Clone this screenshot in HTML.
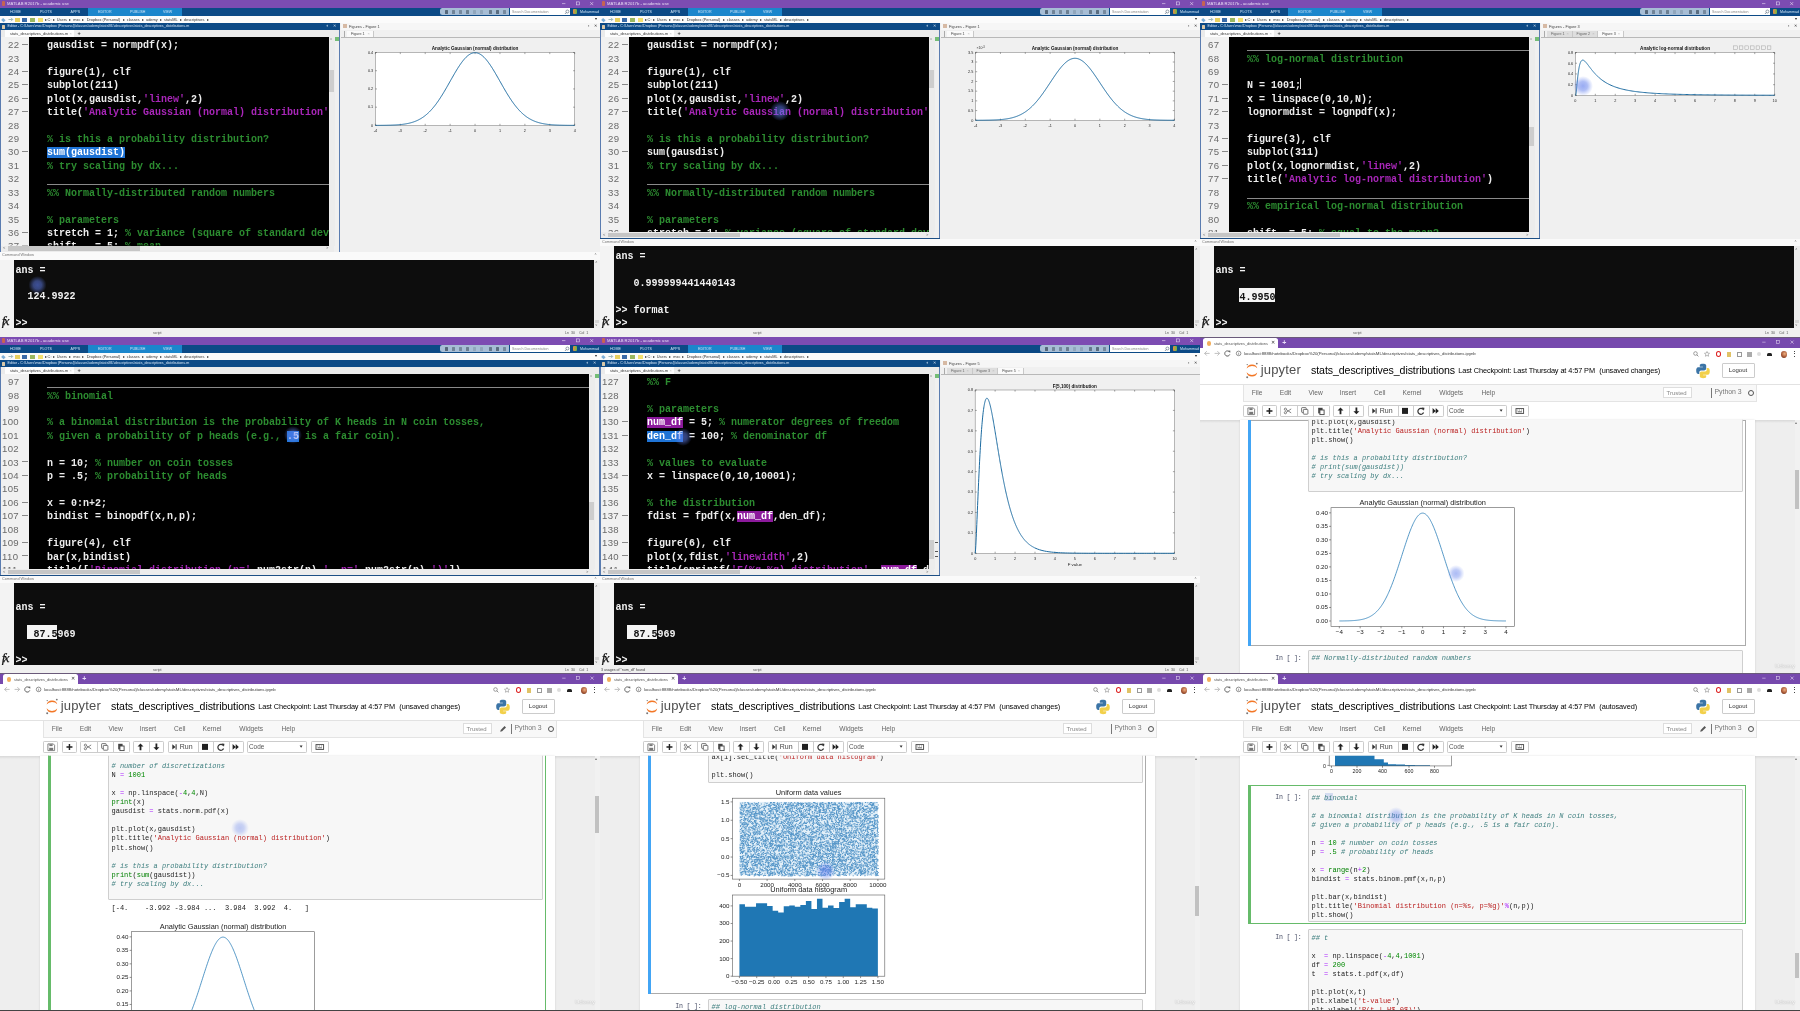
<!DOCTYPE html><html><head><meta charset="utf-8"><style>
*{margin:0;padding:0;box-sizing:border-box}
html,body{width:1800px;height:1011px;overflow:hidden;background:#fff}
.w{color:#ececec}.g{color:#2c8c30}.m{color:#a826b8}
.hl{background:#1f74d6;color:#fff}.pl{background:#8c1a9c;color:#fff}.jv{color:#222}.jc{color:#408080;font-style:italic}.jo{color:#a2f}.jn{color:#080}.js{color:#ba2121}.jb{color:#008000}
</style></head><body><div style="position:absolute;left:0px;top:0px;width:600px;height:337px;overflow:hidden;background:#f0f0f0;will-change:transform"><div style="position:absolute;left:0px;top:0px;width:600px;height:7.6px;background:#7c4cb2"></div><div style="position:absolute;left:1.5px;top:1.3px;width:3.5px;height:5px;background:#d86a3a;border-radius:1px;opacity:.8"></div><div style="position:absolute;left:7px;top:1.6px;font-family:'Liberation Sans',sans-serif;font-size:4.2px;line-height:4.2px;color:#e8dcf4;white-space:pre;">MATLAB R2017b - academic use</div><svg style="position:absolute;left:555px;top:0" width="45" height="8" viewBox="0 0 45 8"><path d="M7 3.6h3.4" stroke="#e8dcf4" stroke-width="0.6"/><rect x="21.3" y="1.9" width="3" height="3" fill="none" stroke="#e8dcf4" stroke-width="0.55"/><path d="M35.2 2.1l3 3M38.2 2.1l-3 3" stroke="#e8dcf4" stroke-width="0.6"/></svg><div style="position:absolute;left:0px;top:7.6px;width:600px;height:8.2px;background:#0c4a86"></div><div style="position:absolute;left:88px;top:7.6px;width:94px;height:8.2px;background:#1b86cc"></div><div style="position:absolute;left:10px;top:11.2px;font-family:'Liberation Sans',sans-serif;font-size:3.6px;line-height:3.6px;color:#cfe3f5;white-space:pre;">HOME</div><div style="position:absolute;left:40px;top:11.2px;font-family:'Liberation Sans',sans-serif;font-size:3.6px;line-height:3.6px;color:#cfe3f5;white-space:pre;">PLOTS</div><div style="position:absolute;left:70.5px;top:11.2px;font-family:'Liberation Sans',sans-serif;font-size:3.6px;line-height:3.6px;color:#cfe3f5;white-space:pre;">APPS</div><div style="position:absolute;left:98px;top:11.2px;font-family:'Liberation Sans',sans-serif;font-size:3.6px;line-height:3.6px;color:#cfe3f5;white-space:pre;">EDITOR</div><div style="position:absolute;left:130px;top:11.2px;font-family:'Liberation Sans',sans-serif;font-size:3.6px;line-height:3.6px;color:#cfe3f5;white-space:pre;">PUBLISH</div><div style="position:absolute;left:163px;top:11.2px;font-family:'Liberation Sans',sans-serif;font-size:3.6px;line-height:3.6px;color:#cfe3f5;white-space:pre;">VIEW</div><div style="position:absolute;left:440px;top:8.4px;width:69px;height:6.8px;background:#a6bdd5;border-radius:2.5px 0 0 2.5px"></div><div style="position:absolute;left:445px;top:10px;width:3.4px;height:3.6px;background:#3a4a5a;opacity:0.75;border-radius:.5px"></div><div style="position:absolute;left:452px;top:10px;width:3.4px;height:3.6px;background:#3a4a5a;opacity:0.5;border-radius:.5px"></div><div style="position:absolute;left:459px;top:10px;width:3.4px;height:3.6px;background:#3a4a5a;opacity:0.45;border-radius:.5px"></div><div style="position:absolute;left:466px;top:10px;width:3.4px;height:3.6px;background:#3a4a5a;opacity:0.55;border-radius:.5px"></div><div style="position:absolute;left:473px;top:10px;width:3.4px;height:3.6px;background:#3a4a5a;opacity:0.2;border-radius:.5px"></div><div style="position:absolute;left:480px;top:10px;width:3.4px;height:3.6px;background:#3a4a5a;opacity:0.2;border-radius:.5px"></div><div style="position:absolute;left:489px;top:10px;width:3.4px;height:3.6px;background:#3a4a5a;opacity:0.6;border-radius:.5px"></div><div style="position:absolute;left:496px;top:10px;width:3.4px;height:3.6px;background:#3a4a5a;opacity:0.7;border-radius:.5px"></div><div style="position:absolute;left:503px;top:10px;width:3.4px;height:3.6px;background:#3a4a5a;opacity:0.45;border-radius:.5px"></div><div style="position:absolute;left:510px;top:8.2px;width:59.5px;height:7px;background:#fff"></div><div style="position:absolute;left:512px;top:10.8px;font-family:'Liberation Sans',sans-serif;font-size:3.6px;line-height:3.6px;color:#8a8a8a;white-space:pre;">Search Documentation</div><svg style="position:absolute;left:564px;top:9px" width="6" height="6" viewBox="0 0 6 6"><circle cx="3.4" cy="2.5" r="1.5" fill="none" stroke="#567" stroke-width="0.6"/><path d="M2.4 3.5L1 4.9" stroke="#567" stroke-width="0.7"/></svg><div style="position:absolute;left:572.5px;top:9.2px;width:4px;height:5px;background:linear-gradient(90deg,#e84 ,#6b4);border-radius:1px"></div><div style="position:absolute;left:580px;top:10.6px;font-family:'Liberation Sans',sans-serif;font-size:3.6px;line-height:3.6px;color:#cfe3f5;white-space:pre;">Mohammad &#9662;</div><div style="position:absolute;left:0px;top:15.8px;width:600px;height:7.5px;background:#fbfbfb"></div><div style="position:absolute;left:1px;top:17.5px;width:4.5px;height:4px;background:#7fb0d8;transform:rotate(45deg) scale(.7)"></div><svg style="position:absolute;left:7.5px;top:17px" width="6" height="5" viewBox="0 0 6 5"><path d="M0.5 2.5h4M3 0.8l1.7 1.7L3 4.2" fill="none" stroke="#8aa" stroke-width="0.8"/></svg><div style="position:absolute;left:15px;top:17.5px;width:5px;height:4px;background:#e8d060"></div><div style="position:absolute;left:22px;top:17.5px;width:5px;height:4.5px;background:#3a6aa8"></div><div style="position:absolute;left:29.5px;top:17.5px;width:5px;height:4px;background:#9ab860"></div><div style="position:absolute;left:37.5px;top:17.5px;width:5px;height:4.2px;background:#f4e070"></div><div style="position:absolute;left:44.5px;top:17.6px;font-family:'Liberation Sans',sans-serif;font-size:3.9px;line-height:3.9px;color:#333;white-space:pre;">&#9656; C: &#9656;  Users  &#9656;  mxc  &#9656;  Dropbox (Personal)  &#9656;  classes  &#9656;  udemy  &#9656;  statsML  &#9656;  descriptives  &#9656;</div><div style="position:absolute;left:595px;top:17.2px;font-family:'Liberation Sans',sans-serif;font-size:4px;line-height:4px;color:#222;white-space:pre;">&#9662;</div><div style="position:absolute;left:0px;top:23.3px;width:340px;height:228.6px;background:#f0f0f0"></div><div style="position:absolute;left:0px;top:23.3px;width:1.0px;height:228.6px;background:#5a7cb0"></div><div style="position:absolute;left:339.0px;top:23.3px;width:1.0px;height:228.6px;background:#5a7cb0"></div><div style="position:absolute;left:0px;top:23.3px;width:340px;height:6.6px;background:#0c4a86"></div><div style="position:absolute;left:1.5px;top:24.5px;width:3.8px;height:4px;background:#d9c8a8;border-radius:.5px"></div><div style="position:absolute;left:7.5px;top:24.7px;font-family:'Liberation Sans',sans-serif;font-size:3.65px;line-height:3.65px;color:#d6e6f6;white-space:pre;">Editor - C:\Users\mxc\Dropbox (Personal)\classes\udemy\statsML\descriptives\stats_descriptives_distributions.m</div><div style="position:absolute;left:326.5px;top:24.2px;font-family:'Liberation Sans',sans-serif;font-size:4.5px;line-height:4.5px;color:#cde;white-space:pre;">&#9680;</div><div style="position:absolute;left:333px;top:24.3px;font-family:'Liberation Sans',sans-serif;font-size:4.2px;line-height:4.2px;color:#cde;white-space:pre;">&#10005;</div><div style="position:absolute;left:1.3px;top:29.9px;width:337.4px;height:7.1px;background:#ebebeb"></div><div style="position:absolute;left:5px;top:30.2px;width:69px;height:6.8px;background:#fdfdfd"></div><div style="position:absolute;left:10px;top:31.6px;font-family:'Liberation Sans',sans-serif;font-size:3.9px;line-height:3.9px;color:#333;white-space:pre;">stats_descriptives_distributions.m</div><div style="position:absolute;left:69.5px;top:31.5px;font-family:'Liberation Sans',sans-serif;font-size:4px;line-height:4px;color:#bbb;white-space:pre;">&#215;</div><div style="position:absolute;left:77.5px;top:30.6px;font-family:'Liberation Sans',sans-serif;font-size:5.5px;line-height:5.5px;color:#333;white-space:pre;font-weight:bold">+</div><div style="position:absolute;left:1.3px;top:37px;width:27.3px;height:208.5px;background:#f1f1f1"></div><div style="position:absolute;left:28.6px;top:37px;width:300.09999999999997px;height:208.5px;background:#000"></div><div style="position:absolute;left:328.7px;top:37px;width:6px;height:208.5px;background:#ececec"></div><div style="position:absolute;left:329.2px;top:70px;width:5px;height:22px;background:#cdcdcd"></div><div style="position:absolute;left:329.9px;top:38px;font-family:'Liberation Sans',sans-serif;font-size:3.5px;line-height:3.5px;color:#777;white-space:pre;">&#708;</div><div style="position:absolute;left:334.7px;top:37px;width:4.2px;height:4.4px;background:#74bd76"></div><div style="position:absolute;left:1.3px;top:245.5px;width:332.4px;height:6px;background:#ececec"></div><div style="position:absolute;left:8px;top:246.1px;width:132px;height:4.6px;background:#c6c6c6"></div><div style="position:absolute;left:3px;top:246.4px;font-family:'Liberation Sans',sans-serif;font-size:4px;line-height:4px;color:#666;white-space:pre;">&#706;</div><div style="position:absolute;left:326px;top:246.4px;font-family:'Liberation Sans',sans-serif;font-size:4px;line-height:4px;color:#666;white-space:pre;">&#707;</div><div style="position:absolute;left:0px;top:251.5px;width:340px;height:0.8px;background:#1d4f85"></div><div style="position:absolute;left:0;top:0;width:600px;height:245.5px;overflow:hidden;clip-path:inset(37px 0 0 0)"><div style="position:absolute;left:8px;top:40.1px;font-family:'Liberation Sans',sans-serif;font-size:9.6px;line-height:9.6px;color:#6a6a6a;white-space:pre;letter-spacing:0.35px">22</div><div style="position:absolute;left:21.5px;top:43.9px;width:6px;height:0.9px;background:#888"></div><div style="position:absolute;left:8px;top:53.52px;font-family:'Liberation Sans',sans-serif;font-size:9.6px;line-height:9.6px;color:#6a6a6a;white-space:pre;letter-spacing:0.35px">23</div><div style="position:absolute;left:8px;top:66.94px;font-family:'Liberation Sans',sans-serif;font-size:9.6px;line-height:9.6px;color:#6a6a6a;white-space:pre;letter-spacing:0.35px">24</div><div style="position:absolute;left:21.5px;top:70.74px;width:6px;height:0.9px;background:#888"></div><div style="position:absolute;left:8px;top:80.36px;font-family:'Liberation Sans',sans-serif;font-size:9.6px;line-height:9.6px;color:#6a6a6a;white-space:pre;letter-spacing:0.35px">25</div><div style="position:absolute;left:21.5px;top:84.16px;width:6px;height:0.9px;background:#888"></div><div style="position:absolute;left:8px;top:93.78px;font-family:'Liberation Sans',sans-serif;font-size:9.6px;line-height:9.6px;color:#6a6a6a;white-space:pre;letter-spacing:0.35px">26</div><div style="position:absolute;left:21.5px;top:97.58px;width:6px;height:0.9px;background:#888"></div><div style="position:absolute;left:8px;top:107.19999999999999px;font-family:'Liberation Sans',sans-serif;font-size:9.6px;line-height:9.6px;color:#6a6a6a;white-space:pre;letter-spacing:0.35px">27</div><div style="position:absolute;left:21.5px;top:110.99999999999999px;width:6px;height:0.9px;background:#888"></div><div style="position:absolute;left:8px;top:120.62px;font-family:'Liberation Sans',sans-serif;font-size:9.6px;line-height:9.6px;color:#6a6a6a;white-space:pre;letter-spacing:0.35px">28</div><div style="position:absolute;left:8px;top:134.04px;font-family:'Liberation Sans',sans-serif;font-size:9.6px;line-height:9.6px;color:#6a6a6a;white-space:pre;letter-spacing:0.35px">29</div><div style="position:absolute;left:8px;top:147.46px;font-family:'Liberation Sans',sans-serif;font-size:9.6px;line-height:9.6px;color:#6a6a6a;white-space:pre;letter-spacing:0.35px">30</div><div style="position:absolute;left:21.5px;top:151.26000000000002px;width:6px;height:0.9px;background:#888"></div><div style="position:absolute;left:8px;top:160.88px;font-family:'Liberation Sans',sans-serif;font-size:9.6px;line-height:9.6px;color:#6a6a6a;white-space:pre;letter-spacing:0.35px">31</div><div style="position:absolute;left:8px;top:174.29999999999998px;font-family:'Liberation Sans',sans-serif;font-size:9.6px;line-height:9.6px;color:#6a6a6a;white-space:pre;letter-spacing:0.35px">32</div><div style="position:absolute;left:8px;top:187.72px;font-family:'Liberation Sans',sans-serif;font-size:9.6px;line-height:9.6px;color:#6a6a6a;white-space:pre;letter-spacing:0.35px">33</div><div style="position:absolute;left:8px;top:201.14px;font-family:'Liberation Sans',sans-serif;font-size:9.6px;line-height:9.6px;color:#6a6a6a;white-space:pre;letter-spacing:0.35px">34</div><div style="position:absolute;left:8px;top:214.56px;font-family:'Liberation Sans',sans-serif;font-size:9.6px;line-height:9.6px;color:#6a6a6a;white-space:pre;letter-spacing:0.35px">35</div><div style="position:absolute;left:8px;top:227.98px;font-family:'Liberation Sans',sans-serif;font-size:9.6px;line-height:9.6px;color:#6a6a6a;white-space:pre;letter-spacing:0.35px">36</div><div style="position:absolute;left:21.5px;top:231.78px;width:6px;height:0.9px;background:#888"></div><div style="position:absolute;left:8px;top:241.4px;font-family:'Liberation Sans',sans-serif;font-size:9.6px;line-height:9.6px;color:#6a6a6a;white-space:pre;letter-spacing:0.35px">37</div><div style="position:absolute;left:21.5px;top:245.20000000000002px;width:6px;height:0.9px;background:#888"></div><div style="position:absolute;left:28.6px;top:37px;width:300.09999999999997px;height:208.5px;overflow:hidden"><div style="position:absolute;left:-28.6px;top:-37px;font-family:'Liberation Mono',monospace;font-size:10px;line-height:13.42px;font-weight:bold;color:#fff"><div style="position:absolute;left:47px;top:39.1px;height:13.42px;white-space:pre"><span class="w">gausdist = normpdf(x);</span></div><div style="position:absolute;left:47px;top:52.52px;height:13.42px;white-space:pre"></div><div style="position:absolute;left:47px;top:65.94px;height:13.42px;white-space:pre"><span class="w">figure(1), clf</span></div><div style="position:absolute;left:47px;top:79.36px;height:13.42px;white-space:pre"><span class="w">subplot(211)</span></div><div style="position:absolute;left:47px;top:92.78px;height:13.42px;white-space:pre"><span class="w">plot(x,gausdist,</span><span class="m">&#x27;linew&#x27;</span><span class="w">,2)</span></div><div style="position:absolute;left:47px;top:106.19999999999999px;height:13.42px;white-space:pre"><span class="w">title(</span><span class="m">&#x27;Analytic Gaussian (normal) distribution&#x27;</span><span class="w">)</span></div><div style="position:absolute;left:47px;top:119.62px;height:13.42px;white-space:pre"></div><div style="position:absolute;left:47px;top:133.04px;height:13.42px;white-space:pre"><span class="g">% is this a probability distribution?</span></div><div style="position:absolute;left:47px;top:146.46px;height:13.42px;white-space:pre"><span class="hl">sum(gausdist)</span></div><div style="position:absolute;left:47px;top:159.88px;height:13.42px;white-space:pre"><span class="g">% try scaling by dx...</span></div><div style="position:absolute;left:47px;top:173.29999999999998px;height:13.42px;white-space:pre"></div><div style="position:absolute;left:47px;top:186.72px;height:13.42px;white-space:pre"><span class="g">%% Normally-distributed random numbers</span></div><div style="position:absolute;left:47px;top:200.14px;height:13.42px;white-space:pre"></div><div style="position:absolute;left:47px;top:213.56px;height:13.42px;white-space:pre"><span class="g">% parameters</span></div><div style="position:absolute;left:47px;top:226.98px;height:13.42px;white-space:pre"><span class="w">stretch = 1; </span><span class="g">% variance (square of standard deviation)</span></div><div style="position:absolute;left:47px;top:240.4px;height:13.42px;white-space:pre"><span class="w">shift   = 5; </span><span class="g">% mean</span></div></div></div></div><div style="position:absolute;left:47px;top:184.3px;width:282px;height:0.9px;background:#8a8a8a"></div><div style="position:absolute;left:0px;top:252.0px;width:600px;height:7.5px;background:#fafafa"></div><div style="position:absolute;left:2px;top:253.9px;font-family:'Liberation Sans',sans-serif;font-size:3.8px;line-height:3.8px;color:#777;white-space:pre;">Command Window</div><div style="position:absolute;left:594.5px;top:252.7px;font-family:'Liberation Sans',sans-serif;font-size:3.5px;line-height:3.5px;color:#777;white-space:pre;">&#708;</div><div style="position:absolute;left:0px;top:259.5px;width:14.2px;height:68.5px;background:#f3f3f3"></div><div style="position:absolute;left:14.2px;top:259.5px;width:580px;height:68.5px;background:#0d0d0d"></div><div style="position:absolute;left:594.2px;top:259.5px;width:5.8px;height:68.5px;background:#ececec"></div><div style="position:absolute;left:594.8px;top:320px;width:4.5px;height:3.2px;background:#d4d4d4"></div><div style="position:absolute;left:595.3px;top:260.7px;font-family:'Liberation Sans',sans-serif;font-size:3.6px;line-height:3.6px;color:#666;white-space:pre;">&#708;</div><div style="position:absolute;left:595.3px;top:324.4px;font-family:'Liberation Sans',sans-serif;font-size:3.6px;line-height:3.6px;color:#666;white-space:pre;">&#709;</div><div style="position:absolute;left:1.8px;top:314.2px;font-family:'Liberation Sans',sans-serif;font-size:13.5px;line-height:13.5px;color:#111;white-space:pre;font-family:'Liberation Serif',serif;letter-spacing:-2.0px;-webkit-text-stroke:0.25px #111"><i>f</i><i>x</i></div><div style="position:absolute;left:0px;top:328px;width:600px;height:8px;background:#f0f0f0"></div><div style="position:absolute;left:0;top:0;width:594px;height:328px;overflow:hidden;clip-path:inset(259.5px 0 0 14px);font-family:'Liberation Mono',monospace;font-size:10px;line-height:13.42px;font-weight:bold;color:#f2f2f2"><div style="position:absolute;left:15.5px;top:263.5px;height:13.42px;white-space:pre">ans =</div><div style="position:absolute;left:15.5px;top:276.92px;height:13.42px;white-space:pre"></div><div style="position:absolute;left:15.5px;top:290.34px;height:13.42px;white-space:pre">  124.9922</div><div style="position:absolute;left:15.5px;top:303.76px;height:13.42px;white-space:pre"></div><div style="position:absolute;left:15.5px;top:317.18px;height:13.42px;white-space:pre">&gt;&gt;</div></div><div style="position:absolute;left:153px;top:332.2px;font-family:'Liberation Sans',sans-serif;font-size:3.6px;line-height:3.6px;color:#555;white-space:pre;">script</div><div style="position:absolute;left:565px;top:332.2px;font-family:'Liberation Sans',sans-serif;font-size:3.6px;line-height:3.6px;color:#555;white-space:pre;">Ln  30    Col  1</div><div style="position:absolute;left:340.5px;top:23.3px;width:259.5px;height:228.0px;background:#f0f0f0"></div><div style="position:absolute;left:340.5px;top:23.3px;width:259.5px;height:6.6px;background:#f6f6f6"></div><div style="position:absolute;left:343.0px;top:24.3px;width:3.5px;height:4.2px;background:#c9a080;opacity:.7"></div><div style="position:absolute;left:349.0px;top:24.8px;font-family:'Liberation Sans',sans-serif;font-size:3.9px;line-height:3.9px;color:#444;white-space:pre;">Figures - Figure 1</div><div style="position:absolute;left:588.0px;top:24.3px;font-family:'Liberation Sans',sans-serif;font-size:4.2px;line-height:4.2px;color:#777;white-space:pre;">&#9680;</div><div style="position:absolute;left:594.0px;top:24.4px;font-family:'Liberation Sans',sans-serif;font-size:4px;line-height:4px;color:#333;white-space:pre;">&#10005;</div><div style="position:absolute;left:340.5px;top:36.8px;width:259.5px;height:0.7px;background:#b8b8b8"></div><div style="position:absolute;left:344.0px;top:31.4px;width:0.6px;height:5.2px;background:#aaa"></div><div style="position:absolute;left:347.0px;top:30.6px;width:26.5px;height:6.4px;background:#fafafa;border-right:0.6px solid #c8c8c8"></div><div style="position:absolute;left:351.0px;top:32.6px;font-family:'Liberation Sans',sans-serif;font-size:3.7px;line-height:3.7px;color:#444;white-space:pre;">Figure 1</div><div style="position:absolute;left:367.5px;top:32.4px;font-family:'Liberation Sans',sans-serif;font-size:4px;line-height:4px;color:#bbb;white-space:pre;">&#215;</div><svg style="position:absolute;left:0;top:0" width="600" height="251.3" viewBox="0 0 600 251.3"><rect x="375.4" y="52.5" width="199.3" height="72.9" fill="#fff" stroke="#8a8a8a" stroke-width="0.6"/><line x1="375.40" y1="125.4" x2="375.40" y2="123.80000000000001" stroke="#333" stroke-width="0.45"/><line x1="375.40" y1="52.5" x2="375.40" y2="54.1" stroke="#333" stroke-width="0.45"/><text x="375.40" y="131.70000000000002" font-size="3.8" font-family="Liberation Sans" fill="#222" text-anchor="middle">-4</text><line x1="400.31" y1="125.4" x2="400.31" y2="123.80000000000001" stroke="#333" stroke-width="0.45"/><line x1="400.31" y1="52.5" x2="400.31" y2="54.1" stroke="#333" stroke-width="0.45"/><text x="400.31" y="131.70000000000002" font-size="3.8" font-family="Liberation Sans" fill="#222" text-anchor="middle">-3</text><line x1="425.22" y1="125.4" x2="425.22" y2="123.80000000000001" stroke="#333" stroke-width="0.45"/><line x1="425.22" y1="52.5" x2="425.22" y2="54.1" stroke="#333" stroke-width="0.45"/><text x="425.22" y="131.70000000000002" font-size="3.8" font-family="Liberation Sans" fill="#222" text-anchor="middle">-2</text><line x1="450.14" y1="125.4" x2="450.14" y2="123.80000000000001" stroke="#333" stroke-width="0.45"/><line x1="450.14" y1="52.5" x2="450.14" y2="54.1" stroke="#333" stroke-width="0.45"/><text x="450.14" y="131.70000000000002" font-size="3.8" font-family="Liberation Sans" fill="#222" text-anchor="middle">-1</text><line x1="475.05" y1="125.4" x2="475.05" y2="123.80000000000001" stroke="#333" stroke-width="0.45"/><line x1="475.05" y1="52.5" x2="475.05" y2="54.1" stroke="#333" stroke-width="0.45"/><text x="475.05" y="131.70000000000002" font-size="3.8" font-family="Liberation Sans" fill="#222" text-anchor="middle">0</text><line x1="499.96" y1="125.4" x2="499.96" y2="123.80000000000001" stroke="#333" stroke-width="0.45"/><line x1="499.96" y1="52.5" x2="499.96" y2="54.1" stroke="#333" stroke-width="0.45"/><text x="499.96" y="131.70000000000002" font-size="3.8" font-family="Liberation Sans" fill="#222" text-anchor="middle">1</text><line x1="524.88" y1="125.4" x2="524.88" y2="123.80000000000001" stroke="#333" stroke-width="0.45"/><line x1="524.88" y1="52.5" x2="524.88" y2="54.1" stroke="#333" stroke-width="0.45"/><text x="524.88" y="131.70000000000002" font-size="3.8" font-family="Liberation Sans" fill="#222" text-anchor="middle">2</text><line x1="549.79" y1="125.4" x2="549.79" y2="123.80000000000001" stroke="#333" stroke-width="0.45"/><line x1="549.79" y1="52.5" x2="549.79" y2="54.1" stroke="#333" stroke-width="0.45"/><text x="549.79" y="131.70000000000002" font-size="3.8" font-family="Liberation Sans" fill="#222" text-anchor="middle">3</text><line x1="574.70" y1="125.4" x2="574.70" y2="123.80000000000001" stroke="#333" stroke-width="0.45"/><line x1="574.70" y1="52.5" x2="574.70" y2="54.1" stroke="#333" stroke-width="0.45"/><text x="574.70" y="131.70000000000002" font-size="3.8" font-family="Liberation Sans" fill="#222" text-anchor="middle">4</text><line x1="375.4" y1="125.40" x2="377.0" y2="125.40" stroke="#333" stroke-width="0.45"/><line x1="574.7" y1="125.40" x2="573.1" y2="125.40" stroke="#333" stroke-width="0.45"/><text x="373.2" y="126.70" font-size="3.8" font-family="Liberation Sans" fill="#222" text-anchor="end">0</text><line x1="375.4" y1="107.18" x2="377.0" y2="107.18" stroke="#333" stroke-width="0.45"/><line x1="574.7" y1="107.18" x2="573.1" y2="107.18" stroke="#333" stroke-width="0.45"/><text x="373.2" y="108.48" font-size="3.8" font-family="Liberation Sans" fill="#222" text-anchor="end">0.1</text><line x1="375.4" y1="88.95" x2="377.0" y2="88.95" stroke="#333" stroke-width="0.45"/><line x1="574.7" y1="88.95" x2="573.1" y2="88.95" stroke="#333" stroke-width="0.45"/><text x="373.2" y="90.25" font-size="3.8" font-family="Liberation Sans" fill="#222" text-anchor="end">0.2</text><line x1="375.4" y1="70.73" x2="377.0" y2="70.73" stroke="#333" stroke-width="0.45"/><line x1="574.7" y1="70.73" x2="573.1" y2="70.73" stroke="#333" stroke-width="0.45"/><text x="373.2" y="72.03" font-size="3.8" font-family="Liberation Sans" fill="#222" text-anchor="end">0.3</text><line x1="375.4" y1="52.50" x2="377.0" y2="52.50" stroke="#333" stroke-width="0.45"/><line x1="574.7" y1="52.50" x2="573.1" y2="52.50" stroke="#333" stroke-width="0.45"/><text x="373.2" y="53.80" font-size="3.8" font-family="Liberation Sans" fill="#222" text-anchor="end">0.4</text><text x="475.04999999999995" y="50.2" font-size="4.65" font-weight="bold" font-family="Liberation Sans" fill="#111" text-anchor="middle">Analytic Gaussian (normal) distribution</text><path d="M375.40,125.38 L375.90,125.37 L376.40,125.37 L376.89,125.37 L377.39,125.37 L377.89,125.36 L378.39,125.36 L378.89,125.36 L379.39,125.35 L379.88,125.35 L380.38,125.35 L380.88,125.34 L381.38,125.34 L381.88,125.33 L382.38,125.33 L382.87,125.32 L383.37,125.32 L383.87,125.31 L384.37,125.30 L384.87,125.30 L385.36,125.29 L385.86,125.28 L386.36,125.27 L386.86,125.26 L387.36,125.25 L387.86,125.24 L388.35,125.23 L388.85,125.22 L389.35,125.20 L389.85,125.19 L390.35,125.18 L390.85,125.16 L391.34,125.14 L391.84,125.13 L392.34,125.11 L392.84,125.09 L393.34,125.06 L393.84,125.04 L394.33,125.02 L394.83,124.99 L395.33,124.97 L395.83,124.94 L396.33,124.91 L396.82,124.87 L397.32,124.84 L397.82,124.80 L398.32,124.77 L398.82,124.73 L399.32,124.68 L399.81,124.64 L400.31,124.59 L400.81,124.54 L401.31,124.49 L401.81,124.43 L402.31,124.38 L402.80,124.32 L403.30,124.25 L403.80,124.18 L404.30,124.11 L404.80,124.04 L405.29,123.96 L405.79,123.87 L406.29,123.79 L406.79,123.70 L407.29,123.60 L407.79,123.50 L408.28,123.40 L408.78,123.29 L409.28,123.17 L409.78,123.05 L410.28,122.92 L410.78,122.79 L411.27,122.66 L411.77,122.51 L412.27,122.36 L412.77,122.21 L413.27,122.04 L413.77,121.87 L414.26,121.70 L414.76,121.51 L415.26,121.32 L415.76,121.12 L416.26,120.91 L416.75,120.69 L417.25,120.47 L417.75,120.24 L418.25,120.00 L418.75,119.74 L419.25,119.48 L419.74,119.21 L420.24,118.93 L420.74,118.65 L421.24,118.35 L421.74,118.04 L422.24,117.72 L422.73,117.38 L423.23,117.04 L423.73,116.69 L424.23,116.32 L424.73,115.95 L425.22,115.56 L425.72,115.16 L426.22,114.75 L426.72,114.33 L427.22,113.89 L427.72,113.44 L428.21,112.98 L428.71,112.51 L429.21,112.02 L429.71,111.52 L430.21,111.01 L430.71,110.49 L431.20,109.95 L431.70,109.40 L432.20,108.84 L432.70,108.26 L433.20,107.67 L433.70,107.07 L434.19,106.45 L434.69,105.83 L435.19,105.18 L435.69,104.53 L436.19,103.87 L436.68,103.19 L437.18,102.50 L437.68,101.80 L438.18,101.08 L438.68,100.36 L439.18,99.62 L439.67,98.87 L440.17,98.11 L440.67,97.34 L441.17,96.56 L441.67,95.77 L442.17,94.98 L442.66,94.17 L443.16,93.35 L443.66,92.53 L444.16,91.70 L444.66,90.86 L445.15,90.01 L445.65,89.16 L446.15,88.30 L446.65,87.44 L447.15,86.57 L447.65,85.70 L448.14,84.82 L448.64,83.94 L449.14,83.06 L449.64,82.18 L450.14,81.30 L450.64,80.42 L451.13,79.54 L451.63,78.66 L452.13,77.78 L452.63,76.91 L453.13,76.04 L453.63,75.17 L454.12,74.31 L454.62,73.45 L455.12,72.60 L455.62,71.76 L456.12,70.93 L456.61,70.11 L457.11,69.29 L457.61,68.49 L458.11,67.70 L458.61,66.92 L459.11,66.16 L459.60,65.41 L460.10,64.67 L460.60,63.95 L461.10,63.24 L461.60,62.56 L462.10,61.89 L462.59,61.24 L463.09,60.60 L463.59,59.99 L464.09,59.40 L464.59,58.83 L465.08,58.28 L465.58,57.76 L466.08,57.25 L466.58,56.78 L467.08,56.32 L467.58,55.89 L468.07,55.49 L468.57,55.11 L469.07,54.76 L469.57,54.43 L470.07,54.13 L470.57,53.86 L471.06,53.62 L471.56,53.40 L472.06,53.21 L472.56,53.06 L473.06,52.93 L473.56,52.82 L474.05,52.75 L474.55,52.71 L475.05,52.69 L475.55,52.71 L476.05,52.75 L476.54,52.82 L477.04,52.93 L477.54,53.06 L478.04,53.21 L478.54,53.40 L479.04,53.62 L479.53,53.86 L480.03,54.13 L480.53,54.43 L481.03,54.76 L481.53,55.11 L482.03,55.49 L482.52,55.89 L483.02,56.32 L483.52,56.78 L484.02,57.25 L484.52,57.76 L485.01,58.28 L485.51,58.83 L486.01,59.40 L486.51,59.99 L487.01,60.60 L487.51,61.24 L488.00,61.89 L488.50,62.56 L489.00,63.24 L489.50,63.95 L490.00,64.67 L490.50,65.41 L490.99,66.16 L491.49,66.92 L491.99,67.70 L492.49,68.49 L492.99,69.29 L493.49,70.11 L493.98,70.93 L494.48,71.76 L494.98,72.60 L495.48,73.45 L495.98,74.31 L496.47,75.17 L496.97,76.04 L497.47,76.91 L497.97,77.78 L498.47,78.66 L498.97,79.54 L499.46,80.42 L499.96,81.30 L500.46,82.18 L500.96,83.06 L501.46,83.94 L501.96,84.82 L502.45,85.70 L502.95,86.57 L503.45,87.44 L503.95,88.30 L504.45,89.16 L504.94,90.01 L505.44,90.86 L505.94,91.70 L506.44,92.53 L506.94,93.35 L507.44,94.17 L507.93,94.98 L508.43,95.77 L508.93,96.56 L509.43,97.34 L509.93,98.11 L510.43,98.87 L510.92,99.62 L511.42,100.36 L511.92,101.08 L512.42,101.80 L512.92,102.50 L513.42,103.19 L513.91,103.87 L514.41,104.53 L514.91,105.18 L515.41,105.83 L515.91,106.45 L516.40,107.07 L516.90,107.67 L517.40,108.26 L517.90,108.84 L518.40,109.40 L518.90,109.95 L519.39,110.49 L519.89,111.01 L520.39,111.52 L520.89,112.02 L521.39,112.51 L521.89,112.98 L522.38,113.44 L522.88,113.89 L523.38,114.33 L523.88,114.75 L524.38,115.16 L524.88,115.56 L525.37,115.95 L525.87,116.32 L526.37,116.69 L526.87,117.04 L527.37,117.38 L527.86,117.72 L528.36,118.04 L528.86,118.35 L529.36,118.65 L529.86,118.93 L530.36,119.21 L530.85,119.48 L531.35,119.74 L531.85,120.00 L532.35,120.24 L532.85,120.47 L533.35,120.69 L533.84,120.91 L534.34,121.12 L534.84,121.32 L535.34,121.51 L535.84,121.70 L536.33,121.87 L536.83,122.04 L537.33,122.21 L537.83,122.36 L538.33,122.51 L538.83,122.66 L539.32,122.79 L539.82,122.92 L540.32,123.05 L540.82,123.17 L541.32,123.29 L541.82,123.40 L542.31,123.50 L542.81,123.60 L543.31,123.70 L543.81,123.79 L544.31,123.87 L544.80,123.96 L545.30,124.04 L545.80,124.11 L546.30,124.18 L546.80,124.25 L547.30,124.32 L547.79,124.38 L548.29,124.43 L548.79,124.49 L549.29,124.54 L549.79,124.59 L550.29,124.64 L550.78,124.68 L551.28,124.73 L551.78,124.77 L552.28,124.80 L552.78,124.84 L553.28,124.87 L553.77,124.91 L554.27,124.94 L554.77,124.97 L555.27,124.99 L555.77,125.02 L556.26,125.04 L556.76,125.06 L557.26,125.09 L557.76,125.11 L558.26,125.13 L558.76,125.14 L559.25,125.16 L559.75,125.18 L560.25,125.19 L560.75,125.20 L561.25,125.22 L561.75,125.23 L562.24,125.24 L562.74,125.25 L563.24,125.26 L563.74,125.27 L564.24,125.28 L564.74,125.29 L565.23,125.30 L565.73,125.30 L566.23,125.31 L566.73,125.32 L567.23,125.32 L567.72,125.33 L568.22,125.33 L568.72,125.34 L569.22,125.34 L569.72,125.35 L570.22,125.35 L570.71,125.35 L571.21,125.36 L571.71,125.36 L572.21,125.36 L572.71,125.37 L573.21,125.37 L573.70,125.37 L574.20,125.37 L574.70,125.38" fill="none" stroke="#1c6aa0" stroke-width="1.0" stroke-linejoin="round"/></svg><div style="position:absolute;left:28.4px;top:275.9px;width:18.2px;height:18.2px;border-radius:50%;background:radial-gradient(circle closest-side,rgba(90,120,235,0.62) 0%,rgba(95,125,235,0.50) 45%,rgba(100,130,240,0.22) 75%,rgba(100,130,240,0) 100%)"></div></div><div style="position:absolute;left:600px;top:0px;width:600px;height:337px;overflow:hidden;background:#f0f0f0;will-change:transform"><div style="position:absolute;left:0px;top:0px;width:600px;height:7.6px;background:#7c4cb2"></div><div style="position:absolute;left:1.5px;top:1.3px;width:3.5px;height:5px;background:#d86a3a;border-radius:1px;opacity:.8"></div><div style="position:absolute;left:7px;top:1.6px;font-family:'Liberation Sans',sans-serif;font-size:4.2px;line-height:4.2px;color:#e8dcf4;white-space:pre;">MATLAB R2017b - academic use</div><svg style="position:absolute;left:555px;top:0" width="45" height="8" viewBox="0 0 45 8"><path d="M7 3.6h3.4" stroke="#e8dcf4" stroke-width="0.6"/><rect x="21.3" y="1.9" width="3" height="3" fill="none" stroke="#e8dcf4" stroke-width="0.55"/><path d="M35.2 2.1l3 3M38.2 2.1l-3 3" stroke="#e8dcf4" stroke-width="0.6"/></svg><div style="position:absolute;left:0px;top:7.6px;width:600px;height:8.2px;background:#0c4a86"></div><div style="position:absolute;left:88px;top:7.6px;width:94px;height:8.2px;background:#1b86cc"></div><div style="position:absolute;left:10px;top:11.2px;font-family:'Liberation Sans',sans-serif;font-size:3.6px;line-height:3.6px;color:#cfe3f5;white-space:pre;">HOME</div><div style="position:absolute;left:40px;top:11.2px;font-family:'Liberation Sans',sans-serif;font-size:3.6px;line-height:3.6px;color:#cfe3f5;white-space:pre;">PLOTS</div><div style="position:absolute;left:70.5px;top:11.2px;font-family:'Liberation Sans',sans-serif;font-size:3.6px;line-height:3.6px;color:#cfe3f5;white-space:pre;">APPS</div><div style="position:absolute;left:98px;top:11.2px;font-family:'Liberation Sans',sans-serif;font-size:3.6px;line-height:3.6px;color:#cfe3f5;white-space:pre;">EDITOR</div><div style="position:absolute;left:130px;top:11.2px;font-family:'Liberation Sans',sans-serif;font-size:3.6px;line-height:3.6px;color:#cfe3f5;white-space:pre;">PUBLISH</div><div style="position:absolute;left:163px;top:11.2px;font-family:'Liberation Sans',sans-serif;font-size:3.6px;line-height:3.6px;color:#cfe3f5;white-space:pre;">VIEW</div><div style="position:absolute;left:440px;top:8.4px;width:69px;height:6.8px;background:#a6bdd5;border-radius:2.5px 0 0 2.5px"></div><div style="position:absolute;left:445px;top:10px;width:3.4px;height:3.6px;background:#3a4a5a;opacity:0.75;border-radius:.5px"></div><div style="position:absolute;left:452px;top:10px;width:3.4px;height:3.6px;background:#3a4a5a;opacity:0.5;border-radius:.5px"></div><div style="position:absolute;left:459px;top:10px;width:3.4px;height:3.6px;background:#3a4a5a;opacity:0.45;border-radius:.5px"></div><div style="position:absolute;left:466px;top:10px;width:3.4px;height:3.6px;background:#3a4a5a;opacity:0.55;border-radius:.5px"></div><div style="position:absolute;left:473px;top:10px;width:3.4px;height:3.6px;background:#3a4a5a;opacity:0.2;border-radius:.5px"></div><div style="position:absolute;left:480px;top:10px;width:3.4px;height:3.6px;background:#3a4a5a;opacity:0.2;border-radius:.5px"></div><div style="position:absolute;left:489px;top:10px;width:3.4px;height:3.6px;background:#3a4a5a;opacity:0.6;border-radius:.5px"></div><div style="position:absolute;left:496px;top:10px;width:3.4px;height:3.6px;background:#3a4a5a;opacity:0.7;border-radius:.5px"></div><div style="position:absolute;left:503px;top:10px;width:3.4px;height:3.6px;background:#3a4a5a;opacity:0.45;border-radius:.5px"></div><div style="position:absolute;left:510px;top:8.2px;width:59.5px;height:7px;background:#fff"></div><div style="position:absolute;left:512px;top:10.8px;font-family:'Liberation Sans',sans-serif;font-size:3.6px;line-height:3.6px;color:#8a8a8a;white-space:pre;">Search Documentation</div><svg style="position:absolute;left:564px;top:9px" width="6" height="6" viewBox="0 0 6 6"><circle cx="3.4" cy="2.5" r="1.5" fill="none" stroke="#567" stroke-width="0.6"/><path d="M2.4 3.5L1 4.9" stroke="#567" stroke-width="0.7"/></svg><div style="position:absolute;left:572.5px;top:9.2px;width:4px;height:5px;background:linear-gradient(90deg,#e84 ,#6b4);border-radius:1px"></div><div style="position:absolute;left:580px;top:10.6px;font-family:'Liberation Sans',sans-serif;font-size:3.6px;line-height:3.6px;color:#cfe3f5;white-space:pre;">Mohammad &#9662;</div><div style="position:absolute;left:0px;top:15.8px;width:600px;height:7.5px;background:#fbfbfb"></div><div style="position:absolute;left:1px;top:17.5px;width:4.5px;height:4px;background:#7fb0d8;transform:rotate(45deg) scale(.7)"></div><svg style="position:absolute;left:7.5px;top:17px" width="6" height="5" viewBox="0 0 6 5"><path d="M0.5 2.5h4M3 0.8l1.7 1.7L3 4.2" fill="none" stroke="#8aa" stroke-width="0.8"/></svg><div style="position:absolute;left:15px;top:17.5px;width:5px;height:4px;background:#e8d060"></div><div style="position:absolute;left:22px;top:17.5px;width:5px;height:4.5px;background:#3a6aa8"></div><div style="position:absolute;left:29.5px;top:17.5px;width:5px;height:4px;background:#9ab860"></div><div style="position:absolute;left:37.5px;top:17.5px;width:5px;height:4.2px;background:#f4e070"></div><div style="position:absolute;left:44.5px;top:17.6px;font-family:'Liberation Sans',sans-serif;font-size:3.9px;line-height:3.9px;color:#333;white-space:pre;">&#9656; C: &#9656;  Users  &#9656;  mxc  &#9656;  Dropbox (Personal)  &#9656;  classes  &#9656;  udemy  &#9656;  statsML  &#9656;  descriptives  &#9656;</div><div style="position:absolute;left:595px;top:17.2px;font-family:'Liberation Sans',sans-serif;font-size:4px;line-height:4px;color:#222;white-space:pre;">&#9662;</div><div style="position:absolute;left:0px;top:23.3px;width:340px;height:215.2px;background:#f0f0f0"></div><div style="position:absolute;left:0px;top:23.3px;width:1.0px;height:215.2px;background:#5a7cb0"></div><div style="position:absolute;left:339.0px;top:23.3px;width:1.0px;height:215.2px;background:#5a7cb0"></div><div style="position:absolute;left:0px;top:23.3px;width:340px;height:6.6px;background:#0c4a86"></div><div style="position:absolute;left:1.5px;top:24.5px;width:3.8px;height:4px;background:#d9c8a8;border-radius:.5px"></div><div style="position:absolute;left:7.5px;top:24.7px;font-family:'Liberation Sans',sans-serif;font-size:3.65px;line-height:3.65px;color:#d6e6f6;white-space:pre;">Editor - C:\Users\mxc\Dropbox (Personal)\classes\udemy\statsML\descriptives\stats_descriptives_distributions.m</div><div style="position:absolute;left:326.5px;top:24.2px;font-family:'Liberation Sans',sans-serif;font-size:4.5px;line-height:4.5px;color:#cde;white-space:pre;">&#9680;</div><div style="position:absolute;left:333px;top:24.3px;font-family:'Liberation Sans',sans-serif;font-size:4.2px;line-height:4.2px;color:#cde;white-space:pre;">&#10005;</div><div style="position:absolute;left:1.3px;top:29.9px;width:337.4px;height:7.1px;background:#ebebeb"></div><div style="position:absolute;left:5px;top:30.2px;width:69px;height:6.8px;background:#fdfdfd"></div><div style="position:absolute;left:10px;top:31.6px;font-family:'Liberation Sans',sans-serif;font-size:3.9px;line-height:3.9px;color:#333;white-space:pre;">stats_descriptives_distributions.m</div><div style="position:absolute;left:69.5px;top:31.5px;font-family:'Liberation Sans',sans-serif;font-size:4px;line-height:4px;color:#bbb;white-space:pre;">&#215;</div><div style="position:absolute;left:77.5px;top:30.6px;font-family:'Liberation Sans',sans-serif;font-size:5.5px;line-height:5.5px;color:#333;white-space:pre;font-weight:bold">+</div><div style="position:absolute;left:1.3px;top:37px;width:27.3px;height:195.1px;background:#f1f1f1"></div><div style="position:absolute;left:28.6px;top:37px;width:300.09999999999997px;height:195.1px;background:#000"></div><div style="position:absolute;left:328.7px;top:37px;width:6px;height:195.1px;background:#ececec"></div><div style="position:absolute;left:329.2px;top:70px;width:5px;height:18px;background:#cdcdcd"></div><div style="position:absolute;left:329.9px;top:38px;font-family:'Liberation Sans',sans-serif;font-size:3.5px;line-height:3.5px;color:#777;white-space:pre;">&#708;</div><div style="position:absolute;left:334.7px;top:37px;width:4.2px;height:4.4px;background:#74bd76"></div><div style="position:absolute;left:1.3px;top:232.1px;width:332.4px;height:6px;background:#ececec"></div><div style="position:absolute;left:8px;top:232.7px;width:132px;height:4.6px;background:#c6c6c6"></div><div style="position:absolute;left:3px;top:233.0px;font-family:'Liberation Sans',sans-serif;font-size:4px;line-height:4px;color:#666;white-space:pre;">&#706;</div><div style="position:absolute;left:326px;top:233.0px;font-family:'Liberation Sans',sans-serif;font-size:4px;line-height:4px;color:#666;white-space:pre;">&#707;</div><div style="position:absolute;left:0px;top:238.1px;width:340px;height:0.8px;background:#1d4f85"></div><div style="position:absolute;left:0;top:0;width:600px;height:232.1px;overflow:hidden;clip-path:inset(37px 0 0 0)"><div style="position:absolute;left:8px;top:40.1px;font-family:'Liberation Sans',sans-serif;font-size:9.6px;line-height:9.6px;color:#6a6a6a;white-space:pre;letter-spacing:0.35px">22</div><div style="position:absolute;left:21.5px;top:43.9px;width:6px;height:0.9px;background:#888"></div><div style="position:absolute;left:8px;top:53.52px;font-family:'Liberation Sans',sans-serif;font-size:9.6px;line-height:9.6px;color:#6a6a6a;white-space:pre;letter-spacing:0.35px">23</div><div style="position:absolute;left:8px;top:66.94px;font-family:'Liberation Sans',sans-serif;font-size:9.6px;line-height:9.6px;color:#6a6a6a;white-space:pre;letter-spacing:0.35px">24</div><div style="position:absolute;left:21.5px;top:70.74px;width:6px;height:0.9px;background:#888"></div><div style="position:absolute;left:8px;top:80.36px;font-family:'Liberation Sans',sans-serif;font-size:9.6px;line-height:9.6px;color:#6a6a6a;white-space:pre;letter-spacing:0.35px">25</div><div style="position:absolute;left:21.5px;top:84.16px;width:6px;height:0.9px;background:#888"></div><div style="position:absolute;left:8px;top:93.78px;font-family:'Liberation Sans',sans-serif;font-size:9.6px;line-height:9.6px;color:#6a6a6a;white-space:pre;letter-spacing:0.35px">26</div><div style="position:absolute;left:21.5px;top:97.58px;width:6px;height:0.9px;background:#888"></div><div style="position:absolute;left:8px;top:107.19999999999999px;font-family:'Liberation Sans',sans-serif;font-size:9.6px;line-height:9.6px;color:#6a6a6a;white-space:pre;letter-spacing:0.35px">27</div><div style="position:absolute;left:21.5px;top:110.99999999999999px;width:6px;height:0.9px;background:#888"></div><div style="position:absolute;left:8px;top:120.62px;font-family:'Liberation Sans',sans-serif;font-size:9.6px;line-height:9.6px;color:#6a6a6a;white-space:pre;letter-spacing:0.35px">28</div><div style="position:absolute;left:8px;top:134.04px;font-family:'Liberation Sans',sans-serif;font-size:9.6px;line-height:9.6px;color:#6a6a6a;white-space:pre;letter-spacing:0.35px">29</div><div style="position:absolute;left:8px;top:147.46px;font-family:'Liberation Sans',sans-serif;font-size:9.6px;line-height:9.6px;color:#6a6a6a;white-space:pre;letter-spacing:0.35px">30</div><div style="position:absolute;left:21.5px;top:151.26000000000002px;width:6px;height:0.9px;background:#888"></div><div style="position:absolute;left:8px;top:160.88px;font-family:'Liberation Sans',sans-serif;font-size:9.6px;line-height:9.6px;color:#6a6a6a;white-space:pre;letter-spacing:0.35px">31</div><div style="position:absolute;left:8px;top:174.29999999999998px;font-family:'Liberation Sans',sans-serif;font-size:9.6px;line-height:9.6px;color:#6a6a6a;white-space:pre;letter-spacing:0.35px">32</div><div style="position:absolute;left:8px;top:187.72px;font-family:'Liberation Sans',sans-serif;font-size:9.6px;line-height:9.6px;color:#6a6a6a;white-space:pre;letter-spacing:0.35px">33</div><div style="position:absolute;left:8px;top:201.14px;font-family:'Liberation Sans',sans-serif;font-size:9.6px;line-height:9.6px;color:#6a6a6a;white-space:pre;letter-spacing:0.35px">34</div><div style="position:absolute;left:8px;top:214.56px;font-family:'Liberation Sans',sans-serif;font-size:9.6px;line-height:9.6px;color:#6a6a6a;white-space:pre;letter-spacing:0.35px">35</div><div style="position:absolute;left:8px;top:227.98px;font-family:'Liberation Sans',sans-serif;font-size:9.6px;line-height:9.6px;color:#6a6a6a;white-space:pre;letter-spacing:0.35px">36</div><div style="position:absolute;left:21.5px;top:231.78px;width:6px;height:0.9px;background:#888"></div><div style="position:absolute;left:28.6px;top:37px;width:300.09999999999997px;height:195.1px;overflow:hidden"><div style="position:absolute;left:-28.6px;top:-37px;font-family:'Liberation Mono',monospace;font-size:10px;line-height:13.42px;font-weight:bold;color:#fff"><div style="position:absolute;left:47px;top:39.1px;height:13.42px;white-space:pre"><span class="w">gausdist = normpdf(x);</span></div><div style="position:absolute;left:47px;top:52.52px;height:13.42px;white-space:pre"></div><div style="position:absolute;left:47px;top:65.94px;height:13.42px;white-space:pre"><span class="w">figure(1), clf</span></div><div style="position:absolute;left:47px;top:79.36px;height:13.42px;white-space:pre"><span class="w">subplot(211)</span></div><div style="position:absolute;left:47px;top:92.78px;height:13.42px;white-space:pre"><span class="w">plot(x,gausdist,</span><span class="m">&#x27;linew&#x27;</span><span class="w">,2)</span></div><div style="position:absolute;left:47px;top:106.19999999999999px;height:13.42px;white-space:pre"><span class="w">title(</span><span class="m">&#x27;Analytic Gaussian (normal) distribution&#x27;</span><span class="w">)</span></div><div style="position:absolute;left:47px;top:119.62px;height:13.42px;white-space:pre"></div><div style="position:absolute;left:47px;top:133.04px;height:13.42px;white-space:pre"><span class="g">% is this a probability distribution?</span></div><div style="position:absolute;left:47px;top:146.46px;height:13.42px;white-space:pre"><span class="w">sum(gausdist)</span></div><div style="position:absolute;left:47px;top:159.88px;height:13.42px;white-space:pre"><span class="g">% try scaling by dx...</span></div><div style="position:absolute;left:47px;top:173.29999999999998px;height:13.42px;white-space:pre"></div><div style="position:absolute;left:47px;top:186.72px;height:13.42px;white-space:pre"><span class="g">%% Normally-distributed random numbers</span></div><div style="position:absolute;left:47px;top:200.14px;height:13.42px;white-space:pre"></div><div style="position:absolute;left:47px;top:213.56px;height:13.42px;white-space:pre"><span class="g">% parameters</span></div><div style="position:absolute;left:47px;top:226.98px;height:13.42px;white-space:pre"><span class="w">stretch = 1; </span><span class="g">% variance (square of standard deviation)</span></div></div></div></div><div style="position:absolute;left:47px;top:184.3px;width:282px;height:0.9px;background:#8a8a8a"></div><div style="position:absolute;left:340.5px;top:23.3px;width:259.5px;height:215.29999999999998px;background:#f0f0f0"></div><div style="position:absolute;left:340.5px;top:23.3px;width:259.5px;height:6.6px;background:#f6f6f6"></div><div style="position:absolute;left:343.0px;top:24.3px;width:3.5px;height:4.2px;background:#c9a080;opacity:.7"></div><div style="position:absolute;left:349.0px;top:24.8px;font-family:'Liberation Sans',sans-serif;font-size:3.9px;line-height:3.9px;color:#444;white-space:pre;">Figures - Figure 1</div><div style="position:absolute;left:588.0px;top:24.3px;font-family:'Liberation Sans',sans-serif;font-size:4.2px;line-height:4.2px;color:#777;white-space:pre;">&#9680;</div><div style="position:absolute;left:594.0px;top:24.4px;font-family:'Liberation Sans',sans-serif;font-size:4px;line-height:4px;color:#333;white-space:pre;">&#10005;</div><div style="position:absolute;left:340.5px;top:36.8px;width:259.5px;height:0.7px;background:#b8b8b8"></div><div style="position:absolute;left:344.0px;top:31.4px;width:0.6px;height:5.2px;background:#aaa"></div><div style="position:absolute;left:347.0px;top:30.6px;width:26.5px;height:6.4px;background:#fafafa;border-right:0.6px solid #c8c8c8"></div><div style="position:absolute;left:351.0px;top:32.6px;font-family:'Liberation Sans',sans-serif;font-size:3.7px;line-height:3.7px;color:#444;white-space:pre;">Figure 1</div><div style="position:absolute;left:367.5px;top:32.4px;font-family:'Liberation Sans',sans-serif;font-size:4px;line-height:4px;color:#bbb;white-space:pre;">&#215;</div><svg style="position:absolute;left:0;top:0" width="600" height="238.6" viewBox="0 0 600 238.6"><rect x="375.6" y="52.3" width="198.8" height="68.0" fill="#fff" stroke="#8a8a8a" stroke-width="0.6"/><line x1="375.60" y1="120.3" x2="375.60" y2="118.7" stroke="#333" stroke-width="0.45"/><line x1="375.60" y1="52.3" x2="375.60" y2="53.9" stroke="#333" stroke-width="0.45"/><text x="375.60" y="126.6" font-size="3.8" font-family="Liberation Sans" fill="#222" text-anchor="middle">-4</text><line x1="400.45" y1="120.3" x2="400.45" y2="118.7" stroke="#333" stroke-width="0.45"/><line x1="400.45" y1="52.3" x2="400.45" y2="53.9" stroke="#333" stroke-width="0.45"/><text x="400.45" y="126.6" font-size="3.8" font-family="Liberation Sans" fill="#222" text-anchor="middle">-3</text><line x1="425.30" y1="120.3" x2="425.30" y2="118.7" stroke="#333" stroke-width="0.45"/><line x1="425.30" y1="52.3" x2="425.30" y2="53.9" stroke="#333" stroke-width="0.45"/><text x="425.30" y="126.6" font-size="3.8" font-family="Liberation Sans" fill="#222" text-anchor="middle">-2</text><line x1="450.15" y1="120.3" x2="450.15" y2="118.7" stroke="#333" stroke-width="0.45"/><line x1="450.15" y1="52.3" x2="450.15" y2="53.9" stroke="#333" stroke-width="0.45"/><text x="450.15" y="126.6" font-size="3.8" font-family="Liberation Sans" fill="#222" text-anchor="middle">-1</text><line x1="475.00" y1="120.3" x2="475.00" y2="118.7" stroke="#333" stroke-width="0.45"/><line x1="475.00" y1="52.3" x2="475.00" y2="53.9" stroke="#333" stroke-width="0.45"/><text x="475.00" y="126.6" font-size="3.8" font-family="Liberation Sans" fill="#222" text-anchor="middle">0</text><line x1="499.85" y1="120.3" x2="499.85" y2="118.7" stroke="#333" stroke-width="0.45"/><line x1="499.85" y1="52.3" x2="499.85" y2="53.9" stroke="#333" stroke-width="0.45"/><text x="499.85" y="126.6" font-size="3.8" font-family="Liberation Sans" fill="#222" text-anchor="middle">1</text><line x1="524.70" y1="120.3" x2="524.70" y2="118.7" stroke="#333" stroke-width="0.45"/><line x1="524.70" y1="52.3" x2="524.70" y2="53.9" stroke="#333" stroke-width="0.45"/><text x="524.70" y="126.6" font-size="3.8" font-family="Liberation Sans" fill="#222" text-anchor="middle">2</text><line x1="549.55" y1="120.3" x2="549.55" y2="118.7" stroke="#333" stroke-width="0.45"/><line x1="549.55" y1="52.3" x2="549.55" y2="53.9" stroke="#333" stroke-width="0.45"/><text x="549.55" y="126.6" font-size="3.8" font-family="Liberation Sans" fill="#222" text-anchor="middle">3</text><line x1="574.40" y1="120.3" x2="574.40" y2="118.7" stroke="#333" stroke-width="0.45"/><line x1="574.40" y1="52.3" x2="574.40" y2="53.9" stroke="#333" stroke-width="0.45"/><text x="574.40" y="126.6" font-size="3.8" font-family="Liberation Sans" fill="#222" text-anchor="middle">4</text><line x1="375.6" y1="120.30" x2="377.20000000000005" y2="120.30" stroke="#333" stroke-width="0.45"/><line x1="574.4000000000001" y1="120.30" x2="572.8000000000001" y2="120.30" stroke="#333" stroke-width="0.45"/><text x="373.40000000000003" y="121.60" font-size="3.8" font-family="Liberation Sans" fill="#222" text-anchor="end">0</text><line x1="375.6" y1="110.59" x2="377.20000000000005" y2="110.59" stroke="#333" stroke-width="0.45"/><line x1="574.4000000000001" y1="110.59" x2="572.8000000000001" y2="110.59" stroke="#333" stroke-width="0.45"/><text x="373.40000000000003" y="111.89" font-size="3.8" font-family="Liberation Sans" fill="#222" text-anchor="end">0.5</text><line x1="375.6" y1="100.87" x2="377.20000000000005" y2="100.87" stroke="#333" stroke-width="0.45"/><line x1="574.4000000000001" y1="100.87" x2="572.8000000000001" y2="100.87" stroke="#333" stroke-width="0.45"/><text x="373.40000000000003" y="102.17" font-size="3.8" font-family="Liberation Sans" fill="#222" text-anchor="end">1</text><line x1="375.6" y1="91.16" x2="377.20000000000005" y2="91.16" stroke="#333" stroke-width="0.45"/><line x1="574.4000000000001" y1="91.16" x2="572.8000000000001" y2="91.16" stroke="#333" stroke-width="0.45"/><text x="373.40000000000003" y="92.46" font-size="3.8" font-family="Liberation Sans" fill="#222" text-anchor="end">1.5</text><line x1="375.6" y1="81.44" x2="377.20000000000005" y2="81.44" stroke="#333" stroke-width="0.45"/><line x1="574.4000000000001" y1="81.44" x2="572.8000000000001" y2="81.44" stroke="#333" stroke-width="0.45"/><text x="373.40000000000003" y="82.74" font-size="3.8" font-family="Liberation Sans" fill="#222" text-anchor="end">2</text><line x1="375.6" y1="71.73" x2="377.20000000000005" y2="71.73" stroke="#333" stroke-width="0.45"/><line x1="574.4000000000001" y1="71.73" x2="572.8000000000001" y2="71.73" stroke="#333" stroke-width="0.45"/><text x="373.40000000000003" y="73.03" font-size="3.8" font-family="Liberation Sans" fill="#222" text-anchor="end">2.5</text><line x1="375.6" y1="62.01" x2="377.20000000000005" y2="62.01" stroke="#333" stroke-width="0.45"/><line x1="574.4000000000001" y1="62.01" x2="572.8000000000001" y2="62.01" stroke="#333" stroke-width="0.45"/><text x="373.40000000000003" y="63.31" font-size="3.8" font-family="Liberation Sans" fill="#222" text-anchor="end">3</text><line x1="375.6" y1="52.30" x2="377.20000000000005" y2="52.30" stroke="#333" stroke-width="0.45"/><line x1="574.4000000000001" y1="52.30" x2="572.8000000000001" y2="52.30" stroke="#333" stroke-width="0.45"/><text x="373.40000000000003" y="53.60" font-size="3.8" font-family="Liberation Sans" fill="#222" text-anchor="end">3.5</text><text x="475.0" y="50.0" font-size="4.65" font-weight="bold" font-family="Liberation Sans" fill="#111" text-anchor="middle">Analytic Gaussian (normal) distribution</text><text x="376.6" y="49.099999999999994" font-size="3.5" font-family="Liberation Sans" fill="#333">&#215;10<tspan font-size='2.6' dy='-1.5'>-3</tspan></text><path d="M375.60,120.28 L376.10,120.28 L376.59,120.28 L377.09,120.27 L377.59,120.27 L378.09,120.27 L378.58,120.27 L379.08,120.26 L379.58,120.26 L380.07,120.26 L380.57,120.25 L381.07,120.25 L381.56,120.25 L382.06,120.24 L382.56,120.24 L383.06,120.23 L383.55,120.23 L384.05,120.22 L384.55,120.22 L385.04,120.21 L385.54,120.20 L386.04,120.20 L386.53,120.19 L387.03,120.18 L387.53,120.17 L388.03,120.16 L388.52,120.15 L389.02,120.14 L389.52,120.13 L390.01,120.12 L390.51,120.11 L391.01,120.10 L391.50,120.08 L392.00,120.07 L392.50,120.05 L393.00,120.03 L393.49,120.01 L393.99,119.99 L394.49,119.97 L394.98,119.95 L395.48,119.93 L395.98,119.91 L396.47,119.88 L396.97,119.85 L397.47,119.82 L397.97,119.79 L398.46,119.76 L398.96,119.73 L399.46,119.69 L399.95,119.65 L400.45,119.61 L400.95,119.57 L401.44,119.52 L401.94,119.48 L402.44,119.43 L402.94,119.37 L403.43,119.32 L403.93,119.26 L404.43,119.20 L404.92,119.14 L405.42,119.07 L405.92,119.00 L406.41,118.93 L406.91,118.85 L407.41,118.77 L407.91,118.68 L408.40,118.59 L408.90,118.50 L409.40,118.40 L409.89,118.30 L410.39,118.19 L410.89,118.08 L411.38,117.96 L411.88,117.84 L412.38,117.71 L412.88,117.58 L413.37,117.44 L413.87,117.29 L414.37,117.14 L414.86,116.98 L415.36,116.82 L415.86,116.65 L416.35,116.47 L416.85,116.29 L417.35,116.10 L417.85,115.90 L418.34,115.69 L418.84,115.48 L419.34,115.25 L419.83,115.02 L420.33,114.79 L420.83,114.54 L421.32,114.28 L421.82,114.02 L422.32,113.75 L422.82,113.46 L423.31,113.17 L423.81,112.87 L424.31,112.56 L424.80,112.24 L425.30,111.91 L425.80,111.57 L426.29,111.22 L426.79,110.86 L427.29,110.48 L427.79,110.10 L428.28,109.71 L428.78,109.30 L429.28,108.89 L429.77,108.47 L430.27,108.03 L430.77,107.58 L431.26,107.12 L431.76,106.65 L432.26,106.17 L432.75,105.68 L433.25,105.18 L433.75,104.67 L434.25,104.14 L434.74,103.61 L435.24,103.06 L435.74,102.50 L436.23,101.93 L436.73,101.36 L437.23,100.77 L437.73,100.17 L438.22,99.56 L438.72,98.94 L439.22,98.31 L439.71,97.68 L440.21,97.03 L440.71,96.37 L441.20,95.71 L441.70,95.03 L442.20,94.35 L442.70,93.66 L443.19,92.97 L443.69,92.27 L444.19,91.56 L444.68,90.84 L445.18,90.12 L445.68,89.39 L446.17,88.66 L446.67,87.92 L447.17,87.18 L447.67,86.44 L448.16,85.69 L448.66,84.94 L449.16,84.19 L449.65,83.44 L450.15,82.69 L450.65,81.94 L451.14,81.19 L451.64,80.44 L452.14,79.69 L452.64,78.94 L453.13,78.20 L453.63,77.46 L454.13,76.73 L454.62,76.00 L455.12,75.27 L455.62,74.56 L456.11,73.85 L456.61,73.14 L457.11,72.45 L457.61,71.77 L458.10,71.09 L458.60,70.43 L459.10,69.78 L459.59,69.14 L460.09,68.51 L460.59,67.89 L461.08,67.29 L461.58,66.71 L462.08,66.13 L462.58,65.58 L463.07,65.04 L463.57,64.52 L464.07,64.01 L464.56,63.53 L465.06,63.06 L465.56,62.61 L466.05,62.18 L466.55,61.78 L467.05,61.39 L467.55,61.02 L468.04,60.68 L468.54,60.35 L469.04,60.05 L469.53,59.78 L470.03,59.52 L470.53,59.29 L471.02,59.08 L471.52,58.90 L472.02,58.74 L472.52,58.60 L473.01,58.49 L473.51,58.40 L474.01,58.34 L474.50,58.31 L475.00,58.29 L475.50,58.31 L475.99,58.34 L476.49,58.40 L476.99,58.49 L477.49,58.60 L477.98,58.74 L478.48,58.90 L478.98,59.08 L479.47,59.29 L479.97,59.52 L480.47,59.78 L480.96,60.05 L481.46,60.35 L481.96,60.68 L482.46,61.02 L482.95,61.39 L483.45,61.78 L483.95,62.18 L484.44,62.61 L484.94,63.06 L485.44,63.53 L485.93,64.01 L486.43,64.52 L486.93,65.04 L487.43,65.58 L487.92,66.13 L488.42,66.71 L488.92,67.29 L489.41,67.89 L489.91,68.51 L490.41,69.14 L490.90,69.78 L491.40,70.43 L491.90,71.09 L492.40,71.77 L492.89,72.45 L493.39,73.14 L493.89,73.85 L494.38,74.56 L494.88,75.27 L495.38,76.00 L495.87,76.73 L496.37,77.46 L496.87,78.20 L497.37,78.94 L497.86,79.69 L498.36,80.44 L498.86,81.19 L499.35,81.94 L499.85,82.69 L500.35,83.44 L500.84,84.19 L501.34,84.94 L501.84,85.69 L502.34,86.44 L502.83,87.18 L503.33,87.92 L503.83,88.66 L504.32,89.39 L504.82,90.12 L505.32,90.84 L505.81,91.56 L506.31,92.27 L506.81,92.97 L507.31,93.66 L507.80,94.35 L508.30,95.03 L508.80,95.71 L509.29,96.37 L509.79,97.03 L510.29,97.68 L510.78,98.31 L511.28,98.94 L511.78,99.56 L512.28,100.17 L512.77,100.77 L513.27,101.36 L513.77,101.93 L514.26,102.50 L514.76,103.06 L515.26,103.61 L515.75,104.14 L516.25,104.67 L516.75,105.18 L517.25,105.68 L517.74,106.17 L518.24,106.65 L518.74,107.12 L519.23,107.58 L519.73,108.03 L520.23,108.47 L520.72,108.89 L521.22,109.30 L521.72,109.71 L522.22,110.10 L522.71,110.48 L523.21,110.86 L523.71,111.22 L524.20,111.57 L524.70,111.91 L525.20,112.24 L525.69,112.56 L526.19,112.87 L526.69,113.17 L527.19,113.46 L527.68,113.75 L528.18,114.02 L528.68,114.28 L529.17,114.54 L529.67,114.79 L530.17,115.02 L530.66,115.25 L531.16,115.48 L531.66,115.69 L532.15,115.90 L532.65,116.10 L533.15,116.29 L533.65,116.47 L534.14,116.65 L534.64,116.82 L535.14,116.98 L535.63,117.14 L536.13,117.29 L536.63,117.44 L537.12,117.58 L537.62,117.71 L538.12,117.84 L538.62,117.96 L539.11,118.08 L539.61,118.19 L540.11,118.30 L540.60,118.40 L541.10,118.50 L541.60,118.59 L542.10,118.68 L542.59,118.77 L543.09,118.85 L543.59,118.93 L544.08,119.00 L544.58,119.07 L545.08,119.14 L545.57,119.20 L546.07,119.26 L546.57,119.32 L547.07,119.37 L547.56,119.43 L548.06,119.48 L548.56,119.52 L549.05,119.57 L549.55,119.61 L550.05,119.65 L550.54,119.69 L551.04,119.73 L551.54,119.76 L552.04,119.79 L552.53,119.82 L553.03,119.85 L553.53,119.88 L554.02,119.91 L554.52,119.93 L555.02,119.95 L555.51,119.97 L556.01,119.99 L556.51,120.01 L557.00,120.03 L557.50,120.05 L558.00,120.07 L558.50,120.08 L558.99,120.10 L559.49,120.11 L559.99,120.12 L560.48,120.13 L560.98,120.14 L561.48,120.15 L561.98,120.16 L562.47,120.17 L562.97,120.18 L563.47,120.19 L563.96,120.20 L564.46,120.20 L564.96,120.21 L565.45,120.22 L565.95,120.22 L566.45,120.23 L566.95,120.23 L567.44,120.24 L567.94,120.24 L568.44,120.25 L568.93,120.25 L569.43,120.25 L569.93,120.26 L570.42,120.26 L570.92,120.26 L571.42,120.27 L571.92,120.27 L572.41,120.27 L572.91,120.27 L573.41,120.28 L573.90,120.28 L574.40,120.28" fill="none" stroke="#1c6aa0" stroke-width="1.0" stroke-linejoin="round"/></svg><div style="position:absolute;left:0px;top:238.8px;width:600px;height:7.5px;background:#fafafa"></div><div style="position:absolute;left:2px;top:240.70000000000002px;font-family:'Liberation Sans',sans-serif;font-size:3.8px;line-height:3.8px;color:#777;white-space:pre;">Command Window</div><div style="position:absolute;left:594.5px;top:239.5px;font-family:'Liberation Sans',sans-serif;font-size:3.5px;line-height:3.5px;color:#777;white-space:pre;">&#708;</div><div style="position:absolute;left:0px;top:246.3px;width:14.2px;height:81.69999999999999px;background:#f3f3f3"></div><div style="position:absolute;left:14.2px;top:246.3px;width:580px;height:81.69999999999999px;background:#0d0d0d"></div><div style="position:absolute;left:594.2px;top:246.3px;width:5.8px;height:81.69999999999999px;background:#ececec"></div><div style="position:absolute;left:594.8px;top:320px;width:4.5px;height:3.2px;background:#d4d4d4"></div><div style="position:absolute;left:595.3px;top:247.5px;font-family:'Liberation Sans',sans-serif;font-size:3.6px;line-height:3.6px;color:#666;white-space:pre;">&#708;</div><div style="position:absolute;left:595.3px;top:324.4px;font-family:'Liberation Sans',sans-serif;font-size:3.6px;line-height:3.6px;color:#666;white-space:pre;">&#709;</div><div style="position:absolute;left:1.8px;top:314.2px;font-family:'Liberation Sans',sans-serif;font-size:13.5px;line-height:13.5px;color:#111;white-space:pre;font-family:'Liberation Serif',serif;letter-spacing:-2.0px;-webkit-text-stroke:0.25px #111"><i>f</i><i>x</i></div><div style="position:absolute;left:0px;top:328px;width:600px;height:8px;background:#f0f0f0"></div><div style="position:absolute;left:0;top:0;width:594px;height:328px;overflow:hidden;clip-path:inset(246.3px 0 0 14px);font-family:'Liberation Mono',monospace;font-size:10px;line-height:13.42px;font-weight:bold;color:#f2f2f2"><div style="position:absolute;left:15.5px;top:250.3px;height:13.42px;white-space:pre">ans =</div><div style="position:absolute;left:15.5px;top:263.72px;height:13.42px;white-space:pre"></div><div style="position:absolute;left:15.5px;top:277.14px;height:13.42px;white-space:pre">   0.999999441440143</div><div style="position:absolute;left:15.5px;top:290.56px;height:13.42px;white-space:pre"></div><div style="position:absolute;left:15.5px;top:303.98px;height:13.42px;white-space:pre">&gt;&gt; format</div><div style="position:absolute;left:15.5px;top:317.4px;height:13.42px;white-space:pre">&gt;&gt;</div></div><div style="position:absolute;left:153px;top:332.2px;font-family:'Liberation Sans',sans-serif;font-size:3.6px;line-height:3.6px;color:#555;white-space:pre;">script</div><div style="position:absolute;left:565px;top:332.2px;font-family:'Liberation Sans',sans-serif;font-size:3.6px;line-height:3.6px;color:#555;white-space:pre;">Ln  30    Col  1</div><div style="position:absolute;left:169.6px;top:100.6px;width:20.8px;height:20.8px;border-radius:50%;background:radial-gradient(circle closest-side,rgba(90,120,235,0.62) 0%,rgba(95,125,235,0.50) 45%,rgba(100,130,240,0.22) 75%,rgba(100,130,240,0) 100%)"></div></div><div style="position:absolute;left:1200px;top:0px;width:600px;height:337px;overflow:hidden;background:#f0f0f0;will-change:transform"><div style="position:absolute;left:0px;top:0px;width:600px;height:7.6px;background:#7c4cb2"></div><div style="position:absolute;left:1.5px;top:1.3px;width:3.5px;height:5px;background:#d86a3a;border-radius:1px;opacity:.8"></div><div style="position:absolute;left:7px;top:1.6px;font-family:'Liberation Sans',sans-serif;font-size:4.2px;line-height:4.2px;color:#e8dcf4;white-space:pre;">MATLAB R2017b - academic use</div><svg style="position:absolute;left:555px;top:0" width="45" height="8" viewBox="0 0 45 8"><path d="M7 3.6h3.4" stroke="#e8dcf4" stroke-width="0.6"/><rect x="21.3" y="1.9" width="3" height="3" fill="none" stroke="#e8dcf4" stroke-width="0.55"/><path d="M35.2 2.1l3 3M38.2 2.1l-3 3" stroke="#e8dcf4" stroke-width="0.6"/></svg><div style="position:absolute;left:0px;top:7.6px;width:600px;height:8.2px;background:#0c4a86"></div><div style="position:absolute;left:88px;top:7.6px;width:94px;height:8.2px;background:#1b86cc"></div><div style="position:absolute;left:10px;top:11.2px;font-family:'Liberation Sans',sans-serif;font-size:3.6px;line-height:3.6px;color:#cfe3f5;white-space:pre;">HOME</div><div style="position:absolute;left:40px;top:11.2px;font-family:'Liberation Sans',sans-serif;font-size:3.6px;line-height:3.6px;color:#cfe3f5;white-space:pre;">PLOTS</div><div style="position:absolute;left:70.5px;top:11.2px;font-family:'Liberation Sans',sans-serif;font-size:3.6px;line-height:3.6px;color:#cfe3f5;white-space:pre;">APPS</div><div style="position:absolute;left:98px;top:11.2px;font-family:'Liberation Sans',sans-serif;font-size:3.6px;line-height:3.6px;color:#cfe3f5;white-space:pre;">EDITOR</div><div style="position:absolute;left:130px;top:11.2px;font-family:'Liberation Sans',sans-serif;font-size:3.6px;line-height:3.6px;color:#cfe3f5;white-space:pre;">PUBLISH</div><div style="position:absolute;left:163px;top:11.2px;font-family:'Liberation Sans',sans-serif;font-size:3.6px;line-height:3.6px;color:#cfe3f5;white-space:pre;">VIEW</div><div style="position:absolute;left:440px;top:8.4px;width:69px;height:6.8px;background:#a6bdd5;border-radius:2.5px 0 0 2.5px"></div><div style="position:absolute;left:445px;top:10px;width:3.4px;height:3.6px;background:#3a4a5a;opacity:0.75;border-radius:.5px"></div><div style="position:absolute;left:452px;top:10px;width:3.4px;height:3.6px;background:#3a4a5a;opacity:0.5;border-radius:.5px"></div><div style="position:absolute;left:459px;top:10px;width:3.4px;height:3.6px;background:#3a4a5a;opacity:0.45;border-radius:.5px"></div><div style="position:absolute;left:466px;top:10px;width:3.4px;height:3.6px;background:#3a4a5a;opacity:0.55;border-radius:.5px"></div><div style="position:absolute;left:473px;top:10px;width:3.4px;height:3.6px;background:#3a4a5a;opacity:0.2;border-radius:.5px"></div><div style="position:absolute;left:480px;top:10px;width:3.4px;height:3.6px;background:#3a4a5a;opacity:0.2;border-radius:.5px"></div><div style="position:absolute;left:489px;top:10px;width:3.4px;height:3.6px;background:#3a4a5a;opacity:0.6;border-radius:.5px"></div><div style="position:absolute;left:496px;top:10px;width:3.4px;height:3.6px;background:#3a4a5a;opacity:0.7;border-radius:.5px"></div><div style="position:absolute;left:503px;top:10px;width:3.4px;height:3.6px;background:#3a4a5a;opacity:0.45;border-radius:.5px"></div><div style="position:absolute;left:510px;top:8.2px;width:59.5px;height:7px;background:#fff"></div><div style="position:absolute;left:512px;top:10.8px;font-family:'Liberation Sans',sans-serif;font-size:3.6px;line-height:3.6px;color:#8a8a8a;white-space:pre;">Search Documentation</div><svg style="position:absolute;left:564px;top:9px" width="6" height="6" viewBox="0 0 6 6"><circle cx="3.4" cy="2.5" r="1.5" fill="none" stroke="#567" stroke-width="0.6"/><path d="M2.4 3.5L1 4.9" stroke="#567" stroke-width="0.7"/></svg><div style="position:absolute;left:572.5px;top:9.2px;width:4px;height:5px;background:linear-gradient(90deg,#e84 ,#6b4);border-radius:1px"></div><div style="position:absolute;left:580px;top:10.6px;font-family:'Liberation Sans',sans-serif;font-size:3.6px;line-height:3.6px;color:#cfe3f5;white-space:pre;">Mohammad &#9662;</div><div style="position:absolute;left:0px;top:15.8px;width:600px;height:7.5px;background:#fbfbfb"></div><div style="position:absolute;left:1px;top:17.5px;width:4.5px;height:4px;background:#7fb0d8;transform:rotate(45deg) scale(.7)"></div><svg style="position:absolute;left:7.5px;top:17px" width="6" height="5" viewBox="0 0 6 5"><path d="M0.5 2.5h4M3 0.8l1.7 1.7L3 4.2" fill="none" stroke="#8aa" stroke-width="0.8"/></svg><div style="position:absolute;left:15px;top:17.5px;width:5px;height:4px;background:#e8d060"></div><div style="position:absolute;left:22px;top:17.5px;width:5px;height:4.5px;background:#3a6aa8"></div><div style="position:absolute;left:29.5px;top:17.5px;width:5px;height:4px;background:#9ab860"></div><div style="position:absolute;left:37.5px;top:17.5px;width:5px;height:4.2px;background:#f4e070"></div><div style="position:absolute;left:44.5px;top:17.6px;font-family:'Liberation Sans',sans-serif;font-size:3.9px;line-height:3.9px;color:#333;white-space:pre;">&#9656; C: &#9656;  Users  &#9656;  mxc  &#9656;  Dropbox (Personal)  &#9656;  classes  &#9656;  udemy  &#9656;  statsML  &#9656;  descriptives  &#9656;</div><div style="position:absolute;left:595px;top:17.2px;font-family:'Liberation Sans',sans-serif;font-size:4px;line-height:4px;color:#222;white-space:pre;">&#9662;</div><div style="position:absolute;left:0px;top:23.3px;width:340px;height:215.2px;background:#f0f0f0"></div><div style="position:absolute;left:0px;top:23.3px;width:1.0px;height:215.2px;background:#5a7cb0"></div><div style="position:absolute;left:339.0px;top:23.3px;width:1.0px;height:215.2px;background:#5a7cb0"></div><div style="position:absolute;left:0px;top:23.3px;width:340px;height:6.6px;background:#0c4a86"></div><div style="position:absolute;left:1.5px;top:24.5px;width:3.8px;height:4px;background:#d9c8a8;border-radius:.5px"></div><div style="position:absolute;left:7.5px;top:24.7px;font-family:'Liberation Sans',sans-serif;font-size:3.65px;line-height:3.65px;color:#d6e6f6;white-space:pre;">Editor - C:\Users\mxc\Dropbox (Personal)\classes\udemy\statsML\descriptives\stats_descriptives_distributions.m</div><div style="position:absolute;left:326.5px;top:24.2px;font-family:'Liberation Sans',sans-serif;font-size:4.5px;line-height:4.5px;color:#cde;white-space:pre;">&#9680;</div><div style="position:absolute;left:333px;top:24.3px;font-family:'Liberation Sans',sans-serif;font-size:4.2px;line-height:4.2px;color:#cde;white-space:pre;">&#10005;</div><div style="position:absolute;left:1.3px;top:29.9px;width:337.4px;height:7.1px;background:#ebebeb"></div><div style="position:absolute;left:5px;top:30.2px;width:69px;height:6.8px;background:#fdfdfd"></div><div style="position:absolute;left:10px;top:31.6px;font-family:'Liberation Sans',sans-serif;font-size:3.9px;line-height:3.9px;color:#333;white-space:pre;">stats_descriptives_distributions.m</div><div style="position:absolute;left:69.5px;top:31.5px;font-family:'Liberation Sans',sans-serif;font-size:4px;line-height:4px;color:#bbb;white-space:pre;">&#215;</div><div style="position:absolute;left:77.5px;top:30.6px;font-family:'Liberation Sans',sans-serif;font-size:5.5px;line-height:5.5px;color:#333;white-space:pre;font-weight:bold">+</div><div style="position:absolute;left:1.3px;top:37px;width:27.3px;height:195.1px;background:#f1f1f1"></div><div style="position:absolute;left:28.6px;top:37px;width:300.09999999999997px;height:195.1px;background:#000"></div><div style="position:absolute;left:328.7px;top:37px;width:6px;height:195.1px;background:#ececec"></div><div style="position:absolute;left:329.2px;top:127px;width:5px;height:19px;background:#cdcdcd"></div><div style="position:absolute;left:329.9px;top:38px;font-family:'Liberation Sans',sans-serif;font-size:3.5px;line-height:3.5px;color:#777;white-space:pre;">&#708;</div><div style="position:absolute;left:334.7px;top:37px;width:4.2px;height:4.4px;background:#74bd76"></div><div style="position:absolute;left:1.3px;top:232.1px;width:332.4px;height:6px;background:#ececec"></div><div style="position:absolute;left:8px;top:232.7px;width:132px;height:4.6px;background:#c6c6c6"></div><div style="position:absolute;left:3px;top:233.0px;font-family:'Liberation Sans',sans-serif;font-size:4px;line-height:4px;color:#666;white-space:pre;">&#706;</div><div style="position:absolute;left:326px;top:233.0px;font-family:'Liberation Sans',sans-serif;font-size:4px;line-height:4px;color:#666;white-space:pre;">&#707;</div><div style="position:absolute;left:0px;top:238.1px;width:340px;height:0.8px;background:#1d4f85"></div><div style="position:absolute;left:0;top:0;width:600px;height:232.1px;overflow:hidden;clip-path:inset(37px 0 0 0)"><div style="position:absolute;left:8px;top:40.1px;font-family:'Liberation Sans',sans-serif;font-size:9.6px;line-height:9.6px;color:#6a6a6a;white-space:pre;letter-spacing:0.35px">67</div><div style="position:absolute;left:8px;top:53.52px;font-family:'Liberation Sans',sans-serif;font-size:9.6px;line-height:9.6px;color:#6a6a6a;white-space:pre;letter-spacing:0.35px">68</div><div style="position:absolute;left:8px;top:66.94px;font-family:'Liberation Sans',sans-serif;font-size:9.6px;line-height:9.6px;color:#6a6a6a;white-space:pre;letter-spacing:0.35px">69</div><div style="position:absolute;left:8px;top:80.36px;font-family:'Liberation Sans',sans-serif;font-size:9.6px;line-height:9.6px;color:#6a6a6a;white-space:pre;letter-spacing:0.35px">70</div><div style="position:absolute;left:21.5px;top:84.16px;width:6px;height:0.9px;background:#888"></div><div style="position:absolute;left:8px;top:93.78px;font-family:'Liberation Sans',sans-serif;font-size:9.6px;line-height:9.6px;color:#6a6a6a;white-space:pre;letter-spacing:0.35px">71</div><div style="position:absolute;left:21.5px;top:97.58px;width:6px;height:0.9px;background:#888"></div><div style="position:absolute;left:8px;top:107.19999999999999px;font-family:'Liberation Sans',sans-serif;font-size:9.6px;line-height:9.6px;color:#6a6a6a;white-space:pre;letter-spacing:0.35px">72</div><div style="position:absolute;left:21.5px;top:110.99999999999999px;width:6px;height:0.9px;background:#888"></div><div style="position:absolute;left:8px;top:120.62px;font-family:'Liberation Sans',sans-serif;font-size:9.6px;line-height:9.6px;color:#6a6a6a;white-space:pre;letter-spacing:0.35px">73</div><div style="position:absolute;left:8px;top:134.04px;font-family:'Liberation Sans',sans-serif;font-size:9.6px;line-height:9.6px;color:#6a6a6a;white-space:pre;letter-spacing:0.35px">74</div><div style="position:absolute;left:21.5px;top:137.84px;width:6px;height:0.9px;background:#888"></div><div style="position:absolute;left:8px;top:147.46px;font-family:'Liberation Sans',sans-serif;font-size:9.6px;line-height:9.6px;color:#6a6a6a;white-space:pre;letter-spacing:0.35px">75</div><div style="position:absolute;left:21.5px;top:151.26000000000002px;width:6px;height:0.9px;background:#888"></div><div style="position:absolute;left:8px;top:160.88px;font-family:'Liberation Sans',sans-serif;font-size:9.6px;line-height:9.6px;color:#6a6a6a;white-space:pre;letter-spacing:0.35px">76</div><div style="position:absolute;left:21.5px;top:164.68px;width:6px;height:0.9px;background:#888"></div><div style="position:absolute;left:8px;top:174.29999999999998px;font-family:'Liberation Sans',sans-serif;font-size:9.6px;line-height:9.6px;color:#6a6a6a;white-space:pre;letter-spacing:0.35px">77</div><div style="position:absolute;left:21.5px;top:178.1px;width:6px;height:0.9px;background:#888"></div><div style="position:absolute;left:8px;top:187.72px;font-family:'Liberation Sans',sans-serif;font-size:9.6px;line-height:9.6px;color:#6a6a6a;white-space:pre;letter-spacing:0.35px">78</div><div style="position:absolute;left:8px;top:201.14px;font-family:'Liberation Sans',sans-serif;font-size:9.6px;line-height:9.6px;color:#6a6a6a;white-space:pre;letter-spacing:0.35px">79</div><div style="position:absolute;left:8px;top:214.56px;font-family:'Liberation Sans',sans-serif;font-size:9.6px;line-height:9.6px;color:#6a6a6a;white-space:pre;letter-spacing:0.35px">80</div><div style="position:absolute;left:8px;top:227.98px;font-family:'Liberation Sans',sans-serif;font-size:9.6px;line-height:9.6px;color:#6a6a6a;white-space:pre;letter-spacing:0.35px">81</div><div style="position:absolute;left:21.5px;top:231.78px;width:6px;height:0.9px;background:#888"></div><div style="position:absolute;left:28.6px;top:37px;width:300.09999999999997px;height:195.1px;overflow:hidden"><div style="position:absolute;left:-28.6px;top:-37px;font-family:'Liberation Mono',monospace;font-size:10px;line-height:13.42px;font-weight:bold;color:#fff"><div style="position:absolute;left:47px;top:39.1px;height:13.42px;white-space:pre"></div><div style="position:absolute;left:47px;top:52.52px;height:13.42px;white-space:pre"><span class="g">%% log-normal distribution</span></div><div style="position:absolute;left:47px;top:65.94px;height:13.42px;white-space:pre"></div><div style="position:absolute;left:47px;top:79.36px;height:13.42px;white-space:pre"><span class="w">N = 1001;</span></div><div style="position:absolute;left:47px;top:92.78px;height:13.42px;white-space:pre"><span class="w">x = linspace(0,10,N);</span></div><div style="position:absolute;left:47px;top:106.19999999999999px;height:13.42px;white-space:pre"><span class="w">lognormdist = lognpdf(x);</span></div><div style="position:absolute;left:47px;top:119.62px;height:13.42px;white-space:pre"></div><div style="position:absolute;left:47px;top:133.04px;height:13.42px;white-space:pre"><span class="w">figure(3), clf</span></div><div style="position:absolute;left:47px;top:146.46px;height:13.42px;white-space:pre"><span class="w">subplot(311)</span></div><div style="position:absolute;left:47px;top:159.88px;height:13.42px;white-space:pre"><span class="w">plot(x,lognormdist,</span><span class="m">&#x27;linew&#x27;</span><span class="w">,2)</span></div><div style="position:absolute;left:47px;top:173.29999999999998px;height:13.42px;white-space:pre"><span class="w">title(</span><span class="m">&#x27;Analytic log-normal distribution&#x27;</span><span class="w">)</span></div><div style="position:absolute;left:47px;top:186.72px;height:13.42px;white-space:pre"></div><div style="position:absolute;left:47px;top:200.14px;height:13.42px;white-space:pre"><span class="g">%% empirical log-normal distribution</span></div><div style="position:absolute;left:47px;top:213.56px;height:13.42px;white-space:pre"></div><div style="position:absolute;left:47px;top:226.98px;height:13.42px;white-space:pre"><span class="w">shift  = 5; </span><span class="g">% equal to the mean?</span></div></div></div></div><div style="position:absolute;left:47px;top:50.3px;width:282px;height:0.9px;background:#8a8a8a"></div><div style="position:absolute;left:47px;top:197.9px;width:282px;height:0.9px;background:#8a8a8a"></div><div style="position:absolute;left:99.5px;top:78px;width:0.7px;height:11px;background:#ddd"></div><div style="position:absolute;left:340.5px;top:23.3px;width:259.5px;height:215.29999999999998px;background:#f0f0f0"></div><div style="position:absolute;left:340.5px;top:23.3px;width:259.5px;height:6.6px;background:#f6f6f6"></div><div style="position:absolute;left:343.0px;top:24.3px;width:3.5px;height:4.2px;background:#c9a080;opacity:.7"></div><div style="position:absolute;left:349.0px;top:24.8px;font-family:'Liberation Sans',sans-serif;font-size:3.9px;line-height:3.9px;color:#444;white-space:pre;">Figures - Figure 3</div><div style="position:absolute;left:588.0px;top:24.3px;font-family:'Liberation Sans',sans-serif;font-size:4.2px;line-height:4.2px;color:#777;white-space:pre;">&#9680;</div><div style="position:absolute;left:594.0px;top:24.4px;font-family:'Liberation Sans',sans-serif;font-size:4px;line-height:4px;color:#333;white-space:pre;">&#10005;</div><div style="position:absolute;left:340.5px;top:36.8px;width:259.5px;height:0.7px;background:#b8b8b8"></div><div style="position:absolute;left:344.0px;top:31.4px;width:0.6px;height:5.2px;background:#aaa"></div><div style="position:absolute;left:347.0px;top:30.6px;width:25.6px;height:6.4px;background:#dedede;border-right:0.6px solid #c8c8c8"></div><div style="position:absolute;left:351.0px;top:32.6px;font-family:'Liberation Sans',sans-serif;font-size:3.7px;line-height:3.7px;color:#666;white-space:pre;">Figure 1</div><div style="position:absolute;left:366.6px;top:32.4px;font-family:'Liberation Sans',sans-serif;font-size:4px;line-height:4px;color:#bbb;white-space:pre;">&#215;</div><div style="position:absolute;left:372.6px;top:30.6px;width:25.6px;height:6.4px;background:#dedede;border-right:0.6px solid #c8c8c8"></div><div style="position:absolute;left:376.6px;top:32.6px;font-family:'Liberation Sans',sans-serif;font-size:3.7px;line-height:3.7px;color:#666;white-space:pre;">Figure 2</div><div style="position:absolute;left:392.20000000000005px;top:32.4px;font-family:'Liberation Sans',sans-serif;font-size:4px;line-height:4px;color:#bbb;white-space:pre;">&#215;</div><div style="position:absolute;left:398.20000000000005px;top:30.6px;width:25.6px;height:6.4px;background:#fafafa;border-right:0.6px solid #c8c8c8"></div><div style="position:absolute;left:402.20000000000005px;top:32.6px;font-family:'Liberation Sans',sans-serif;font-size:3.7px;line-height:3.7px;color:#444;white-space:pre;">Figure 3</div><div style="position:absolute;left:417.80000000000007px;top:32.4px;font-family:'Liberation Sans',sans-serif;font-size:4px;line-height:4px;color:#bbb;white-space:pre;">&#215;</div><svg style="position:absolute;left:0;top:0" width="600" height="238.6" viewBox="0 0 600 238.6"><rect x="375.4" y="52.5" width="199.3" height="42.9" fill="#fff" stroke="#8a8a8a" stroke-width="0.6"/><line x1="375.40" y1="95.4" x2="375.40" y2="93.80000000000001" stroke="#333" stroke-width="0.45"/><line x1="375.40" y1="52.5" x2="375.40" y2="54.1" stroke="#333" stroke-width="0.45"/><text x="375.40" y="101.7" font-size="3.8" font-family="Liberation Sans" fill="#222" text-anchor="middle">0</text><line x1="395.33" y1="95.4" x2="395.33" y2="93.80000000000001" stroke="#333" stroke-width="0.45"/><line x1="395.33" y1="52.5" x2="395.33" y2="54.1" stroke="#333" stroke-width="0.45"/><text x="395.33" y="101.7" font-size="3.8" font-family="Liberation Sans" fill="#222" text-anchor="middle">1</text><line x1="415.26" y1="95.4" x2="415.26" y2="93.80000000000001" stroke="#333" stroke-width="0.45"/><line x1="415.26" y1="52.5" x2="415.26" y2="54.1" stroke="#333" stroke-width="0.45"/><text x="415.26" y="101.7" font-size="3.8" font-family="Liberation Sans" fill="#222" text-anchor="middle">2</text><line x1="435.19" y1="95.4" x2="435.19" y2="93.80000000000001" stroke="#333" stroke-width="0.45"/><line x1="435.19" y1="52.5" x2="435.19" y2="54.1" stroke="#333" stroke-width="0.45"/><text x="435.19" y="101.7" font-size="3.8" font-family="Liberation Sans" fill="#222" text-anchor="middle">3</text><line x1="455.12" y1="95.4" x2="455.12" y2="93.80000000000001" stroke="#333" stroke-width="0.45"/><line x1="455.12" y1="52.5" x2="455.12" y2="54.1" stroke="#333" stroke-width="0.45"/><text x="455.12" y="101.7" font-size="3.8" font-family="Liberation Sans" fill="#222" text-anchor="middle">4</text><line x1="475.05" y1="95.4" x2="475.05" y2="93.80000000000001" stroke="#333" stroke-width="0.45"/><line x1="475.05" y1="52.5" x2="475.05" y2="54.1" stroke="#333" stroke-width="0.45"/><text x="475.05" y="101.7" font-size="3.8" font-family="Liberation Sans" fill="#222" text-anchor="middle">5</text><line x1="494.98" y1="95.4" x2="494.98" y2="93.80000000000001" stroke="#333" stroke-width="0.45"/><line x1="494.98" y1="52.5" x2="494.98" y2="54.1" stroke="#333" stroke-width="0.45"/><text x="494.98" y="101.7" font-size="3.8" font-family="Liberation Sans" fill="#222" text-anchor="middle">6</text><line x1="514.91" y1="95.4" x2="514.91" y2="93.80000000000001" stroke="#333" stroke-width="0.45"/><line x1="514.91" y1="52.5" x2="514.91" y2="54.1" stroke="#333" stroke-width="0.45"/><text x="514.91" y="101.7" font-size="3.8" font-family="Liberation Sans" fill="#222" text-anchor="middle">7</text><line x1="534.84" y1="95.4" x2="534.84" y2="93.80000000000001" stroke="#333" stroke-width="0.45"/><line x1="534.84" y1="52.5" x2="534.84" y2="54.1" stroke="#333" stroke-width="0.45"/><text x="534.84" y="101.7" font-size="3.8" font-family="Liberation Sans" fill="#222" text-anchor="middle">8</text><line x1="554.77" y1="95.4" x2="554.77" y2="93.80000000000001" stroke="#333" stroke-width="0.45"/><line x1="554.77" y1="52.5" x2="554.77" y2="54.1" stroke="#333" stroke-width="0.45"/><text x="554.77" y="101.7" font-size="3.8" font-family="Liberation Sans" fill="#222" text-anchor="middle">9</text><line x1="574.70" y1="95.4" x2="574.70" y2="93.80000000000001" stroke="#333" stroke-width="0.45"/><line x1="574.70" y1="52.5" x2="574.70" y2="54.1" stroke="#333" stroke-width="0.45"/><text x="574.70" y="101.7" font-size="3.8" font-family="Liberation Sans" fill="#222" text-anchor="middle">10</text><line x1="375.4" y1="95.40" x2="377.0" y2="95.40" stroke="#333" stroke-width="0.45"/><line x1="574.7" y1="95.40" x2="573.1" y2="95.40" stroke="#333" stroke-width="0.45"/><text x="373.2" y="96.70" font-size="3.8" font-family="Liberation Sans" fill="#222" text-anchor="end">0</text><line x1="375.4" y1="84.68" x2="377.0" y2="84.68" stroke="#333" stroke-width="0.45"/><line x1="574.7" y1="84.68" x2="573.1" y2="84.68" stroke="#333" stroke-width="0.45"/><text x="373.2" y="85.98" font-size="3.8" font-family="Liberation Sans" fill="#222" text-anchor="end">0.2</text><line x1="375.4" y1="73.95" x2="377.0" y2="73.95" stroke="#333" stroke-width="0.45"/><line x1="574.7" y1="73.95" x2="573.1" y2="73.95" stroke="#333" stroke-width="0.45"/><text x="373.2" y="75.25" font-size="3.8" font-family="Liberation Sans" fill="#222" text-anchor="end">0.4</text><line x1="375.4" y1="63.23" x2="377.0" y2="63.23" stroke="#333" stroke-width="0.45"/><line x1="574.7" y1="63.23" x2="573.1" y2="63.23" stroke="#333" stroke-width="0.45"/><text x="373.2" y="64.53" font-size="3.8" font-family="Liberation Sans" fill="#222" text-anchor="end">0.6</text><line x1="375.4" y1="52.50" x2="377.0" y2="52.50" stroke="#333" stroke-width="0.45"/><line x1="574.7" y1="52.50" x2="573.1" y2="52.50" stroke="#333" stroke-width="0.45"/><text x="373.2" y="53.80" font-size="3.8" font-family="Liberation Sans" fill="#222" text-anchor="end">0.8</text><text x="475.04999999999995" y="50.2" font-size="4.65" font-weight="bold" font-family="Liberation Sans" fill="#111" text-anchor="middle">Analytic log-normal distribution</text><rect x="533.7" y="45.9" width="3.6" height="3.6" fill="none" stroke="#999" stroke-width="0.45"/><rect x="539.3000000000001" y="45.9" width="3.6" height="3.6" fill="none" stroke="#999" stroke-width="0.45"/><rect x="544.9000000000001" y="45.9" width="3.6" height="3.6" fill="none" stroke="#999" stroke-width="0.45"/><rect x="550.5" y="45.9" width="3.6" height="3.6" fill="none" stroke="#999" stroke-width="0.45"/><rect x="556.1" y="45.9" width="3.6" height="3.6" fill="none" stroke="#999" stroke-width="0.45"/><rect x="561.7" y="45.9" width="3.6" height="3.6" fill="none" stroke="#999" stroke-width="0.45"/><rect x="567.3000000000001" y="45.9" width="3.6" height="3.6" fill="none" stroke="#999" stroke-width="0.45"/><path d="M375.48,95.40 L375.56,95.38 L375.64,95.30 L375.72,95.14 L375.80,94.89 L375.88,94.55 L375.96,94.12 L376.04,93.61 L376.12,93.03 L376.20,92.39 L376.28,91.70 L376.36,90.97 L376.44,90.20 L376.52,89.40 L376.60,88.59 L376.68,87.76 L376.76,86.92 L376.83,86.07 L376.91,85.23 L376.99,84.39 L377.07,83.55 L377.15,82.72 L377.23,81.90 L377.31,81.09 L377.39,80.30 L377.47,79.52 L377.55,78.76 L377.63,78.01 L377.71,77.28 L377.79,76.57 L377.87,75.87 L377.95,75.20 L378.03,74.54 L378.11,73.90 L378.19,73.28 L378.27,72.68 L378.35,72.10 L378.43,71.53 L378.51,70.99 L378.59,70.46 L378.67,69.95 L378.75,69.46 L378.83,68.98 L378.91,68.52 L378.99,68.08 L379.07,67.65 L379.15,67.24 L379.23,66.85 L379.31,66.47 L379.39,66.11 L379.47,65.76 L379.55,65.42 L379.63,65.10 L379.70,64.79 L379.78,64.50 L379.86,64.21 L379.94,63.94 L380.02,63.68 L380.10,63.44 L380.18,63.20 L380.26,62.98 L380.34,62.77 L380.42,62.56 L380.50,62.37 L380.58,62.19 L380.66,62.02 L380.74,61.85 L380.82,61.70 L380.90,61.56 L380.98,61.42 L381.06,61.29 L381.14,61.17 L381.22,61.06 L381.30,60.95 L381.38,60.85 L381.46,60.76 L381.54,60.68 L381.62,60.60 L381.70,60.53 L381.78,60.47 L381.86,60.41 L381.94,60.36 L382.02,60.31 L382.10,60.27 L382.18,60.24 L382.26,60.21 L382.34,60.18 L382.42,60.16 L382.50,60.15 L382.57,60.14 L382.65,60.13 L382.73,60.13 L382.81,60.13 L382.89,60.14 L382.97,60.15 L383.05,60.16 L383.13,60.18 L383.21,60.20 L383.29,60.22 L383.37,60.25 L383.45,60.28 L383.53,60.32 L383.61,60.35 L383.69,60.39 L383.77,60.44 L383.85,60.48 L383.93,60.53 L384.01,60.58 L384.09,60.63 L384.17,60.69 L384.25,60.75 L384.33,60.81 L384.41,60.87 L384.49,60.93 L384.57,61.00 L384.65,61.07 L384.73,61.14 L384.81,61.21 L384.89,61.28 L384.97,61.35 L385.05,61.43 L385.13,61.51 L385.21,61.59 L385.29,61.67 L385.36,61.75 L385.44,61.83 L385.52,61.92 L385.60,62.00 L385.68,62.09 L385.76,62.18 L385.84,62.27 L385.92,62.36 L386.00,62.45 L386.08,62.54 L386.16,62.63 L386.24,62.73 L386.32,62.82 L386.40,62.92 L386.48,63.01 L386.56,63.11 L386.64,63.21 L386.72,63.30 L386.80,63.40 L386.88,63.50 L386.96,63.60 L387.04,63.70 L387.12,63.80 L387.20,63.90 L387.28,64.00 L387.36,64.11 L387.44,64.21 L387.52,64.31 L387.60,64.41 L387.68,64.52 L387.76,64.62 L387.84,64.72 L387.92,64.83 L388.00,64.93 L388.08,65.04 L388.16,65.14 L388.23,65.25 L388.31,65.35 L388.39,65.46 L388.47,65.56 L388.55,65.67 L388.63,65.77 L388.71,65.88 L388.79,65.98 L388.87,66.09 L388.95,66.19 L389.03,66.30 L389.11,66.41 L389.19,66.51 L389.27,66.62 L389.35,66.72 L389.43,66.83 L389.51,66.93 L389.59,67.04 L389.67,67.14 L389.75,67.25 L389.83,67.35 L389.91,67.46 L389.99,67.56 L390.07,67.67 L390.15,67.77 L390.23,67.88 L390.31,67.98 L390.39,68.08 L390.47,68.19 L390.55,68.29 L390.63,68.39 L390.71,68.50 L390.79,68.60 L390.87,68.70 L390.95,68.81 L391.03,68.91 L391.10,69.01 L391.18,69.11 L391.26,69.21 L391.34,69.32 L391.42,69.42 L391.50,69.52 L391.58,69.62 L391.66,69.72 L391.74,69.82 L391.82,69.92 L391.90,70.02 L391.98,70.12 L392.06,70.22 L392.14,70.32 L392.22,70.41 L392.30,70.51 L392.38,70.61 L392.46,70.71 L392.54,70.81 L392.62,70.90 L392.70,71.00 L392.78,71.10 L392.86,71.19 L392.94,71.29 L393.02,71.38 L393.10,71.48 L393.18,71.57 L393.26,71.67 L393.34,71.76 L393.42,71.86 L393.50,71.95 L393.58,72.04 L393.66,72.13 L393.74,72.23 L393.82,72.32 L393.90,72.41 L393.97,72.50 L394.05,72.59 L394.13,72.68 L394.21,72.78 L394.29,72.87 L394.37,72.96 L394.45,73.04 L394.53,73.13 L394.61,73.22 L394.69,73.31 L394.77,73.40 L394.85,73.49 L394.93,73.57 L395.01,73.66 L395.09,73.75 L395.17,73.83 L395.25,73.92 L395.33,74.01 L395.41,74.09 L395.49,74.18 L395.57,74.26 L395.65,74.35 L395.73,74.43 L395.81,74.51 L395.89,74.60 L395.97,74.68 L396.05,74.76 L396.13,74.85 L396.21,74.93 L396.29,75.01 L396.37,75.09 L396.45,75.17 L396.53,75.25 L396.61,75.33 L396.69,75.41 L396.76,75.49 L396.84,75.57 L396.92,75.65 L397.00,75.73 L397.08,75.81 L397.16,75.88 L397.24,75.96 L397.32,76.04 L397.40,76.12 L397.48,76.19 L397.56,76.27 L397.64,76.35 L397.72,76.42 L397.80,76.50 L397.88,76.57 L397.96,76.65 L398.04,76.72 L398.12,76.79 L398.20,76.87 L398.28,76.94 L398.36,77.01 L398.44,77.09 L398.52,77.16 L398.60,77.23 L398.68,77.30 L398.76,77.37 L398.84,77.45 L398.92,77.52 L399.00,77.59 L399.08,77.66 L399.16,77.73 L399.24,77.80 L399.32,77.87 L399.32,77.87 L400.49,78.85 L401.65,79.77 L402.82,80.62 L403.99,81.43 L405.16,82.18 L406.33,82.88 L407.50,83.54 L408.67,84.16 L409.84,84.74 L411.01,85.28 L412.18,85.79 L413.35,86.27 L414.52,86.72 L415.69,87.14 L416.85,87.53 L418.02,87.91 L419.19,88.26 L420.36,88.59 L421.53,88.90 L422.70,89.20 L423.87,89.47 L425.04,89.74 L426.21,89.98 L427.38,90.22 L428.55,90.44 L429.72,90.65 L430.89,90.85 L432.05,91.04 L433.22,91.22 L434.39,91.39 L435.56,91.55 L436.73,91.70 L437.90,91.85 L439.07,91.99 L440.24,92.12 L441.41,92.25 L442.58,92.37 L443.75,92.48 L444.92,92.59 L446.09,92.69 L447.25,92.79 L448.42,92.89 L449.59,92.98 L450.76,93.06 L451.93,93.15 L453.10,93.23 L454.27,93.30 L455.44,93.37 L456.61,93.44 L457.78,93.51 L458.95,93.57 L460.12,93.63 L461.29,93.69 L462.45,93.75 L463.62,93.80 L464.79,93.85 L465.96,93.90 L467.13,93.95 L468.30,94.00 L469.47,94.04 L470.64,94.08 L471.81,94.12 L472.98,94.16 L474.15,94.20 L475.32,94.24 L476.48,94.27 L477.65,94.30 L478.82,94.34 L479.99,94.37 L481.16,94.40 L482.33,94.43 L483.50,94.46 L484.67,94.48 L485.84,94.51 L487.01,94.53 L488.18,94.56 L489.35,94.58 L490.52,94.60 L491.68,94.63 L492.85,94.65 L494.02,94.67 L495.19,94.69 L496.36,94.71 L497.53,94.72 L498.70,94.74 L499.87,94.76 L501.04,94.78 L502.21,94.79 L503.38,94.81 L504.55,94.82 L505.72,94.84 L506.88,94.85 L508.05,94.87 L509.22,94.88 L510.39,94.89 L511.56,94.91 L512.73,94.92 L513.90,94.93 L515.07,94.94 L516.24,94.95 L517.41,94.96 L518.58,94.97 L519.75,94.98 L520.92,94.99 L522.08,95.00 L523.25,95.01 L524.42,95.02 L525.59,95.03 L526.76,95.04 L527.93,95.05 L529.10,95.06 L530.27,95.06 L531.44,95.07 L532.61,95.08 L533.78,95.09 L534.95,95.09 L536.12,95.10 L537.28,95.11 L538.45,95.11 L539.62,95.12 L540.79,95.13 L541.96,95.13 L543.13,95.14 L544.30,95.14 L545.47,95.15 L546.64,95.15 L547.81,95.16 L548.98,95.16 L550.15,95.17 L551.32,95.17 L552.48,95.18 L553.65,95.18 L554.82,95.19 L555.99,95.19 L557.16,95.20 L558.33,95.20 L559.50,95.20 L560.67,95.21 L561.84,95.21 L563.01,95.22 L564.18,95.22 L565.35,95.22 L566.52,95.23 L567.68,95.23 L568.85,95.23 L570.02,95.24 L571.19,95.24 L572.36,95.24 L573.53,95.25 L574.70,95.25" fill="none" stroke="#1c6aa0" stroke-width="1.0" stroke-linejoin="round"/></svg><div style="position:absolute;left:0px;top:238.8px;width:600px;height:7.5px;background:#fafafa"></div><div style="position:absolute;left:2px;top:240.70000000000002px;font-family:'Liberation Sans',sans-serif;font-size:3.8px;line-height:3.8px;color:#777;white-space:pre;">Command Window</div><div style="position:absolute;left:594.5px;top:239.5px;font-family:'Liberation Sans',sans-serif;font-size:3.5px;line-height:3.5px;color:#777;white-space:pre;">&#708;</div><div style="position:absolute;left:0px;top:246.3px;width:14.2px;height:81.69999999999999px;background:#f3f3f3"></div><div style="position:absolute;left:14.2px;top:246.3px;width:580px;height:81.69999999999999px;background:#0d0d0d"></div><div style="position:absolute;left:594.2px;top:246.3px;width:5.8px;height:81.69999999999999px;background:#ececec"></div><div style="position:absolute;left:594.8px;top:320px;width:4.5px;height:3.2px;background:#d4d4d4"></div><div style="position:absolute;left:595.3px;top:247.5px;font-family:'Liberation Sans',sans-serif;font-size:3.6px;line-height:3.6px;color:#666;white-space:pre;">&#708;</div><div style="position:absolute;left:595.3px;top:324.4px;font-family:'Liberation Sans',sans-serif;font-size:3.6px;line-height:3.6px;color:#666;white-space:pre;">&#709;</div><div style="position:absolute;left:1.8px;top:314.2px;font-family:'Liberation Sans',sans-serif;font-size:13.5px;line-height:13.5px;color:#111;white-space:pre;font-family:'Liberation Serif',serif;letter-spacing:-2.0px;-webkit-text-stroke:0.25px #111"><i>f</i><i>x</i></div><div style="position:absolute;left:0px;top:328px;width:600px;height:8px;background:#f0f0f0"></div><div style="position:absolute;left:0;top:0;width:594px;height:328px;overflow:hidden;clip-path:inset(246.3px 0 0 14px);font-family:'Liberation Mono',monospace;font-size:10px;line-height:13.42px;font-weight:bold;color:#f2f2f2"><div style="position:absolute;left:38.9px;top:288.2px;width:36.4px;height:13.8px;background:#f4f4f4"></div><div style="position:absolute;left:15.5px;top:250.3px;height:13.42px;white-space:pre"></div><div style="position:absolute;left:15.5px;top:263.72px;height:13.42px;white-space:pre">ans =</div><div style="position:absolute;left:15.5px;top:277.14px;height:13.42px;white-space:pre"></div><div style="position:absolute;left:15.5px;top:290.56px;height:13.42px;white-space:pre">    <span style="color:#111">4.9950</span></div><div style="position:absolute;left:15.5px;top:303.98px;height:13.42px;white-space:pre"></div><div style="position:absolute;left:15.5px;top:317.4px;height:13.42px;white-space:pre">&gt;&gt;</div></div><div style="position:absolute;left:153px;top:332.2px;font-family:'Liberation Sans',sans-serif;font-size:3.6px;line-height:3.6px;color:#555;white-space:pre;">script</div><div style="position:absolute;left:565px;top:332.2px;font-family:'Liberation Sans',sans-serif;font-size:3.6px;line-height:3.6px;color:#555;white-space:pre;">Ln  30    Col  1</div><div style="position:absolute;left:372.6px;top:75.6px;width:20.8px;height:20.8px;border-radius:50%;background:radial-gradient(circle closest-side,rgba(90,120,235,0.62) 0%,rgba(95,125,235,0.50) 45%,rgba(100,130,240,0.22) 75%,rgba(100,130,240,0) 100%)"></div></div><div style="position:absolute;left:0px;top:336.6px;width:600px;height:337px;overflow:hidden;background:#f0f0f0;will-change:transform"><div style="position:absolute;left:0px;top:0px;width:600px;height:7.6px;background:#7c4cb2"></div><div style="position:absolute;left:1.5px;top:1.3px;width:3.5px;height:5px;background:#d86a3a;border-radius:1px;opacity:.8"></div><div style="position:absolute;left:7px;top:1.6px;font-family:'Liberation Sans',sans-serif;font-size:4.2px;line-height:4.2px;color:#e8dcf4;white-space:pre;">MATLAB R2017b - academic use</div><svg style="position:absolute;left:555px;top:0" width="45" height="8" viewBox="0 0 45 8"><path d="M7 3.6h3.4" stroke="#e8dcf4" stroke-width="0.6"/><rect x="21.3" y="1.9" width="3" height="3" fill="none" stroke="#e8dcf4" stroke-width="0.55"/><path d="M35.2 2.1l3 3M38.2 2.1l-3 3" stroke="#e8dcf4" stroke-width="0.6"/></svg><div style="position:absolute;left:0px;top:7.6px;width:600px;height:8.2px;background:#0c4a86"></div><div style="position:absolute;left:88px;top:7.6px;width:94px;height:8.2px;background:#1b86cc"></div><div style="position:absolute;left:10px;top:11.2px;font-family:'Liberation Sans',sans-serif;font-size:3.6px;line-height:3.6px;color:#cfe3f5;white-space:pre;">HOME</div><div style="position:absolute;left:40px;top:11.2px;font-family:'Liberation Sans',sans-serif;font-size:3.6px;line-height:3.6px;color:#cfe3f5;white-space:pre;">PLOTS</div><div style="position:absolute;left:70.5px;top:11.2px;font-family:'Liberation Sans',sans-serif;font-size:3.6px;line-height:3.6px;color:#cfe3f5;white-space:pre;">APPS</div><div style="position:absolute;left:98px;top:11.2px;font-family:'Liberation Sans',sans-serif;font-size:3.6px;line-height:3.6px;color:#cfe3f5;white-space:pre;">EDITOR</div><div style="position:absolute;left:130px;top:11.2px;font-family:'Liberation Sans',sans-serif;font-size:3.6px;line-height:3.6px;color:#cfe3f5;white-space:pre;">PUBLISH</div><div style="position:absolute;left:163px;top:11.2px;font-family:'Liberation Sans',sans-serif;font-size:3.6px;line-height:3.6px;color:#cfe3f5;white-space:pre;">VIEW</div><div style="position:absolute;left:440px;top:8.4px;width:69px;height:6.8px;background:#a6bdd5;border-radius:2.5px 0 0 2.5px"></div><div style="position:absolute;left:445px;top:10px;width:3.4px;height:3.6px;background:#3a4a5a;opacity:0.75;border-radius:.5px"></div><div style="position:absolute;left:452px;top:10px;width:3.4px;height:3.6px;background:#3a4a5a;opacity:0.5;border-radius:.5px"></div><div style="position:absolute;left:459px;top:10px;width:3.4px;height:3.6px;background:#3a4a5a;opacity:0.45;border-radius:.5px"></div><div style="position:absolute;left:466px;top:10px;width:3.4px;height:3.6px;background:#3a4a5a;opacity:0.55;border-radius:.5px"></div><div style="position:absolute;left:473px;top:10px;width:3.4px;height:3.6px;background:#3a4a5a;opacity:0.2;border-radius:.5px"></div><div style="position:absolute;left:480px;top:10px;width:3.4px;height:3.6px;background:#3a4a5a;opacity:0.2;border-radius:.5px"></div><div style="position:absolute;left:489px;top:10px;width:3.4px;height:3.6px;background:#3a4a5a;opacity:0.6;border-radius:.5px"></div><div style="position:absolute;left:496px;top:10px;width:3.4px;height:3.6px;background:#3a4a5a;opacity:0.7;border-radius:.5px"></div><div style="position:absolute;left:503px;top:10px;width:3.4px;height:3.6px;background:#3a4a5a;opacity:0.45;border-radius:.5px"></div><div style="position:absolute;left:510px;top:8.2px;width:59.5px;height:7px;background:#fff"></div><div style="position:absolute;left:512px;top:10.8px;font-family:'Liberation Sans',sans-serif;font-size:3.6px;line-height:3.6px;color:#8a8a8a;white-space:pre;">Search Documentation</div><svg style="position:absolute;left:564px;top:9px" width="6" height="6" viewBox="0 0 6 6"><circle cx="3.4" cy="2.5" r="1.5" fill="none" stroke="#567" stroke-width="0.6"/><path d="M2.4 3.5L1 4.9" stroke="#567" stroke-width="0.7"/></svg><div style="position:absolute;left:572.5px;top:9.2px;width:4px;height:5px;background:linear-gradient(90deg,#e84 ,#6b4);border-radius:1px"></div><div style="position:absolute;left:580px;top:10.6px;font-family:'Liberation Sans',sans-serif;font-size:3.6px;line-height:3.6px;color:#cfe3f5;white-space:pre;">Mohammad &#9662;</div><div style="position:absolute;left:0px;top:15.8px;width:600px;height:7.5px;background:#fbfbfb"></div><div style="position:absolute;left:1px;top:17.5px;width:4.5px;height:4px;background:#7fb0d8;transform:rotate(45deg) scale(.7)"></div><svg style="position:absolute;left:7.5px;top:17px" width="6" height="5" viewBox="0 0 6 5"><path d="M0.5 2.5h4M3 0.8l1.7 1.7L3 4.2" fill="none" stroke="#8aa" stroke-width="0.8"/></svg><div style="position:absolute;left:15px;top:17.5px;width:5px;height:4px;background:#e8d060"></div><div style="position:absolute;left:22px;top:17.5px;width:5px;height:4.5px;background:#3a6aa8"></div><div style="position:absolute;left:29.5px;top:17.5px;width:5px;height:4px;background:#9ab860"></div><div style="position:absolute;left:37.5px;top:17.5px;width:5px;height:4.2px;background:#f4e070"></div><div style="position:absolute;left:44.5px;top:17.6px;font-family:'Liberation Sans',sans-serif;font-size:3.9px;line-height:3.9px;color:#333;white-space:pre;">&#9656; C: &#9656;  Users  &#9656;  mxc  &#9656;  Dropbox (Personal)  &#9656;  classes  &#9656;  udemy  &#9656;  statsML  &#9656;  descriptives  &#9656;</div><div style="position:absolute;left:595px;top:17.2px;font-family:'Liberation Sans',sans-serif;font-size:4px;line-height:4px;color:#222;white-space:pre;">&#9662;</div><div style="position:absolute;left:0px;top:23.3px;width:600px;height:215.2px;background:#f0f0f0"></div><div style="position:absolute;left:0px;top:23.3px;width:1.0px;height:215.2px;background:#5a7cb0"></div><div style="position:absolute;left:599.0px;top:23.3px;width:1.0px;height:215.2px;background:#5a7cb0"></div><div style="position:absolute;left:0px;top:23.3px;width:600px;height:6.6px;background:#0c4a86"></div><div style="position:absolute;left:1.5px;top:24.5px;width:3.8px;height:4px;background:#d9c8a8;border-radius:.5px"></div><div style="position:absolute;left:7.5px;top:24.7px;font-family:'Liberation Sans',sans-serif;font-size:3.65px;line-height:3.65px;color:#d6e6f6;white-space:pre;">Editor - C:\Users\mxc\Dropbox (Personal)\classes\udemy\statsML\descriptives\stats_descriptives_distributions.m</div><div style="position:absolute;left:586.5px;top:24.2px;font-family:'Liberation Sans',sans-serif;font-size:4.5px;line-height:4.5px;color:#cde;white-space:pre;">&#9680;</div><div style="position:absolute;left:593px;top:24.3px;font-family:'Liberation Sans',sans-serif;font-size:4.2px;line-height:4.2px;color:#cde;white-space:pre;">&#10005;</div><div style="position:absolute;left:1.3px;top:29.9px;width:597.4px;height:7.1px;background:#ebebeb"></div><div style="position:absolute;left:5px;top:30.2px;width:69px;height:6.8px;background:#fdfdfd"></div><div style="position:absolute;left:10px;top:31.6px;font-family:'Liberation Sans',sans-serif;font-size:3.9px;line-height:3.9px;color:#333;white-space:pre;">stats_descriptives_distributions.m</div><div style="position:absolute;left:69.5px;top:31.5px;font-family:'Liberation Sans',sans-serif;font-size:4px;line-height:4px;color:#bbb;white-space:pre;">&#215;</div><div style="position:absolute;left:77.5px;top:30.6px;font-family:'Liberation Sans',sans-serif;font-size:5.5px;line-height:5.5px;color:#333;white-space:pre;font-weight:bold">+</div><div style="position:absolute;left:1.3px;top:37px;width:27.3px;height:195.1px;background:#f1f1f1"></div><div style="position:absolute;left:28.6px;top:37px;width:560.1px;height:195.1px;background:#000"></div><div style="position:absolute;left:588.7px;top:37px;width:6px;height:195.1px;background:#ececec"></div><div style="position:absolute;left:589.2px;top:165px;width:5px;height:18px;background:#cdcdcd"></div><div style="position:absolute;left:589.9000000000001px;top:38px;font-family:'Liberation Sans',sans-serif;font-size:3.5px;line-height:3.5px;color:#777;white-space:pre;">&#708;</div><div style="position:absolute;left:594.7px;top:37px;width:4.2px;height:4.4px;background:#74bd76"></div><div style="position:absolute;left:1.3px;top:232.1px;width:592.4px;height:6px;background:#ececec"></div><div style="position:absolute;left:8px;top:232.7px;width:132px;height:4.6px;background:#c6c6c6"></div><div style="position:absolute;left:3px;top:233.0px;font-family:'Liberation Sans',sans-serif;font-size:4px;line-height:4px;color:#666;white-space:pre;">&#706;</div><div style="position:absolute;left:586px;top:233.0px;font-family:'Liberation Sans',sans-serif;font-size:4px;line-height:4px;color:#666;white-space:pre;">&#707;</div><div style="position:absolute;left:0px;top:238.1px;width:600px;height:0.8px;background:#1d4f85"></div><div style="position:absolute;left:0;top:0;width:600px;height:232.1px;overflow:hidden;clip-path:inset(37px 0 0 0)"><div style="position:absolute;left:8px;top:40.1px;font-family:'Liberation Sans',sans-serif;font-size:9.6px;line-height:9.6px;color:#6a6a6a;white-space:pre;letter-spacing:0.35px">97</div><div style="position:absolute;left:8px;top:53.52px;font-family:'Liberation Sans',sans-serif;font-size:9.6px;line-height:9.6px;color:#6a6a6a;white-space:pre;letter-spacing:0.35px">98</div><div style="position:absolute;left:8px;top:66.94px;font-family:'Liberation Sans',sans-serif;font-size:9.6px;line-height:9.6px;color:#6a6a6a;white-space:pre;letter-spacing:0.35px">99</div><div style="position:absolute;left:2px;top:80.36px;font-family:'Liberation Sans',sans-serif;font-size:9.6px;line-height:9.6px;color:#6a6a6a;white-space:pre;letter-spacing:0.35px">100</div><div style="position:absolute;left:2px;top:93.78px;font-family:'Liberation Sans',sans-serif;font-size:9.6px;line-height:9.6px;color:#6a6a6a;white-space:pre;letter-spacing:0.35px">101</div><div style="position:absolute;left:2px;top:107.19999999999999px;font-family:'Liberation Sans',sans-serif;font-size:9.6px;line-height:9.6px;color:#6a6a6a;white-space:pre;letter-spacing:0.35px">102</div><div style="position:absolute;left:2px;top:120.62px;font-family:'Liberation Sans',sans-serif;font-size:9.6px;line-height:9.6px;color:#6a6a6a;white-space:pre;letter-spacing:0.35px">103</div><div style="position:absolute;left:21.5px;top:124.42px;width:6px;height:0.9px;background:#888"></div><div style="position:absolute;left:2px;top:134.04px;font-family:'Liberation Sans',sans-serif;font-size:9.6px;line-height:9.6px;color:#6a6a6a;white-space:pre;letter-spacing:0.35px">104</div><div style="position:absolute;left:21.5px;top:137.84px;width:6px;height:0.9px;background:#888"></div><div style="position:absolute;left:2px;top:147.46px;font-family:'Liberation Sans',sans-serif;font-size:9.6px;line-height:9.6px;color:#6a6a6a;white-space:pre;letter-spacing:0.35px">105</div><div style="position:absolute;left:2px;top:160.88px;font-family:'Liberation Sans',sans-serif;font-size:9.6px;line-height:9.6px;color:#6a6a6a;white-space:pre;letter-spacing:0.35px">106</div><div style="position:absolute;left:21.5px;top:164.68px;width:6px;height:0.9px;background:#888"></div><div style="position:absolute;left:2px;top:174.29999999999998px;font-family:'Liberation Sans',sans-serif;font-size:9.6px;line-height:9.6px;color:#6a6a6a;white-space:pre;letter-spacing:0.35px">107</div><div style="position:absolute;left:21.5px;top:178.1px;width:6px;height:0.9px;background:#888"></div><div style="position:absolute;left:2px;top:187.72px;font-family:'Liberation Sans',sans-serif;font-size:9.6px;line-height:9.6px;color:#6a6a6a;white-space:pre;letter-spacing:0.35px">108</div><div style="position:absolute;left:2px;top:201.14px;font-family:'Liberation Sans',sans-serif;font-size:9.6px;line-height:9.6px;color:#6a6a6a;white-space:pre;letter-spacing:0.35px">109</div><div style="position:absolute;left:21.5px;top:204.94px;width:6px;height:0.9px;background:#888"></div><div style="position:absolute;left:2px;top:214.56px;font-family:'Liberation Sans',sans-serif;font-size:9.6px;line-height:9.6px;color:#6a6a6a;white-space:pre;letter-spacing:0.35px">110</div><div style="position:absolute;left:21.5px;top:218.36px;width:6px;height:0.9px;background:#888"></div><div style="position:absolute;left:2px;top:227.98px;font-family:'Liberation Sans',sans-serif;font-size:9.6px;line-height:9.6px;color:#6a6a6a;white-space:pre;letter-spacing:0.35px">111</div><div style="position:absolute;left:21.5px;top:231.78px;width:6px;height:0.9px;background:#888"></div><div style="position:absolute;left:28.6px;top:37px;width:560.1px;height:195.1px;overflow:hidden"><div style="position:absolute;left:-28.6px;top:-37px;font-family:'Liberation Mono',monospace;font-size:10px;line-height:13.42px;font-weight:bold;color:#fff"><div style="position:absolute;left:47px;top:39.1px;height:13.42px;white-space:pre"></div><div style="position:absolute;left:47px;top:52.52px;height:13.42px;white-space:pre"><span class="g">%% binomial</span></div><div style="position:absolute;left:47px;top:65.94px;height:13.42px;white-space:pre"></div><div style="position:absolute;left:47px;top:79.36px;height:13.42px;white-space:pre"><span class="g">% a binomial distribution is the probability of K heads in N coin tosses,</span></div><div style="position:absolute;left:47px;top:92.78px;height:13.42px;white-space:pre"><span class="g">% given a probability of p heads (e.g., </span><span class="hl">.5</span><span class="g"> is a fair coin).</span></div><div style="position:absolute;left:47px;top:106.19999999999999px;height:13.42px;white-space:pre"></div><div style="position:absolute;left:47px;top:119.62px;height:13.42px;white-space:pre"><span class="w">n = 10; </span><span class="g">% number on coin tosses</span></div><div style="position:absolute;left:47px;top:133.04px;height:13.42px;white-space:pre"><span class="w">p = .5; </span><span class="g">% probability of heads</span></div><div style="position:absolute;left:47px;top:146.46px;height:13.42px;white-space:pre"></div><div style="position:absolute;left:47px;top:159.88px;height:13.42px;white-space:pre"><span class="w">x = 0:n+2;</span></div><div style="position:absolute;left:47px;top:173.29999999999998px;height:13.42px;white-space:pre"><span class="w">bindist = binopdf(x,n,p);</span></div><div style="position:absolute;left:47px;top:186.72px;height:13.42px;white-space:pre"></div><div style="position:absolute;left:47px;top:200.14px;height:13.42px;white-space:pre"><span class="w">figure(4), clf</span></div><div style="position:absolute;left:47px;top:213.56px;height:13.42px;white-space:pre"><span class="w">bar(x,bindist)</span></div><div style="position:absolute;left:47px;top:226.98px;height:13.42px;white-space:pre"><span class="w">title([</span><span class="m">&#x27;Binomial distribution (n=&#x27;</span><span class="w"> num2str(n) </span><span class="m">&#x27;, p=&#x27;</span><span class="w"> num2str(p) </span><span class="m">&#x27;)&#x27;</span><span class="w">])</span></div></div></div></div><div style="position:absolute;left:47px;top:50.3px;width:542px;height:0.9px;background:#8a8a8a"></div><div style="position:absolute;left:0px;top:238.8px;width:600px;height:7.5px;background:#fafafa"></div><div style="position:absolute;left:2px;top:240.70000000000002px;font-family:'Liberation Sans',sans-serif;font-size:3.8px;line-height:3.8px;color:#777;white-space:pre;">Command Window</div><div style="position:absolute;left:594.5px;top:239.5px;font-family:'Liberation Sans',sans-serif;font-size:3.5px;line-height:3.5px;color:#777;white-space:pre;">&#708;</div><div style="position:absolute;left:0px;top:246.3px;width:14.2px;height:81.69999999999999px;background:#f3f3f3"></div><div style="position:absolute;left:14.2px;top:246.3px;width:580px;height:81.69999999999999px;background:#0d0d0d"></div><div style="position:absolute;left:594.2px;top:246.3px;width:5.8px;height:81.69999999999999px;background:#ececec"></div><div style="position:absolute;left:594.8px;top:320px;width:4.5px;height:3.2px;background:#d4d4d4"></div><div style="position:absolute;left:595.3px;top:247.5px;font-family:'Liberation Sans',sans-serif;font-size:3.6px;line-height:3.6px;color:#666;white-space:pre;">&#708;</div><div style="position:absolute;left:595.3px;top:324.4px;font-family:'Liberation Sans',sans-serif;font-size:3.6px;line-height:3.6px;color:#666;white-space:pre;">&#709;</div><div style="position:absolute;left:1.8px;top:314.2px;font-family:'Liberation Sans',sans-serif;font-size:13.5px;line-height:13.5px;color:#111;white-space:pre;font-family:'Liberation Serif',serif;letter-spacing:-2.0px;-webkit-text-stroke:0.25px #111"><i>f</i><i>x</i></div><div style="position:absolute;left:0px;top:328px;width:600px;height:8px;background:#f0f0f0"></div><div style="position:absolute;left:0;top:0;width:594px;height:328px;overflow:hidden;clip-path:inset(246.3px 0 0 14px);font-family:'Liberation Mono',monospace;font-size:10px;line-height:13.42px;font-weight:bold;color:#f2f2f2"><div style="position:absolute;left:27.3px;top:288.4px;width:30px;height:13.6px;background:#f4f4f4"></div><div style="position:absolute;left:15.5px;top:250.3px;height:13.42px;white-space:pre"></div><div style="position:absolute;left:15.5px;top:263.72px;height:13.42px;white-space:pre">ans =</div><div style="position:absolute;left:15.5px;top:277.14px;height:13.42px;white-space:pre"></div><div style="position:absolute;left:15.5px;top:290.56px;height:13.42px;white-space:pre">  <span style="color:#111"> 87.5</span>969</div><div style="position:absolute;left:15.5px;top:303.98px;height:13.42px;white-space:pre"></div><div style="position:absolute;left:15.5px;top:317.4px;height:13.42px;white-space:pre">&gt;&gt;</div></div><div style="position:absolute;left:153px;top:332.2px;font-family:'Liberation Sans',sans-serif;font-size:3.6px;line-height:3.6px;color:#555;white-space:pre;">script</div><div style="position:absolute;left:565px;top:332.2px;font-family:'Liberation Sans',sans-serif;font-size:3.6px;line-height:3.6px;color:#555;white-space:pre;">Ln  30    Col  1</div><div style="position:absolute;left:283.9px;top:88.9px;width:18.2px;height:18.2px;border-radius:50%;background:radial-gradient(circle closest-side,rgba(90,120,235,0.62) 0%,rgba(95,125,235,0.50) 45%,rgba(100,130,240,0.22) 75%,rgba(100,130,240,0) 100%)"></div></div><div style="position:absolute;left:600px;top:336.6px;width:600px;height:337px;overflow:hidden;background:#f0f0f0;will-change:transform"><div style="position:absolute;left:0px;top:0px;width:600px;height:7.6px;background:#7c4cb2"></div><div style="position:absolute;left:1.5px;top:1.3px;width:3.5px;height:5px;background:#d86a3a;border-radius:1px;opacity:.8"></div><div style="position:absolute;left:7px;top:1.6px;font-family:'Liberation Sans',sans-serif;font-size:4.2px;line-height:4.2px;color:#e8dcf4;white-space:pre;">MATLAB R2017b - academic use</div><svg style="position:absolute;left:555px;top:0" width="45" height="8" viewBox="0 0 45 8"><path d="M7 3.6h3.4" stroke="#e8dcf4" stroke-width="0.6"/><rect x="21.3" y="1.9" width="3" height="3" fill="none" stroke="#e8dcf4" stroke-width="0.55"/><path d="M35.2 2.1l3 3M38.2 2.1l-3 3" stroke="#e8dcf4" stroke-width="0.6"/></svg><div style="position:absolute;left:0px;top:7.6px;width:600px;height:8.2px;background:#0c4a86"></div><div style="position:absolute;left:88px;top:7.6px;width:94px;height:8.2px;background:#1b86cc"></div><div style="position:absolute;left:10px;top:11.2px;font-family:'Liberation Sans',sans-serif;font-size:3.6px;line-height:3.6px;color:#cfe3f5;white-space:pre;">HOME</div><div style="position:absolute;left:40px;top:11.2px;font-family:'Liberation Sans',sans-serif;font-size:3.6px;line-height:3.6px;color:#cfe3f5;white-space:pre;">PLOTS</div><div style="position:absolute;left:70.5px;top:11.2px;font-family:'Liberation Sans',sans-serif;font-size:3.6px;line-height:3.6px;color:#cfe3f5;white-space:pre;">APPS</div><div style="position:absolute;left:98px;top:11.2px;font-family:'Liberation Sans',sans-serif;font-size:3.6px;line-height:3.6px;color:#cfe3f5;white-space:pre;">EDITOR</div><div style="position:absolute;left:130px;top:11.2px;font-family:'Liberation Sans',sans-serif;font-size:3.6px;line-height:3.6px;color:#cfe3f5;white-space:pre;">PUBLISH</div><div style="position:absolute;left:163px;top:11.2px;font-family:'Liberation Sans',sans-serif;font-size:3.6px;line-height:3.6px;color:#cfe3f5;white-space:pre;">VIEW</div><div style="position:absolute;left:440px;top:8.4px;width:69px;height:6.8px;background:#a6bdd5;border-radius:2.5px 0 0 2.5px"></div><div style="position:absolute;left:445px;top:10px;width:3.4px;height:3.6px;background:#3a4a5a;opacity:0.75;border-radius:.5px"></div><div style="position:absolute;left:452px;top:10px;width:3.4px;height:3.6px;background:#3a4a5a;opacity:0.5;border-radius:.5px"></div><div style="position:absolute;left:459px;top:10px;width:3.4px;height:3.6px;background:#3a4a5a;opacity:0.45;border-radius:.5px"></div><div style="position:absolute;left:466px;top:10px;width:3.4px;height:3.6px;background:#3a4a5a;opacity:0.55;border-radius:.5px"></div><div style="position:absolute;left:473px;top:10px;width:3.4px;height:3.6px;background:#3a4a5a;opacity:0.2;border-radius:.5px"></div><div style="position:absolute;left:480px;top:10px;width:3.4px;height:3.6px;background:#3a4a5a;opacity:0.2;border-radius:.5px"></div><div style="position:absolute;left:489px;top:10px;width:3.4px;height:3.6px;background:#3a4a5a;opacity:0.6;border-radius:.5px"></div><div style="position:absolute;left:496px;top:10px;width:3.4px;height:3.6px;background:#3a4a5a;opacity:0.7;border-radius:.5px"></div><div style="position:absolute;left:503px;top:10px;width:3.4px;height:3.6px;background:#3a4a5a;opacity:0.45;border-radius:.5px"></div><div style="position:absolute;left:510px;top:8.2px;width:59.5px;height:7px;background:#fff"></div><div style="position:absolute;left:512px;top:10.8px;font-family:'Liberation Sans',sans-serif;font-size:3.6px;line-height:3.6px;color:#8a8a8a;white-space:pre;">Search Documentation</div><svg style="position:absolute;left:564px;top:9px" width="6" height="6" viewBox="0 0 6 6"><circle cx="3.4" cy="2.5" r="1.5" fill="none" stroke="#567" stroke-width="0.6"/><path d="M2.4 3.5L1 4.9" stroke="#567" stroke-width="0.7"/></svg><div style="position:absolute;left:572.5px;top:9.2px;width:4px;height:5px;background:linear-gradient(90deg,#e84 ,#6b4);border-radius:1px"></div><div style="position:absolute;left:580px;top:10.6px;font-family:'Liberation Sans',sans-serif;font-size:3.6px;line-height:3.6px;color:#cfe3f5;white-space:pre;">Mohammad &#9662;</div><div style="position:absolute;left:0px;top:15.8px;width:600px;height:7.5px;background:#fbfbfb"></div><div style="position:absolute;left:1px;top:17.5px;width:4.5px;height:4px;background:#7fb0d8;transform:rotate(45deg) scale(.7)"></div><svg style="position:absolute;left:7.5px;top:17px" width="6" height="5" viewBox="0 0 6 5"><path d="M0.5 2.5h4M3 0.8l1.7 1.7L3 4.2" fill="none" stroke="#8aa" stroke-width="0.8"/></svg><div style="position:absolute;left:15px;top:17.5px;width:5px;height:4px;background:#e8d060"></div><div style="position:absolute;left:22px;top:17.5px;width:5px;height:4.5px;background:#3a6aa8"></div><div style="position:absolute;left:29.5px;top:17.5px;width:5px;height:4px;background:#9ab860"></div><div style="position:absolute;left:37.5px;top:17.5px;width:5px;height:4.2px;background:#f4e070"></div><div style="position:absolute;left:44.5px;top:17.6px;font-family:'Liberation Sans',sans-serif;font-size:3.9px;line-height:3.9px;color:#333;white-space:pre;">&#9656; C: &#9656;  Users  &#9656;  mxc  &#9656;  Dropbox (Personal)  &#9656;  classes  &#9656;  udemy  &#9656;  statsML  &#9656;  descriptives  &#9656;</div><div style="position:absolute;left:595px;top:17.2px;font-family:'Liberation Sans',sans-serif;font-size:4px;line-height:4px;color:#222;white-space:pre;">&#9662;</div><div style="position:absolute;left:0px;top:23.3px;width:340px;height:215.2px;background:#f0f0f0"></div><div style="position:absolute;left:0px;top:23.3px;width:1.0px;height:215.2px;background:#5a7cb0"></div><div style="position:absolute;left:339.0px;top:23.3px;width:1.0px;height:215.2px;background:#5a7cb0"></div><div style="position:absolute;left:0px;top:23.3px;width:340px;height:6.6px;background:#0c4a86"></div><div style="position:absolute;left:1.5px;top:24.5px;width:3.8px;height:4px;background:#d9c8a8;border-radius:.5px"></div><div style="position:absolute;left:7.5px;top:24.7px;font-family:'Liberation Sans',sans-serif;font-size:3.65px;line-height:3.65px;color:#d6e6f6;white-space:pre;">Editor - C:\Users\mxc\Dropbox (Personal)\classes\udemy\statsML\descriptives\stats_descriptives_distributions.m</div><div style="position:absolute;left:326.5px;top:24.2px;font-family:'Liberation Sans',sans-serif;font-size:4.5px;line-height:4.5px;color:#cde;white-space:pre;">&#9680;</div><div style="position:absolute;left:333px;top:24.3px;font-family:'Liberation Sans',sans-serif;font-size:4.2px;line-height:4.2px;color:#cde;white-space:pre;">&#10005;</div><div style="position:absolute;left:1.3px;top:29.9px;width:337.4px;height:7.1px;background:#ebebeb"></div><div style="position:absolute;left:5px;top:30.2px;width:69px;height:6.8px;background:#fdfdfd"></div><div style="position:absolute;left:10px;top:31.6px;font-family:'Liberation Sans',sans-serif;font-size:3.9px;line-height:3.9px;color:#333;white-space:pre;">stats_descriptives_distributions.m</div><div style="position:absolute;left:69.5px;top:31.5px;font-family:'Liberation Sans',sans-serif;font-size:4px;line-height:4px;color:#bbb;white-space:pre;">&#215;</div><div style="position:absolute;left:77.5px;top:30.6px;font-family:'Liberation Sans',sans-serif;font-size:5.5px;line-height:5.5px;color:#333;white-space:pre;font-weight:bold">+</div><div style="position:absolute;left:1.3px;top:37px;width:27.3px;height:195.1px;background:#f1f1f1"></div><div style="position:absolute;left:28.6px;top:37px;width:300.09999999999997px;height:195.1px;background:#000"></div><div style="position:absolute;left:328.7px;top:37px;width:6px;height:195.1px;background:#ececec"></div><div style="position:absolute;left:329.2px;top:203px;width:5px;height:19px;background:#cdcdcd"></div><div style="position:absolute;left:329.9px;top:38px;font-family:'Liberation Sans',sans-serif;font-size:3.5px;line-height:3.5px;color:#777;white-space:pre;">&#708;</div><div style="position:absolute;left:334.7px;top:37px;width:4.2px;height:4.4px;background:#74bd76"></div><div style="position:absolute;left:1.3px;top:232.1px;width:332.4px;height:6px;background:#ececec"></div><div style="position:absolute;left:8px;top:232.7px;width:132px;height:4.6px;background:#c6c6c6"></div><div style="position:absolute;left:3px;top:233.0px;font-family:'Liberation Sans',sans-serif;font-size:4px;line-height:4px;color:#666;white-space:pre;">&#706;</div><div style="position:absolute;left:326px;top:233.0px;font-family:'Liberation Sans',sans-serif;font-size:4px;line-height:4px;color:#666;white-space:pre;">&#707;</div><div style="position:absolute;left:0px;top:238.1px;width:340px;height:0.8px;background:#1d4f85"></div><div style="position:absolute;left:0;top:0;width:600px;height:232.1px;overflow:hidden;clip-path:inset(37px 0 0 0)"><div style="position:absolute;left:2px;top:40.1px;font-family:'Liberation Sans',sans-serif;font-size:9.6px;line-height:9.6px;color:#6a6a6a;white-space:pre;letter-spacing:0.35px">127</div><div style="position:absolute;left:2px;top:53.52px;font-family:'Liberation Sans',sans-serif;font-size:9.6px;line-height:9.6px;color:#6a6a6a;white-space:pre;letter-spacing:0.35px">128</div><div style="position:absolute;left:2px;top:66.94px;font-family:'Liberation Sans',sans-serif;font-size:9.6px;line-height:9.6px;color:#6a6a6a;white-space:pre;letter-spacing:0.35px">129</div><div style="position:absolute;left:2px;top:80.36px;font-family:'Liberation Sans',sans-serif;font-size:9.6px;line-height:9.6px;color:#6a6a6a;white-space:pre;letter-spacing:0.35px">130</div><div style="position:absolute;left:21.5px;top:84.16px;width:6px;height:0.9px;background:#888"></div><div style="position:absolute;left:2px;top:93.78px;font-family:'Liberation Sans',sans-serif;font-size:9.6px;line-height:9.6px;color:#6a6a6a;white-space:pre;letter-spacing:0.35px">131</div><div style="position:absolute;left:21.5px;top:97.58px;width:6px;height:0.9px;background:#888"></div><div style="position:absolute;left:2px;top:107.19999999999999px;font-family:'Liberation Sans',sans-serif;font-size:9.6px;line-height:9.6px;color:#6a6a6a;white-space:pre;letter-spacing:0.35px">132</div><div style="position:absolute;left:2px;top:120.62px;font-family:'Liberation Sans',sans-serif;font-size:9.6px;line-height:9.6px;color:#6a6a6a;white-space:pre;letter-spacing:0.35px">133</div><div style="position:absolute;left:2px;top:134.04px;font-family:'Liberation Sans',sans-serif;font-size:9.6px;line-height:9.6px;color:#6a6a6a;white-space:pre;letter-spacing:0.35px">134</div><div style="position:absolute;left:21.5px;top:137.84px;width:6px;height:0.9px;background:#888"></div><div style="position:absolute;left:2px;top:147.46px;font-family:'Liberation Sans',sans-serif;font-size:9.6px;line-height:9.6px;color:#6a6a6a;white-space:pre;letter-spacing:0.35px">135</div><div style="position:absolute;left:2px;top:160.88px;font-family:'Liberation Sans',sans-serif;font-size:9.6px;line-height:9.6px;color:#6a6a6a;white-space:pre;letter-spacing:0.35px">136</div><div style="position:absolute;left:2px;top:174.29999999999998px;font-family:'Liberation Sans',sans-serif;font-size:9.6px;line-height:9.6px;color:#6a6a6a;white-space:pre;letter-spacing:0.35px">137</div><div style="position:absolute;left:21.5px;top:178.1px;width:6px;height:0.9px;background:#888"></div><div style="position:absolute;left:2px;top:187.72px;font-family:'Liberation Sans',sans-serif;font-size:9.6px;line-height:9.6px;color:#6a6a6a;white-space:pre;letter-spacing:0.35px">138</div><div style="position:absolute;left:2px;top:201.14px;font-family:'Liberation Sans',sans-serif;font-size:9.6px;line-height:9.6px;color:#6a6a6a;white-space:pre;letter-spacing:0.35px">139</div><div style="position:absolute;left:21.5px;top:204.94px;width:6px;height:0.9px;background:#888"></div><div style="position:absolute;left:2px;top:214.56px;font-family:'Liberation Sans',sans-serif;font-size:9.6px;line-height:9.6px;color:#6a6a6a;white-space:pre;letter-spacing:0.35px">140</div><div style="position:absolute;left:21.5px;top:218.36px;width:6px;height:0.9px;background:#888"></div><div style="position:absolute;left:2px;top:227.98px;font-family:'Liberation Sans',sans-serif;font-size:9.6px;line-height:9.6px;color:#6a6a6a;white-space:pre;letter-spacing:0.35px">141</div><div style="position:absolute;left:21.5px;top:231.78px;width:6px;height:0.9px;background:#888"></div><div style="position:absolute;left:28.6px;top:37px;width:300.09999999999997px;height:195.1px;overflow:hidden"><div style="position:absolute;left:-28.6px;top:-37px;font-family:'Liberation Mono',monospace;font-size:10px;line-height:13.42px;font-weight:bold;color:#fff"><div style="position:absolute;left:47px;top:39.1px;height:13.42px;white-space:pre"><span class="g">%% F</span></div><div style="position:absolute;left:47px;top:52.52px;height:13.42px;white-space:pre"></div><div style="position:absolute;left:47px;top:65.94px;height:13.42px;white-space:pre"><span class="g">% parameters</span></div><div style="position:absolute;left:47px;top:79.36px;height:13.42px;white-space:pre"><span class="pl">num_df</span><span class="w"> = 5; </span><span class="g">% numerator degrees of freedom</span></div><div style="position:absolute;left:47px;top:92.78px;height:13.42px;white-space:pre"><span class="hl">den_df</span><span class="w"> = 100; </span><span class="g">% denominator df</span></div><div style="position:absolute;left:47px;top:106.19999999999999px;height:13.42px;white-space:pre"></div><div style="position:absolute;left:47px;top:119.62px;height:13.42px;white-space:pre"><span class="g">% values to evaluate</span></div><div style="position:absolute;left:47px;top:133.04px;height:13.42px;white-space:pre"><span class="w">x = linspace(0,10,10001);</span></div><div style="position:absolute;left:47px;top:146.46px;height:13.42px;white-space:pre"></div><div style="position:absolute;left:47px;top:159.88px;height:13.42px;white-space:pre"><span class="g">% the distribution</span></div><div style="position:absolute;left:47px;top:173.29999999999998px;height:13.42px;white-space:pre"><span class="w">fdist = fpdf(x,</span><span class="pl">num_df</span><span class="w">,den_df);</span></div><div style="position:absolute;left:47px;top:186.72px;height:13.42px;white-space:pre"></div><div style="position:absolute;left:47px;top:200.14px;height:13.42px;white-space:pre"><span class="w">figure(6), clf</span></div><div style="position:absolute;left:47px;top:213.56px;height:13.42px;white-space:pre"><span class="w">plot(x,fdist,</span><span class="m">&#x27;linewidth&#x27;</span><span class="w">,2)</span></div><div style="position:absolute;left:47px;top:226.98px;height:13.42px;white-space:pre"><span class="w">title(sprintf(</span><span class="m">&#x27;F(%g,%g) distribution&#x27;</span><span class="w">, </span><span class="pl">num_df</span><span class="w">,den_df))</span></div></div></div></div><div style="position:absolute;left:334.8px;top:204.9px;width:3.6px;height:0.7px;background:#555"></div><div style="position:absolute;left:334.8px;top:213.8px;width:3.6px;height:0.7px;background:#555"></div><div style="position:absolute;left:334.8px;top:218.8px;width:3.6px;height:0.7px;background:#555"></div><div style="position:absolute;left:340.5px;top:23.3px;width:259.5px;height:215.29999999999998px;background:#f0f0f0"></div><div style="position:absolute;left:340.5px;top:23.3px;width:259.5px;height:6.6px;background:#f6f6f6"></div><div style="position:absolute;left:343.0px;top:24.3px;width:3.5px;height:4.2px;background:#c9a080;opacity:.7"></div><div style="position:absolute;left:349.0px;top:24.8px;font-family:'Liberation Sans',sans-serif;font-size:3.9px;line-height:3.9px;color:#444;white-space:pre;">Figures - Figure 5</div><div style="position:absolute;left:588.0px;top:24.3px;font-family:'Liberation Sans',sans-serif;font-size:4.2px;line-height:4.2px;color:#777;white-space:pre;">&#9680;</div><div style="position:absolute;left:594.0px;top:24.4px;font-family:'Liberation Sans',sans-serif;font-size:4px;line-height:4px;color:#333;white-space:pre;">&#10005;</div><div style="position:absolute;left:340.5px;top:36.8px;width:259.5px;height:0.7px;background:#b8b8b8"></div><div style="position:absolute;left:344.0px;top:31.4px;width:0.6px;height:5.2px;background:#aaa"></div><div style="position:absolute;left:347.0px;top:30.6px;width:25.6px;height:6.4px;background:#dedede;border-right:0.6px solid #c8c8c8"></div><div style="position:absolute;left:351.0px;top:32.6px;font-family:'Liberation Sans',sans-serif;font-size:3.7px;line-height:3.7px;color:#666;white-space:pre;">Figure 1</div><div style="position:absolute;left:366.6px;top:32.4px;font-family:'Liberation Sans',sans-serif;font-size:4px;line-height:4px;color:#bbb;white-space:pre;">&#215;</div><div style="position:absolute;left:372.6px;top:30.6px;width:25.6px;height:6.4px;background:#dedede;border-right:0.6px solid #c8c8c8"></div><div style="position:absolute;left:376.6px;top:32.6px;font-family:'Liberation Sans',sans-serif;font-size:3.7px;line-height:3.7px;color:#666;white-space:pre;">Figure 3</div><div style="position:absolute;left:392.20000000000005px;top:32.4px;font-family:'Liberation Sans',sans-serif;font-size:4px;line-height:4px;color:#bbb;white-space:pre;">&#215;</div><div style="position:absolute;left:398.20000000000005px;top:30.6px;width:25.6px;height:6.4px;background:#fafafa;border-right:0.6px solid #c8c8c8"></div><div style="position:absolute;left:402.20000000000005px;top:32.6px;font-family:'Liberation Sans',sans-serif;font-size:3.7px;line-height:3.7px;color:#444;white-space:pre;">Figure 5</div><div style="position:absolute;left:417.80000000000007px;top:32.4px;font-family:'Liberation Sans',sans-serif;font-size:4px;line-height:4px;color:#bbb;white-space:pre;">&#215;</div><svg style="position:absolute;left:0;top:0" width="600" height="238.6" viewBox="0 0 600 238.6"><rect x="375.2" y="53.0" width="199.3" height="163.3" fill="#fff" stroke="#8a8a8a" stroke-width="0.6"/><line x1="375.20" y1="216.3" x2="375.20" y2="214.70000000000002" stroke="#333" stroke-width="0.45"/><line x1="375.20" y1="53.0" x2="375.20" y2="54.6" stroke="#333" stroke-width="0.45"/><text x="375.20" y="222.60000000000002" font-size="3.8" font-family="Liberation Sans" fill="#222" text-anchor="middle">0</text><line x1="395.13" y1="216.3" x2="395.13" y2="214.70000000000002" stroke="#333" stroke-width="0.45"/><line x1="395.13" y1="53.0" x2="395.13" y2="54.6" stroke="#333" stroke-width="0.45"/><text x="395.13" y="222.60000000000002" font-size="3.8" font-family="Liberation Sans" fill="#222" text-anchor="middle">1</text><line x1="415.06" y1="216.3" x2="415.06" y2="214.70000000000002" stroke="#333" stroke-width="0.45"/><line x1="415.06" y1="53.0" x2="415.06" y2="54.6" stroke="#333" stroke-width="0.45"/><text x="415.06" y="222.60000000000002" font-size="3.8" font-family="Liberation Sans" fill="#222" text-anchor="middle">2</text><line x1="434.99" y1="216.3" x2="434.99" y2="214.70000000000002" stroke="#333" stroke-width="0.45"/><line x1="434.99" y1="53.0" x2="434.99" y2="54.6" stroke="#333" stroke-width="0.45"/><text x="434.99" y="222.60000000000002" font-size="3.8" font-family="Liberation Sans" fill="#222" text-anchor="middle">3</text><line x1="454.92" y1="216.3" x2="454.92" y2="214.70000000000002" stroke="#333" stroke-width="0.45"/><line x1="454.92" y1="53.0" x2="454.92" y2="54.6" stroke="#333" stroke-width="0.45"/><text x="454.92" y="222.60000000000002" font-size="3.8" font-family="Liberation Sans" fill="#222" text-anchor="middle">4</text><line x1="474.85" y1="216.3" x2="474.85" y2="214.70000000000002" stroke="#333" stroke-width="0.45"/><line x1="474.85" y1="53.0" x2="474.85" y2="54.6" stroke="#333" stroke-width="0.45"/><text x="474.85" y="222.60000000000002" font-size="3.8" font-family="Liberation Sans" fill="#222" text-anchor="middle">5</text><line x1="494.78" y1="216.3" x2="494.78" y2="214.70000000000002" stroke="#333" stroke-width="0.45"/><line x1="494.78" y1="53.0" x2="494.78" y2="54.6" stroke="#333" stroke-width="0.45"/><text x="494.78" y="222.60000000000002" font-size="3.8" font-family="Liberation Sans" fill="#222" text-anchor="middle">6</text><line x1="514.71" y1="216.3" x2="514.71" y2="214.70000000000002" stroke="#333" stroke-width="0.45"/><line x1="514.71" y1="53.0" x2="514.71" y2="54.6" stroke="#333" stroke-width="0.45"/><text x="514.71" y="222.60000000000002" font-size="3.8" font-family="Liberation Sans" fill="#222" text-anchor="middle">7</text><line x1="534.64" y1="216.3" x2="534.64" y2="214.70000000000002" stroke="#333" stroke-width="0.45"/><line x1="534.64" y1="53.0" x2="534.64" y2="54.6" stroke="#333" stroke-width="0.45"/><text x="534.64" y="222.60000000000002" font-size="3.8" font-family="Liberation Sans" fill="#222" text-anchor="middle">8</text><line x1="554.57" y1="216.3" x2="554.57" y2="214.70000000000002" stroke="#333" stroke-width="0.45"/><line x1="554.57" y1="53.0" x2="554.57" y2="54.6" stroke="#333" stroke-width="0.45"/><text x="554.57" y="222.60000000000002" font-size="3.8" font-family="Liberation Sans" fill="#222" text-anchor="middle">9</text><line x1="574.50" y1="216.3" x2="574.50" y2="214.70000000000002" stroke="#333" stroke-width="0.45"/><line x1="574.50" y1="53.0" x2="574.50" y2="54.6" stroke="#333" stroke-width="0.45"/><text x="574.50" y="222.60000000000002" font-size="3.8" font-family="Liberation Sans" fill="#222" text-anchor="middle">10</text><line x1="375.2" y1="216.30" x2="376.8" y2="216.30" stroke="#333" stroke-width="0.45"/><line x1="574.5" y1="216.30" x2="572.9" y2="216.30" stroke="#333" stroke-width="0.45"/><text x="373.0" y="217.60" font-size="3.8" font-family="Liberation Sans" fill="#222" text-anchor="end">0</text><line x1="375.2" y1="195.89" x2="376.8" y2="195.89" stroke="#333" stroke-width="0.45"/><line x1="574.5" y1="195.89" x2="572.9" y2="195.89" stroke="#333" stroke-width="0.45"/><text x="373.0" y="197.19" font-size="3.8" font-family="Liberation Sans" fill="#222" text-anchor="end">0.1</text><line x1="375.2" y1="175.48" x2="376.8" y2="175.48" stroke="#333" stroke-width="0.45"/><line x1="574.5" y1="175.48" x2="572.9" y2="175.48" stroke="#333" stroke-width="0.45"/><text x="373.0" y="176.78" font-size="3.8" font-family="Liberation Sans" fill="#222" text-anchor="end">0.2</text><line x1="375.2" y1="155.06" x2="376.8" y2="155.06" stroke="#333" stroke-width="0.45"/><line x1="574.5" y1="155.06" x2="572.9" y2="155.06" stroke="#333" stroke-width="0.45"/><text x="373.0" y="156.36" font-size="3.8" font-family="Liberation Sans" fill="#222" text-anchor="end">0.3</text><line x1="375.2" y1="134.65" x2="376.8" y2="134.65" stroke="#333" stroke-width="0.45"/><line x1="574.5" y1="134.65" x2="572.9" y2="134.65" stroke="#333" stroke-width="0.45"/><text x="373.0" y="135.95" font-size="3.8" font-family="Liberation Sans" fill="#222" text-anchor="end">0.4</text><line x1="375.2" y1="114.24" x2="376.8" y2="114.24" stroke="#333" stroke-width="0.45"/><line x1="574.5" y1="114.24" x2="572.9" y2="114.24" stroke="#333" stroke-width="0.45"/><text x="373.0" y="115.54" font-size="3.8" font-family="Liberation Sans" fill="#222" text-anchor="end">0.5</text><line x1="375.2" y1="93.83" x2="376.8" y2="93.83" stroke="#333" stroke-width="0.45"/><line x1="574.5" y1="93.83" x2="572.9" y2="93.83" stroke="#333" stroke-width="0.45"/><text x="373.0" y="95.13" font-size="3.8" font-family="Liberation Sans" fill="#222" text-anchor="end">0.6</text><line x1="375.2" y1="73.41" x2="376.8" y2="73.41" stroke="#333" stroke-width="0.45"/><line x1="574.5" y1="73.41" x2="572.9" y2="73.41" stroke="#333" stroke-width="0.45"/><text x="373.0" y="74.71" font-size="3.8" font-family="Liberation Sans" fill="#222" text-anchor="end">0.7</text><line x1="375.2" y1="53.00" x2="376.8" y2="53.00" stroke="#333" stroke-width="0.45"/><line x1="574.5" y1="53.00" x2="572.9" y2="53.00" stroke="#333" stroke-width="0.45"/><text x="373.0" y="54.30" font-size="3.8" font-family="Liberation Sans" fill="#222" text-anchor="end">0.8</text><text x="474.85" y="50.7" font-size="4.65" font-weight="bold" font-family="Liberation Sans" fill="#111" text-anchor="middle">F(5,100) distribution</text><text x="474.85" y="228.8" font-size="4.4" font-family="Liberation Sans" fill="#222" text-anchor="middle">F value</text><path d="M375.20,216.30 L375.40,214.77 L375.60,212.07 L375.80,208.74 L376.00,204.96 L376.20,200.86 L376.40,196.53 L376.60,192.02 L376.79,187.41 L376.99,182.71 L377.19,177.98 L377.39,173.23 L377.59,168.49 L377.79,163.77 L377.99,159.11 L378.19,154.50 L378.39,149.97 L378.59,145.53 L378.79,141.17 L378.99,136.92 L379.19,132.77 L379.39,128.73 L379.58,124.81 L379.78,121.01 L379.98,117.33 L380.18,113.77 L380.38,110.34 L380.58,107.03 L380.78,103.86 L380.98,100.81 L381.18,97.89 L381.38,95.09 L381.58,92.42 L381.78,89.88 L381.98,87.46 L382.18,85.16 L382.37,82.99 L382.57,80.93 L382.77,78.99 L382.97,77.16 L383.17,75.45 L383.37,73.85 L383.57,72.35 L383.77,70.96 L383.97,69.68 L384.17,68.50 L384.37,67.42 L384.57,66.43 L384.77,65.54 L384.97,64.73 L385.16,64.02 L385.36,63.40 L385.56,62.86 L385.76,62.40 L385.96,62.01 L386.16,61.71 L386.36,61.48 L386.56,61.32 L386.76,61.23 L386.96,61.21 L387.16,61.26 L387.36,61.36 L387.56,61.53 L387.76,61.75 L387.96,62.03 L388.15,62.37 L388.35,62.76 L388.55,63.19 L388.75,63.68 L388.95,64.21 L389.15,64.78 L389.35,65.40 L389.55,66.06 L389.75,66.75 L389.95,67.49 L390.15,68.25 L390.35,69.05 L390.55,69.89 L390.75,70.75 L390.94,71.64 L391.14,72.56 L391.34,73.51 L391.54,74.48 L391.74,75.47 L391.94,76.49 L392.14,77.52 L392.34,78.58 L392.54,79.65 L392.74,80.74 L392.94,81.85 L393.14,82.97 L393.34,84.10 L393.54,85.25 L393.73,86.40 L393.93,87.57 L394.13,88.75 L394.33,89.94 L394.53,91.13 L394.73,92.33 L394.93,93.54 L395.13,94.75 L395.33,95.97 L395.53,97.19 L395.73,98.42 L395.93,99.64 L396.13,100.87 L396.33,102.10 L396.53,103.33 L396.72,104.57 L396.92,105.80 L397.12,107.03 L397.32,108.25 L397.52,109.48 L397.72,110.70 L397.92,111.92 L398.12,113.14 L398.32,114.35 L398.52,115.56 L398.72,116.77 L398.92,117.97 L399.12,119.16 L399.32,120.35 L399.51,121.53 L399.71,122.71 L399.91,123.88 L400.11,125.04 L400.31,126.20 L400.51,127.35 L400.71,128.49 L400.91,129.62 L401.11,130.75 L401.31,131.86 L401.51,132.97 L401.71,134.07 L401.91,135.17 L402.11,136.25 L402.30,137.32 L402.50,138.39 L402.70,139.45 L402.90,140.49 L403.10,141.53 L403.30,142.56 L403.50,143.58 L403.70,144.59 L403.90,145.59 L404.10,146.58 L404.30,147.56 L404.50,148.53 L404.70,149.49 L404.90,150.44 L405.09,151.38 L405.29,152.31 L405.49,153.23 L405.69,154.14 L405.89,155.05 L406.09,155.94 L406.29,156.82 L406.49,157.69 L406.69,158.55 L406.89,159.40 L407.09,160.24 L407.29,161.08 L407.49,161.90 L407.69,162.71 L407.89,163.51 L408.08,164.31 L408.28,165.09 L408.48,165.86 L408.68,166.63 L408.88,167.38 L409.08,168.13 L409.28,168.86 L409.48,169.59 L409.68,170.31 L409.88,171.01 L410.08,171.71 L410.28,172.40 L410.48,173.08 L410.68,173.75 L410.87,174.42 L411.07,175.07 L411.27,175.72 L411.47,176.35 L411.67,176.98 L411.87,177.60 L412.07,178.21 L412.27,178.81 L412.47,179.41 L412.67,179.99 L412.87,180.57 L413.07,181.14 L413.27,181.70 L413.47,182.25 L413.66,182.80 L413.86,183.34 L414.06,183.87 L414.26,184.39 L414.46,184.90 L414.66,185.41 L414.86,185.91 L415.06,186.40 L415.26,186.89 L415.46,187.37 L415.66,187.84 L415.86,188.30 L416.06,188.76 L416.26,189.21 L416.46,189.66 L416.65,190.09 L416.85,190.52 L417.05,190.95 L417.25,191.37 L417.45,191.78 L417.65,192.18 L417.85,192.58 L418.05,192.98 L418.25,193.36 L418.45,193.74 L418.65,194.12 L418.85,194.49 L419.05,194.85 L419.25,195.21 L419.44,195.56 L419.64,195.91 L419.84,196.25 L420.04,196.59 L420.24,196.92 L420.44,197.25 L420.64,197.57 L420.84,197.88 L421.04,198.19 L421.24,198.50 L421.44,198.80 L421.64,199.10 L421.84,199.39 L422.04,199.67 L422.23,199.96 L422.43,200.23 L422.63,200.51 L422.83,200.78 L423.03,201.04 L423.23,201.30 L423.43,201.56 L423.63,201.81 L423.83,202.06 L424.03,202.30 L424.23,202.54 L424.43,202.77 L424.63,203.01 L424.83,203.23 L425.02,203.46 L425.22,203.68 L425.42,203.90 L425.62,204.11 L425.82,204.32 L426.02,204.53 L426.22,204.73 L426.42,204.93 L426.62,205.13 L426.82,205.32 L427.02,205.51 L427.22,205.70 L427.42,205.88 L427.62,206.06 L427.82,206.24 L428.01,206.41 L428.21,206.59 L428.41,206.75 L428.61,206.92 L428.81,207.08 L429.01,207.24 L429.21,207.40 L429.41,207.56 L429.61,207.71 L429.81,207.86 L430.01,208.01 L430.21,208.15 L430.41,208.29 L430.61,208.43 L430.80,208.57 L431.00,208.71 L431.20,208.84 L431.40,208.97 L431.60,209.10 L431.80,209.23 L432.00,209.35 L432.20,209.47 L432.40,209.59 L432.60,209.71 L432.80,209.83 L433.00,209.94 L433.20,210.05 L433.40,210.16 L433.59,210.27 L433.79,210.38 L433.99,210.48 L434.19,210.58 L434.39,210.68 L434.59,210.78 L434.79,210.88 L434.99,210.98 L434.99,210.98 L437.32,211.98 L439.64,212.79 L441.97,213.46 L444.29,214.00 L446.62,214.43 L448.94,214.79 L451.27,215.08 L453.59,215.31 L455.92,215.50 L458.24,215.65 L460.57,215.77 L462.89,215.87 L465.22,215.96 L467.54,216.02 L469.87,216.07 L472.19,216.12 L474.52,216.15 L476.84,216.18 L479.17,216.20 L481.49,216.22 L483.82,216.24 L486.14,216.25 L488.47,216.26 L490.79,216.27 L493.12,216.27 L495.44,216.28 L497.77,216.28 L500.09,216.28 L502.42,216.29 L504.75,216.29 L507.07,216.29 L509.40,216.29 L511.72,216.29 L514.05,216.30 L516.37,216.30 L518.70,216.30 L521.02,216.30 L523.35,216.30 L525.67,216.30 L528.00,216.30 L530.32,216.30 L532.65,216.30 L534.97,216.30 L537.30,216.30 L539.62,216.30 L541.95,216.30 L544.27,216.30 L546.60,216.30 L548.92,216.30 L551.25,216.30 L553.57,216.30 L555.90,216.30 L558.22,216.30 L560.55,216.30 L562.87,216.30 L565.20,216.30 L567.52,216.30 L569.85,216.30 L572.17,216.30 L574.50,216.30" fill="none" stroke="#1c6aa0" stroke-width="1.0" stroke-linejoin="round"/></svg><div style="position:absolute;left:0px;top:238.8px;width:600px;height:7.5px;background:#fafafa"></div><div style="position:absolute;left:2px;top:240.70000000000002px;font-family:'Liberation Sans',sans-serif;font-size:3.8px;line-height:3.8px;color:#777;white-space:pre;">Command Window</div><div style="position:absolute;left:594.5px;top:239.5px;font-family:'Liberation Sans',sans-serif;font-size:3.5px;line-height:3.5px;color:#777;white-space:pre;">&#708;</div><div style="position:absolute;left:0px;top:246.3px;width:14.2px;height:81.69999999999999px;background:#f3f3f3"></div><div style="position:absolute;left:14.2px;top:246.3px;width:580px;height:81.69999999999999px;background:#0d0d0d"></div><div style="position:absolute;left:594.2px;top:246.3px;width:5.8px;height:81.69999999999999px;background:#ececec"></div><div style="position:absolute;left:594.8px;top:320px;width:4.5px;height:3.2px;background:#d4d4d4"></div><div style="position:absolute;left:595.3px;top:247.5px;font-family:'Liberation Sans',sans-serif;font-size:3.6px;line-height:3.6px;color:#666;white-space:pre;">&#708;</div><div style="position:absolute;left:595.3px;top:324.4px;font-family:'Liberation Sans',sans-serif;font-size:3.6px;line-height:3.6px;color:#666;white-space:pre;">&#709;</div><div style="position:absolute;left:1.8px;top:314.2px;font-family:'Liberation Sans',sans-serif;font-size:13.5px;line-height:13.5px;color:#111;white-space:pre;font-family:'Liberation Serif',serif;letter-spacing:-2.0px;-webkit-text-stroke:0.25px #111"><i>f</i><i>x</i></div><div style="position:absolute;left:0px;top:328px;width:600px;height:8px;background:#f0f0f0"></div><div style="position:absolute;left:0;top:0;width:594px;height:328px;overflow:hidden;clip-path:inset(246.3px 0 0 14px);font-family:'Liberation Mono',monospace;font-size:10px;line-height:13.42px;font-weight:bold;color:#f2f2f2"><div style="position:absolute;left:27.3px;top:288.4px;width:30px;height:13.6px;background:#f4f4f4"></div><div style="position:absolute;left:15.5px;top:250.3px;height:13.42px;white-space:pre"></div><div style="position:absolute;left:15.5px;top:263.72px;height:13.42px;white-space:pre">ans =</div><div style="position:absolute;left:15.5px;top:277.14px;height:13.42px;white-space:pre"></div><div style="position:absolute;left:15.5px;top:290.56px;height:13.42px;white-space:pre">  <span style="color:#111"> 87.5</span>969</div><div style="position:absolute;left:15.5px;top:303.98px;height:13.42px;white-space:pre"></div><div style="position:absolute;left:15.5px;top:317.4px;height:13.42px;white-space:pre">&gt;&gt;</div></div><div style="position:absolute;left:153px;top:332.2px;font-family:'Liberation Sans',sans-serif;font-size:3.6px;line-height:3.6px;color:#555;white-space:pre;">script</div><div style="position:absolute;left:565px;top:332.2px;font-family:'Liberation Sans',sans-serif;font-size:3.6px;line-height:3.6px;color:#555;white-space:pre;">Ln  30    Col  1</div><div style="position:absolute;left:1px;top:331.5px;font-family:'Liberation Sans',sans-serif;font-size:3.6px;line-height:3.6px;color:#444;white-space:pre;">3 usages of "num_df" found</div><div style="position:absolute;left:73.9px;top:90.9px;width:18.2px;height:18.2px;border-radius:50%;background:radial-gradient(circle closest-side,rgba(90,120,235,0.62) 0%,rgba(95,125,235,0.50) 45%,rgba(100,130,240,0.22) 75%,rgba(100,130,240,0) 100%)"></div></div><div style="position:absolute;left:1200px;top:336.6px;width:600px;height:337px;overflow:hidden;background:#f0f0f0;will-change:transform"><div style="position:absolute;left:0px;top:0px;width:600px;height:11.4px;background:#7649ad"></div><div style="position:absolute;left:0px;top:0px;width:600px;height:0.7px;background:#6a5a7a"></div><div style="position:absolute;left:2.5px;top:1.4px;width:75px;height:10.2px;background:#fff;border-radius:2.5px 2.5px 0 0"></div><div style="position:absolute;left:6.5px;top:4.2px;width:4.5px;height:4.5px;background:#f0a040;border-radius:50%;opacity:.85"></div><div style="position:absolute;left:14px;top:4.6px;font-family:'Liberation Sans',sans-serif;font-size:3.9px;line-height:3.9px;color:#555;white-space:pre;">stats_descriptives_distributions</div><div style="position:absolute;left:70.5px;top:3.6px;font-family:'Liberation Sans',sans-serif;font-size:4.8px;line-height:4.8px;color:#333;white-space:pre;">&#10005;</div><div style="position:absolute;left:82.2px;top:2.4px;font-family:'Liberation Sans',sans-serif;font-size:7px;line-height:7px;color:#e8dcf8;white-space:pre;font-weight:bold">+</div><svg style="position:absolute;left:555px;top:0" width="45" height="11" viewBox="0 0 45 11"><path d="M7.2 5.2h3.4" stroke="#d8c8ec" stroke-width="0.6"/><rect x="21.7" y="3.6" width="3" height="3" fill="none" stroke="#e0d4ee" stroke-width="0.55"/><path d="M35.6 3.6l3 3M38.6 3.6l-3 3" stroke="#e8dcf4" stroke-width="0.6"/></svg><div style="position:absolute;left:0px;top:11.4px;width:600px;height:11.2px;background:#fff"></div><svg style="position:absolute;left:0;top:11.4px" width="44" height="11" viewBox="0 0 44 11"><path d="M9.6 5.4H4.6M6.8 3.2L4.6 5.4 6.8 7.6" fill="none" stroke="#b0b0b0" stroke-width="0.8"/><path d="M14.6 5.4H19.6M17.4 3.2L19.6 5.4 17.4 7.6" fill="none" stroke="#b0b0b0" stroke-width="0.8"/><path d="M29.6 4.2A2.6 2.6 0 1 0 29.8 6.4" fill="none" stroke="#555" stroke-width="0.9"/><path d="M28.4 2.6L30.4 2.8 30.1 4.8z" fill="#555"/><circle cx="38.6" cy="5.4" r="2.3" fill="none" stroke="#666" stroke-width="0.7"/><path d="M38.6 4.6v2.2" stroke="#666" stroke-width="0.6"/></svg><div style="position:absolute;left:44px;top:15.0px;font-family:'Liberation Sans',sans-serif;font-size:4.3px;line-height:4.3px;color:#3a3a3a;white-space:pre;letter-spacing:-0.04px">localhost:8888/notebooks/Dropbox%20(Personal)/classes/udemy/statsML/descriptives/stats_descriptives_distributions.ipynb</div><svg style="position:absolute;left:493px;top:14px" width="6" height="6" viewBox="0 0 6 6"><circle cx="2.5" cy="2.5" r="1.8" fill="none" stroke="#777" stroke-width="0.7"/><path d="M3.8 3.8L5.4 5.4" stroke="#777" stroke-width="0.8"/></svg><svg style="position:absolute;left:503.5px;top:14px" width="6" height="6" viewBox="0 0 6 6"><path d="M3 0.5l0.75 1.6 1.75 0.2-1.3 1.2 0.35 1.75L3 4.4 1.45 5.25 1.8 3.5 0.5 2.3l1.75-0.2z" fill="none" stroke="#777" stroke-width="0.5"/></svg><div style="position:absolute;left:516.3px;top:14.2px;width:5px;height:5.6px;border:1.3px solid #d22;border-radius:50%"></div><div style="position:absolute;left:527px;top:14.5px;width:3.5px;height:5px;background:#c90;opacity:.6"></div><div style="position:absolute;left:536.5px;top:14.6px;width:5px;height:5px;border:0.7px solid #999"></div><div style="position:absolute;left:546.5px;top:14.5px;width:5px;height:5.3px;background:#888;opacity:.7"></div><div style="position:absolute;left:557px;top:15px;width:4px;height:4px;background:#aaa;opacity:.4;border-radius:50%"></div><div style="position:absolute;left:567.3px;top:15.8px;width:4.5px;height:3.5px;background:#222;border-radius:1.5px 1.5px 0 0"></div><div style="position:absolute;left:580.5px;top:14px;width:6.5px;height:6.8px;background:radial-gradient(circle at 60% 40%,#f0b080,#a05030 60%,#402010);border-radius:50%"></div><div style="position:absolute;left:593.6px;top:14.3px;width:1px;height:1px;background:#444"></div><div style="position:absolute;left:593.6px;top:16.4px;width:1px;height:1px;background:#444"></div><div style="position:absolute;left:593.6px;top:18.5px;width:1px;height:1px;background:#444"></div><div style="position:absolute;left:0px;top:22.6px;width:600px;height:60.1px;background:#fff"></div><div style="position:absolute;left:0px;top:47.1px;width:600px;height:0.6px;background:#e2e2e2"></div><svg style="position:absolute;left:44.5px;top:25px" width="14" height="17" viewBox="0 0 14 17"><path d="M1.6 6.6 Q2.2 2.6 7 2.4 Q11.6 2.6 12.2 6.2 Q10.6 4.2 7 4.1 Q3.4 4.2 1.6 6.6Z" fill="#f37726"/><path d="M1.6 10.2 Q2.2 14.4 7 14.6 Q11.6 14.4 12.2 10.6 Q10.6 12.8 7 12.9 Q3.4 12.8 1.6 10.2Z" fill="#f37726"/><circle cx="11.8" cy="1.6" r="0.9" fill="#767677"/><circle cx="2.2" cy="15.3" r="1" fill="#767677"/><circle cx="2.2" cy="2.6" r="0.6" fill="#616262"/></svg><div style="position:absolute;left:60.8px;top:26.0px;font-family:'Liberation Sans',sans-serif;font-size:13.0px;line-height:13.0px;color:#4e4e4e;white-space:pre;letter-spacing:0.15px">jupyter</div><div style="position:absolute;left:111px;top:27.6px;font-family:'Liberation Sans',sans-serif;font-size:10.6px;line-height:10.6px;color:#000;white-space:pre;letter-spacing:-0.08px">stats_descriptives_distributions</div><div style="position:absolute;left:258.3px;top:29.5px;font-family:'Liberation Sans',sans-serif;font-size:7.35px;line-height:7.35px;color:#000;white-space:pre;letter-spacing:-0.1px">Last Checkpoint: Last Thursday at 4:57 PM</div><div style="position:absolute;left:399.3px;top:29.5px;font-family:'Liberation Sans',sans-serif;font-size:7.35px;line-height:7.35px;color:#000;white-space:pre;letter-spacing:-0.1px">(unsaved changes)</div><svg style="position:absolute;left:494.5px;top:25.5px" width="16" height="16" viewBox="0 0 16 16"><path d="M7.8 0.8C4.6 0.8 4.8 2.2 4.8 2.2V3.8H7.9V4.3H3.4C3.4 4.3 1.2 4 1.2 7.6 1.2 11.1 3.1 11 3.1 11H4.3V9.3C4.3 9.3 4.2 7.4 6.2 7.4H9.4C9.4 7.4 11.2 7.4 11.2 5.6V2.7C11.2 2.7 11.5 0.8 7.8 0.8Z" fill="#3b74a6"/><path d="M8.2 15.2C11.4 15.2 11.2 13.8 11.2 13.8V12.2H8.1V11.7H12.6C12.6 11.7 14.8 12 14.8 8.4 14.8 4.9 12.9 5 12.9 5H11.7V6.7C11.7 6.7 11.8 8.6 9.8 8.6H6.6C6.6 8.6 4.8 8.6 4.8 10.4V13.3C4.8 13.3 4.5 15.2 8.2 15.2Z" fill="#f2d04a"/></svg><div style="position:absolute;left:522.2px;top:25.8px;width:32.5px;height:15.6px;border:0.7px solid #ccc;border-radius:1px;background:#fff"></div><div style="position:absolute;left:528.8px;top:30.4px;font-family:'Liberation Sans',sans-serif;font-size:6px;line-height:6px;color:#333;white-space:pre;">Logout</div><div style="position:absolute;left:43.2px;top:47.7px;width:514px;height:17px;background:#f8f8f8;border:0.6px solid #e4e4e4;border-top:none"></div><div style="position:absolute;left:51.8px;top:52.6px;font-family:'Liberation Sans',sans-serif;font-size:6.6px;line-height:6.6px;color:#666;white-space:pre;">File</div><div style="position:absolute;left:79.8px;top:52.6px;font-family:'Liberation Sans',sans-serif;font-size:6.6px;line-height:6.6px;color:#666;white-space:pre;">Edit</div><div style="position:absolute;left:108.5px;top:52.6px;font-family:'Liberation Sans',sans-serif;font-size:6.6px;line-height:6.6px;color:#666;white-space:pre;">View</div><div style="position:absolute;left:139.6px;top:52.6px;font-family:'Liberation Sans',sans-serif;font-size:6.6px;line-height:6.6px;color:#666;white-space:pre;">Insert</div><div style="position:absolute;left:174px;top:52.6px;font-family:'Liberation Sans',sans-serif;font-size:6.6px;line-height:6.6px;color:#666;white-space:pre;">Cell</div><div style="position:absolute;left:202.5px;top:52.6px;font-family:'Liberation Sans',sans-serif;font-size:6.6px;line-height:6.6px;color:#666;white-space:pre;">Kernel</div><div style="position:absolute;left:239.2px;top:52.6px;font-family:'Liberation Sans',sans-serif;font-size:6.6px;line-height:6.6px;color:#666;white-space:pre;">Widgets</div><div style="position:absolute;left:281.5px;top:52.6px;font-family:'Liberation Sans',sans-serif;font-size:6.6px;line-height:6.6px;color:#666;white-space:pre;">Help</div><div style="position:absolute;left:463.3px;top:50.2px;width:28.4px;height:11.2px;border:0.6px solid #ddd;background:#fff"></div><div style="position:absolute;left:466.5px;top:52.9px;font-family:'Liberation Sans',sans-serif;font-size:6px;line-height:6px;color:#888;white-space:pre;">Trusted</div><div style="position:absolute;left:511.3px;top:51.4px;width:0.9px;height:9.3px;background:#777"></div><div style="position:absolute;left:514.5px;top:52.4px;font-family:'Liberation Sans',sans-serif;font-size:6.9px;line-height:6.9px;color:#777;white-space:pre;">Python 3</div><div style="position:absolute;left:547.8px;top:52.8px;width:6.1px;height:6.1px;border:0.9px solid #555;border-radius:50%"></div><div style="position:absolute;left:0px;top:64.7px;width:600px;height:18px;background:#fff"></div><div style="position:absolute;left:43.3px;top:67.6px;width:15.0px;height:12.6px;border:0.6px solid #ccc;border-radius:1.2px;background:#fff"></div><div style="position:absolute;left:62.2px;top:67.6px;width:14.5px;height:12.6px;border:0.6px solid #ccc;border-radius:1.2px;background:#fff"></div><div style="position:absolute;left:80px;top:67.6px;width:49.5px;height:12.6px;border:0.6px solid #ccc;border-radius:1.2px;background:#fff"></div><div style="position:absolute;left:96.7px;top:67.6px;width:0.6px;height:12.6px;background:#ccc"></div><div style="position:absolute;left:112.5px;top:67.6px;width:0.6px;height:12.6px;background:#ccc"></div><div style="position:absolute;left:132.5px;top:67.6px;width:31.80000000000001px;height:12.6px;border:0.6px solid #ccc;border-radius:1.2px;background:#fff"></div><div style="position:absolute;left:148.5px;top:67.6px;width:0.6px;height:12.6px;background:#ccc"></div><div style="position:absolute;left:167.5px;top:67.6px;width:76.5px;height:12.6px;border:0.6px solid #ccc;border-radius:1.2px;background:#fff"></div><div style="position:absolute;left:197.5px;top:67.6px;width:0.6px;height:12.6px;background:#ccc"></div><div style="position:absolute;left:212.7px;top:67.6px;width:0.6px;height:12.6px;background:#ccc"></div><div style="position:absolute;left:228.5px;top:67.6px;width:0.6px;height:12.6px;background:#ccc"></div><div style="position:absolute;left:246.5px;top:67.6px;width:60.0px;height:12.6px;border:0.6px solid #ccc;border-radius:1.2px;background:#fff"></div><div style="position:absolute;left:311px;top:67.6px;width:17.5px;height:12.6px;border:0.6px solid #ccc;border-radius:1.2px;background:#fff"></div><svg style="position:absolute;left:0;top:0" width="600" height="90" viewBox="0 0 600 90"><path d="M47.9 70.9h5.4l1.3 1.3v5.4h-6.7z" fill="none" stroke="#777" stroke-width="0.9"/><rect x="49.4" y="71.2" width="3.2" height="1.9" fill="#777"/><rect x="49.2" y="74.8" width="4" height="2.4" fill="#777"/><path d="M69.45 70.9v6M66.45 73.9h6" stroke="#222" stroke-width="1.45"/><g stroke="#666" stroke-width="0.8" fill="none"><circle cx="85.4" cy="72.2" r="1.1"/><circle cx="85.4" cy="75.7" r="1.1"/><path d="M86.4 72.7L91.2 75.9M86.4 75.2L91.2 71.9"/></g><g stroke="#555" stroke-width="0.8" fill="#fff"><rect x="101.6" y="70.6" width="4.6" height="4.8" rx=".6"/><rect x="103.3" y="72.4" width="4.6" height="4.8" rx=".6"/></g><rect x="118.2" y="70.8" width="4.4" height="5.6" fill="#444"/><rect x="119.9" y="73" width="4.2" height="4.6" fill="#fff" stroke="#444" stroke-width="0.9"/><path d="M140.5 70.6l-3 3h2.1v3.6h1.8v-3.6h2.1z" fill="#222"/><path d="M156.4 77.2l-3-3h2.1v-3.6h1.8v3.6h2.1z" fill="#222"/><path d="M172.3 71.2v5.4l3.2-2.7z" fill="#333"/><rect x="175.6" y="71.2" width="1" height="5.4" fill="#333"/><rect x="202" y="70.9" width="6" height="6" fill="#222"/><path d="M223.2 72.4A3 3 0 1 0 223.6 75.6" fill="none" stroke="#333" stroke-width="1.2"/><path d="M221.6 70.6l2.8 0.2-0.4 2.9z" fill="#333"/><path d="M232.6 71.1v5.6l3.1-2.8zM235.7 71.1v5.6l3.1-2.8z" fill="#222"/><path d="M299.6 72.6h3l-1.5 2.2z" fill="#333"/><rect x="316" y="71.6" width="7.6" height="4.8" fill="none" stroke="#444" stroke-width="0.9"/><path d="M317.6 74.8h4.4" stroke="#444" stroke-width="0.8"/><path d="M317.4 73h.8M319.2 73h.8M321 73h.8" stroke="#444" stroke-width="0.7"/></svg><div style="position:absolute;left:179.8px;top:70.3px;font-family:'Liberation Sans',sans-serif;font-size:7px;line-height:7px;color:#444;white-space:pre;">Run</div><div style="position:absolute;left:249px;top:70.9px;font-family:'Liberation Sans',sans-serif;font-size:6.4px;line-height:6.4px;color:#555;white-space:pre;">Code</div><div style="position:absolute;left:0px;top:82.7px;width:600px;height:262px;background:#eeeeee"></div><div style="position:absolute;left:0px;top:82.7px;width:600px;height:3px;background:linear-gradient(#d8d8d8,#eeeeee)"></div><div style="position:absolute;left:40px;top:82.7px;width:514.5px;height:262px;background:#fff;box-shadow:0 0 2px rgba(0,0,0,.12)"></div><div style="position:absolute;left:0;top:0;width:600px;height:337px;clip-path:inset(82.7px 0 0 0)"><div style="position:absolute;left:47.8px;top:82.7px;width:498px;height:226.0px;border:0.6px solid #ababab"></div><div style="position:absolute;left:48px;top:82.7px;width:3.2px;height:226.0px;background:#42a5f5"></div><div style="position:absolute;left:108.4px;top:60px;width:434.4px;height:95.4px;background:#f7f7f7;border:0.6px solid #cfcfcf;border-radius:1px"></div><div style="position:absolute;left:111.5px;top:80.7px;font-family:'Liberation Mono',monospace;font-size:7px;line-height:9.07px;color:#222;white-space:pre"><div><span class="jv">plt.plot(x,gausdist)</span></div><div><span class="jv">plt.title(</span><span class="js">&#x27;Analytic Gaussian (normal) distribution&#x27;</span><span class="jv">)</span></div><div><span class="jv">plt.show()</span></div><div>&#8203;</div><div><span class="jc"># is this a probability distribution?</span></div><div><span class="jc"># print(sum(gausdist))</span></div><div><span class="jc"># try scaling by dx...</span></div></div><svg style="position:absolute;left:0;top:0" width="600" height="337" viewBox="0 0 600 337"><rect x="131" y="170.7" width="183.3" height="118.7" fill="#fff"/><line x1="139.33" y1="289.4" x2="139.33" y2="291.29999999999995" stroke="#333" stroke-width="0.55"/><text x="139.33" y="297.0" font-size="6.2" font-family="Liberation Sans" fill="#222" text-anchor="middle">&#8722;4</text><line x1="160.16" y1="289.4" x2="160.16" y2="291.29999999999995" stroke="#333" stroke-width="0.55"/><text x="160.16" y="297.0" font-size="6.2" font-family="Liberation Sans" fill="#222" text-anchor="middle">&#8722;3</text><line x1="180.99" y1="289.4" x2="180.99" y2="291.29999999999995" stroke="#333" stroke-width="0.55"/><text x="180.99" y="297.0" font-size="6.2" font-family="Liberation Sans" fill="#222" text-anchor="middle">&#8722;2</text><line x1="201.82" y1="289.4" x2="201.82" y2="291.29999999999995" stroke="#333" stroke-width="0.55"/><text x="201.82" y="297.0" font-size="6.2" font-family="Liberation Sans" fill="#222" text-anchor="middle">&#8722;1</text><line x1="222.65" y1="289.4" x2="222.65" y2="291.29999999999995" stroke="#333" stroke-width="0.55"/><text x="222.65" y="297.0" font-size="6.2" font-family="Liberation Sans" fill="#222" text-anchor="middle">0</text><line x1="243.48" y1="289.4" x2="243.48" y2="291.29999999999995" stroke="#333" stroke-width="0.55"/><text x="243.48" y="297.0" font-size="6.2" font-family="Liberation Sans" fill="#222" text-anchor="middle">1</text><line x1="264.31" y1="289.4" x2="264.31" y2="291.29999999999995" stroke="#333" stroke-width="0.55"/><text x="264.31" y="297.0" font-size="6.2" font-family="Liberation Sans" fill="#222" text-anchor="middle">2</text><line x1="285.14" y1="289.4" x2="285.14" y2="291.29999999999995" stroke="#333" stroke-width="0.55"/><text x="285.14" y="297.0" font-size="6.2" font-family="Liberation Sans" fill="#222" text-anchor="middle">3</text><line x1="305.97" y1="289.4" x2="305.97" y2="291.29999999999995" stroke="#333" stroke-width="0.55"/><text x="305.97" y="297.0" font-size="6.2" font-family="Liberation Sans" fill="#222" text-anchor="middle">4</text><line x1="131" y1="284.00" x2="129.1" y2="284.00" stroke="#333" stroke-width="0.55"/><text x="128" y="285.90" font-size="6.2" font-family="Liberation Sans" fill="#222" text-anchor="end">0.00</text><line x1="131" y1="270.48" x2="129.1" y2="270.48" stroke="#333" stroke-width="0.55"/><text x="128" y="272.38" font-size="6.2" font-family="Liberation Sans" fill="#222" text-anchor="end">0.05</text><line x1="131" y1="256.96" x2="129.1" y2="256.96" stroke="#333" stroke-width="0.55"/><text x="128" y="258.86" font-size="6.2" font-family="Liberation Sans" fill="#222" text-anchor="end">0.10</text><line x1="131" y1="243.44" x2="129.1" y2="243.44" stroke="#333" stroke-width="0.55"/><text x="128" y="245.34" font-size="6.2" font-family="Liberation Sans" fill="#222" text-anchor="end">0.15</text><line x1="131" y1="229.91" x2="129.1" y2="229.91" stroke="#333" stroke-width="0.55"/><text x="128" y="231.81" font-size="6.2" font-family="Liberation Sans" fill="#222" text-anchor="end">0.20</text><line x1="131" y1="216.39" x2="129.1" y2="216.39" stroke="#333" stroke-width="0.55"/><text x="128" y="218.29" font-size="6.2" font-family="Liberation Sans" fill="#222" text-anchor="end">0.25</text><line x1="131" y1="202.87" x2="129.1" y2="202.87" stroke="#333" stroke-width="0.55"/><text x="128" y="204.77" font-size="6.2" font-family="Liberation Sans" fill="#222" text-anchor="end">0.30</text><line x1="131" y1="189.35" x2="129.1" y2="189.35" stroke="#333" stroke-width="0.55"/><text x="128" y="191.25" font-size="6.2" font-family="Liberation Sans" fill="#222" text-anchor="end">0.35</text><line x1="131" y1="175.83" x2="129.1" y2="175.83" stroke="#333" stroke-width="0.55"/><text x="128" y="177.73" font-size="6.2" font-family="Liberation Sans" fill="#222" text-anchor="end">0.40</text><text x="222.65" y="167.50" font-size="7.4" font-family="Liberation Sans" fill="#222" text-anchor="middle">Analytic Gaussian (normal) distribution</text><path d="M139.33,283.97 L139.89,283.96 L140.44,283.96 L141.00,283.95 L141.55,283.95 L142.11,283.94 L142.66,283.94 L143.22,283.93 L143.78,283.92 L144.33,283.91 L144.89,283.90 L145.44,283.89 L146.00,283.88 L146.55,283.87 L147.11,283.85 L147.66,283.84 L148.22,283.82 L148.77,283.80 L149.33,283.78 L149.89,283.76 L150.44,283.74 L151.00,283.71 L151.55,283.69 L152.11,283.66 L152.66,283.62 L153.22,283.59 L153.77,283.55 L154.33,283.51 L154.88,283.46 L155.44,283.41 L156.00,283.36 L156.55,283.30 L157.11,283.24 L157.66,283.17 L158.22,283.10 L158.77,283.03 L159.33,282.94 L159.88,282.85 L160.44,282.76 L160.99,282.65 L161.55,282.54 L162.11,282.43 L162.66,282.30 L163.22,282.16 L163.77,282.02 L164.33,281.86 L164.88,281.70 L165.44,281.52 L165.99,281.33 L166.55,281.14 L167.10,280.92 L167.66,280.70 L168.22,280.46 L168.77,280.20 L169.33,279.93 L169.88,279.65 L170.44,279.34 L170.99,279.02 L171.55,278.68 L172.10,278.33 L172.66,277.95 L173.21,277.55 L173.77,277.13 L174.33,276.69 L174.88,276.23 L175.44,275.74 L175.99,275.23 L176.55,274.69 L177.10,274.13 L177.66,273.54 L178.21,272.92 L178.77,272.27 L179.32,271.60 L179.88,270.90 L180.44,270.17 L180.99,269.40 L181.55,268.61 L182.10,267.78 L182.66,266.92 L183.21,266.03 L183.77,265.11 L184.32,264.15 L184.88,263.16 L185.43,262.14 L185.99,261.08 L186.55,259.98 L187.10,258.86 L187.66,257.69 L188.21,256.50 L188.77,255.27 L189.32,254.01 L189.88,252.71 L190.43,251.38 L190.99,250.02 L191.54,248.63 L192.10,247.20 L192.66,245.75 L193.21,244.26 L193.77,242.75 L194.32,241.21 L194.88,239.65 L195.43,238.06 L195.99,236.45 L196.54,234.81 L197.10,233.16 L197.65,231.49 L198.21,229.80 L198.77,228.10 L199.32,226.38 L199.88,224.65 L200.43,222.92 L200.99,221.18 L201.54,219.44 L202.10,217.69 L202.65,215.95 L203.21,214.21 L203.76,212.47 L204.32,210.75 L204.88,209.04 L205.43,207.34 L205.99,205.66 L206.54,204.00 L207.10,202.36 L207.65,200.75 L208.21,199.16 L208.76,197.61 L209.32,196.09 L209.87,194.61 L210.43,193.17 L210.99,191.77 L211.54,190.41 L212.10,189.11 L212.65,187.85 L213.21,186.65 L213.76,185.50 L214.32,184.41 L214.87,183.37 L215.43,182.40 L215.98,181.50 L216.54,180.65 L217.10,179.88 L217.65,179.17 L218.21,178.54 L218.76,177.97 L219.32,177.48 L219.87,177.07 L220.43,176.72 L220.98,176.46 L221.54,176.26 L222.09,176.15 L222.65,176.11 L223.21,176.15 L223.76,176.26 L224.32,176.46 L224.87,176.72 L225.43,177.07 L225.98,177.48 L226.54,177.97 L227.09,178.54 L227.65,179.17 L228.20,179.88 L228.76,180.65 L229.32,181.50 L229.87,182.40 L230.43,183.37 L230.98,184.41 L231.54,185.50 L232.09,186.65 L232.65,187.85 L233.20,189.11 L233.76,190.41 L234.31,191.77 L234.87,193.17 L235.43,194.61 L235.98,196.09 L236.54,197.61 L237.09,199.16 L237.65,200.75 L238.20,202.36 L238.76,204.00 L239.31,205.66 L239.87,207.34 L240.42,209.04 L240.98,210.75 L241.54,212.47 L242.09,214.21 L242.65,215.95 L243.20,217.69 L243.76,219.44 L244.31,221.18 L244.87,222.92 L245.42,224.65 L245.98,226.38 L246.53,228.10 L247.09,229.80 L247.65,231.49 L248.20,233.16 L248.76,234.81 L249.31,236.45 L249.87,238.06 L250.42,239.65 L250.98,241.21 L251.53,242.75 L252.09,244.26 L252.64,245.75 L253.20,247.20 L253.76,248.63 L254.31,250.02 L254.87,251.38 L255.42,252.71 L255.98,254.01 L256.53,255.27 L257.09,256.50 L257.64,257.69 L258.20,258.86 L258.75,259.98 L259.31,261.08 L259.87,262.14 L260.42,263.16 L260.98,264.15 L261.53,265.11 L262.09,266.03 L262.64,266.92 L263.20,267.78 L263.75,268.61 L264.31,269.40 L264.86,270.17 L265.42,270.90 L265.98,271.60 L266.53,272.27 L267.09,272.92 L267.64,273.54 L268.20,274.13 L268.75,274.69 L269.31,275.23 L269.86,275.74 L270.42,276.23 L270.97,276.69 L271.53,277.13 L272.09,277.55 L272.64,277.95 L273.20,278.33 L273.75,278.68 L274.31,279.02 L274.86,279.34 L275.42,279.65 L275.97,279.93 L276.53,280.20 L277.08,280.46 L277.64,280.70 L278.20,280.92 L278.75,281.14 L279.31,281.33 L279.86,281.52 L280.42,281.70 L280.97,281.86 L281.53,282.02 L282.08,282.16 L282.64,282.30 L283.19,282.43 L283.75,282.54 L284.31,282.65 L284.86,282.76 L285.42,282.85 L285.97,282.94 L286.53,283.03 L287.08,283.10 L287.64,283.17 L288.19,283.24 L288.75,283.30 L289.30,283.36 L289.86,283.41 L290.42,283.46 L290.97,283.51 L291.53,283.55 L292.08,283.59 L292.64,283.62 L293.19,283.66 L293.75,283.69 L294.30,283.71 L294.86,283.74 L295.41,283.76 L295.97,283.78 L296.53,283.80 L297.08,283.82 L297.64,283.84 L298.19,283.85 L298.75,283.87 L299.30,283.88 L299.86,283.89 L300.41,283.90 L300.97,283.91 L301.52,283.92 L302.08,283.93 L302.64,283.94 L303.19,283.94 L303.75,283.95 L304.30,283.95 L304.86,283.96 L305.41,283.96 L305.97,283.97" fill="none" stroke="#1f77b4" stroke-width="0.75"/><rect x="131" y="170.7" width="183.3" height="118.7" fill="none" stroke="#5a5a5a" stroke-width="0.6"/></svg><div style="position:absolute;left:108.4px;top:312.7px;width:434.4px;height:32.30000000000001px;background:#f7f7f7;border:0.6px solid #cfcfcf;border-radius:1px"></div><div style="position:absolute;left:75.3px;top:318.9px;font-family:'Liberation Sans',sans-serif;font-size:6.6px;line-height:6.6px;color:#4a5068;white-space:pre;font-family:'Liberation Mono',monospace;letter-spacing:-0.2px">In [ ]:</div><div style="position:absolute;left:111.5px;top:317.3px;font-family:'Liberation Mono',monospace;font-size:7px;line-height:9.07px;color:#222;white-space:pre"><div><span class="jc">## Normally-distributed random numbers</span></div></div></div><div style="position:absolute;left:594.5px;top:82.7px;width:5.5px;height:262px;background:#f1f1f1"></div><div style="position:absolute;left:595.2px;top:133.4px;width:4.2px;height:38.599999999999994px;background:#c1c1c1"></div><div style="position:absolute;left:595.2px;top:83.5px;font-family:'Liberation Sans',sans-serif;font-size:4px;line-height:4px;color:#777;white-space:pre;">&#9652;</div><div style="position:absolute;left:247.16px;top:227.56px;width:17.68px;height:17.68px;border-radius:50%;background:radial-gradient(circle closest-side,rgba(90,120,235,0.50) 0%,rgba(95,125,235,0.40) 45%,rgba(100,130,240,0.18) 75%,rgba(100,130,240,0) 100%)"></div><div style="position:absolute;left:575px;top:326px;font-family:'Liberation Sans',sans-serif;font-size:6px;line-height:6px;color:rgba(255,255,255,.85);white-space:pre;font-weight:bold;text-shadow:0 0 1px rgba(0,0,0,.35)">Udemy</div></div><div style="position:absolute;left:0px;top:673.3px;width:600px;height:338px;overflow:hidden;background:#f0f0f0;will-change:transform"><div style="position:absolute;left:0px;top:0px;width:600px;height:11.4px;background:#7649ad"></div><div style="position:absolute;left:0px;top:0px;width:600px;height:0.7px;background:#6a5a7a"></div><div style="position:absolute;left:2.5px;top:1.4px;width:75px;height:10.2px;background:#fff;border-radius:2.5px 2.5px 0 0"></div><div style="position:absolute;left:6.5px;top:4.2px;width:4.5px;height:4.5px;background:#f0a040;border-radius:50%;opacity:.85"></div><div style="position:absolute;left:14px;top:4.6px;font-family:'Liberation Sans',sans-serif;font-size:3.9px;line-height:3.9px;color:#555;white-space:pre;">stats_descriptives_distributions</div><div style="position:absolute;left:70.5px;top:3.6px;font-family:'Liberation Sans',sans-serif;font-size:4.8px;line-height:4.8px;color:#333;white-space:pre;">&#10005;</div><div style="position:absolute;left:82.2px;top:2.4px;font-family:'Liberation Sans',sans-serif;font-size:7px;line-height:7px;color:#e8dcf8;white-space:pre;font-weight:bold">+</div><svg style="position:absolute;left:555px;top:0" width="45" height="11" viewBox="0 0 45 11"><path d="M7.2 5.2h3.4" stroke="#d8c8ec" stroke-width="0.6"/><rect x="21.7" y="3.6" width="3" height="3" fill="none" stroke="#e0d4ee" stroke-width="0.55"/><path d="M35.6 3.6l3 3M38.6 3.6l-3 3" stroke="#e8dcf4" stroke-width="0.6"/></svg><div style="position:absolute;left:0px;top:11.4px;width:600px;height:11.2px;background:#fff"></div><svg style="position:absolute;left:0;top:11.4px" width="44" height="11" viewBox="0 0 44 11"><path d="M9.6 5.4H4.6M6.8 3.2L4.6 5.4 6.8 7.6" fill="none" stroke="#b0b0b0" stroke-width="0.8"/><path d="M14.6 5.4H19.6M17.4 3.2L19.6 5.4 17.4 7.6" fill="none" stroke="#b0b0b0" stroke-width="0.8"/><path d="M29.6 4.2A2.6 2.6 0 1 0 29.8 6.4" fill="none" stroke="#555" stroke-width="0.9"/><path d="M28.4 2.6L30.4 2.8 30.1 4.8z" fill="#555"/><circle cx="38.6" cy="5.4" r="2.3" fill="none" stroke="#666" stroke-width="0.7"/><path d="M38.6 4.6v2.2" stroke="#666" stroke-width="0.6"/></svg><div style="position:absolute;left:44px;top:15.0px;font-family:'Liberation Sans',sans-serif;font-size:4.3px;line-height:4.3px;color:#3a3a3a;white-space:pre;letter-spacing:-0.04px">localhost:8888/notebooks/Dropbox%20(Personal)/classes/udemy/statsML/descriptives/stats_descriptives_distributions.ipynb</div><svg style="position:absolute;left:493px;top:14px" width="6" height="6" viewBox="0 0 6 6"><circle cx="2.5" cy="2.5" r="1.8" fill="none" stroke="#777" stroke-width="0.7"/><path d="M3.8 3.8L5.4 5.4" stroke="#777" stroke-width="0.8"/></svg><svg style="position:absolute;left:503.5px;top:14px" width="6" height="6" viewBox="0 0 6 6"><path d="M3 0.5l0.75 1.6 1.75 0.2-1.3 1.2 0.35 1.75L3 4.4 1.45 5.25 1.8 3.5 0.5 2.3l1.75-0.2z" fill="none" stroke="#777" stroke-width="0.5"/></svg><div style="position:absolute;left:516.3px;top:14.2px;width:5px;height:5.6px;border:1.3px solid #d22;border-radius:50%"></div><div style="position:absolute;left:527px;top:14.5px;width:3.5px;height:5px;background:#c90;opacity:.6"></div><div style="position:absolute;left:536.5px;top:14.6px;width:5px;height:5px;border:0.7px solid #999"></div><div style="position:absolute;left:546.5px;top:14.5px;width:5px;height:5.3px;background:#888;opacity:.7"></div><div style="position:absolute;left:557px;top:15px;width:4px;height:4px;background:#aaa;opacity:.4;border-radius:50%"></div><div style="position:absolute;left:567.3px;top:15.8px;width:4.5px;height:3.5px;background:#222;border-radius:1.5px 1.5px 0 0"></div><div style="position:absolute;left:580.5px;top:14px;width:6.5px;height:6.8px;background:radial-gradient(circle at 60% 40%,#f0b080,#a05030 60%,#402010);border-radius:50%"></div><div style="position:absolute;left:593.6px;top:14.3px;width:1px;height:1px;background:#444"></div><div style="position:absolute;left:593.6px;top:16.4px;width:1px;height:1px;background:#444"></div><div style="position:absolute;left:593.6px;top:18.5px;width:1px;height:1px;background:#444"></div><div style="position:absolute;left:0px;top:22.6px;width:600px;height:60.1px;background:#fff"></div><div style="position:absolute;left:0px;top:47.1px;width:600px;height:0.6px;background:#e2e2e2"></div><svg style="position:absolute;left:44.5px;top:25px" width="14" height="17" viewBox="0 0 14 17"><path d="M1.6 6.6 Q2.2 2.6 7 2.4 Q11.6 2.6 12.2 6.2 Q10.6 4.2 7 4.1 Q3.4 4.2 1.6 6.6Z" fill="#f37726"/><path d="M1.6 10.2 Q2.2 14.4 7 14.6 Q11.6 14.4 12.2 10.6 Q10.6 12.8 7 12.9 Q3.4 12.8 1.6 10.2Z" fill="#f37726"/><circle cx="11.8" cy="1.6" r="0.9" fill="#767677"/><circle cx="2.2" cy="15.3" r="1" fill="#767677"/><circle cx="2.2" cy="2.6" r="0.6" fill="#616262"/></svg><div style="position:absolute;left:60.8px;top:26.0px;font-family:'Liberation Sans',sans-serif;font-size:13.0px;line-height:13.0px;color:#4e4e4e;white-space:pre;letter-spacing:0.15px">jupyter</div><div style="position:absolute;left:111px;top:27.6px;font-family:'Liberation Sans',sans-serif;font-size:10.6px;line-height:10.6px;color:#000;white-space:pre;letter-spacing:-0.08px">stats_descriptives_distributions</div><div style="position:absolute;left:258.3px;top:29.5px;font-family:'Liberation Sans',sans-serif;font-size:7.35px;line-height:7.35px;color:#000;white-space:pre;letter-spacing:-0.1px">Last Checkpoint: Last Thursday at 4:57 PM</div><div style="position:absolute;left:399.3px;top:29.5px;font-family:'Liberation Sans',sans-serif;font-size:7.35px;line-height:7.35px;color:#000;white-space:pre;letter-spacing:-0.1px">(unsaved changes)</div><svg style="position:absolute;left:494.5px;top:25.5px" width="16" height="16" viewBox="0 0 16 16"><path d="M7.8 0.8C4.6 0.8 4.8 2.2 4.8 2.2V3.8H7.9V4.3H3.4C3.4 4.3 1.2 4 1.2 7.6 1.2 11.1 3.1 11 3.1 11H4.3V9.3C4.3 9.3 4.2 7.4 6.2 7.4H9.4C9.4 7.4 11.2 7.4 11.2 5.6V2.7C11.2 2.7 11.5 0.8 7.8 0.8Z" fill="#3b74a6"/><path d="M8.2 15.2C11.4 15.2 11.2 13.8 11.2 13.8V12.2H8.1V11.7H12.6C12.6 11.7 14.8 12 14.8 8.4 14.8 4.9 12.9 5 12.9 5H11.7V6.7C11.7 6.7 11.8 8.6 9.8 8.6H6.6C6.6 8.6 4.8 8.6 4.8 10.4V13.3C4.8 13.3 4.5 15.2 8.2 15.2Z" fill="#f2d04a"/></svg><div style="position:absolute;left:522.2px;top:25.8px;width:32.5px;height:15.6px;border:0.7px solid #ccc;border-radius:1px;background:#fff"></div><div style="position:absolute;left:528.8px;top:30.4px;font-family:'Liberation Sans',sans-serif;font-size:6px;line-height:6px;color:#333;white-space:pre;">Logout</div><div style="position:absolute;left:43.2px;top:47.7px;width:514px;height:17px;background:#f8f8f8;border:0.6px solid #e4e4e4;border-top:none"></div><div style="position:absolute;left:51.8px;top:52.6px;font-family:'Liberation Sans',sans-serif;font-size:6.6px;line-height:6.6px;color:#666;white-space:pre;">File</div><div style="position:absolute;left:79.8px;top:52.6px;font-family:'Liberation Sans',sans-serif;font-size:6.6px;line-height:6.6px;color:#666;white-space:pre;">Edit</div><div style="position:absolute;left:108.5px;top:52.6px;font-family:'Liberation Sans',sans-serif;font-size:6.6px;line-height:6.6px;color:#666;white-space:pre;">View</div><div style="position:absolute;left:139.6px;top:52.6px;font-family:'Liberation Sans',sans-serif;font-size:6.6px;line-height:6.6px;color:#666;white-space:pre;">Insert</div><div style="position:absolute;left:174px;top:52.6px;font-family:'Liberation Sans',sans-serif;font-size:6.6px;line-height:6.6px;color:#666;white-space:pre;">Cell</div><div style="position:absolute;left:202.5px;top:52.6px;font-family:'Liberation Sans',sans-serif;font-size:6.6px;line-height:6.6px;color:#666;white-space:pre;">Kernel</div><div style="position:absolute;left:239.2px;top:52.6px;font-family:'Liberation Sans',sans-serif;font-size:6.6px;line-height:6.6px;color:#666;white-space:pre;">Widgets</div><div style="position:absolute;left:281.5px;top:52.6px;font-family:'Liberation Sans',sans-serif;font-size:6.6px;line-height:6.6px;color:#666;white-space:pre;">Help</div><div style="position:absolute;left:463.3px;top:50.2px;width:28.4px;height:11.2px;border:0.6px solid #ddd;background:#fff"></div><div style="position:absolute;left:466.5px;top:52.9px;font-family:'Liberation Sans',sans-serif;font-size:6px;line-height:6px;color:#888;white-space:pre;">Trusted</div><svg style="position:absolute;left:498.5px;top:52px" width="8" height="8" viewBox="0 0 8 8"><path d="M1.2 6.8l0.5-1.9 3.9-3.9 1.4 1.4-3.9 3.9z" fill="#555"/></svg><div style="position:absolute;left:511.3px;top:51.4px;width:0.9px;height:9.3px;background:#777"></div><div style="position:absolute;left:514.5px;top:52.4px;font-family:'Liberation Sans',sans-serif;font-size:6.9px;line-height:6.9px;color:#777;white-space:pre;">Python 3</div><div style="position:absolute;left:547.8px;top:52.8px;width:6.1px;height:6.1px;border:0.9px solid #555;border-radius:50%"></div><div style="position:absolute;left:0px;top:64.7px;width:600px;height:18px;background:#fff"></div><div style="position:absolute;left:43.3px;top:67.6px;width:15.0px;height:12.6px;border:0.6px solid #ccc;border-radius:1.2px;background:#fff"></div><div style="position:absolute;left:62.2px;top:67.6px;width:14.5px;height:12.6px;border:0.6px solid #ccc;border-radius:1.2px;background:#fff"></div><div style="position:absolute;left:80px;top:67.6px;width:49.5px;height:12.6px;border:0.6px solid #ccc;border-radius:1.2px;background:#fff"></div><div style="position:absolute;left:96.7px;top:67.6px;width:0.6px;height:12.6px;background:#ccc"></div><div style="position:absolute;left:112.5px;top:67.6px;width:0.6px;height:12.6px;background:#ccc"></div><div style="position:absolute;left:132.5px;top:67.6px;width:31.80000000000001px;height:12.6px;border:0.6px solid #ccc;border-radius:1.2px;background:#fff"></div><div style="position:absolute;left:148.5px;top:67.6px;width:0.6px;height:12.6px;background:#ccc"></div><div style="position:absolute;left:167.5px;top:67.6px;width:76.5px;height:12.6px;border:0.6px solid #ccc;border-radius:1.2px;background:#fff"></div><div style="position:absolute;left:197.5px;top:67.6px;width:0.6px;height:12.6px;background:#ccc"></div><div style="position:absolute;left:212.7px;top:67.6px;width:0.6px;height:12.6px;background:#ccc"></div><div style="position:absolute;left:228.5px;top:67.6px;width:0.6px;height:12.6px;background:#ccc"></div><div style="position:absolute;left:246.5px;top:67.6px;width:60.0px;height:12.6px;border:0.6px solid #ccc;border-radius:1.2px;background:#fff"></div><div style="position:absolute;left:311px;top:67.6px;width:17.5px;height:12.6px;border:0.6px solid #ccc;border-radius:1.2px;background:#fff"></div><svg style="position:absolute;left:0;top:0" width="600" height="90" viewBox="0 0 600 90"><path d="M47.9 70.9h5.4l1.3 1.3v5.4h-6.7z" fill="none" stroke="#777" stroke-width="0.9"/><rect x="49.4" y="71.2" width="3.2" height="1.9" fill="#777"/><rect x="49.2" y="74.8" width="4" height="2.4" fill="#777"/><path d="M69.45 70.9v6M66.45 73.9h6" stroke="#222" stroke-width="1.45"/><g stroke="#666" stroke-width="0.8" fill="none"><circle cx="85.4" cy="72.2" r="1.1"/><circle cx="85.4" cy="75.7" r="1.1"/><path d="M86.4 72.7L91.2 75.9M86.4 75.2L91.2 71.9"/></g><g stroke="#555" stroke-width="0.8" fill="#fff"><rect x="101.6" y="70.6" width="4.6" height="4.8" rx=".6"/><rect x="103.3" y="72.4" width="4.6" height="4.8" rx=".6"/></g><rect x="118.2" y="70.8" width="4.4" height="5.6" fill="#444"/><rect x="119.9" y="73" width="4.2" height="4.6" fill="#fff" stroke="#444" stroke-width="0.9"/><path d="M140.5 70.6l-3 3h2.1v3.6h1.8v-3.6h2.1z" fill="#222"/><path d="M156.4 77.2l-3-3h2.1v-3.6h1.8v3.6h2.1z" fill="#222"/><path d="M172.3 71.2v5.4l3.2-2.7z" fill="#333"/><rect x="175.6" y="71.2" width="1" height="5.4" fill="#333"/><rect x="202" y="70.9" width="6" height="6" fill="#222"/><path d="M223.2 72.4A3 3 0 1 0 223.6 75.6" fill="none" stroke="#333" stroke-width="1.2"/><path d="M221.6 70.6l2.8 0.2-0.4 2.9z" fill="#333"/><path d="M232.6 71.1v5.6l3.1-2.8zM235.7 71.1v5.6l3.1-2.8z" fill="#222"/><path d="M299.6 72.6h3l-1.5 2.2z" fill="#333"/><rect x="316" y="71.6" width="7.6" height="4.8" fill="none" stroke="#444" stroke-width="0.9"/><path d="M317.6 74.8h4.4" stroke="#444" stroke-width="0.8"/><path d="M317.4 73h.8M319.2 73h.8M321 73h.8" stroke="#444" stroke-width="0.7"/></svg><div style="position:absolute;left:179.8px;top:70.3px;font-family:'Liberation Sans',sans-serif;font-size:7px;line-height:7px;color:#444;white-space:pre;">Run</div><div style="position:absolute;left:249px;top:70.9px;font-family:'Liberation Sans',sans-serif;font-size:6.4px;line-height:6.4px;color:#555;white-space:pre;">Code</div><div style="position:absolute;left:0px;top:82.7px;width:600px;height:262px;background:#eeeeee"></div><div style="position:absolute;left:0px;top:82.7px;width:600px;height:3px;background:linear-gradient(#d8d8d8,#eeeeee)"></div><div style="position:absolute;left:40px;top:82.7px;width:514.5px;height:262px;background:#fff;box-shadow:0 0 2px rgba(0,0,0,.12)"></div><div style="position:absolute;left:0;top:0;width:600px;height:337px;clip-path:inset(82.7px 0 0 0)"><div style="position:absolute;left:47.8px;top:60px;width:498px;height:285px;border:0.6px solid #66bb6a"></div><div style="position:absolute;left:48px;top:60px;width:3.2px;height:285px;background:#66bb6a"></div><div style="position:absolute;left:108.4px;top:40px;width:434.4px;height:187.1px;background:#f7f7f7;border:0.6px solid #cfcfcf;border-radius:1px"></div><div style="position:absolute;left:111.5px;top:88.8px;font-family:'Liberation Mono',monospace;font-size:7px;line-height:9.08px;color:#222;white-space:pre"><div><span class="jc"># number of discretizations</span></div><div><span class="jv">N </span><span class="jo">=</span><span class="jv"> </span><span class="jn">1001</span></div><div>&#8203;</div><div><span class="jv">x </span><span class="jo">=</span><span class="jv"> np.linspace(</span><span class="jo">-</span><span class="jn">4</span><span class="jv">,</span><span class="jn">4</span><span class="jv">,N)</span></div><div><span class="jb">print</span><span class="jv">(x)</span></div><div><span class="jv">gausdist </span><span class="jo">=</span><span class="jv"> stats.norm.pdf(x)</span></div><div>&#8203;</div><div><span class="jv">plt.plot(x,gausdist)</span></div><div><span class="jv">plt.title(</span><span class="js">&#x27;Analytic Gaussian (normal) distribution&#x27;</span><span class="jv">)</span></div><div><span class="jv">plt.show()</span></div><div>&#8203;</div><div><span class="jc"># is this a probability distribution?</span></div><div><span class="jb">print</span><span class="jv">(</span><span class="jb">sum</span><span class="jv">(gausdist))</span></div><div><span class="jc"># try scaling by dx...</span></div></div><div style="position:absolute;left:111.5px;top:231.4px;font-family:'Liberation Mono',monospace;font-size:7px;line-height:9.08px;color:#222;white-space:pre"><div><span class="jv">[-4.    -3.992 -3.984 ...  3.984  3.992  4.   ]</span></div></div><svg style="position:absolute;left:0;top:0" width="600" height="340" viewBox="0 0 600 340"><rect x="131.5" y="258.7" width="183" height="118.7" fill="#fff"/><line x1="139.82" y1="377.4" x2="139.82" y2="379.29999999999995" stroke="#333" stroke-width="0.55"/><text x="139.82" y="385.0" font-size="6.2" font-family="Liberation Sans" fill="#222" text-anchor="middle">&#8722;4</text><line x1="160.61" y1="377.4" x2="160.61" y2="379.29999999999995" stroke="#333" stroke-width="0.55"/><text x="160.61" y="385.0" font-size="6.2" font-family="Liberation Sans" fill="#222" text-anchor="middle">&#8722;3</text><line x1="181.41" y1="377.4" x2="181.41" y2="379.29999999999995" stroke="#333" stroke-width="0.55"/><text x="181.41" y="385.0" font-size="6.2" font-family="Liberation Sans" fill="#222" text-anchor="middle">&#8722;2</text><line x1="202.20" y1="377.4" x2="202.20" y2="379.29999999999995" stroke="#333" stroke-width="0.55"/><text x="202.20" y="385.0" font-size="6.2" font-family="Liberation Sans" fill="#222" text-anchor="middle">&#8722;1</text><line x1="223.00" y1="377.4" x2="223.00" y2="379.29999999999995" stroke="#333" stroke-width="0.55"/><text x="223.00" y="385.0" font-size="6.2" font-family="Liberation Sans" fill="#222" text-anchor="middle">0</text><line x1="243.80" y1="377.4" x2="243.80" y2="379.29999999999995" stroke="#333" stroke-width="0.55"/><text x="243.80" y="385.0" font-size="6.2" font-family="Liberation Sans" fill="#222" text-anchor="middle">1</text><line x1="264.59" y1="377.4" x2="264.59" y2="379.29999999999995" stroke="#333" stroke-width="0.55"/><text x="264.59" y="385.0" font-size="6.2" font-family="Liberation Sans" fill="#222" text-anchor="middle">2</text><line x1="285.39" y1="377.4" x2="285.39" y2="379.29999999999995" stroke="#333" stroke-width="0.55"/><text x="285.39" y="385.0" font-size="6.2" font-family="Liberation Sans" fill="#222" text-anchor="middle">3</text><line x1="306.18" y1="377.4" x2="306.18" y2="379.29999999999995" stroke="#333" stroke-width="0.55"/><text x="306.18" y="385.0" font-size="6.2" font-family="Liberation Sans" fill="#222" text-anchor="middle">4</text><line x1="131.5" y1="372.00" x2="129.6" y2="372.00" stroke="#333" stroke-width="0.55"/><text x="128.5" y="373.90" font-size="6.2" font-family="Liberation Sans" fill="#222" text-anchor="end">0.00</text><line x1="131.5" y1="358.48" x2="129.6" y2="358.48" stroke="#333" stroke-width="0.55"/><text x="128.5" y="360.38" font-size="6.2" font-family="Liberation Sans" fill="#222" text-anchor="end">0.05</text><line x1="131.5" y1="344.96" x2="129.6" y2="344.96" stroke="#333" stroke-width="0.55"/><text x="128.5" y="346.86" font-size="6.2" font-family="Liberation Sans" fill="#222" text-anchor="end">0.10</text><line x1="131.5" y1="331.44" x2="129.6" y2="331.44" stroke="#333" stroke-width="0.55"/><text x="128.5" y="333.34" font-size="6.2" font-family="Liberation Sans" fill="#222" text-anchor="end">0.15</text><line x1="131.5" y1="317.91" x2="129.6" y2="317.91" stroke="#333" stroke-width="0.55"/><text x="128.5" y="319.81" font-size="6.2" font-family="Liberation Sans" fill="#222" text-anchor="end">0.20</text><line x1="131.5" y1="304.39" x2="129.6" y2="304.39" stroke="#333" stroke-width="0.55"/><text x="128.5" y="306.29" font-size="6.2" font-family="Liberation Sans" fill="#222" text-anchor="end">0.25</text><line x1="131.5" y1="290.87" x2="129.6" y2="290.87" stroke="#333" stroke-width="0.55"/><text x="128.5" y="292.77" font-size="6.2" font-family="Liberation Sans" fill="#222" text-anchor="end">0.30</text><line x1="131.5" y1="277.35" x2="129.6" y2="277.35" stroke="#333" stroke-width="0.55"/><text x="128.5" y="279.25" font-size="6.2" font-family="Liberation Sans" fill="#222" text-anchor="end">0.35</text><line x1="131.5" y1="263.83" x2="129.6" y2="263.83" stroke="#333" stroke-width="0.55"/><text x="128.5" y="265.73" font-size="6.2" font-family="Liberation Sans" fill="#222" text-anchor="end">0.40</text><text x="223.00" y="255.50" font-size="7.4" font-family="Liberation Sans" fill="#222" text-anchor="middle">Analytic Gaussian (normal) distribution</text><path d="M139.82,371.97 L140.37,371.96 L140.93,371.96 L141.48,371.95 L142.04,371.95 L142.59,371.94 L143.15,371.94 L143.70,371.93 L144.25,371.92 L144.81,371.91 L145.36,371.90 L145.92,371.89 L146.47,371.88 L147.03,371.87 L147.58,371.85 L148.14,371.84 L148.69,371.82 L149.25,371.80 L149.80,371.78 L150.35,371.76 L150.91,371.74 L151.46,371.71 L152.02,371.69 L152.57,371.66 L153.13,371.62 L153.68,371.59 L154.24,371.55 L154.79,371.51 L155.35,371.46 L155.90,371.41 L156.45,371.36 L157.01,371.30 L157.56,371.24 L158.12,371.17 L158.67,371.10 L159.23,371.03 L159.78,370.94 L160.34,370.85 L160.89,370.76 L161.45,370.65 L162.00,370.54 L162.55,370.43 L163.11,370.30 L163.66,370.16 L164.22,370.02 L164.77,369.86 L165.33,369.70 L165.88,369.52 L166.44,369.33 L166.99,369.14 L167.55,368.92 L168.10,368.70 L168.65,368.46 L169.21,368.20 L169.76,367.93 L170.32,367.65 L170.87,367.34 L171.43,367.02 L171.98,366.68 L172.54,366.33 L173.09,365.95 L173.65,365.55 L174.20,365.13 L174.75,364.69 L175.31,364.23 L175.86,363.74 L176.42,363.23 L176.97,362.69 L177.53,362.13 L178.08,361.54 L178.64,360.92 L179.19,360.27 L179.75,359.60 L180.30,358.90 L180.85,358.17 L181.41,357.40 L181.96,356.61 L182.52,355.78 L183.07,354.92 L183.63,354.03 L184.18,353.11 L184.74,352.15 L185.29,351.16 L185.85,350.14 L186.40,349.08 L186.95,347.98 L187.51,346.86 L188.06,345.69 L188.62,344.50 L189.17,343.27 L189.73,342.01 L190.28,340.71 L190.84,339.38 L191.39,338.02 L191.95,336.63 L192.50,335.20 L193.05,333.75 L193.61,332.26 L194.16,330.75 L194.72,329.21 L195.27,327.65 L195.83,326.06 L196.38,324.45 L196.94,322.81 L197.49,321.16 L198.05,319.49 L198.60,317.80 L199.15,316.10 L199.71,314.38 L200.26,312.65 L200.82,310.92 L201.37,309.18 L201.93,307.44 L202.48,305.69 L203.04,303.95 L203.59,302.21 L204.15,300.47 L204.70,298.75 L205.25,297.04 L205.81,295.34 L206.36,293.66 L206.92,292.00 L207.47,290.36 L208.03,288.75 L208.58,287.16 L209.14,285.61 L209.69,284.09 L210.25,282.61 L210.80,281.17 L211.35,279.77 L211.91,278.41 L212.46,277.11 L213.02,275.85 L213.57,274.65 L214.13,273.50 L214.68,272.41 L215.24,271.37 L215.79,270.40 L216.35,269.50 L216.90,268.65 L217.45,267.88 L218.01,267.17 L218.56,266.54 L219.12,265.97 L219.67,265.48 L220.23,265.07 L220.78,264.72 L221.34,264.46 L221.89,264.26 L222.45,264.15 L223.00,264.11 L223.55,264.15 L224.11,264.26 L224.66,264.46 L225.22,264.72 L225.77,265.07 L226.33,265.48 L226.88,265.97 L227.44,266.54 L227.99,267.17 L228.55,267.88 L229.10,268.65 L229.65,269.50 L230.21,270.40 L230.76,271.37 L231.32,272.41 L231.87,273.50 L232.43,274.65 L232.98,275.85 L233.54,277.11 L234.09,278.41 L234.65,279.77 L235.20,281.17 L235.75,282.61 L236.31,284.09 L236.86,285.61 L237.42,287.16 L237.97,288.75 L238.53,290.36 L239.08,292.00 L239.64,293.66 L240.19,295.34 L240.75,297.04 L241.30,298.75 L241.85,300.47 L242.41,302.21 L242.96,303.95 L243.52,305.69 L244.07,307.44 L244.63,309.18 L245.18,310.92 L245.74,312.65 L246.29,314.38 L246.85,316.10 L247.40,317.80 L247.95,319.49 L248.51,321.16 L249.06,322.81 L249.62,324.45 L250.17,326.06 L250.73,327.65 L251.28,329.21 L251.84,330.75 L252.39,332.26 L252.95,333.75 L253.50,335.20 L254.05,336.63 L254.61,338.02 L255.16,339.38 L255.72,340.71 L256.27,342.01 L256.83,343.27 L257.38,344.50 L257.94,345.69 L258.49,346.86 L259.05,347.98 L259.60,349.08 L260.15,350.14 L260.71,351.16 L261.26,352.15 L261.82,353.11 L262.37,354.03 L262.93,354.92 L263.48,355.78 L264.04,356.61 L264.59,357.40 L265.15,358.17 L265.70,358.90 L266.25,359.60 L266.81,360.27 L267.36,360.92 L267.92,361.54 L268.47,362.13 L269.03,362.69 L269.58,363.23 L270.14,363.74 L270.69,364.23 L271.25,364.69 L271.80,365.13 L272.35,365.55 L272.91,365.95 L273.46,366.33 L274.02,366.68 L274.57,367.02 L275.13,367.34 L275.68,367.65 L276.24,367.93 L276.79,368.20 L277.35,368.46 L277.90,368.70 L278.45,368.92 L279.01,369.14 L279.56,369.33 L280.12,369.52 L280.67,369.70 L281.23,369.86 L281.78,370.02 L282.34,370.16 L282.89,370.30 L283.45,370.43 L284.00,370.54 L284.55,370.65 L285.11,370.76 L285.66,370.85 L286.22,370.94 L286.77,371.03 L287.33,371.10 L287.88,371.17 L288.44,371.24 L288.99,371.30 L289.55,371.36 L290.10,371.41 L290.65,371.46 L291.21,371.51 L291.76,371.55 L292.32,371.59 L292.87,371.62 L293.43,371.66 L293.98,371.69 L294.54,371.71 L295.09,371.74 L295.65,371.76 L296.20,371.78 L296.75,371.80 L297.31,371.82 L297.86,371.84 L298.42,371.85 L298.97,371.87 L299.53,371.88 L300.08,371.89 L300.64,371.90 L301.19,371.91 L301.75,371.92 L302.30,371.93 L302.85,371.94 L303.41,371.94 L303.96,371.95 L304.52,371.95 L305.07,371.96 L305.63,371.96 L306.18,371.97" fill="none" stroke="#1f77b4" stroke-width="0.75"/><rect x="131.5" y="258.7" width="183" height="118.7" fill="none" stroke="#5a5a5a" stroke-width="0.6"/></svg></div><div style="position:absolute;left:594.5px;top:82.7px;width:5.5px;height:262px;background:#f1f1f1"></div><div style="position:absolute;left:595.2px;top:123.3px;width:4.2px;height:37.2px;background:#c1c1c1"></div><div style="position:absolute;left:595.2px;top:83.5px;font-family:'Liberation Sans',sans-serif;font-size:4px;line-height:4px;color:#777;white-space:pre;">&#9652;</div><div style="position:absolute;left:231.16px;top:146.36000000000004px;width:17.68px;height:17.68px;border-radius:50%;background:radial-gradient(circle closest-side,rgba(90,120,235,0.37) 0%,rgba(95,125,235,0.30) 45%,rgba(100,130,240,0.13) 75%,rgba(100,130,240,0) 100%)"></div><div style="position:absolute;left:0px;top:336.7px;width:600px;height:1.3px;background:#444"></div><div style="position:absolute;left:575px;top:326px;font-family:'Liberation Sans',sans-serif;font-size:6px;line-height:6px;color:rgba(255,255,255,.85);white-space:pre;font-weight:bold;text-shadow:0 0 1px rgba(0,0,0,.35)">Udemy</div></div><div style="position:absolute;left:600px;top:673.3px;width:600px;height:338px;overflow:hidden;background:#f0f0f0;will-change:transform"><div style="position:absolute;left:0px;top:0px;width:600px;height:11.4px;background:#7649ad"></div><div style="position:absolute;left:0px;top:0px;width:600px;height:0.7px;background:#6a5a7a"></div><div style="position:absolute;left:2.5px;top:1.4px;width:75px;height:10.2px;background:#fff;border-radius:2.5px 2.5px 0 0"></div><div style="position:absolute;left:6.5px;top:4.2px;width:4.5px;height:4.5px;background:#f0a040;border-radius:50%;opacity:.85"></div><div style="position:absolute;left:14px;top:4.6px;font-family:'Liberation Sans',sans-serif;font-size:3.9px;line-height:3.9px;color:#555;white-space:pre;">stats_descriptives_distributions</div><div style="position:absolute;left:70.5px;top:3.6px;font-family:'Liberation Sans',sans-serif;font-size:4.8px;line-height:4.8px;color:#333;white-space:pre;">&#10005;</div><div style="position:absolute;left:82.2px;top:2.4px;font-family:'Liberation Sans',sans-serif;font-size:7px;line-height:7px;color:#e8dcf8;white-space:pre;font-weight:bold">+</div><svg style="position:absolute;left:555px;top:0" width="45" height="11" viewBox="0 0 45 11"><path d="M7.2 5.2h3.4" stroke="#d8c8ec" stroke-width="0.6"/><rect x="21.7" y="3.6" width="3" height="3" fill="none" stroke="#e0d4ee" stroke-width="0.55"/><path d="M35.6 3.6l3 3M38.6 3.6l-3 3" stroke="#e8dcf4" stroke-width="0.6"/></svg><div style="position:absolute;left:0px;top:11.4px;width:600px;height:11.2px;background:#fff"></div><svg style="position:absolute;left:0;top:11.4px" width="44" height="11" viewBox="0 0 44 11"><path d="M9.6 5.4H4.6M6.8 3.2L4.6 5.4 6.8 7.6" fill="none" stroke="#b0b0b0" stroke-width="0.8"/><path d="M14.6 5.4H19.6M17.4 3.2L19.6 5.4 17.4 7.6" fill="none" stroke="#b0b0b0" stroke-width="0.8"/><path d="M29.6 4.2A2.6 2.6 0 1 0 29.8 6.4" fill="none" stroke="#555" stroke-width="0.9"/><path d="M28.4 2.6L30.4 2.8 30.1 4.8z" fill="#555"/><circle cx="38.6" cy="5.4" r="2.3" fill="none" stroke="#666" stroke-width="0.7"/><path d="M38.6 4.6v2.2" stroke="#666" stroke-width="0.6"/></svg><div style="position:absolute;left:44px;top:15.0px;font-family:'Liberation Sans',sans-serif;font-size:4.3px;line-height:4.3px;color:#3a3a3a;white-space:pre;letter-spacing:-0.04px">localhost:8888/notebooks/Dropbox%20(Personal)/classes/udemy/statsML/descriptives/stats_descriptives_distributions.ipynb</div><svg style="position:absolute;left:493px;top:14px" width="6" height="6" viewBox="0 0 6 6"><circle cx="2.5" cy="2.5" r="1.8" fill="none" stroke="#777" stroke-width="0.7"/><path d="M3.8 3.8L5.4 5.4" stroke="#777" stroke-width="0.8"/></svg><svg style="position:absolute;left:503.5px;top:14px" width="6" height="6" viewBox="0 0 6 6"><path d="M3 0.5l0.75 1.6 1.75 0.2-1.3 1.2 0.35 1.75L3 4.4 1.45 5.25 1.8 3.5 0.5 2.3l1.75-0.2z" fill="none" stroke="#777" stroke-width="0.5"/></svg><div style="position:absolute;left:516.3px;top:14.2px;width:5px;height:5.6px;border:1.3px solid #d22;border-radius:50%"></div><div style="position:absolute;left:527px;top:14.5px;width:3.5px;height:5px;background:#c90;opacity:.6"></div><div style="position:absolute;left:536.5px;top:14.6px;width:5px;height:5px;border:0.7px solid #999"></div><div style="position:absolute;left:546.5px;top:14.5px;width:5px;height:5.3px;background:#888;opacity:.7"></div><div style="position:absolute;left:557px;top:15px;width:4px;height:4px;background:#aaa;opacity:.4;border-radius:50%"></div><div style="position:absolute;left:567.3px;top:15.8px;width:4.5px;height:3.5px;background:#222;border-radius:1.5px 1.5px 0 0"></div><div style="position:absolute;left:580.5px;top:14px;width:6.5px;height:6.8px;background:radial-gradient(circle at 60% 40%,#f0b080,#a05030 60%,#402010);border-radius:50%"></div><div style="position:absolute;left:593.6px;top:14.3px;width:1px;height:1px;background:#444"></div><div style="position:absolute;left:593.6px;top:16.4px;width:1px;height:1px;background:#444"></div><div style="position:absolute;left:593.6px;top:18.5px;width:1px;height:1px;background:#444"></div><div style="position:absolute;left:0px;top:22.6px;width:600px;height:60.1px;background:#fff"></div><div style="position:absolute;left:0px;top:47.1px;width:600px;height:0.6px;background:#e2e2e2"></div><svg style="position:absolute;left:44.5px;top:25px" width="14" height="17" viewBox="0 0 14 17"><path d="M1.6 6.6 Q2.2 2.6 7 2.4 Q11.6 2.6 12.2 6.2 Q10.6 4.2 7 4.1 Q3.4 4.2 1.6 6.6Z" fill="#f37726"/><path d="M1.6 10.2 Q2.2 14.4 7 14.6 Q11.6 14.4 12.2 10.6 Q10.6 12.8 7 12.9 Q3.4 12.8 1.6 10.2Z" fill="#f37726"/><circle cx="11.8" cy="1.6" r="0.9" fill="#767677"/><circle cx="2.2" cy="15.3" r="1" fill="#767677"/><circle cx="2.2" cy="2.6" r="0.6" fill="#616262"/></svg><div style="position:absolute;left:60.8px;top:26.0px;font-family:'Liberation Sans',sans-serif;font-size:13.0px;line-height:13.0px;color:#4e4e4e;white-space:pre;letter-spacing:0.15px">jupyter</div><div style="position:absolute;left:111px;top:27.6px;font-family:'Liberation Sans',sans-serif;font-size:10.6px;line-height:10.6px;color:#000;white-space:pre;letter-spacing:-0.08px">stats_descriptives_distributions</div><div style="position:absolute;left:258.3px;top:29.5px;font-family:'Liberation Sans',sans-serif;font-size:7.35px;line-height:7.35px;color:#000;white-space:pre;letter-spacing:-0.1px">Last Checkpoint: Last Thursday at 4:57 PM</div><div style="position:absolute;left:399.3px;top:29.5px;font-family:'Liberation Sans',sans-serif;font-size:7.35px;line-height:7.35px;color:#000;white-space:pre;letter-spacing:-0.1px">(unsaved changes)</div><svg style="position:absolute;left:494.5px;top:25.5px" width="16" height="16" viewBox="0 0 16 16"><path d="M7.8 0.8C4.6 0.8 4.8 2.2 4.8 2.2V3.8H7.9V4.3H3.4C3.4 4.3 1.2 4 1.2 7.6 1.2 11.1 3.1 11 3.1 11H4.3V9.3C4.3 9.3 4.2 7.4 6.2 7.4H9.4C9.4 7.4 11.2 7.4 11.2 5.6V2.7C11.2 2.7 11.5 0.8 7.8 0.8Z" fill="#3b74a6"/><path d="M8.2 15.2C11.4 15.2 11.2 13.8 11.2 13.8V12.2H8.1V11.7H12.6C12.6 11.7 14.8 12 14.8 8.4 14.8 4.9 12.9 5 12.9 5H11.7V6.7C11.7 6.7 11.8 8.6 9.8 8.6H6.6C6.6 8.6 4.8 8.6 4.8 10.4V13.3C4.8 13.3 4.5 15.2 8.2 15.2Z" fill="#f2d04a"/></svg><div style="position:absolute;left:522.2px;top:25.8px;width:32.5px;height:15.6px;border:0.7px solid #ccc;border-radius:1px;background:#fff"></div><div style="position:absolute;left:528.8px;top:30.4px;font-family:'Liberation Sans',sans-serif;font-size:6px;line-height:6px;color:#333;white-space:pre;">Logout</div><div style="position:absolute;left:43.2px;top:47.7px;width:514px;height:17px;background:#f8f8f8;border:0.6px solid #e4e4e4;border-top:none"></div><div style="position:absolute;left:51.8px;top:52.6px;font-family:'Liberation Sans',sans-serif;font-size:6.6px;line-height:6.6px;color:#666;white-space:pre;">File</div><div style="position:absolute;left:79.8px;top:52.6px;font-family:'Liberation Sans',sans-serif;font-size:6.6px;line-height:6.6px;color:#666;white-space:pre;">Edit</div><div style="position:absolute;left:108.5px;top:52.6px;font-family:'Liberation Sans',sans-serif;font-size:6.6px;line-height:6.6px;color:#666;white-space:pre;">View</div><div style="position:absolute;left:139.6px;top:52.6px;font-family:'Liberation Sans',sans-serif;font-size:6.6px;line-height:6.6px;color:#666;white-space:pre;">Insert</div><div style="position:absolute;left:174px;top:52.6px;font-family:'Liberation Sans',sans-serif;font-size:6.6px;line-height:6.6px;color:#666;white-space:pre;">Cell</div><div style="position:absolute;left:202.5px;top:52.6px;font-family:'Liberation Sans',sans-serif;font-size:6.6px;line-height:6.6px;color:#666;white-space:pre;">Kernel</div><div style="position:absolute;left:239.2px;top:52.6px;font-family:'Liberation Sans',sans-serif;font-size:6.6px;line-height:6.6px;color:#666;white-space:pre;">Widgets</div><div style="position:absolute;left:281.5px;top:52.6px;font-family:'Liberation Sans',sans-serif;font-size:6.6px;line-height:6.6px;color:#666;white-space:pre;">Help</div><div style="position:absolute;left:463.3px;top:50.2px;width:28.4px;height:11.2px;border:0.6px solid #ddd;background:#fff"></div><div style="position:absolute;left:466.5px;top:52.9px;font-family:'Liberation Sans',sans-serif;font-size:6px;line-height:6px;color:#888;white-space:pre;">Trusted</div><div style="position:absolute;left:511.3px;top:51.4px;width:0.9px;height:9.3px;background:#777"></div><div style="position:absolute;left:514.5px;top:52.4px;font-family:'Liberation Sans',sans-serif;font-size:6.9px;line-height:6.9px;color:#777;white-space:pre;">Python 3</div><div style="position:absolute;left:547.8px;top:52.8px;width:6.1px;height:6.1px;border:0.9px solid #555;border-radius:50%"></div><div style="position:absolute;left:0px;top:64.7px;width:600px;height:18px;background:#fff"></div><div style="position:absolute;left:43.3px;top:67.6px;width:15.0px;height:12.6px;border:0.6px solid #ccc;border-radius:1.2px;background:#fff"></div><div style="position:absolute;left:62.2px;top:67.6px;width:14.5px;height:12.6px;border:0.6px solid #ccc;border-radius:1.2px;background:#fff"></div><div style="position:absolute;left:80px;top:67.6px;width:49.5px;height:12.6px;border:0.6px solid #ccc;border-radius:1.2px;background:#fff"></div><div style="position:absolute;left:96.7px;top:67.6px;width:0.6px;height:12.6px;background:#ccc"></div><div style="position:absolute;left:112.5px;top:67.6px;width:0.6px;height:12.6px;background:#ccc"></div><div style="position:absolute;left:132.5px;top:67.6px;width:31.80000000000001px;height:12.6px;border:0.6px solid #ccc;border-radius:1.2px;background:#fff"></div><div style="position:absolute;left:148.5px;top:67.6px;width:0.6px;height:12.6px;background:#ccc"></div><div style="position:absolute;left:167.5px;top:67.6px;width:76.5px;height:12.6px;border:0.6px solid #ccc;border-radius:1.2px;background:#fff"></div><div style="position:absolute;left:197.5px;top:67.6px;width:0.6px;height:12.6px;background:#ccc"></div><div style="position:absolute;left:212.7px;top:67.6px;width:0.6px;height:12.6px;background:#ccc"></div><div style="position:absolute;left:228.5px;top:67.6px;width:0.6px;height:12.6px;background:#ccc"></div><div style="position:absolute;left:246.5px;top:67.6px;width:60.0px;height:12.6px;border:0.6px solid #ccc;border-radius:1.2px;background:#fff"></div><div style="position:absolute;left:311px;top:67.6px;width:17.5px;height:12.6px;border:0.6px solid #ccc;border-radius:1.2px;background:#fff"></div><svg style="position:absolute;left:0;top:0" width="600" height="90" viewBox="0 0 600 90"><path d="M47.9 70.9h5.4l1.3 1.3v5.4h-6.7z" fill="none" stroke="#777" stroke-width="0.9"/><rect x="49.4" y="71.2" width="3.2" height="1.9" fill="#777"/><rect x="49.2" y="74.8" width="4" height="2.4" fill="#777"/><path d="M69.45 70.9v6M66.45 73.9h6" stroke="#222" stroke-width="1.45"/><g stroke="#666" stroke-width="0.8" fill="none"><circle cx="85.4" cy="72.2" r="1.1"/><circle cx="85.4" cy="75.7" r="1.1"/><path d="M86.4 72.7L91.2 75.9M86.4 75.2L91.2 71.9"/></g><g stroke="#555" stroke-width="0.8" fill="#fff"><rect x="101.6" y="70.6" width="4.6" height="4.8" rx=".6"/><rect x="103.3" y="72.4" width="4.6" height="4.8" rx=".6"/></g><rect x="118.2" y="70.8" width="4.4" height="5.6" fill="#444"/><rect x="119.9" y="73" width="4.2" height="4.6" fill="#fff" stroke="#444" stroke-width="0.9"/><path d="M140.5 70.6l-3 3h2.1v3.6h1.8v-3.6h2.1z" fill="#222"/><path d="M156.4 77.2l-3-3h2.1v-3.6h1.8v3.6h2.1z" fill="#222"/><path d="M172.3 71.2v5.4l3.2-2.7z" fill="#333"/><rect x="175.6" y="71.2" width="1" height="5.4" fill="#333"/><rect x="202" y="70.9" width="6" height="6" fill="#222"/><path d="M223.2 72.4A3 3 0 1 0 223.6 75.6" fill="none" stroke="#333" stroke-width="1.2"/><path d="M221.6 70.6l2.8 0.2-0.4 2.9z" fill="#333"/><path d="M232.6 71.1v5.6l3.1-2.8zM235.7 71.1v5.6l3.1-2.8z" fill="#222"/><path d="M299.6 72.6h3l-1.5 2.2z" fill="#333"/><rect x="316" y="71.6" width="7.6" height="4.8" fill="none" stroke="#444" stroke-width="0.9"/><path d="M317.6 74.8h4.4" stroke="#444" stroke-width="0.8"/><path d="M317.4 73h.8M319.2 73h.8M321 73h.8" stroke="#444" stroke-width="0.7"/></svg><div style="position:absolute;left:179.8px;top:70.3px;font-family:'Liberation Sans',sans-serif;font-size:7px;line-height:7px;color:#444;white-space:pre;">Run</div><div style="position:absolute;left:249px;top:70.9px;font-family:'Liberation Sans',sans-serif;font-size:6.4px;line-height:6.4px;color:#555;white-space:pre;">Code</div><div style="position:absolute;left:0px;top:82.7px;width:600px;height:262px;background:#eeeeee"></div><div style="position:absolute;left:0px;top:82.7px;width:600px;height:3px;background:linear-gradient(#d8d8d8,#eeeeee)"></div><div style="position:absolute;left:40px;top:82.7px;width:514.5px;height:262px;background:#fff;box-shadow:0 0 2px rgba(0,0,0,.12)"></div><div style="position:absolute;left:0;top:0;width:600px;height:337px;clip-path:inset(82.7px 0 0 0)"><div style="position:absolute;left:47.8px;top:60px;width:498px;height:261.4px;border:0.6px solid #ababab"></div><div style="position:absolute;left:48px;top:60px;width:3.2px;height:261.4px;background:#42a5f5"></div><div style="position:absolute;left:108.4px;top:40px;width:434.4px;height:70px;background:#f7f7f7;border:0.6px solid #cfcfcf;border-radius:1px"></div><div style="position:absolute;left:111.5px;top:79.9px;font-family:'Liberation Mono',monospace;font-size:7px;line-height:9.07px;color:#222;white-space:pre"><div><span class="jv">ax[1].set_title(</span><span class="js">&#x27;Uniform data histogram&#x27;</span><span class="jv">)</span></div><div>&#8203;</div><div><span class="jv">plt.show()</span></div></div><svg style="position:absolute;left:0;top:0" width="600" height="337" viewBox="0 0 600 337"><rect x="132.5" y="125.2" width="152.3" height="80.9" fill="#fff"/><line x1="139.42" y1="206.10000000000002" x2="139.42" y2="208.00000000000003" stroke="#333" stroke-width="0.55"/><text x="139.42" y="213.70000000000002" font-size="6.2" font-family="Liberation Sans" fill="#222" text-anchor="middle">0</text><line x1="167.11" y1="206.10000000000002" x2="167.11" y2="208.00000000000003" stroke="#333" stroke-width="0.55"/><text x="167.11" y="213.70000000000002" font-size="6.2" font-family="Liberation Sans" fill="#222" text-anchor="middle">2000</text><line x1="194.80" y1="206.10000000000002" x2="194.80" y2="208.00000000000003" stroke="#333" stroke-width="0.55"/><text x="194.80" y="213.70000000000002" font-size="6.2" font-family="Liberation Sans" fill="#222" text-anchor="middle">4000</text><line x1="222.50" y1="206.10000000000002" x2="222.50" y2="208.00000000000003" stroke="#333" stroke-width="0.55"/><text x="222.50" y="213.70000000000002" font-size="6.2" font-family="Liberation Sans" fill="#222" text-anchor="middle">6000</text><line x1="250.19" y1="206.10000000000002" x2="250.19" y2="208.00000000000003" stroke="#333" stroke-width="0.55"/><text x="250.19" y="213.70000000000002" font-size="6.2" font-family="Liberation Sans" fill="#222" text-anchor="middle">8000</text><line x1="277.88" y1="206.10000000000002" x2="277.88" y2="208.00000000000003" stroke="#333" stroke-width="0.55"/><text x="277.88" y="213.70000000000002" font-size="6.2" font-family="Liberation Sans" fill="#222" text-anchor="middle">10000</text><line x1="132.5" y1="202.42" x2="130.6" y2="202.42" stroke="#333" stroke-width="0.55"/><text x="129.5" y="204.32" font-size="6.2" font-family="Liberation Sans" fill="#222" text-anchor="end">&#8722;0.5</text><line x1="132.5" y1="184.04" x2="130.6" y2="184.04" stroke="#333" stroke-width="0.55"/><text x="129.5" y="185.94" font-size="6.2" font-family="Liberation Sans" fill="#222" text-anchor="end">0.0</text><line x1="132.5" y1="165.65" x2="130.6" y2="165.65" stroke="#333" stroke-width="0.55"/><text x="129.5" y="167.55" font-size="6.2" font-family="Liberation Sans" fill="#222" text-anchor="end">0.5</text><line x1="132.5" y1="147.26" x2="130.6" y2="147.26" stroke="#333" stroke-width="0.55"/><text x="129.5" y="149.16" font-size="6.2" font-family="Liberation Sans" fill="#222" text-anchor="end">1.0</text><line x1="132.5" y1="128.88" x2="130.6" y2="128.88" stroke="#333" stroke-width="0.55"/><text x="129.5" y="130.78" font-size="6.2" font-family="Liberation Sans" fill="#222" text-anchor="end">1.5</text><text x="208.65" y="122.00" font-size="7.4" font-family="Liberation Sans" fill="#222" text-anchor="middle">Uniform data values</text><rect x="139.42" y="128.88" width="138.45" height="73.55" fill="#e2eff8"/><path d="M184.3 191.3h1v1h-1zM229.5 197.1h1v1h-1zM213.6 175.5h1v1h-1zM147.5 165.1h1v1h-1zM144.6 170.5h1v1h-1zM149.1 195.8h1v1h-1zM198.2 141.6h1v1h-1zM156.6 186.0h1v1h-1zM226.3 132.7h1v1h-1zM219.3 173.2h1v1h-1zM274.6 199.0h1v1h-1zM258.3 181.1h1v1h-1zM159.4 193.8h1v1h-1zM182.1 142.4h1v1h-1zM164.4 159.6h1v1h-1zM227.9 175.0h1v1h-1zM215.3 197.8h1v1h-1zM147.7 187.3h1v1h-1zM233.6 171.0h1v1h-1zM182.9 159.4h1v1h-1zM202.2 180.4h1v1h-1zM249.4 151.0h1v1h-1zM173.2 160.2h1v1h-1zM212.1 138.1h1v1h-1zM240.4 181.2h1v1h-1zM275.1 193.7h1v1h-1zM197.3 146.7h1v1h-1zM160.5 166.5h1v1h-1zM144.9 153.3h1v1h-1zM245.3 160.3h1v1h-1zM260.6 179.3h1v1h-1zM235.7 158.7h1v1h-1zM219.7 168.9h1v1h-1zM255.7 132.9h1v1h-1zM205.1 153.6h1v1h-1zM147.8 150.8h1v1h-1zM229.0 129.4h1v1h-1zM253.2 181.5h1v1h-1zM192.8 153.2h1v1h-1zM142.5 168.5h1v1h-1zM162.7 193.8h1v1h-1zM147.6 145.9h1v1h-1zM157.3 184.2h1v1h-1zM193.6 138.3h1v1h-1zM150.6 169.4h1v1h-1zM215.5 137.5h1v1h-1zM252.9 138.9h1v1h-1zM178.0 171.9h1v1h-1zM189.1 137.4h1v1h-1zM272.0 191.3h1v1h-1zM163.8 185.4h1v1h-1zM171.7 166.8h1v1h-1zM221.0 183.1h1v1h-1zM140.0 171.6h1v1h-1zM190.5 160.8h1v1h-1zM271.4 151.6h1v1h-1zM210.8 157.0h1v1h-1zM233.0 198.5h1v1h-1zM264.0 145.1h1v1h-1zM260.5 143.7h1v1h-1zM193.7 173.1h1v1h-1zM153.8 155.8h1v1h-1zM148.0 197.5h1v1h-1zM168.3 190.5h1v1h-1zM186.5 198.6h1v1h-1zM139.5 191.3h1v1h-1zM153.5 175.7h1v1h-1zM143.0 138.1h1v1h-1zM224.4 191.5h1v1h-1zM174.3 176.9h1v1h-1zM189.8 193.4h1v1h-1zM257.0 129.4h1v1h-1zM203.9 166.8h1v1h-1zM151.3 194.9h1v1h-1zM186.9 183.0h1v1h-1zM254.2 190.5h1v1h-1zM142.6 132.5h1v1h-1zM212.6 191.6h1v1h-1zM214.6 200.4h1v1h-1zM212.5 130.5h1v1h-1zM259.0 151.2h1v1h-1zM175.6 175.5h1v1h-1zM162.6 145.7h1v1h-1zM213.2 145.1h1v1h-1zM185.1 186.0h1v1h-1zM251.8 130.0h1v1h-1zM257.5 143.1h1v1h-1zM252.7 148.0h1v1h-1zM170.8 164.4h1v1h-1zM188.7 200.3h1v1h-1zM143.3 181.9h1v1h-1zM175.3 151.5h1v1h-1zM271.9 169.5h1v1h-1zM269.2 129.8h1v1h-1zM271.6 175.6h1v1h-1zM169.9 185.7h1v1h-1zM166.7 187.4h1v1h-1zM225.8 136.2h1v1h-1zM255.8 167.2h1v1h-1zM229.8 143.6h1v1h-1zM151.2 153.8h1v1h-1zM265.4 144.9h1v1h-1zM243.3 167.3h1v1h-1zM164.1 144.4h1v1h-1zM185.5 143.5h1v1h-1zM274.0 173.3h1v1h-1zM195.0 132.8h1v1h-1zM239.8 189.9h1v1h-1zM157.0 191.3h1v1h-1zM264.7 143.1h1v1h-1zM159.7 141.6h1v1h-1zM275.2 154.1h1v1h-1zM187.9 162.1h1v1h-1zM157.6 201.4h1v1h-1zM273.8 154.6h1v1h-1zM212.3 133.8h1v1h-1zM199.5 138.3h1v1h-1zM253.8 186.9h1v1h-1zM174.3 180.9h1v1h-1zM172.7 159.3h1v1h-1zM175.3 171.6h1v1h-1zM157.6 135.5h1v1h-1zM188.4 168.7h1v1h-1zM220.2 135.9h1v1h-1zM197.7 134.9h1v1h-1zM208.9 163.3h1v1h-1zM211.9 201.0h1v1h-1zM200.4 189.0h1v1h-1zM140.0 143.6h1v1h-1zM163.3 167.6h1v1h-1zM239.8 161.5h1v1h-1zM184.6 164.3h1v1h-1zM216.3 144.7h1v1h-1zM154.1 161.2h1v1h-1zM173.8 182.1h1v1h-1zM246.3 165.1h1v1h-1zM217.2 146.5h1v1h-1zM265.8 169.8h1v1h-1zM224.2 165.2h1v1h-1zM210.3 151.5h1v1h-1zM202.1 163.2h1v1h-1zM205.6 133.2h1v1h-1zM236.2 138.0h1v1h-1zM269.9 183.3h1v1h-1zM216.9 133.0h1v1h-1zM255.7 192.3h1v1h-1zM156.3 169.9h1v1h-1zM149.5 184.7h1v1h-1zM149.5 153.2h1v1h-1zM248.0 136.5h1v1h-1zM160.8 149.8h1v1h-1zM230.8 191.9h1v1h-1zM261.7 131.3h1v1h-1zM169.8 132.4h1v1h-1zM194.6 166.6h1v1h-1zM276.5 141.2h1v1h-1zM161.8 170.7h1v1h-1zM210.8 177.5h1v1h-1zM166.5 179.0h1v1h-1zM239.4 201.0h1v1h-1zM216.1 170.0h1v1h-1zM141.9 178.0h1v1h-1zM225.8 164.7h1v1h-1zM148.3 130.0h1v1h-1zM248.6 131.0h1v1h-1zM153.9 182.9h1v1h-1zM144.9 145.1h1v1h-1zM176.9 192.9h1v1h-1zM197.9 135.4h1v1h-1zM252.8 183.4h1v1h-1zM160.1 134.8h1v1h-1zM218.4 150.9h1v1h-1zM151.8 198.2h1v1h-1zM234.7 171.1h1v1h-1zM149.4 133.4h1v1h-1zM227.3 143.5h1v1h-1zM151.0 139.5h1v1h-1zM148.6 139.0h1v1h-1zM202.2 177.5h1v1h-1zM216.0 134.3h1v1h-1zM176.5 192.9h1v1h-1zM212.4 184.9h1v1h-1zM154.6 190.5h1v1h-1zM146.4 187.6h1v1h-1zM182.6 180.0h1v1h-1zM244.6 181.1h1v1h-1zM208.7 189.3h1v1h-1zM187.5 201.1h1v1h-1zM174.1 201.3h1v1h-1zM240.9 161.9h1v1h-1zM165.7 167.5h1v1h-1zM268.8 194.6h1v1h-1zM252.8 170.6h1v1h-1zM208.0 141.0h1v1h-1zM193.8 165.2h1v1h-1zM234.6 130.2h1v1h-1zM186.9 141.2h1v1h-1zM237.3 155.6h1v1h-1zM195.5 176.9h1v1h-1zM147.0 192.9h1v1h-1zM149.2 147.9h1v1h-1zM174.8 190.4h1v1h-1zM151.1 140.6h1v1h-1zM260.0 153.1h1v1h-1zM178.5 184.6h1v1h-1zM180.0 168.6h1v1h-1zM161.2 169.6h1v1h-1zM175.9 131.7h1v1h-1zM274.1 162.2h1v1h-1zM173.3 131.4h1v1h-1zM182.3 176.2h1v1h-1zM139.6 174.4h1v1h-1zM205.1 165.4h1v1h-1zM167.2 165.3h1v1h-1zM140.1 183.0h1v1h-1zM151.8 173.0h1v1h-1zM145.2 200.8h1v1h-1zM181.5 185.3h1v1h-1zM220.5 163.5h1v1h-1zM243.3 154.1h1v1h-1zM238.6 137.8h1v1h-1zM193.4 178.4h1v1h-1zM275.8 191.4h1v1h-1zM239.7 155.1h1v1h-1zM145.5 141.0h1v1h-1zM262.9 156.3h1v1h-1zM241.0 142.7h1v1h-1zM158.7 163.9h1v1h-1zM209.3 141.0h1v1h-1zM250.8 141.6h1v1h-1zM220.3 136.8h1v1h-1zM234.0 151.4h1v1h-1zM171.3 200.1h1v1h-1zM157.9 175.9h1v1h-1zM153.9 141.0h1v1h-1zM216.8 156.3h1v1h-1zM226.1 152.4h1v1h-1zM207.2 202.2h1v1h-1zM249.9 147.4h1v1h-1zM209.1 163.1h1v1h-1zM230.7 197.6h1v1h-1zM241.4 183.9h1v1h-1zM149.7 182.9h1v1h-1zM240.4 187.3h1v1h-1zM241.9 130.7h1v1h-1zM207.8 174.3h1v1h-1zM205.7 152.1h1v1h-1zM245.6 157.0h1v1h-1zM228.4 196.7h1v1h-1zM159.8 183.7h1v1h-1zM242.3 180.0h1v1h-1zM218.0 201.5h1v1h-1zM147.8 182.7h1v1h-1zM232.5 151.5h1v1h-1zM233.0 181.0h1v1h-1zM210.9 168.2h1v1h-1zM204.0 193.7h1v1h-1zM263.2 187.8h1v1h-1zM274.8 133.6h1v1h-1zM141.8 168.7h1v1h-1zM252.9 131.2h1v1h-1zM201.7 182.7h1v1h-1zM168.5 132.9h1v1h-1zM168.6 159.7h1v1h-1zM159.0 163.9h1v1h-1zM271.3 192.7h1v1h-1zM253.0 165.0h1v1h-1zM262.2 150.7h1v1h-1zM171.5 136.4h1v1h-1zM206.7 200.6h1v1h-1zM139.9 166.3h1v1h-1zM201.8 180.2h1v1h-1zM158.9 177.1h1v1h-1zM183.2 140.6h1v1h-1zM139.7 147.2h1v1h-1zM255.6 193.6h1v1h-1zM267.7 150.0h1v1h-1zM264.2 181.1h1v1h-1zM191.0 173.5h1v1h-1zM277.7 159.1h1v1h-1zM189.4 170.9h1v1h-1zM177.5 198.9h1v1h-1zM153.5 141.0h1v1h-1zM179.0 133.6h1v1h-1zM173.9 182.9h1v1h-1zM210.2 188.5h1v1h-1zM191.1 132.1h1v1h-1zM261.9 142.7h1v1h-1zM226.8 135.2h1v1h-1zM269.7 162.0h1v1h-1zM239.1 198.8h1v1h-1zM240.8 169.3h1v1h-1zM243.6 155.0h1v1h-1zM179.0 198.8h1v1h-1zM267.7 193.1h1v1h-1zM204.8 177.1h1v1h-1zM180.7 148.1h1v1h-1zM274.6 183.3h1v1h-1zM230.2 180.3h1v1h-1zM216.6 173.4h1v1h-1zM162.6 190.5h1v1h-1zM168.2 135.8h1v1h-1zM208.2 186.2h1v1h-1zM264.9 129.1h1v1h-1zM201.7 192.2h1v1h-1zM166.1 195.8h1v1h-1zM186.8 195.7h1v1h-1zM172.5 183.4h1v1h-1zM218.3 137.2h1v1h-1zM243.2 172.1h1v1h-1zM196.7 163.9h1v1h-1zM191.6 177.5h1v1h-1zM148.0 182.0h1v1h-1zM273.4 193.2h1v1h-1zM209.1 156.1h1v1h-1zM258.9 186.5h1v1h-1zM176.9 184.2h1v1h-1zM194.8 169.6h1v1h-1zM271.5 140.0h1v1h-1zM260.3 200.8h1v1h-1zM143.9 150.2h1v1h-1zM263.4 167.6h1v1h-1zM220.7 202.4h1v1h-1zM193.6 134.3h1v1h-1zM253.7 139.5h1v1h-1zM274.0 184.1h1v1h-1zM154.5 191.1h1v1h-1zM211.7 152.3h1v1h-1zM269.8 149.3h1v1h-1zM229.1 146.2h1v1h-1zM202.7 161.9h1v1h-1zM144.9 144.9h1v1h-1zM171.6 134.8h1v1h-1zM228.8 180.1h1v1h-1zM157.1 183.9h1v1h-1zM227.5 151.0h1v1h-1zM154.9 197.2h1v1h-1zM212.0 159.6h1v1h-1zM193.2 186.0h1v1h-1zM222.6 201.7h1v1h-1zM181.2 168.5h1v1h-1zM272.2 155.0h1v1h-1zM261.8 167.5h1v1h-1zM171.9 184.3h1v1h-1zM272.4 150.6h1v1h-1zM182.0 200.8h1v1h-1zM208.4 152.8h1v1h-1zM197.6 183.5h1v1h-1zM231.8 134.4h1v1h-1zM170.8 199.9h1v1h-1zM186.2 171.5h1v1h-1zM233.9 187.9h1v1h-1zM249.8 148.1h1v1h-1zM209.3 187.3h1v1h-1zM273.7 179.5h1v1h-1zM253.0 185.4h1v1h-1zM170.1 146.5h1v1h-1zM180.3 132.4h1v1h-1zM208.1 188.6h1v1h-1zM170.3 171.8h1v1h-1zM231.5 132.6h1v1h-1zM159.7 173.5h1v1h-1zM168.9 130.8h1v1h-1zM159.1 198.6h1v1h-1zM147.7 173.5h1v1h-1zM263.8 137.4h1v1h-1zM240.9 129.1h1v1h-1zM268.4 178.2h1v1h-1zM165.1 133.6h1v1h-1zM242.8 200.1h1v1h-1zM231.4 174.6h1v1h-1zM191.2 178.0h1v1h-1zM162.9 202.2h1v1h-1zM178.2 176.6h1v1h-1zM271.7 193.3h1v1h-1zM272.9 187.2h1v1h-1zM188.8 142.0h1v1h-1zM253.2 170.6h1v1h-1zM146.2 167.6h1v1h-1zM191.0 134.8h1v1h-1zM166.1 175.6h1v1h-1zM263.6 200.2h1v1h-1zM196.3 142.7h1v1h-1zM245.6 199.4h1v1h-1zM144.2 197.8h1v1h-1zM266.8 183.5h1v1h-1zM242.9 136.3h1v1h-1zM186.4 182.4h1v1h-1zM272.0 157.0h1v1h-1zM175.7 149.7h1v1h-1zM183.2 182.2h1v1h-1zM139.9 146.8h1v1h-1zM266.3 155.8h1v1h-1zM270.0 200.6h1v1h-1zM171.8 167.5h1v1h-1zM271.9 132.3h1v1h-1zM192.9 184.0h1v1h-1zM198.9 166.1h1v1h-1zM267.9 189.0h1v1h-1zM250.5 148.1h1v1h-1zM253.3 145.6h1v1h-1zM223.5 178.3h1v1h-1zM183.7 175.8h1v1h-1zM247.7 196.6h1v1h-1zM166.7 147.1h1v1h-1zM173.7 197.7h1v1h-1zM144.1 161.8h1v1h-1zM184.5 130.3h1v1h-1zM261.7 129.8h1v1h-1zM176.1 196.2h1v1h-1zM152.8 165.8h1v1h-1zM237.7 169.6h1v1h-1zM171.8 171.8h1v1h-1zM225.3 152.8h1v1h-1zM243.0 140.1h1v1h-1zM231.4 193.5h1v1h-1zM255.8 180.8h1v1h-1zM217.9 175.0h1v1h-1zM241.6 187.8h1v1h-1zM173.7 184.4h1v1h-1zM160.7 137.4h1v1h-1zM219.5 178.4h1v1h-1zM194.3 129.4h1v1h-1zM209.7 185.4h1v1h-1zM251.4 154.4h1v1h-1zM276.6 194.9h1v1h-1zM205.2 142.2h1v1h-1zM255.8 135.2h1v1h-1zM145.0 180.8h1v1h-1zM155.9 188.5h1v1h-1zM274.1 159.5h1v1h-1zM268.2 175.0h1v1h-1zM259.3 169.4h1v1h-1zM175.4 145.2h1v1h-1zM270.4 194.6h1v1h-1zM222.0 156.8h1v1h-1zM169.6 175.3h1v1h-1zM159.0 187.4h1v1h-1zM174.7 158.3h1v1h-1zM229.6 187.5h1v1h-1zM141.0 178.4h1v1h-1zM233.3 188.8h1v1h-1zM182.6 187.5h1v1h-1zM249.5 162.1h1v1h-1zM148.2 195.0h1v1h-1zM194.2 162.0h1v1h-1zM227.9 195.7h1v1h-1zM162.1 151.3h1v1h-1zM196.2 181.6h1v1h-1zM182.0 132.3h1v1h-1zM182.7 160.8h1v1h-1zM188.9 171.8h1v1h-1zM259.1 129.1h1v1h-1zM189.8 187.9h1v1h-1zM240.2 187.4h1v1h-1zM140.2 136.1h1v1h-1zM198.1 142.1h1v1h-1zM195.7 137.5h1v1h-1zM203.2 190.5h1v1h-1zM141.5 161.9h1v1h-1zM228.1 135.5h1v1h-1zM151.7 156.7h1v1h-1zM190.8 165.3h1v1h-1zM159.6 181.6h1v1h-1zM211.6 134.4h1v1h-1zM154.5 166.3h1v1h-1zM250.9 131.3h1v1h-1zM166.7 193.1h1v1h-1zM270.0 130.7h1v1h-1zM206.3 198.5h1v1h-1zM267.7 173.9h1v1h-1zM264.6 156.8h1v1h-1zM253.6 190.6h1v1h-1zM248.2 186.1h1v1h-1zM195.4 140.2h1v1h-1zM254.2 189.0h1v1h-1zM169.6 173.0h1v1h-1zM211.1 174.2h1v1h-1zM156.5 184.3h1v1h-1zM239.8 136.4h1v1h-1zM145.1 161.1h1v1h-1zM244.3 199.6h1v1h-1zM255.5 193.8h1v1h-1zM222.4 162.0h1v1h-1zM226.2 179.9h1v1h-1zM197.6 159.6h1v1h-1zM198.4 154.0h1v1h-1zM201.3 170.2h1v1h-1zM142.7 156.9h1v1h-1zM207.2 185.1h1v1h-1zM245.1 145.1h1v1h-1zM202.9 189.2h1v1h-1zM204.9 194.5h1v1h-1zM157.2 170.8h1v1h-1zM152.1 169.9h1v1h-1zM210.1 199.4h1v1h-1zM227.5 196.4h1v1h-1zM241.0 145.2h1v1h-1zM210.2 198.4h1v1h-1zM209.2 174.6h1v1h-1zM271.1 192.4h1v1h-1zM258.1 129.2h1v1h-1zM240.8 142.5h1v1h-1zM166.2 130.2h1v1h-1zM207.5 132.1h1v1h-1zM266.3 190.3h1v1h-1zM248.6 134.0h1v1h-1zM148.5 176.6h1v1h-1zM244.1 190.7h1v1h-1zM263.6 182.2h1v1h-1zM252.3 191.9h1v1h-1zM209.0 134.8h1v1h-1zM168.3 183.1h1v1h-1zM209.5 179.0h1v1h-1zM144.5 189.0h1v1h-1zM161.7 133.6h1v1h-1zM233.5 136.6h1v1h-1zM162.8 144.7h1v1h-1zM155.4 163.4h1v1h-1zM227.5 176.0h1v1h-1zM260.3 161.6h1v1h-1zM219.7 137.5h1v1h-1zM153.9 129.4h1v1h-1zM226.6 173.4h1v1h-1zM249.9 183.0h1v1h-1zM276.6 160.0h1v1h-1zM189.3 146.2h1v1h-1zM200.7 189.4h1v1h-1zM242.4 198.9h1v1h-1zM252.9 183.8h1v1h-1zM227.9 130.0h1v1h-1zM220.5 153.6h1v1h-1zM182.7 202.3h1v1h-1zM144.1 191.4h1v1h-1zM224.7 170.6h1v1h-1zM210.4 136.6h1v1h-1zM157.7 185.7h1v1h-1zM229.8 200.8h1v1h-1zM139.8 176.3h1v1h-1zM154.1 176.2h1v1h-1zM170.5 159.5h1v1h-1zM221.0 187.4h1v1h-1zM225.8 167.5h1v1h-1zM158.1 133.5h1v1h-1zM173.1 191.4h1v1h-1zM152.7 155.5h1v1h-1zM260.1 144.9h1v1h-1zM195.1 183.0h1v1h-1zM141.0 155.0h1v1h-1zM217.3 176.7h1v1h-1zM228.8 169.8h1v1h-1zM269.2 148.5h1v1h-1zM173.8 136.0h1v1h-1zM145.5 163.3h1v1h-1zM195.6 184.9h1v1h-1zM147.5 145.1h1v1h-1zM141.1 161.9h1v1h-1zM269.7 192.0h1v1h-1zM167.0 157.7h1v1h-1zM209.6 155.2h1v1h-1zM252.0 189.6h1v1h-1zM182.3 180.3h1v1h-1zM146.1 137.0h1v1h-1zM247.8 149.8h1v1h-1zM140.3 140.3h1v1h-1zM242.6 168.2h1v1h-1zM242.1 169.1h1v1h-1zM170.7 194.7h1v1h-1zM171.6 199.6h1v1h-1zM185.9 147.3h1v1h-1zM235.7 140.3h1v1h-1zM238.0 182.9h1v1h-1zM216.1 170.4h1v1h-1zM248.6 163.9h1v1h-1zM176.2 155.2h1v1h-1zM273.1 186.5h1v1h-1zM261.3 201.3h1v1h-1zM175.5 185.1h1v1h-1zM242.4 132.9h1v1h-1zM242.7 178.4h1v1h-1zM261.3 178.3h1v1h-1zM172.5 135.7h1v1h-1zM226.7 151.5h1v1h-1zM231.5 130.4h1v1h-1zM204.4 140.7h1v1h-1zM236.0 139.4h1v1h-1zM200.0 149.1h1v1h-1zM218.4 179.8h1v1h-1zM168.8 156.6h1v1h-1zM150.2 135.4h1v1h-1zM159.4 200.4h1v1h-1zM154.2 134.1h1v1h-1zM187.2 192.0h1v1h-1zM143.4 199.4h1v1h-1zM235.3 155.8h1v1h-1zM235.9 148.2h1v1h-1zM148.5 159.0h1v1h-1zM189.7 142.3h1v1h-1zM252.9 136.9h1v1h-1zM148.6 138.6h1v1h-1zM266.0 133.0h1v1h-1zM154.3 187.3h1v1h-1zM154.9 199.9h1v1h-1zM256.8 142.7h1v1h-1zM227.2 141.7h1v1h-1zM226.9 181.3h1v1h-1zM153.3 195.2h1v1h-1zM244.3 187.3h1v1h-1zM183.6 171.3h1v1h-1zM142.3 183.5h1v1h-1zM178.5 149.8h1v1h-1zM190.4 178.8h1v1h-1zM272.9 165.4h1v1h-1zM257.3 157.0h1v1h-1zM143.7 172.1h1v1h-1zM199.9 145.6h1v1h-1zM187.4 150.6h1v1h-1zM213.9 186.5h1v1h-1zM258.8 195.7h1v1h-1zM252.9 189.9h1v1h-1zM139.6 187.6h1v1h-1zM245.0 130.5h1v1h-1zM140.0 166.3h1v1h-1zM207.5 143.8h1v1h-1zM165.0 166.0h1v1h-1zM187.5 141.2h1v1h-1zM175.5 133.0h1v1h-1zM178.7 186.6h1v1h-1zM236.3 165.8h1v1h-1zM154.6 155.6h1v1h-1zM150.6 144.5h1v1h-1zM235.9 144.5h1v1h-1zM226.4 176.3h1v1h-1zM195.0 173.4h1v1h-1zM262.7 196.1h1v1h-1zM262.4 200.6h1v1h-1zM168.0 183.1h1v1h-1zM264.2 165.6h1v1h-1zM191.9 137.4h1v1h-1zM171.8 168.5h1v1h-1zM213.0 146.9h1v1h-1zM243.7 154.9h1v1h-1zM187.7 178.4h1v1h-1zM160.9 140.4h1v1h-1zM231.1 147.9h1v1h-1zM162.9 170.2h1v1h-1zM246.5 159.8h1v1h-1zM156.9 168.4h1v1h-1zM262.0 184.9h1v1h-1zM165.9 180.2h1v1h-1zM236.8 140.4h1v1h-1zM160.8 191.0h1v1h-1zM173.7 178.4h1v1h-1zM211.7 190.6h1v1h-1zM184.8 188.5h1v1h-1zM274.4 148.8h1v1h-1zM153.5 131.6h1v1h-1zM153.5 174.2h1v1h-1zM275.6 144.0h1v1h-1zM241.0 170.4h1v1h-1zM166.6 155.5h1v1h-1zM154.2 187.2h1v1h-1zM193.2 199.9h1v1h-1zM194.7 144.2h1v1h-1zM235.4 165.6h1v1h-1zM227.0 168.4h1v1h-1zM159.1 158.0h1v1h-1zM195.5 147.9h1v1h-1zM265.1 170.8h1v1h-1zM218.9 147.3h1v1h-1zM197.7 185.6h1v1h-1zM239.4 137.7h1v1h-1zM246.6 150.9h1v1h-1zM257.4 152.4h1v1h-1zM228.2 169.0h1v1h-1zM182.8 156.2h1v1h-1zM153.0 171.6h1v1h-1zM247.7 150.0h1v1h-1zM226.6 184.0h1v1h-1zM198.1 168.9h1v1h-1zM225.5 172.3h1v1h-1zM232.9 134.0h1v1h-1zM164.8 154.3h1v1h-1zM247.2 173.8h1v1h-1zM207.2 130.7h1v1h-1zM144.7 162.5h1v1h-1zM161.7 144.9h1v1h-1zM269.7 164.2h1v1h-1zM153.4 160.2h1v1h-1zM214.3 149.7h1v1h-1zM210.3 155.4h1v1h-1zM254.2 164.1h1v1h-1zM196.2 132.7h1v1h-1zM168.5 152.1h1v1h-1zM193.8 146.3h1v1h-1zM156.4 130.0h1v1h-1zM188.6 198.3h1v1h-1zM177.4 173.0h1v1h-1zM141.3 171.6h1v1h-1zM197.6 151.1h1v1h-1zM188.2 182.9h1v1h-1zM170.5 147.9h1v1h-1zM269.6 163.7h1v1h-1zM169.7 143.5h1v1h-1zM193.7 186.8h1v1h-1zM157.3 145.3h1v1h-1zM251.5 155.8h1v1h-1zM204.4 161.1h1v1h-1zM170.7 131.5h1v1h-1zM188.3 155.4h1v1h-1zM252.8 142.4h1v1h-1zM204.2 180.8h1v1h-1zM215.3 193.2h1v1h-1zM254.9 176.3h1v1h-1zM257.2 182.8h1v1h-1zM191.5 183.8h1v1h-1zM198.4 188.8h1v1h-1zM139.8 149.3h1v1h-1zM178.4 184.4h1v1h-1zM181.2 167.2h1v1h-1zM198.7 155.6h1v1h-1zM230.7 175.8h1v1h-1zM268.0 139.6h1v1h-1zM147.3 141.5h1v1h-1zM264.8 144.8h1v1h-1zM158.9 141.3h1v1h-1zM227.1 201.3h1v1h-1zM141.0 132.4h1v1h-1zM230.2 184.0h1v1h-1zM153.5 191.9h1v1h-1zM171.8 145.3h1v1h-1zM187.4 191.2h1v1h-1zM264.6 144.2h1v1h-1zM162.7 136.9h1v1h-1zM223.7 145.0h1v1h-1zM232.0 136.7h1v1h-1zM248.5 140.7h1v1h-1zM166.7 151.5h1v1h-1zM212.9 147.9h1v1h-1zM200.1 137.5h1v1h-1zM216.3 183.0h1v1h-1zM171.8 192.2h1v1h-1zM207.7 198.1h1v1h-1zM204.1 191.8h1v1h-1zM207.5 165.8h1v1h-1zM214.1 139.0h1v1h-1zM140.3 140.6h1v1h-1zM204.2 161.0h1v1h-1zM231.5 140.6h1v1h-1zM191.3 171.6h1v1h-1zM272.4 196.9h1v1h-1zM227.6 155.6h1v1h-1zM143.4 157.6h1v1h-1zM233.9 133.9h1v1h-1zM185.2 130.2h1v1h-1zM210.1 166.8h1v1h-1zM263.7 199.9h1v1h-1zM238.9 156.4h1v1h-1zM186.3 139.0h1v1h-1zM190.1 167.5h1v1h-1zM212.2 145.8h1v1h-1zM168.6 170.4h1v1h-1zM197.9 161.7h1v1h-1zM253.9 180.9h1v1h-1zM254.0 172.7h1v1h-1zM209.2 182.4h1v1h-1zM209.5 130.7h1v1h-1zM230.0 144.2h1v1h-1zM185.2 179.1h1v1h-1zM180.9 159.3h1v1h-1zM227.3 144.7h1v1h-1zM145.0 149.3h1v1h-1zM262.0 162.3h1v1h-1zM146.3 180.3h1v1h-1zM140.3 188.5h1v1h-1zM267.0 157.7h1v1h-1zM230.5 144.4h1v1h-1zM265.4 157.4h1v1h-1zM224.8 156.3h1v1h-1zM235.8 158.6h1v1h-1zM233.7 186.8h1v1h-1zM231.8 168.7h1v1h-1zM245.0 195.0h1v1h-1zM164.5 199.7h1v1h-1zM246.7 135.2h1v1h-1zM230.2 175.3h1v1h-1zM253.3 144.6h1v1h-1zM217.2 183.4h1v1h-1zM181.2 171.4h1v1h-1zM183.5 170.7h1v1h-1zM228.3 133.7h1v1h-1zM147.0 160.7h1v1h-1zM144.9 193.7h1v1h-1zM251.6 160.1h1v1h-1zM266.6 169.6h1v1h-1zM141.4 174.0h1v1h-1zM221.4 133.5h1v1h-1zM275.2 167.5h1v1h-1zM196.5 194.9h1v1h-1zM228.7 186.8h1v1h-1zM160.4 201.3h1v1h-1zM140.1 152.1h1v1h-1zM156.3 131.4h1v1h-1zM151.6 138.5h1v1h-1zM157.3 201.1h1v1h-1zM239.0 184.6h1v1h-1zM241.0 188.6h1v1h-1zM146.4 145.5h1v1h-1zM238.2 139.5h1v1h-1zM240.5 196.2h1v1h-1zM226.5 150.3h1v1h-1zM203.2 133.9h1v1h-1zM174.6 131.5h1v1h-1zM238.7 201.6h1v1h-1zM141.5 154.6h1v1h-1zM252.6 196.6h1v1h-1zM182.5 148.8h1v1h-1zM162.4 139.1h1v1h-1zM206.8 198.0h1v1h-1zM190.3 160.1h1v1h-1zM200.2 152.6h1v1h-1zM159.5 143.8h1v1h-1zM189.7 155.0h1v1h-1zM226.6 171.7h1v1h-1zM192.8 144.6h1v1h-1zM270.3 144.7h1v1h-1zM217.9 180.9h1v1h-1zM147.8 130.8h1v1h-1zM236.8 141.6h1v1h-1zM185.4 157.9h1v1h-1zM274.8 141.3h1v1h-1zM222.7 179.7h1v1h-1zM198.8 137.1h1v1h-1zM191.6 152.1h1v1h-1zM222.7 136.5h1v1h-1zM251.2 181.6h1v1h-1zM139.7 183.1h1v1h-1zM197.9 159.3h1v1h-1zM252.4 137.2h1v1h-1zM145.3 141.1h1v1h-1zM251.8 138.6h1v1h-1zM218.6 182.3h1v1h-1zM257.3 143.1h1v1h-1zM234.2 135.2h1v1h-1zM187.4 196.2h1v1h-1zM216.1 143.8h1v1h-1zM167.2 147.3h1v1h-1zM268.4 185.2h1v1h-1zM223.5 152.6h1v1h-1zM203.8 187.2h1v1h-1zM174.7 147.2h1v1h-1zM249.0 168.6h1v1h-1zM151.6 143.1h1v1h-1zM246.3 185.3h1v1h-1zM219.7 136.5h1v1h-1zM262.0 164.0h1v1h-1zM205.4 159.1h1v1h-1zM165.6 188.3h1v1h-1zM164.4 150.9h1v1h-1zM189.7 160.9h1v1h-1zM195.1 164.4h1v1h-1zM160.1 199.1h1v1h-1zM277.5 174.9h1v1h-1zM154.1 155.9h1v1h-1zM248.4 190.9h1v1h-1zM222.1 177.1h1v1h-1zM211.3 200.9h1v1h-1zM144.1 129.6h1v1h-1zM259.3 166.7h1v1h-1zM218.0 183.2h1v1h-1zM247.3 171.1h1v1h-1zM270.5 146.0h1v1h-1zM252.8 131.6h1v1h-1zM174.6 199.6h1v1h-1zM167.3 189.1h1v1h-1zM151.0 198.7h1v1h-1zM216.6 138.4h1v1h-1zM202.9 132.8h1v1h-1zM265.4 197.7h1v1h-1zM222.2 173.2h1v1h-1zM156.0 131.9h1v1h-1zM175.0 160.9h1v1h-1zM228.1 132.1h1v1h-1zM232.1 173.5h1v1h-1zM201.5 190.7h1v1h-1zM273.1 129.5h1v1h-1zM170.1 199.6h1v1h-1zM174.8 176.5h1v1h-1zM264.4 135.9h1v1h-1zM255.3 199.0h1v1h-1zM248.3 150.2h1v1h-1zM229.0 129.9h1v1h-1zM147.1 191.8h1v1h-1zM243.9 133.3h1v1h-1zM233.1 180.4h1v1h-1zM221.3 146.7h1v1h-1zM154.0 178.6h1v1h-1zM175.0 193.3h1v1h-1zM206.1 190.0h1v1h-1zM172.4 191.9h1v1h-1zM233.2 201.5h1v1h-1zM238.7 188.1h1v1h-1zM144.4 134.2h1v1h-1zM170.0 133.7h1v1h-1zM259.4 137.1h1v1h-1zM158.8 169.5h1v1h-1zM152.9 134.1h1v1h-1zM256.0 156.2h1v1h-1zM202.1 177.4h1v1h-1zM253.4 167.3h1v1h-1zM226.4 191.9h1v1h-1zM170.1 198.3h1v1h-1zM238.2 161.7h1v1h-1zM159.5 138.4h1v1h-1zM176.3 172.1h1v1h-1zM161.0 182.5h1v1h-1zM255.7 177.8h1v1h-1zM162.7 166.3h1v1h-1zM183.5 136.0h1v1h-1zM155.2 130.4h1v1h-1zM147.3 136.6h1v1h-1zM231.9 186.9h1v1h-1zM205.5 181.4h1v1h-1zM175.1 187.6h1v1h-1zM189.9 129.5h1v1h-1zM277.6 134.4h1v1h-1zM152.9 181.1h1v1h-1zM263.5 198.2h1v1h-1zM240.0 180.8h1v1h-1zM274.9 201.2h1v1h-1zM251.2 177.4h1v1h-1zM158.8 202.3h1v1h-1zM254.7 163.7h1v1h-1zM165.2 170.4h1v1h-1zM265.7 186.4h1v1h-1zM218.5 192.3h1v1h-1zM164.4 145.8h1v1h-1zM237.9 188.0h1v1h-1zM150.4 196.0h1v1h-1zM223.7 166.0h1v1h-1zM177.3 187.3h1v1h-1zM224.2 150.4h1v1h-1zM251.8 159.6h1v1h-1zM167.4 197.6h1v1h-1zM240.9 172.4h1v1h-1zM239.3 198.4h1v1h-1zM251.7 177.8h1v1h-1zM256.0 138.8h1v1h-1zM207.7 201.3h1v1h-1zM265.4 167.4h1v1h-1zM260.2 182.8h1v1h-1zM165.2 141.3h1v1h-1zM190.2 190.4h1v1h-1zM190.8 158.7h1v1h-1zM140.1 164.2h1v1h-1zM201.1 164.5h1v1h-1zM156.1 149.9h1v1h-1zM252.5 138.8h1v1h-1zM183.9 150.1h1v1h-1zM192.2 147.2h1v1h-1zM147.9 138.2h1v1h-1zM271.5 166.0h1v1h-1zM210.5 163.4h1v1h-1zM213.8 200.9h1v1h-1zM273.4 186.0h1v1h-1zM164.7 194.9h1v1h-1zM174.1 142.3h1v1h-1zM143.6 195.3h1v1h-1zM236.2 188.1h1v1h-1zM141.9 158.3h1v1h-1zM219.2 164.0h1v1h-1zM236.7 194.9h1v1h-1zM259.8 149.7h1v1h-1zM145.7 193.4h1v1h-1zM207.8 165.6h1v1h-1zM178.1 193.4h1v1h-1zM195.6 192.4h1v1h-1zM221.4 139.1h1v1h-1zM159.8 160.3h1v1h-1zM242.8 190.3h1v1h-1zM253.8 133.5h1v1h-1zM193.2 171.5h1v1h-1zM255.7 163.8h1v1h-1zM194.2 133.2h1v1h-1zM247.0 177.5h1v1h-1zM172.7 177.8h1v1h-1zM199.7 130.3h1v1h-1zM250.8 135.3h1v1h-1zM252.3 140.1h1v1h-1zM146.8 164.4h1v1h-1zM272.0 133.7h1v1h-1zM173.9 171.4h1v1h-1zM227.0 175.6h1v1h-1zM212.9 197.3h1v1h-1zM199.4 165.3h1v1h-1zM142.3 192.2h1v1h-1zM273.7 145.3h1v1h-1zM269.1 155.9h1v1h-1zM251.5 137.4h1v1h-1zM261.9 199.9h1v1h-1zM228.3 182.9h1v1h-1zM233.4 182.3h1v1h-1zM214.5 134.4h1v1h-1zM225.4 184.0h1v1h-1zM211.5 170.5h1v1h-1zM271.1 181.3h1v1h-1zM181.7 154.8h1v1h-1zM156.1 158.7h1v1h-1zM271.8 164.6h1v1h-1zM176.6 168.1h1v1h-1zM213.3 191.5h1v1h-1zM156.6 192.8h1v1h-1zM180.1 172.5h1v1h-1zM179.3 184.5h1v1h-1zM151.6 162.2h1v1h-1zM255.7 157.6h1v1h-1zM218.4 154.6h1v1h-1zM167.3 150.2h1v1h-1zM203.2 162.1h1v1h-1zM224.3 167.9h1v1h-1zM182.4 184.6h1v1h-1zM170.1 164.7h1v1h-1zM192.5 159.3h1v1h-1zM141.1 176.5h1v1h-1zM258.8 184.9h1v1h-1zM216.5 166.3h1v1h-1zM178.9 129.8h1v1h-1zM180.3 145.6h1v1h-1zM161.4 197.5h1v1h-1zM260.1 170.1h1v1h-1zM148.0 173.9h1v1h-1zM200.3 148.3h1v1h-1zM154.5 185.9h1v1h-1zM272.2 148.1h1v1h-1zM160.8 177.6h1v1h-1zM188.2 152.8h1v1h-1zM224.8 139.9h1v1h-1zM253.1 164.3h1v1h-1zM241.7 147.8h1v1h-1zM244.6 167.5h1v1h-1zM248.1 150.3h1v1h-1zM266.1 193.1h1v1h-1zM260.0 202.1h1v1h-1zM245.4 159.3h1v1h-1zM208.4 131.6h1v1h-1zM218.6 171.7h1v1h-1zM247.9 138.2h1v1h-1zM223.5 174.5h1v1h-1zM202.0 168.7h1v1h-1zM239.5 180.9h1v1h-1zM193.5 161.6h1v1h-1zM192.7 178.7h1v1h-1zM248.4 139.9h1v1h-1zM208.6 169.8h1v1h-1zM164.9 180.1h1v1h-1zM159.5 160.1h1v1h-1zM219.9 196.0h1v1h-1zM266.8 178.6h1v1h-1zM256.2 140.8h1v1h-1zM272.2 187.4h1v1h-1zM198.5 135.5h1v1h-1zM140.9 198.9h1v1h-1zM217.6 165.8h1v1h-1zM266.8 145.5h1v1h-1zM214.0 129.0h1v1h-1zM211.1 164.4h1v1h-1zM234.3 173.8h1v1h-1zM188.9 158.7h1v1h-1zM188.0 132.7h1v1h-1zM233.1 163.8h1v1h-1zM153.1 174.9h1v1h-1zM194.9 161.1h1v1h-1zM218.9 137.7h1v1h-1zM273.0 166.6h1v1h-1zM200.4 156.5h1v1h-1zM277.3 177.2h1v1h-1zM212.8 142.4h1v1h-1zM163.1 179.0h1v1h-1zM274.9 141.7h1v1h-1zM210.4 194.3h1v1h-1zM263.3 151.7h1v1h-1zM253.0 129.6h1v1h-1zM262.4 171.5h1v1h-1zM161.1 181.1h1v1h-1zM210.3 165.3h1v1h-1zM165.5 189.0h1v1h-1zM226.7 158.1h1v1h-1zM188.3 129.3h1v1h-1zM227.6 199.3h1v1h-1zM196.4 144.5h1v1h-1zM181.9 151.6h1v1h-1zM140.0 180.0h1v1h-1zM256.0 159.3h1v1h-1zM231.9 188.0h1v1h-1zM208.4 161.7h1v1h-1zM176.3 154.9h1v1h-1zM213.0 129.1h1v1h-1zM219.0 172.2h1v1h-1zM156.2 190.9h1v1h-1zM244.6 194.6h1v1h-1zM153.3 189.9h1v1h-1zM211.8 141.9h1v1h-1zM224.3 143.1h1v1h-1zM148.0 201.5h1v1h-1zM246.1 178.7h1v1h-1zM238.5 176.4h1v1h-1zM162.9 182.8h1v1h-1zM153.2 135.9h1v1h-1zM220.0 176.8h1v1h-1zM201.7 174.1h1v1h-1zM147.0 136.9h1v1h-1zM220.1 131.8h1v1h-1zM200.3 156.8h1v1h-1zM173.9 199.2h1v1h-1zM268.3 139.6h1v1h-1zM183.0 136.3h1v1h-1zM252.4 180.1h1v1h-1zM222.8 131.8h1v1h-1zM208.0 132.6h1v1h-1zM173.1 173.8h1v1h-1zM238.9 186.1h1v1h-1zM182.2 138.0h1v1h-1zM206.5 144.1h1v1h-1zM173.1 189.7h1v1h-1zM189.0 188.7h1v1h-1zM273.9 181.0h1v1h-1zM217.2 194.0h1v1h-1zM213.3 174.1h1v1h-1zM195.2 197.6h1v1h-1zM156.5 141.7h1v1h-1zM188.1 184.4h1v1h-1zM165.9 181.6h1v1h-1zM172.3 199.9h1v1h-1zM231.4 177.3h1v1h-1zM161.0 150.5h1v1h-1zM152.2 182.6h1v1h-1zM255.0 193.0h1v1h-1zM200.8 140.9h1v1h-1zM250.9 190.7h1v1h-1zM188.3 149.3h1v1h-1zM191.6 131.9h1v1h-1zM168.2 132.5h1v1h-1zM209.3 185.7h1v1h-1zM202.1 192.8h1v1h-1zM237.2 183.2h1v1h-1zM264.0 159.2h1v1h-1zM190.4 184.3h1v1h-1zM223.6 186.8h1v1h-1zM260.2 193.4h1v1h-1zM210.5 162.5h1v1h-1zM176.9 145.7h1v1h-1zM192.7 154.1h1v1h-1zM218.0 179.6h1v1h-1zM193.4 196.1h1v1h-1zM163.9 139.8h1v1h-1zM183.9 153.7h1v1h-1zM154.5 161.1h1v1h-1zM189.5 165.6h1v1h-1zM180.5 197.6h1v1h-1zM182.5 185.8h1v1h-1zM156.9 149.7h1v1h-1zM178.5 172.8h1v1h-1zM265.3 145.4h1v1h-1zM261.6 139.1h1v1h-1zM157.7 182.1h1v1h-1zM143.5 152.4h1v1h-1zM231.3 176.6h1v1h-1zM196.5 154.0h1v1h-1zM236.2 184.2h1v1h-1zM256.7 176.5h1v1h-1zM226.5 189.1h1v1h-1zM155.4 135.3h1v1h-1zM241.1 150.0h1v1h-1zM145.0 199.5h1v1h-1zM161.9 187.9h1v1h-1zM181.4 174.4h1v1h-1zM144.9 179.6h1v1h-1zM227.8 189.2h1v1h-1zM255.7 160.5h1v1h-1zM238.6 183.7h1v1h-1zM199.6 152.1h1v1h-1zM187.7 202.4h1v1h-1zM254.9 145.3h1v1h-1zM179.1 199.3h1v1h-1zM257.7 157.8h1v1h-1zM146.0 184.4h1v1h-1zM154.8 144.2h1v1h-1zM168.5 135.2h1v1h-1zM243.2 196.1h1v1h-1zM235.6 173.5h1v1h-1zM242.9 141.5h1v1h-1zM178.4 195.8h1v1h-1zM270.5 171.2h1v1h-1zM268.2 151.6h1v1h-1zM241.7 141.4h1v1h-1zM226.4 169.1h1v1h-1zM146.9 151.1h1v1h-1zM198.7 164.8h1v1h-1zM267.9 193.0h1v1h-1zM244.9 199.2h1v1h-1zM236.7 143.2h1v1h-1zM175.6 162.2h1v1h-1zM273.6 155.5h1v1h-1zM214.7 184.1h1v1h-1zM147.6 176.1h1v1h-1zM196.4 187.6h1v1h-1zM182.4 192.4h1v1h-1zM237.3 153.1h1v1h-1zM172.4 184.6h1v1h-1zM210.8 169.7h1v1h-1zM269.0 176.6h1v1h-1zM180.9 137.4h1v1h-1zM159.1 161.0h1v1h-1zM185.6 142.5h1v1h-1zM215.3 146.5h1v1h-1zM162.9 153.4h1v1h-1zM222.3 168.5h1v1h-1zM245.5 141.3h1v1h-1zM155.3 181.1h1v1h-1zM189.3 187.2h1v1h-1zM147.8 181.8h1v1h-1zM166.7 150.8h1v1h-1zM201.5 194.1h1v1h-1zM184.3 168.0h1v1h-1zM189.7 190.1h1v1h-1zM149.4 201.6h1v1h-1zM276.8 147.2h1v1h-1zM151.0 149.7h1v1h-1zM275.1 161.0h1v1h-1zM154.5 166.5h1v1h-1zM199.5 188.5h1v1h-1zM214.6 201.8h1v1h-1zM266.7 155.0h1v1h-1zM226.3 133.6h1v1h-1zM229.8 183.9h1v1h-1zM173.5 192.2h1v1h-1zM143.3 145.5h1v1h-1zM255.7 180.6h1v1h-1zM165.1 155.5h1v1h-1zM256.5 134.3h1v1h-1zM162.7 144.7h1v1h-1zM254.4 147.8h1v1h-1zM184.7 188.9h1v1h-1zM253.7 178.9h1v1h-1zM190.4 161.9h1v1h-1zM190.6 141.3h1v1h-1zM172.6 199.4h1v1h-1zM217.9 156.2h1v1h-1zM252.9 150.5h1v1h-1zM264.8 132.9h1v1h-1zM207.9 165.7h1v1h-1zM161.2 180.4h1v1h-1zM219.9 196.5h1v1h-1zM234.7 190.4h1v1h-1zM200.8 131.1h1v1h-1zM151.8 199.5h1v1h-1zM200.3 188.4h1v1h-1zM239.5 202.2h1v1h-1zM255.8 139.5h1v1h-1zM248.4 171.1h1v1h-1zM178.6 153.8h1v1h-1zM210.7 171.4h1v1h-1zM186.3 170.2h1v1h-1zM231.6 141.7h1v1h-1zM264.6 190.3h1v1h-1zM180.4 169.8h1v1h-1zM217.4 176.8h1v1h-1zM166.5 196.2h1v1h-1zM184.2 168.6h1v1h-1zM273.9 135.6h1v1h-1zM259.2 130.8h1v1h-1zM272.6 156.8h1v1h-1zM251.7 198.0h1v1h-1zM233.1 157.6h1v1h-1zM180.5 160.4h1v1h-1zM271.3 167.1h1v1h-1zM229.1 180.4h1v1h-1zM187.0 137.3h1v1h-1zM143.3 188.5h1v1h-1zM233.4 169.5h1v1h-1zM151.2 153.8h1v1h-1zM190.9 159.7h1v1h-1zM197.1 163.4h1v1h-1zM217.6 173.3h1v1h-1zM155.2 189.1h1v1h-1zM262.6 162.1h1v1h-1zM155.0 139.0h1v1h-1zM174.5 195.4h1v1h-1zM212.9 183.9h1v1h-1zM207.2 161.7h1v1h-1zM170.8 160.3h1v1h-1zM155.1 164.7h1v1h-1zM220.9 196.5h1v1h-1zM195.9 197.0h1v1h-1zM200.3 138.9h1v1h-1zM215.7 149.9h1v1h-1zM244.2 194.0h1v1h-1zM276.6 149.4h1v1h-1zM153.6 141.4h1v1h-1zM193.7 189.8h1v1h-1zM272.3 161.0h1v1h-1zM246.7 192.4h1v1h-1zM246.9 198.2h1v1h-1zM172.2 175.0h1v1h-1zM141.5 158.7h1v1h-1zM168.9 180.4h1v1h-1zM237.4 171.1h1v1h-1zM262.5 156.7h1v1h-1zM260.2 161.0h1v1h-1zM266.5 138.4h1v1h-1zM162.7 147.6h1v1h-1zM186.7 146.3h1v1h-1zM233.6 141.7h1v1h-1zM156.4 175.0h1v1h-1zM241.5 132.7h1v1h-1zM239.4 199.2h1v1h-1zM223.0 195.1h1v1h-1zM215.4 143.4h1v1h-1zM155.1 134.4h1v1h-1zM232.9 183.7h1v1h-1zM166.2 169.6h1v1h-1zM255.5 159.7h1v1h-1zM155.1 200.9h1v1h-1zM154.7 143.5h1v1h-1zM165.1 161.7h1v1h-1zM179.6 151.9h1v1h-1zM192.1 191.8h1v1h-1zM260.6 162.8h1v1h-1zM234.9 143.0h1v1h-1zM270.8 201.4h1v1h-1zM186.8 191.3h1v1h-1zM208.9 138.2h1v1h-1zM250.2 199.8h1v1h-1zM164.7 142.2h1v1h-1zM233.5 173.6h1v1h-1zM205.3 190.8h1v1h-1zM256.4 173.5h1v1h-1zM260.3 157.5h1v1h-1zM149.9 178.2h1v1h-1zM169.4 136.7h1v1h-1zM221.0 199.2h1v1h-1zM162.9 175.9h1v1h-1zM204.2 160.0h1v1h-1zM193.1 176.4h1v1h-1zM140.3 159.8h1v1h-1zM185.6 200.9h1v1h-1zM203.0 129.9h1v1h-1zM145.7 191.7h1v1h-1zM232.3 182.4h1v1h-1zM177.3 165.6h1v1h-1zM175.7 160.6h1v1h-1zM212.5 132.0h1v1h-1zM276.8 199.9h1v1h-1zM217.0 145.7h1v1h-1zM260.2 145.5h1v1h-1zM227.1 155.7h1v1h-1zM189.7 181.7h1v1h-1zM249.5 138.2h1v1h-1zM269.4 152.3h1v1h-1zM181.5 146.3h1v1h-1zM241.8 165.0h1v1h-1zM227.4 176.7h1v1h-1zM215.7 172.6h1v1h-1zM147.8 177.6h1v1h-1zM184.2 129.7h1v1h-1zM206.1 175.4h1v1h-1zM173.1 185.2h1v1h-1zM187.8 192.4h1v1h-1zM140.4 138.4h1v1h-1zM202.2 169.7h1v1h-1zM218.2 180.2h1v1h-1zM162.8 197.5h1v1h-1zM181.2 179.7h1v1h-1zM240.0 161.9h1v1h-1zM269.2 177.4h1v1h-1zM267.0 159.5h1v1h-1zM150.5 189.3h1v1h-1zM219.8 129.8h1v1h-1zM188.8 145.5h1v1h-1zM198.7 138.6h1v1h-1zM148.8 166.8h1v1h-1zM263.9 182.1h1v1h-1zM175.1 200.7h1v1h-1zM162.2 182.7h1v1h-1zM236.9 186.4h1v1h-1zM194.7 187.7h1v1h-1zM222.9 138.9h1v1h-1zM229.2 188.0h1v1h-1zM241.0 131.6h1v1h-1zM222.6 196.6h1v1h-1zM251.5 138.0h1v1h-1zM186.7 192.4h1v1h-1zM165.5 162.9h1v1h-1zM260.6 155.4h1v1h-1zM267.2 186.8h1v1h-1zM184.7 147.3h1v1h-1zM229.3 172.6h1v1h-1zM233.4 177.6h1v1h-1zM147.4 172.0h1v1h-1zM145.7 156.4h1v1h-1zM185.7 166.1h1v1h-1zM222.2 183.5h1v1h-1zM203.6 201.4h1v1h-1zM267.5 160.9h1v1h-1zM276.2 198.3h1v1h-1zM224.4 149.2h1v1h-1zM185.0 195.5h1v1h-1zM161.0 191.9h1v1h-1zM245.6 195.8h1v1h-1zM252.1 171.3h1v1h-1zM214.0 159.1h1v1h-1zM216.3 154.1h1v1h-1zM222.7 178.1h1v1h-1zM242.0 183.5h1v1h-1zM237.9 146.3h1v1h-1zM246.9 179.7h1v1h-1zM246.4 130.5h1v1h-1zM202.2 182.0h1v1h-1zM211.9 133.2h1v1h-1zM157.7 201.8h1v1h-1zM205.3 154.2h1v1h-1zM246.6 175.8h1v1h-1zM276.4 185.6h1v1h-1zM244.2 195.8h1v1h-1zM143.3 192.6h1v1h-1zM147.8 165.5h1v1h-1zM216.3 189.1h1v1h-1zM269.5 175.5h1v1h-1zM160.1 189.4h1v1h-1zM241.6 134.7h1v1h-1zM161.9 200.3h1v1h-1zM247.2 184.6h1v1h-1zM275.4 165.7h1v1h-1zM227.5 177.1h1v1h-1zM250.3 168.6h1v1h-1zM184.3 136.0h1v1h-1zM154.3 148.5h1v1h-1zM148.5 155.0h1v1h-1zM195.1 138.9h1v1h-1zM147.7 160.9h1v1h-1zM196.2 134.8h1v1h-1zM270.3 156.3h1v1h-1zM170.4 183.9h1v1h-1zM175.7 170.5h1v1h-1zM171.5 187.5h1v1h-1zM244.5 155.2h1v1h-1zM180.7 129.3h1v1h-1zM169.4 160.5h1v1h-1zM161.1 138.9h1v1h-1zM259.8 182.8h1v1h-1zM243.5 141.9h1v1h-1zM178.5 178.0h1v1h-1zM206.6 136.9h1v1h-1zM161.8 152.2h1v1h-1zM222.2 169.1h1v1h-1zM219.6 137.5h1v1h-1zM168.5 137.4h1v1h-1zM189.3 145.1h1v1h-1zM259.0 189.0h1v1h-1zM259.0 129.3h1v1h-1zM180.6 200.6h1v1h-1zM154.9 130.8h1v1h-1zM140.7 135.4h1v1h-1zM160.3 148.3h1v1h-1zM152.9 190.0h1v1h-1zM234.0 195.8h1v1h-1zM186.4 134.9h1v1h-1zM238.6 137.6h1v1h-1zM275.1 200.0h1v1h-1zM171.9 144.2h1v1h-1zM234.9 199.6h1v1h-1zM209.3 185.4h1v1h-1zM199.0 194.7h1v1h-1zM142.2 129.6h1v1h-1zM183.2 137.8h1v1h-1zM156.1 166.6h1v1h-1zM158.2 170.9h1v1h-1zM164.2 152.0h1v1h-1zM159.9 148.1h1v1h-1zM208.8 194.2h1v1h-1zM188.4 165.9h1v1h-1zM266.6 176.7h1v1h-1zM169.2 131.3h1v1h-1zM261.7 148.6h1v1h-1zM177.2 189.4h1v1h-1zM176.1 197.4h1v1h-1zM145.4 165.0h1v1h-1zM195.9 161.5h1v1h-1zM189.6 201.6h1v1h-1zM234.7 154.4h1v1h-1zM214.7 162.1h1v1h-1zM235.0 130.2h1v1h-1zM260.4 149.6h1v1h-1zM194.7 179.0h1v1h-1zM197.5 130.9h1v1h-1zM193.0 174.1h1v1h-1zM196.2 191.9h1v1h-1zM277.6 202.0h1v1h-1zM223.6 134.3h1v1h-1zM174.7 157.5h1v1h-1zM191.6 184.7h1v1h-1zM166.9 193.9h1v1h-1zM256.1 144.8h1v1h-1zM265.2 198.8h1v1h-1zM235.5 178.6h1v1h-1zM228.9 162.1h1v1h-1zM183.1 131.0h1v1h-1zM139.6 147.5h1v1h-1zM257.6 164.9h1v1h-1zM221.4 129.3h1v1h-1zM171.9 156.1h1v1h-1zM242.3 174.6h1v1h-1zM238.0 173.5h1v1h-1zM212.3 157.4h1v1h-1zM233.2 178.7h1v1h-1zM226.5 162.5h1v1h-1zM170.3 157.4h1v1h-1zM176.1 135.6h1v1h-1zM205.0 149.4h1v1h-1zM211.7 167.4h1v1h-1zM170.1 192.0h1v1h-1zM267.8 163.5h1v1h-1zM212.0 163.6h1v1h-1zM252.0 184.9h1v1h-1zM163.3 142.0h1v1h-1zM203.2 155.3h1v1h-1zM254.0 136.7h1v1h-1zM259.6 199.2h1v1h-1zM192.2 141.2h1v1h-1zM252.6 193.4h1v1h-1zM160.7 183.9h1v1h-1zM153.7 176.2h1v1h-1zM250.6 164.1h1v1h-1zM202.1 196.0h1v1h-1zM194.2 129.1h1v1h-1zM235.7 169.4h1v1h-1zM205.7 143.7h1v1h-1zM244.5 191.4h1v1h-1zM233.6 175.4h1v1h-1zM211.5 184.9h1v1h-1zM190.8 177.4h1v1h-1zM192.2 201.1h1v1h-1zM167.2 160.5h1v1h-1zM147.4 189.3h1v1h-1zM238.9 182.2h1v1h-1zM184.3 184.6h1v1h-1zM254.9 195.7h1v1h-1zM227.5 139.3h1v1h-1zM167.3 171.3h1v1h-1zM249.1 157.0h1v1h-1zM190.9 199.2h1v1h-1zM200.7 175.4h1v1h-1zM238.1 180.7h1v1h-1zM195.9 154.8h1v1h-1zM251.7 176.5h1v1h-1zM192.8 159.9h1v1h-1zM267.5 188.3h1v1h-1zM273.9 150.1h1v1h-1zM191.0 153.5h1v1h-1zM185.0 197.2h1v1h-1zM244.1 174.5h1v1h-1zM212.2 165.9h1v1h-1zM264.2 146.7h1v1h-1zM143.0 158.8h1v1h-1zM203.5 168.4h1v1h-1zM255.7 171.9h1v1h-1zM205.0 136.9h1v1h-1zM200.3 166.3h1v1h-1zM210.3 141.8h1v1h-1zM232.2 148.0h1v1h-1zM195.0 199.4h1v1h-1zM233.5 161.7h1v1h-1zM245.9 145.8h1v1h-1zM155.8 186.2h1v1h-1zM150.1 142.3h1v1h-1zM153.5 195.9h1v1h-1zM243.7 160.9h1v1h-1zM147.0 152.3h1v1h-1zM237.9 166.9h1v1h-1zM147.0 151.6h1v1h-1zM197.3 159.5h1v1h-1zM277.6 142.3h1v1h-1zM260.1 191.7h1v1h-1zM185.7 164.3h1v1h-1zM140.3 129.7h1v1h-1zM177.5 183.1h1v1h-1zM182.8 183.7h1v1h-1zM258.3 161.6h1v1h-1zM210.2 171.5h1v1h-1zM146.5 180.0h1v1h-1zM259.4 143.4h1v1h-1zM258.0 183.5h1v1h-1zM167.4 198.6h1v1h-1zM213.8 174.9h1v1h-1zM203.7 166.5h1v1h-1zM220.2 175.5h1v1h-1zM250.4 187.7h1v1h-1zM266.7 161.5h1v1h-1zM146.5 179.3h1v1h-1zM213.2 172.3h1v1h-1zM217.6 178.6h1v1h-1zM177.3 143.9h1v1h-1zM179.8 150.2h1v1h-1zM250.5 158.9h1v1h-1zM202.4 133.7h1v1h-1zM201.0 137.8h1v1h-1zM147.4 170.5h1v1h-1zM227.9 198.8h1v1h-1zM258.9 197.1h1v1h-1zM222.0 189.2h1v1h-1zM267.1 161.2h1v1h-1zM250.3 165.8h1v1h-1zM232.7 152.8h1v1h-1zM180.3 186.9h1v1h-1zM255.5 191.7h1v1h-1zM266.5 187.2h1v1h-1zM153.4 195.4h1v1h-1zM248.0 132.5h1v1h-1zM196.8 154.0h1v1h-1zM175.1 135.8h1v1h-1zM234.4 191.0h1v1h-1zM147.3 151.3h1v1h-1zM145.2 140.9h1v1h-1zM180.1 185.3h1v1h-1zM220.0 179.0h1v1h-1zM217.0 191.1h1v1h-1zM265.7 178.6h1v1h-1zM255.9 191.3h1v1h-1zM250.1 130.3h1v1h-1zM193.6 200.0h1v1h-1zM192.0 155.3h1v1h-1zM170.3 162.3h1v1h-1zM152.4 168.3h1v1h-1zM240.3 170.8h1v1h-1zM233.4 194.0h1v1h-1zM254.1 193.4h1v1h-1zM267.3 129.2h1v1h-1zM269.5 163.7h1v1h-1zM179.7 176.8h1v1h-1zM243.3 165.9h1v1h-1zM268.2 195.6h1v1h-1zM206.5 138.9h1v1h-1zM222.2 162.7h1v1h-1zM151.7 192.1h1v1h-1zM177.0 136.7h1v1h-1zM256.5 185.7h1v1h-1zM267.4 200.0h1v1h-1zM222.3 131.3h1v1h-1zM187.1 133.0h1v1h-1zM230.3 198.7h1v1h-1zM185.5 169.4h1v1h-1zM173.7 147.8h1v1h-1zM164.2 144.5h1v1h-1zM180.7 197.3h1v1h-1zM216.8 195.4h1v1h-1zM215.8 144.5h1v1h-1zM221.9 168.5h1v1h-1zM144.1 164.7h1v1h-1zM152.9 154.9h1v1h-1zM157.7 159.9h1v1h-1zM188.3 174.9h1v1h-1zM231.2 190.4h1v1h-1zM162.9 133.2h1v1h-1zM185.3 140.5h1v1h-1zM260.4 167.1h1v1h-1zM160.1 195.5h1v1h-1zM261.1 193.8h1v1h-1zM208.1 163.0h1v1h-1zM155.7 168.0h1v1h-1zM162.1 163.0h1v1h-1zM209.6 175.4h1v1h-1zM166.8 172.7h1v1h-1zM167.6 193.1h1v1h-1zM172.6 138.3h1v1h-1zM208.9 136.9h1v1h-1zM141.5 133.0h1v1h-1zM207.0 144.2h1v1h-1zM218.4 151.8h1v1h-1zM171.2 147.3h1v1h-1zM160.7 183.0h1v1h-1zM143.7 173.5h1v1h-1zM211.2 181.0h1v1h-1zM262.7 196.2h1v1h-1zM219.5 185.2h1v1h-1zM221.8 144.8h1v1h-1zM237.8 197.9h1v1h-1zM173.4 158.4h1v1h-1zM275.5 199.4h1v1h-1zM225.0 151.5h1v1h-1zM252.2 177.3h1v1h-1zM251.6 168.5h1v1h-1zM266.9 201.6h1v1h-1zM269.6 172.1h1v1h-1zM195.8 195.9h1v1h-1zM173.3 148.5h1v1h-1zM233.4 191.3h1v1h-1zM187.1 192.1h1v1h-1zM166.9 186.3h1v1h-1zM185.3 130.6h1v1h-1zM277.5 144.2h1v1h-1zM205.8 165.8h1v1h-1zM247.3 135.6h1v1h-1zM243.5 155.6h1v1h-1zM167.0 156.4h1v1h-1zM256.5 144.6h1v1h-1zM152.2 149.7h1v1h-1zM187.8 190.5h1v1h-1zM273.1 152.9h1v1h-1zM242.6 192.5h1v1h-1zM254.1 133.5h1v1h-1zM264.7 147.6h1v1h-1zM254.7 143.4h1v1h-1zM221.2 170.4h1v1h-1zM253.7 144.7h1v1h-1zM260.0 180.4h1v1h-1zM272.5 163.3h1v1h-1zM270.4 193.9h1v1h-1zM273.5 144.5h1v1h-1zM174.3 140.8h1v1h-1zM171.6 187.9h1v1h-1zM202.8 185.0h1v1h-1zM207.6 135.6h1v1h-1zM234.3 150.2h1v1h-1zM193.7 144.8h1v1h-1zM249.3 152.2h1v1h-1zM269.8 141.7h1v1h-1zM195.7 196.0h1v1h-1zM229.8 140.9h1v1h-1zM186.4 158.7h1v1h-1zM255.2 144.1h1v1h-1zM140.0 166.5h1v1h-1zM141.7 194.3h1v1h-1zM251.9 171.6h1v1h-1zM223.2 168.8h1v1h-1zM185.9 186.7h1v1h-1zM188.4 140.3h1v1h-1zM225.2 180.9h1v1h-1zM151.6 182.5h1v1h-1zM236.5 169.9h1v1h-1zM230.9 143.1h1v1h-1zM156.1 152.2h1v1h-1zM145.2 141.9h1v1h-1zM164.9 182.5h1v1h-1zM272.0 175.8h1v1h-1zM170.5 137.0h1v1h-1zM223.9 136.7h1v1h-1zM194.0 165.7h1v1h-1zM271.8 165.2h1v1h-1zM276.3 188.5h1v1h-1zM254.4 190.5h1v1h-1zM212.4 202.4h1v1h-1zM163.7 132.9h1v1h-1zM202.4 142.9h1v1h-1zM174.1 176.5h1v1h-1zM153.4 161.8h1v1h-1zM258.8 164.6h1v1h-1zM191.6 134.1h1v1h-1zM263.2 153.4h1v1h-1zM149.9 156.5h1v1h-1zM200.9 132.0h1v1h-1zM189.5 153.8h1v1h-1zM226.9 174.8h1v1h-1zM211.7 152.7h1v1h-1zM265.0 165.8h1v1h-1zM189.8 130.6h1v1h-1zM147.3 141.0h1v1h-1zM234.1 161.4h1v1h-1zM201.4 147.2h1v1h-1zM262.8 148.8h1v1h-1zM243.2 199.8h1v1h-1zM184.4 192.3h1v1h-1zM271.4 136.9h1v1h-1zM159.4 159.2h1v1h-1zM219.3 199.0h1v1h-1zM193.7 147.5h1v1h-1zM228.2 181.8h1v1h-1zM245.0 181.0h1v1h-1zM214.8 171.5h1v1h-1zM274.9 154.7h1v1h-1zM250.9 152.7h1v1h-1zM192.1 131.6h1v1h-1zM237.7 151.6h1v1h-1zM177.8 190.5h1v1h-1zM219.1 141.7h1v1h-1zM249.3 176.9h1v1h-1zM158.8 164.5h1v1h-1zM260.9 190.5h1v1h-1zM241.6 189.9h1v1h-1zM182.6 198.5h1v1h-1zM180.6 174.3h1v1h-1zM273.3 131.7h1v1h-1zM165.3 179.7h1v1h-1zM270.1 187.9h1v1h-1zM183.9 170.2h1v1h-1zM154.4 183.3h1v1h-1zM194.0 174.1h1v1h-1zM272.8 182.8h1v1h-1zM167.7 135.6h1v1h-1zM201.8 140.9h1v1h-1zM227.6 145.2h1v1h-1zM183.0 191.2h1v1h-1zM244.2 167.8h1v1h-1zM216.8 153.1h1v1h-1zM243.6 182.2h1v1h-1zM189.6 134.9h1v1h-1zM212.7 181.2h1v1h-1zM226.7 183.3h1v1h-1zM246.2 199.4h1v1h-1zM253.9 160.8h1v1h-1zM188.4 133.3h1v1h-1zM176.2 184.5h1v1h-1zM149.1 162.1h1v1h-1zM243.8 152.6h1v1h-1zM196.6 143.0h1v1h-1zM154.8 179.8h1v1h-1zM228.7 131.3h1v1h-1zM227.2 151.5h1v1h-1zM246.7 173.4h1v1h-1zM269.6 147.8h1v1h-1zM186.7 173.6h1v1h-1zM251.0 176.7h1v1h-1zM165.1 138.3h1v1h-1zM213.1 164.1h1v1h-1zM232.1 136.1h1v1h-1zM157.9 177.5h1v1h-1zM148.6 172.0h1v1h-1zM208.9 139.8h1v1h-1zM231.9 159.9h1v1h-1zM195.3 160.2h1v1h-1zM177.3 140.3h1v1h-1zM248.6 140.8h1v1h-1zM160.4 153.0h1v1h-1zM243.8 165.6h1v1h-1zM263.8 136.3h1v1h-1zM242.3 142.0h1v1h-1zM229.3 137.8h1v1h-1zM157.6 150.6h1v1h-1zM236.9 157.4h1v1h-1zM177.5 197.5h1v1h-1zM223.0 141.8h1v1h-1zM177.2 186.8h1v1h-1zM170.4 195.5h1v1h-1zM233.0 130.7h1v1h-1zM250.5 176.0h1v1h-1zM236.3 197.1h1v1h-1zM255.5 178.5h1v1h-1zM139.9 156.1h1v1h-1zM158.6 182.2h1v1h-1zM147.6 169.6h1v1h-1zM216.3 143.0h1v1h-1zM144.9 141.6h1v1h-1zM154.7 185.9h1v1h-1zM226.6 177.4h1v1h-1zM185.3 160.6h1v1h-1zM169.6 144.1h1v1h-1zM168.4 140.7h1v1h-1zM251.4 162.9h1v1h-1zM143.6 145.2h1v1h-1zM143.4 165.3h1v1h-1zM198.1 197.8h1v1h-1zM226.7 149.1h1v1h-1zM220.4 173.0h1v1h-1zM210.3 159.1h1v1h-1zM170.8 138.6h1v1h-1zM277.3 143.3h1v1h-1zM272.5 178.2h1v1h-1zM276.0 197.2h1v1h-1zM205.6 192.6h1v1h-1zM202.3 152.2h1v1h-1zM237.5 169.0h1v1h-1zM186.7 188.5h1v1h-1zM195.2 181.6h1v1h-1zM166.3 148.3h1v1h-1zM210.9 170.2h1v1h-1zM166.8 150.7h1v1h-1zM166.7 182.9h1v1h-1zM217.0 150.9h1v1h-1zM274.1 147.4h1v1h-1zM270.7 134.8h1v1h-1zM239.5 149.5h1v1h-1zM148.1 187.3h1v1h-1zM141.2 138.9h1v1h-1zM239.4 156.1h1v1h-1zM175.9 176.3h1v1h-1zM162.1 155.9h1v1h-1zM276.7 179.9h1v1h-1zM145.5 189.5h1v1h-1zM188.6 136.3h1v1h-1zM250.8 169.0h1v1h-1zM153.6 194.6h1v1h-1zM160.7 145.2h1v1h-1zM204.7 129.6h1v1h-1zM265.7 144.0h1v1h-1zM205.4 142.0h1v1h-1zM157.2 194.4h1v1h-1zM217.4 165.1h1v1h-1zM168.4 183.9h1v1h-1zM142.4 135.6h1v1h-1zM237.8 132.9h1v1h-1zM275.2 170.3h1v1h-1zM240.8 174.2h1v1h-1zM251.8 140.5h1v1h-1zM158.0 201.5h1v1h-1zM169.1 159.4h1v1h-1zM191.9 201.8h1v1h-1zM254.4 144.6h1v1h-1zM203.6 199.2h1v1h-1zM262.5 163.1h1v1h-1zM149.3 178.6h1v1h-1zM225.9 137.3h1v1h-1zM206.5 155.4h1v1h-1zM167.9 184.5h1v1h-1zM264.8 174.3h1v1h-1zM153.8 158.9h1v1h-1zM156.9 187.7h1v1h-1zM202.6 159.4h1v1h-1zM227.5 150.4h1v1h-1zM200.3 197.5h1v1h-1zM239.7 198.5h1v1h-1zM204.6 173.0h1v1h-1zM232.6 149.9h1v1h-1zM172.6 154.7h1v1h-1zM235.2 167.7h1v1h-1zM159.1 135.6h1v1h-1zM222.4 197.8h1v1h-1zM172.5 129.8h1v1h-1zM171.1 173.6h1v1h-1zM248.5 141.8h1v1h-1zM227.2 147.9h1v1h-1zM144.7 195.5h1v1h-1zM274.6 143.4h1v1h-1zM144.7 198.8h1v1h-1zM172.7 134.0h1v1h-1zM169.8 153.0h1v1h-1zM268.2 155.5h1v1h-1zM266.7 183.1h1v1h-1zM160.7 201.1h1v1h-1zM244.2 194.8h1v1h-1zM274.2 150.2h1v1h-1zM165.3 143.1h1v1h-1zM162.0 164.8h1v1h-1zM154.1 144.5h1v1h-1zM262.6 135.0h1v1h-1zM139.7 139.8h1v1h-1zM216.4 142.0h1v1h-1zM209.0 156.8h1v1h-1zM221.7 143.6h1v1h-1zM150.2 198.4h1v1h-1zM214.9 181.0h1v1h-1zM194.4 201.9h1v1h-1zM242.6 200.7h1v1h-1zM254.3 142.7h1v1h-1zM202.8 193.4h1v1h-1zM229.4 187.2h1v1h-1zM198.8 194.3h1v1h-1zM274.6 162.3h1v1h-1zM188.2 195.5h1v1h-1zM240.5 139.9h1v1h-1zM256.9 195.0h1v1h-1zM190.3 180.2h1v1h-1zM245.0 191.6h1v1h-1zM223.4 130.5h1v1h-1zM245.9 201.9h1v1h-1zM149.8 194.1h1v1h-1zM235.3 158.4h1v1h-1zM211.4 168.9h1v1h-1zM195.8 157.5h1v1h-1zM229.2 135.0h1v1h-1zM240.9 143.8h1v1h-1zM265.8 140.9h1v1h-1zM238.6 200.2h1v1h-1zM233.7 139.9h1v1h-1zM199.1 137.8h1v1h-1zM164.3 133.1h1v1h-1zM200.6 150.5h1v1h-1zM174.4 180.3h1v1h-1zM187.7 178.6h1v1h-1zM152.5 169.9h1v1h-1zM275.2 154.3h1v1h-1zM268.5 146.4h1v1h-1zM255.3 129.3h1v1h-1zM243.6 182.3h1v1h-1zM174.0 172.1h1v1h-1zM142.3 185.4h1v1h-1zM262.1 134.7h1v1h-1zM184.9 145.8h1v1h-1zM246.7 137.0h1v1h-1zM249.4 163.3h1v1h-1zM153.9 141.7h1v1h-1zM182.9 156.3h1v1h-1zM190.3 162.9h1v1h-1zM273.1 190.6h1v1h-1zM212.9 154.6h1v1h-1zM214.0 133.4h1v1h-1zM195.8 135.2h1v1h-1zM234.9 131.3h1v1h-1zM151.8 186.8h1v1h-1zM179.2 135.8h1v1h-1zM141.3 183.3h1v1h-1zM238.5 129.6h1v1h-1zM163.8 170.2h1v1h-1zM234.5 151.6h1v1h-1zM242.7 147.0h1v1h-1zM173.8 183.5h1v1h-1zM143.3 151.6h1v1h-1zM168.4 183.3h1v1h-1zM272.9 155.1h1v1h-1zM221.3 154.2h1v1h-1zM222.2 151.3h1v1h-1zM181.5 197.7h1v1h-1zM148.7 201.4h1v1h-1zM189.5 192.0h1v1h-1zM155.0 166.1h1v1h-1zM273.7 151.9h1v1h-1zM177.3 145.8h1v1h-1zM164.1 195.1h1v1h-1zM181.4 172.3h1v1h-1zM234.9 169.7h1v1h-1zM240.3 195.4h1v1h-1zM268.5 177.2h1v1h-1zM254.7 200.2h1v1h-1zM254.2 185.8h1v1h-1zM257.8 143.4h1v1h-1zM232.3 182.0h1v1h-1zM140.8 188.5h1v1h-1zM264.7 190.8h1v1h-1zM230.7 159.3h1v1h-1zM231.0 189.1h1v1h-1zM159.3 195.3h1v1h-1zM275.5 174.3h1v1h-1zM229.7 160.5h1v1h-1zM170.3 197.7h1v1h-1zM141.5 139.7h1v1h-1zM157.4 131.6h1v1h-1zM189.8 149.3h1v1h-1zM158.6 144.5h1v1h-1zM174.3 175.5h1v1h-1zM211.8 194.2h1v1h-1zM173.8 143.9h1v1h-1zM178.9 174.4h1v1h-1zM245.3 185.9h1v1h-1zM166.3 186.3h1v1h-1zM192.6 175.6h1v1h-1zM228.2 167.7h1v1h-1zM259.8 198.7h1v1h-1zM231.3 140.9h1v1h-1zM171.9 200.3h1v1h-1zM200.1 193.9h1v1h-1zM203.1 150.1h1v1h-1zM152.4 193.8h1v1h-1zM205.8 189.6h1v1h-1zM171.4 170.0h1v1h-1zM155.8 197.4h1v1h-1zM189.4 167.9h1v1h-1zM269.1 161.6h1v1h-1zM149.3 186.1h1v1h-1zM242.5 161.0h1v1h-1zM259.9 131.6h1v1h-1zM258.2 194.3h1v1h-1zM270.1 163.8h1v1h-1zM172.6 189.9h1v1h-1zM259.1 186.8h1v1h-1zM150.9 182.9h1v1h-1zM267.4 168.5h1v1h-1zM240.7 196.9h1v1h-1zM202.1 179.0h1v1h-1zM167.9 153.7h1v1h-1zM189.4 193.6h1v1h-1zM275.7 167.0h1v1h-1zM164.3 201.6h1v1h-1zM229.8 164.6h1v1h-1zM142.8 167.8h1v1h-1zM241.9 162.9h1v1h-1zM171.8 165.7h1v1h-1zM223.2 154.5h1v1h-1zM159.5 143.3h1v1h-1zM270.3 148.0h1v1h-1zM258.1 175.4h1v1h-1zM264.4 189.1h1v1h-1zM170.8 158.4h1v1h-1zM264.3 196.4h1v1h-1zM169.5 199.8h1v1h-1zM200.2 192.1h1v1h-1zM165.9 147.3h1v1h-1zM220.2 133.3h1v1h-1zM195.1 152.5h1v1h-1zM141.2 132.7h1v1h-1zM171.7 167.3h1v1h-1zM210.3 132.7h1v1h-1zM207.6 129.5h1v1h-1zM225.4 186.5h1v1h-1zM254.9 187.6h1v1h-1zM277.8 168.8h1v1h-1zM170.8 131.7h1v1h-1zM184.0 172.5h1v1h-1zM186.9 153.2h1v1h-1zM142.6 174.9h1v1h-1zM161.9 141.5h1v1h-1zM139.4 157.7h1v1h-1zM175.1 169.0h1v1h-1zM217.2 150.1h1v1h-1zM158.5 184.7h1v1h-1zM156.1 131.8h1v1h-1zM160.1 192.3h1v1h-1zM211.7 159.7h1v1h-1zM262.2 198.2h1v1h-1zM171.9 190.1h1v1h-1zM220.5 169.1h1v1h-1zM196.0 137.1h1v1h-1zM231.0 139.2h1v1h-1zM271.9 182.6h1v1h-1zM269.8 172.4h1v1h-1zM146.6 135.1h1v1h-1zM153.8 201.1h1v1h-1zM179.5 181.2h1v1h-1zM273.3 138.4h1v1h-1zM197.6 163.5h1v1h-1zM256.9 143.1h1v1h-1zM229.9 164.7h1v1h-1zM155.6 184.5h1v1h-1zM230.5 159.3h1v1h-1zM250.3 136.3h1v1h-1zM272.7 188.3h1v1h-1zM149.9 136.4h1v1h-1zM218.4 189.1h1v1h-1zM235.2 183.6h1v1h-1zM172.2 175.5h1v1h-1zM212.0 152.6h1v1h-1zM149.6 147.9h1v1h-1zM225.9 167.7h1v1h-1zM232.5 143.6h1v1h-1zM140.8 167.5h1v1h-1zM233.3 150.3h1v1h-1zM229.1 189.2h1v1h-1zM272.1 144.6h1v1h-1zM171.7 170.8h1v1h-1zM272.0 187.2h1v1h-1zM196.1 131.7h1v1h-1zM264.0 185.3h1v1h-1zM241.2 176.0h1v1h-1zM231.3 146.0h1v1h-1zM157.1 186.1h1v1h-1zM169.2 182.9h1v1h-1zM144.4 192.4h1v1h-1zM195.7 171.5h1v1h-1zM150.2 159.6h1v1h-1zM269.9 160.0h1v1h-1zM188.7 150.6h1v1h-1zM200.0 189.5h1v1h-1zM206.1 201.1h1v1h-1zM233.0 190.6h1v1h-1zM190.6 131.6h1v1h-1zM245.6 141.0h1v1h-1zM228.3 155.8h1v1h-1zM237.0 131.4h1v1h-1zM166.6 146.1h1v1h-1zM181.1 183.6h1v1h-1zM253.2 158.2h1v1h-1zM257.1 138.1h1v1h-1zM220.9 187.8h1v1h-1zM141.5 163.1h1v1h-1zM239.9 182.4h1v1h-1zM149.1 202.1h1v1h-1zM163.4 151.2h1v1h-1zM140.0 185.5h1v1h-1zM176.1 150.1h1v1h-1zM276.1 201.0h1v1h-1zM155.2 133.7h1v1h-1zM273.7 191.5h1v1h-1zM185.9 164.0h1v1h-1zM183.8 171.7h1v1h-1zM205.7 183.4h1v1h-1zM147.0 196.3h1v1h-1zM161.9 195.7h1v1h-1zM225.8 151.2h1v1h-1zM175.8 144.2h1v1h-1zM240.3 177.3h1v1h-1zM207.5 188.6h1v1h-1zM268.0 161.2h1v1h-1zM146.5 191.1h1v1h-1zM235.3 174.1h1v1h-1zM238.7 185.6h1v1h-1zM249.8 143.4h1v1h-1zM152.5 159.3h1v1h-1zM165.9 150.4h1v1h-1zM250.7 144.2h1v1h-1zM171.4 195.6h1v1h-1zM231.3 160.9h1v1h-1zM158.6 188.2h1v1h-1zM220.1 194.5h1v1h-1zM227.2 184.7h1v1h-1zM175.2 171.3h1v1h-1zM213.2 149.1h1v1h-1zM143.7 149.1h1v1h-1zM170.0 181.0h1v1h-1zM228.0 151.6h1v1h-1zM224.5 136.1h1v1h-1zM167.8 179.5h1v1h-1zM231.2 183.2h1v1h-1zM161.2 185.8h1v1h-1zM246.2 141.6h1v1h-1zM238.6 131.9h1v1h-1zM249.4 179.6h1v1h-1zM183.1 149.4h1v1h-1zM147.1 157.6h1v1h-1zM151.8 198.8h1v1h-1zM210.6 191.3h1v1h-1zM268.4 137.9h1v1h-1zM203.4 187.9h1v1h-1zM156.0 165.2h1v1h-1zM211.6 175.7h1v1h-1zM238.6 163.5h1v1h-1zM246.8 194.6h1v1h-1zM149.1 174.0h1v1h-1zM206.4 183.8h1v1h-1zM232.0 186.1h1v1h-1zM183.5 167.3h1v1h-1zM238.0 145.8h1v1h-1zM190.9 169.6h1v1h-1zM267.8 133.7h1v1h-1zM225.1 194.7h1v1h-1zM202.5 155.6h1v1h-1zM178.0 199.7h1v1h-1zM275.3 135.5h1v1h-1zM157.3 168.2h1v1h-1zM225.2 180.4h1v1h-1zM148.9 147.2h1v1h-1zM246.1 170.3h1v1h-1zM151.3 173.5h1v1h-1zM152.4 131.6h1v1h-1zM146.5 181.2h1v1h-1zM245.7 192.5h1v1h-1zM154.2 197.2h1v1h-1zM162.1 163.3h1v1h-1zM254.8 190.0h1v1h-1zM163.5 146.2h1v1h-1zM198.4 177.6h1v1h-1zM156.5 184.6h1v1h-1zM274.0 193.8h1v1h-1zM175.4 148.0h1v1h-1zM262.9 135.9h1v1h-1zM204.9 132.1h1v1h-1zM223.1 181.2h1v1h-1zM203.8 149.8h1v1h-1zM241.0 192.9h1v1h-1zM166.2 131.9h1v1h-1zM154.2 142.6h1v1h-1zM186.3 184.2h1v1h-1zM174.8 167.9h1v1h-1zM276.6 191.5h1v1h-1zM257.7 178.8h1v1h-1zM163.3 147.7h1v1h-1zM186.7 188.6h1v1h-1zM197.4 142.0h1v1h-1zM258.9 160.1h1v1h-1zM140.9 146.3h1v1h-1zM223.4 136.3h1v1h-1zM271.2 178.4h1v1h-1zM256.9 142.2h1v1h-1zM176.2 175.5h1v1h-1zM191.3 176.5h1v1h-1zM191.8 194.3h1v1h-1zM170.9 135.5h1v1h-1zM196.3 155.7h1v1h-1zM262.3 146.9h1v1h-1zM173.3 134.8h1v1h-1zM250.8 129.6h1v1h-1zM240.2 146.9h1v1h-1zM252.0 183.8h1v1h-1zM230.2 174.4h1v1h-1zM255.7 192.6h1v1h-1zM214.1 177.7h1v1h-1zM253.0 177.0h1v1h-1zM256.3 140.1h1v1h-1zM261.1 192.2h1v1h-1zM269.3 147.7h1v1h-1zM233.1 154.4h1v1h-1zM146.1 138.4h1v1h-1zM215.3 168.9h1v1h-1zM186.4 144.8h1v1h-1zM247.7 138.4h1v1h-1zM169.1 177.4h1v1h-1zM173.9 195.0h1v1h-1zM184.7 200.5h1v1h-1zM249.7 185.7h1v1h-1zM149.2 197.4h1v1h-1zM242.0 187.8h1v1h-1zM203.4 172.9h1v1h-1zM250.5 132.3h1v1h-1zM182.3 155.9h1v1h-1zM263.3 167.8h1v1h-1zM264.0 148.5h1v1h-1zM182.6 138.1h1v1h-1zM218.8 194.6h1v1h-1zM220.8 141.4h1v1h-1zM211.2 166.8h1v1h-1zM197.1 137.7h1v1h-1zM231.6 187.1h1v1h-1zM189.6 175.7h1v1h-1zM272.2 151.2h1v1h-1zM156.7 135.2h1v1h-1zM144.3 159.0h1v1h-1zM199.3 149.7h1v1h-1zM198.9 195.6h1v1h-1zM211.9 142.1h1v1h-1zM248.6 176.2h1v1h-1zM170.2 147.6h1v1h-1zM250.4 186.3h1v1h-1zM261.7 129.4h1v1h-1zM199.4 174.4h1v1h-1zM237.7 134.0h1v1h-1zM167.4 180.2h1v1h-1zM185.0 148.6h1v1h-1zM165.3 162.2h1v1h-1zM208.7 153.3h1v1h-1zM159.3 132.1h1v1h-1zM277.9 161.2h1v1h-1zM249.5 188.9h1v1h-1zM265.4 161.9h1v1h-1zM244.6 138.6h1v1h-1zM189.5 134.5h1v1h-1zM168.1 200.7h1v1h-1zM209.0 136.3h1v1h-1zM264.1 132.2h1v1h-1zM210.1 133.8h1v1h-1zM217.0 191.9h1v1h-1zM226.8 143.3h1v1h-1zM198.1 158.1h1v1h-1zM175.3 182.1h1v1h-1zM197.6 164.7h1v1h-1zM204.3 195.6h1v1h-1zM140.2 177.4h1v1h-1zM238.7 147.4h1v1h-1zM172.2 183.6h1v1h-1zM211.0 189.5h1v1h-1zM222.9 135.9h1v1h-1zM167.4 159.4h1v1h-1zM239.2 147.3h1v1h-1zM238.0 150.2h1v1h-1zM177.2 140.8h1v1h-1zM267.5 198.6h1v1h-1zM270.1 169.9h1v1h-1zM151.4 197.3h1v1h-1zM249.8 152.6h1v1h-1zM159.1 168.6h1v1h-1zM227.9 129.1h1v1h-1zM185.9 146.0h1v1h-1zM173.4 187.8h1v1h-1zM161.7 172.3h1v1h-1zM225.0 180.1h1v1h-1zM161.8 186.4h1v1h-1zM151.2 188.2h1v1h-1zM183.1 165.3h1v1h-1zM164.8 167.1h1v1h-1zM200.3 130.9h1v1h-1zM206.7 132.9h1v1h-1zM204.7 187.9h1v1h-1zM221.4 191.8h1v1h-1zM162.8 197.0h1v1h-1zM236.5 131.3h1v1h-1zM195.3 176.4h1v1h-1zM198.3 176.5h1v1h-1zM235.1 173.6h1v1h-1zM160.5 138.9h1v1h-1zM218.7 202.0h1v1h-1zM257.0 148.8h1v1h-1zM188.5 156.1h1v1h-1zM266.8 172.9h1v1h-1zM199.3 180.5h1v1h-1zM216.2 153.7h1v1h-1zM241.2 132.6h1v1h-1zM159.5 175.5h1v1h-1zM257.3 144.2h1v1h-1zM221.1 152.6h1v1h-1zM186.5 132.9h1v1h-1zM215.5 172.8h1v1h-1zM164.7 193.9h1v1h-1zM263.7 143.5h1v1h-1zM143.1 178.7h1v1h-1zM205.8 166.0h1v1h-1zM189.7 136.6h1v1h-1zM187.9 163.3h1v1h-1zM268.1 155.4h1v1h-1zM205.5 178.0h1v1h-1zM193.0 157.6h1v1h-1zM248.2 183.3h1v1h-1zM190.7 173.9h1v1h-1zM189.7 135.3h1v1h-1zM214.0 182.1h1v1h-1zM185.4 142.0h1v1h-1zM161.6 151.7h1v1h-1zM142.4 188.2h1v1h-1zM147.7 143.2h1v1h-1zM159.8 185.7h1v1h-1zM147.4 183.0h1v1h-1zM241.0 149.5h1v1h-1zM265.5 132.8h1v1h-1zM215.7 134.6h1v1h-1zM151.8 134.4h1v1h-1zM199.5 188.2h1v1h-1zM243.0 139.3h1v1h-1zM192.8 195.6h1v1h-1zM260.3 147.0h1v1h-1zM222.1 130.6h1v1h-1zM144.7 198.3h1v1h-1zM156.6 200.8h1v1h-1zM237.5 156.1h1v1h-1zM155.0 190.5h1v1h-1zM164.5 157.6h1v1h-1zM232.5 131.1h1v1h-1zM189.4 130.4h1v1h-1zM199.6 173.7h1v1h-1zM174.5 185.3h1v1h-1zM274.4 129.3h1v1h-1zM237.2 189.5h1v1h-1zM164.3 191.2h1v1h-1zM188.0 148.2h1v1h-1zM147.6 163.4h1v1h-1zM233.7 200.0h1v1h-1zM200.3 144.3h1v1h-1zM219.1 169.2h1v1h-1zM261.5 158.2h1v1h-1zM186.1 173.3h1v1h-1zM270.0 139.2h1v1h-1zM266.1 161.2h1v1h-1zM159.1 189.5h1v1h-1zM192.5 151.6h1v1h-1zM140.1 143.4h1v1h-1zM248.2 164.6h1v1h-1zM140.2 143.7h1v1h-1zM196.8 153.2h1v1h-1zM218.3 148.9h1v1h-1zM196.0 131.8h1v1h-1zM271.7 134.1h1v1h-1zM224.6 179.2h1v1h-1zM191.6 182.6h1v1h-1zM264.6 144.2h1v1h-1zM248.5 142.0h1v1h-1zM276.6 151.8h1v1h-1zM183.5 146.7h1v1h-1zM175.7 157.5h1v1h-1zM161.4 139.3h1v1h-1zM207.1 182.2h1v1h-1zM267.2 196.3h1v1h-1zM268.2 146.8h1v1h-1zM160.1 146.5h1v1h-1zM218.8 135.7h1v1h-1zM220.6 171.0h1v1h-1zM268.7 196.0h1v1h-1zM247.0 194.9h1v1h-1zM177.7 194.1h1v1h-1zM260.1 169.9h1v1h-1zM240.0 183.6h1v1h-1zM240.5 154.7h1v1h-1zM152.9 166.1h1v1h-1zM239.4 186.6h1v1h-1zM230.0 182.0h1v1h-1zM190.7 134.8h1v1h-1zM270.0 129.0h1v1h-1zM198.5 160.4h1v1h-1zM251.4 146.6h1v1h-1zM202.6 138.9h1v1h-1zM195.0 132.6h1v1h-1zM204.9 193.7h1v1h-1zM243.1 191.8h1v1h-1zM233.5 198.5h1v1h-1zM276.3 162.6h1v1h-1zM241.9 192.8h1v1h-1zM227.6 174.7h1v1h-1zM173.9 142.5h1v1h-1zM144.0 167.3h1v1h-1zM151.5 139.8h1v1h-1zM263.1 199.9h1v1h-1zM203.7 167.9h1v1h-1zM238.9 148.8h1v1h-1zM186.9 133.8h1v1h-1zM165.1 192.4h1v1h-1zM252.2 193.6h1v1h-1zM165.2 165.6h1v1h-1zM186.0 190.4h1v1h-1zM268.2 167.6h1v1h-1zM248.2 184.0h1v1h-1zM265.8 186.2h1v1h-1zM264.9 157.3h1v1h-1zM273.9 145.7h1v1h-1zM226.8 163.2h1v1h-1zM257.8 169.8h1v1h-1zM153.0 135.2h1v1h-1zM251.0 152.3h1v1h-1zM242.5 185.4h1v1h-1zM203.6 141.9h1v1h-1zM272.6 134.5h1v1h-1zM161.6 152.1h1v1h-1zM216.1 172.6h1v1h-1zM162.6 192.3h1v1h-1zM204.5 166.2h1v1h-1zM176.5 175.4h1v1h-1zM216.1 146.4h1v1h-1zM221.0 190.5h1v1h-1zM262.1 175.4h1v1h-1zM272.3 130.2h1v1h-1zM158.9 159.6h1v1h-1zM273.3 174.1h1v1h-1zM215.2 179.3h1v1h-1zM143.4 187.4h1v1h-1zM156.6 181.5h1v1h-1zM226.6 161.0h1v1h-1zM270.7 152.0h1v1h-1zM189.6 132.6h1v1h-1zM227.2 162.5h1v1h-1zM258.8 153.2h1v1h-1zM189.3 157.9h1v1h-1zM181.0 131.1h1v1h-1zM173.2 130.9h1v1h-1zM148.3 201.7h1v1h-1zM216.0 187.3h1v1h-1zM209.7 193.7h1v1h-1zM255.3 153.2h1v1h-1zM234.2 134.3h1v1h-1zM276.8 152.5h1v1h-1zM238.2 202.3h1v1h-1zM146.2 171.1h1v1h-1zM273.6 179.4h1v1h-1zM218.1 201.8h1v1h-1zM197.0 136.0h1v1h-1zM221.0 141.8h1v1h-1zM141.2 187.5h1v1h-1zM164.2 141.2h1v1h-1zM153.5 133.9h1v1h-1zM176.5 137.7h1v1h-1zM210.8 178.6h1v1h-1zM273.2 172.6h1v1h-1zM236.0 197.5h1v1h-1zM254.4 130.3h1v1h-1zM154.7 147.5h1v1h-1zM176.9 191.5h1v1h-1zM189.9 153.7h1v1h-1zM271.4 129.3h1v1h-1zM277.0 156.6h1v1h-1zM229.9 190.6h1v1h-1zM240.0 161.9h1v1h-1zM189.1 136.2h1v1h-1zM174.7 192.0h1v1h-1zM161.3 191.4h1v1h-1zM220.9 143.5h1v1h-1zM161.6 165.4h1v1h-1zM219.0 161.2h1v1h-1zM196.6 162.4h1v1h-1zM141.5 198.2h1v1h-1zM197.9 185.0h1v1h-1zM244.2 184.6h1v1h-1zM253.5 184.7h1v1h-1zM152.2 167.3h1v1h-1zM193.1 177.7h1v1h-1zM245.4 186.1h1v1h-1zM232.2 141.0h1v1h-1zM202.1 165.4h1v1h-1zM267.3 158.0h1v1h-1zM164.5 197.3h1v1h-1zM150.8 178.0h1v1h-1zM151.7 154.7h1v1h-1zM198.1 179.7h1v1h-1zM210.3 133.5h1v1h-1zM173.3 191.0h1v1h-1zM181.7 178.6h1v1h-1zM265.4 150.5h1v1h-1zM198.8 190.2h1v1h-1zM145.7 193.4h1v1h-1zM256.8 154.8h1v1h-1zM161.1 156.4h1v1h-1zM147.5 165.1h1v1h-1zM185.9 194.9h1v1h-1zM242.2 149.7h1v1h-1zM210.1 190.1h1v1h-1zM232.1 170.6h1v1h-1zM231.0 195.7h1v1h-1zM264.4 202.2h1v1h-1zM170.3 173.1h1v1h-1zM166.9 196.0h1v1h-1zM234.6 129.3h1v1h-1zM185.8 182.8h1v1h-1zM232.3 186.1h1v1h-1zM194.9 151.8h1v1h-1zM199.1 191.0h1v1h-1zM149.2 162.5h1v1h-1zM276.6 134.8h1v1h-1zM153.3 165.5h1v1h-1zM207.0 188.2h1v1h-1zM232.2 166.0h1v1h-1zM251.4 181.0h1v1h-1zM268.7 142.5h1v1h-1zM205.0 192.0h1v1h-1zM206.4 193.1h1v1h-1zM234.4 151.1h1v1h-1zM219.5 130.6h1v1h-1zM145.7 149.8h1v1h-1zM250.3 194.1h1v1h-1zM184.0 198.5h1v1h-1zM220.1 149.2h1v1h-1zM187.6 151.3h1v1h-1zM190.2 150.0h1v1h-1zM177.8 130.5h1v1h-1zM200.1 202.2h1v1h-1zM152.1 149.0h1v1h-1zM259.1 155.6h1v1h-1zM160.9 138.3h1v1h-1zM238.7 193.9h1v1h-1zM192.1 153.0h1v1h-1zM139.9 199.3h1v1h-1zM188.4 138.1h1v1h-1zM277.4 179.0h1v1h-1zM265.3 144.6h1v1h-1zM259.2 159.2h1v1h-1zM273.6 155.1h1v1h-1zM270.7 160.8h1v1h-1zM166.6 164.3h1v1h-1zM206.3 177.6h1v1h-1zM191.2 164.9h1v1h-1zM220.8 186.1h1v1h-1zM177.8 165.4h1v1h-1zM209.2 171.6h1v1h-1zM231.4 188.8h1v1h-1zM213.1 182.1h1v1h-1zM246.0 150.7h1v1h-1zM247.6 164.4h1v1h-1zM173.9 134.3h1v1h-1zM210.1 174.8h1v1h-1zM179.6 172.9h1v1h-1zM237.5 142.2h1v1h-1zM206.2 148.7h1v1h-1zM168.9 169.2h1v1h-1zM189.0 179.9h1v1h-1zM189.2 146.9h1v1h-1zM241.0 187.2h1v1h-1zM171.8 144.7h1v1h-1zM230.1 152.7h1v1h-1zM227.4 151.4h1v1h-1zM177.2 197.9h1v1h-1zM189.4 200.0h1v1h-1zM272.6 163.8h1v1h-1zM232.2 131.3h1v1h-1zM250.8 185.6h1v1h-1zM186.1 194.4h1v1h-1zM249.6 148.2h1v1h-1zM206.9 175.3h1v1h-1zM176.8 166.6h1v1h-1zM238.0 136.6h1v1h-1zM256.9 138.6h1v1h-1zM200.2 171.4h1v1h-1zM182.9 130.8h1v1h-1zM164.8 190.8h1v1h-1zM178.3 134.6h1v1h-1zM257.5 178.0h1v1h-1zM257.3 136.9h1v1h-1zM198.6 188.3h1v1h-1zM246.4 174.9h1v1h-1zM155.9 136.0h1v1h-1zM200.3 173.2h1v1h-1zM221.8 183.6h1v1h-1zM142.2 173.7h1v1h-1zM191.9 201.6h1v1h-1zM190.9 146.4h1v1h-1zM185.5 152.4h1v1h-1zM225.9 188.6h1v1h-1zM142.2 152.8h1v1h-1zM224.0 180.8h1v1h-1zM167.1 139.5h1v1h-1zM265.3 185.3h1v1h-1zM220.6 160.2h1v1h-1zM184.0 199.7h1v1h-1zM184.5 155.0h1v1h-1zM222.8 164.9h1v1h-1zM156.4 186.8h1v1h-1zM182.5 171.8h1v1h-1zM189.7 136.1h1v1h-1zM155.5 129.9h1v1h-1zM172.7 139.4h1v1h-1zM173.1 159.2h1v1h-1zM191.6 199.6h1v1h-1zM249.7 142.8h1v1h-1zM176.7 145.3h1v1h-1zM205.8 129.8h1v1h-1zM147.0 174.5h1v1h-1zM171.0 156.5h1v1h-1zM247.1 140.5h1v1h-1zM215.3 173.9h1v1h-1zM250.1 194.7h1v1h-1zM175.4 147.1h1v1h-1zM200.4 129.4h1v1h-1zM152.0 168.5h1v1h-1zM168.8 202.3h1v1h-1zM152.4 195.7h1v1h-1zM190.5 170.6h1v1h-1zM209.7 181.1h1v1h-1zM236.6 164.5h1v1h-1zM275.4 190.0h1v1h-1zM210.1 166.1h1v1h-1zM190.9 139.1h1v1h-1zM168.4 137.9h1v1h-1zM189.0 177.7h1v1h-1zM224.5 161.0h1v1h-1zM178.7 196.2h1v1h-1zM271.7 175.3h1v1h-1zM155.3 154.1h1v1h-1zM213.1 178.3h1v1h-1zM184.9 140.3h1v1h-1zM186.3 171.7h1v1h-1zM271.9 175.9h1v1h-1zM195.1 190.5h1v1h-1zM231.1 153.5h1v1h-1zM201.2 172.6h1v1h-1zM171.6 144.3h1v1h-1zM202.7 141.2h1v1h-1zM191.3 148.5h1v1h-1zM143.4 186.3h1v1h-1zM272.4 152.2h1v1h-1zM233.0 165.9h1v1h-1zM204.8 187.9h1v1h-1zM163.4 155.0h1v1h-1zM235.5 183.4h1v1h-1zM228.7 192.4h1v1h-1zM224.3 189.8h1v1h-1zM210.0 179.3h1v1h-1zM215.7 192.6h1v1h-1zM206.3 157.1h1v1h-1zM158.1 179.7h1v1h-1zM233.4 162.3h1v1h-1zM224.8 145.1h1v1h-1zM218.5 186.1h1v1h-1zM200.7 141.4h1v1h-1zM217.9 147.0h1v1h-1zM189.8 169.4h1v1h-1zM273.7 142.0h1v1h-1zM229.8 194.6h1v1h-1zM224.1 200.0h1v1h-1zM268.7 130.9h1v1h-1zM240.2 182.7h1v1h-1zM256.5 189.4h1v1h-1zM254.0 164.1h1v1h-1zM141.6 136.9h1v1h-1zM200.3 141.4h1v1h-1zM234.7 163.2h1v1h-1zM258.8 187.5h1v1h-1zM263.8 177.5h1v1h-1zM143.0 177.7h1v1h-1zM148.6 197.1h1v1h-1zM225.8 193.5h1v1h-1zM161.5 180.9h1v1h-1zM178.0 134.8h1v1h-1zM264.8 138.4h1v1h-1zM276.5 170.0h1v1h-1zM249.6 181.8h1v1h-1zM267.7 142.8h1v1h-1zM240.8 185.7h1v1h-1zM152.1 134.4h1v1h-1zM215.9 157.4h1v1h-1zM258.8 191.9h1v1h-1zM236.2 168.3h1v1h-1zM248.3 168.9h1v1h-1zM166.7 132.1h1v1h-1zM178.4 147.6h1v1h-1zM254.5 184.2h1v1h-1zM235.7 173.3h1v1h-1zM170.4 186.4h1v1h-1zM271.5 175.3h1v1h-1zM210.0 165.6h1v1h-1zM143.1 147.0h1v1h-1zM242.6 138.0h1v1h-1zM188.8 187.0h1v1h-1zM187.5 148.6h1v1h-1zM230.5 172.6h1v1h-1zM212.1 191.1h1v1h-1zM266.6 167.7h1v1h-1zM209.6 144.5h1v1h-1zM166.8 149.3h1v1h-1zM188.3 142.7h1v1h-1zM152.5 182.1h1v1h-1zM227.4 166.9h1v1h-1zM191.6 159.9h1v1h-1zM169.6 170.3h1v1h-1zM139.7 143.7h1v1h-1zM174.6 141.3h1v1h-1zM215.9 158.2h1v1h-1zM226.1 193.2h1v1h-1zM247.0 180.9h1v1h-1zM258.9 144.6h1v1h-1zM233.3 142.5h1v1h-1zM199.9 152.9h1v1h-1zM271.3 188.5h1v1h-1zM153.4 172.1h1v1h-1zM210.0 191.5h1v1h-1zM170.0 138.7h1v1h-1zM193.1 191.5h1v1h-1zM164.8 160.0h1v1h-1zM165.7 167.5h1v1h-1zM213.9 170.1h1v1h-1zM209.2 140.9h1v1h-1zM141.7 134.0h1v1h-1zM167.0 199.6h1v1h-1zM245.7 160.5h1v1h-1zM213.9 186.4h1v1h-1zM247.6 179.9h1v1h-1zM240.1 185.6h1v1h-1zM218.7 154.7h1v1h-1zM190.9 167.1h1v1h-1zM148.5 155.1h1v1h-1zM235.1 191.1h1v1h-1zM215.7 148.5h1v1h-1zM153.4 140.7h1v1h-1zM259.9 198.7h1v1h-1zM173.8 196.2h1v1h-1zM174.4 196.1h1v1h-1zM207.2 184.0h1v1h-1zM181.0 168.5h1v1h-1zM190.9 144.4h1v1h-1zM239.5 194.0h1v1h-1zM170.4 201.8h1v1h-1zM185.0 194.5h1v1h-1zM235.9 145.0h1v1h-1zM277.3 187.1h1v1h-1zM144.5 146.8h1v1h-1zM196.4 133.9h1v1h-1zM193.8 179.4h1v1h-1zM149.5 132.7h1v1h-1zM210.3 170.0h1v1h-1zM199.9 145.9h1v1h-1zM254.5 167.4h1v1h-1zM164.1 172.5h1v1h-1zM262.8 172.4h1v1h-1zM230.9 161.3h1v1h-1zM203.3 160.1h1v1h-1zM173.4 161.4h1v1h-1zM259.1 196.5h1v1h-1zM190.5 137.7h1v1h-1zM274.9 201.4h1v1h-1zM226.2 155.9h1v1h-1zM256.2 167.9h1v1h-1zM157.6 180.3h1v1h-1zM238.1 148.9h1v1h-1zM167.7 155.2h1v1h-1zM230.4 154.0h1v1h-1zM142.5 169.9h1v1h-1zM184.4 158.5h1v1h-1zM186.0 193.0h1v1h-1zM232.2 181.3h1v1h-1zM248.9 179.9h1v1h-1zM215.0 143.0h1v1h-1zM155.4 148.7h1v1h-1zM148.9 133.6h1v1h-1zM142.9 149.2h1v1h-1zM190.5 189.2h1v1h-1zM194.1 165.6h1v1h-1zM196.9 193.4h1v1h-1zM211.8 180.4h1v1h-1zM273.3 174.2h1v1h-1zM199.7 185.7h1v1h-1zM273.6 178.8h1v1h-1zM228.9 141.2h1v1h-1zM193.9 146.9h1v1h-1zM178.0 194.4h1v1h-1zM145.3 169.4h1v1h-1zM260.4 187.5h1v1h-1zM200.4 146.3h1v1h-1zM177.7 191.2h1v1h-1zM211.3 171.1h1v1h-1zM269.4 136.4h1v1h-1zM172.4 161.2h1v1h-1zM197.1 199.9h1v1h-1zM200.9 135.1h1v1h-1zM181.3 159.3h1v1h-1zM237.8 197.8h1v1h-1zM267.4 194.4h1v1h-1zM181.2 149.8h1v1h-1zM142.1 174.8h1v1h-1zM157.0 167.6h1v1h-1zM141.6 191.3h1v1h-1zM170.2 196.4h1v1h-1zM152.0 188.1h1v1h-1zM211.1 192.4h1v1h-1zM253.1 171.8h1v1h-1zM174.3 184.7h1v1h-1zM255.7 199.0h1v1h-1zM242.2 195.2h1v1h-1zM270.2 172.4h1v1h-1zM222.2 138.9h1v1h-1zM153.3 197.7h1v1h-1zM235.4 159.2h1v1h-1zM239.3 182.0h1v1h-1zM208.2 188.7h1v1h-1zM199.9 181.7h1v1h-1zM220.5 180.4h1v1h-1zM177.5 155.2h1v1h-1zM151.3 143.5h1v1h-1zM208.1 185.6h1v1h-1zM155.3 165.0h1v1h-1zM209.2 149.5h1v1h-1zM191.2 172.1h1v1h-1zM263.0 182.3h1v1h-1zM275.3 136.8h1v1h-1zM276.5 133.0h1v1h-1zM175.0 142.5h1v1h-1zM224.1 187.4h1v1h-1zM277.5 154.8h1v1h-1zM251.5 161.4h1v1h-1zM150.4 138.9h1v1h-1zM163.7 183.4h1v1h-1zM224.7 188.2h1v1h-1zM203.5 149.9h1v1h-1zM152.7 153.8h1v1h-1zM153.9 167.4h1v1h-1zM229.3 151.9h1v1h-1zM145.4 188.4h1v1h-1zM272.4 173.7h1v1h-1zM198.2 174.9h1v1h-1zM235.8 148.0h1v1h-1zM229.4 172.8h1v1h-1zM218.3 164.5h1v1h-1zM165.4 132.6h1v1h-1zM273.0 145.2h1v1h-1zM276.8 168.2h1v1h-1zM255.6 184.7h1v1h-1zM242.3 149.8h1v1h-1zM269.4 141.1h1v1h-1zM261.2 182.7h1v1h-1zM248.4 167.5h1v1h-1zM182.7 175.3h1v1h-1zM250.0 140.4h1v1h-1zM256.4 153.2h1v1h-1zM163.0 191.0h1v1h-1zM218.1 186.8h1v1h-1zM186.0 194.9h1v1h-1zM160.9 149.7h1v1h-1zM170.4 140.1h1v1h-1zM185.0 140.0h1v1h-1zM181.3 182.7h1v1h-1zM194.1 201.5h1v1h-1zM199.7 174.5h1v1h-1zM141.2 139.1h1v1h-1zM191.4 202.4h1v1h-1zM272.4 185.6h1v1h-1zM174.5 200.6h1v1h-1zM153.2 150.2h1v1h-1zM220.0 165.4h1v1h-1zM173.5 181.3h1v1h-1zM273.7 175.0h1v1h-1zM276.4 137.2h1v1h-1zM156.7 140.0h1v1h-1zM142.3 150.1h1v1h-1zM251.5 151.3h1v1h-1zM215.5 142.6h1v1h-1zM160.8 162.7h1v1h-1zM176.2 173.1h1v1h-1zM165.9 150.3h1v1h-1zM218.8 145.1h1v1h-1zM226.4 158.4h1v1h-1zM267.1 142.7h1v1h-1zM217.9 178.4h1v1h-1zM267.9 175.1h1v1h-1zM153.6 177.9h1v1h-1zM237.2 133.9h1v1h-1zM228.8 153.7h1v1h-1zM269.2 145.2h1v1h-1zM201.1 168.5h1v1h-1zM244.6 179.1h1v1h-1zM154.6 156.8h1v1h-1zM251.4 184.2h1v1h-1zM234.1 136.8h1v1h-1zM157.1 192.4h1v1h-1zM207.7 177.8h1v1h-1zM270.9 129.1h1v1h-1zM201.1 144.1h1v1h-1zM226.9 189.7h1v1h-1zM274.0 189.6h1v1h-1zM149.9 169.1h1v1h-1zM141.9 167.1h1v1h-1zM196.5 132.2h1v1h-1zM196.7 139.9h1v1h-1zM247.4 159.3h1v1h-1zM172.3 180.0h1v1h-1zM207.5 173.4h1v1h-1zM228.8 165.3h1v1h-1zM184.1 157.8h1v1h-1zM277.4 187.5h1v1h-1zM185.9 201.5h1v1h-1zM152.4 198.3h1v1h-1zM198.0 140.9h1v1h-1zM236.0 131.4h1v1h-1zM255.3 159.3h1v1h-1zM219.8 201.5h1v1h-1zM192.5 183.2h1v1h-1zM225.4 197.6h1v1h-1zM214.5 174.8h1v1h-1zM207.5 172.7h1v1h-1zM153.6 148.6h1v1h-1zM250.2 158.4h1v1h-1zM155.5 158.4h1v1h-1zM260.0 129.9h1v1h-1zM244.4 199.1h1v1h-1zM261.1 153.5h1v1h-1zM177.7 134.8h1v1h-1zM253.8 136.6h1v1h-1zM173.7 160.0h1v1h-1zM191.9 180.7h1v1h-1zM244.8 157.1h1v1h-1zM185.4 162.5h1v1h-1zM268.0 160.7h1v1h-1zM265.9 160.8h1v1h-1zM276.8 200.3h1v1h-1zM203.1 161.8h1v1h-1zM240.1 131.2h1v1h-1zM225.7 167.3h1v1h-1zM227.2 163.2h1v1h-1zM237.0 132.8h1v1h-1zM141.4 178.9h1v1h-1zM260.8 198.0h1v1h-1zM248.8 200.2h1v1h-1zM229.2 143.6h1v1h-1zM172.4 174.4h1v1h-1zM170.8 150.6h1v1h-1zM212.6 157.9h1v1h-1zM184.5 159.3h1v1h-1zM271.6 145.1h1v1h-1zM271.2 184.2h1v1h-1zM210.9 174.1h1v1h-1zM187.3 143.3h1v1h-1zM163.6 161.3h1v1h-1zM246.6 133.6h1v1h-1zM142.0 182.5h1v1h-1zM207.7 133.6h1v1h-1zM162.0 140.6h1v1h-1zM194.4 162.1h1v1h-1zM267.9 197.7h1v1h-1zM185.0 191.0h1v1h-1zM157.9 180.1h1v1h-1zM236.4 159.7h1v1h-1zM156.3 143.5h1v1h-1zM209.7 191.9h1v1h-1zM253.0 142.1h1v1h-1zM169.4 133.3h1v1h-1zM251.6 185.6h1v1h-1zM139.6 138.6h1v1h-1zM253.8 195.2h1v1h-1zM245.5 145.6h1v1h-1zM227.2 141.2h1v1h-1zM275.8 178.3h1v1h-1zM254.9 134.7h1v1h-1zM182.8 152.2h1v1h-1zM234.2 140.0h1v1h-1zM217.9 182.2h1v1h-1zM174.3 162.5h1v1h-1zM158.2 139.2h1v1h-1zM262.5 184.6h1v1h-1zM236.0 152.9h1v1h-1zM156.3 145.2h1v1h-1zM245.5 179.9h1v1h-1zM153.0 181.7h1v1h-1zM246.3 168.1h1v1h-1zM252.3 190.7h1v1h-1zM154.2 176.8h1v1h-1zM261.2 190.5h1v1h-1zM149.6 147.1h1v1h-1zM152.1 153.3h1v1h-1zM151.0 184.3h1v1h-1zM231.3 138.2h1v1h-1zM196.1 169.4h1v1h-1zM143.7 177.4h1v1h-1zM172.9 144.4h1v1h-1zM238.3 144.7h1v1h-1zM213.0 151.0h1v1h-1zM157.0 174.1h1v1h-1zM180.0 181.7h1v1h-1zM241.8 186.7h1v1h-1zM184.5 181.7h1v1h-1zM259.1 155.5h1v1h-1zM206.0 174.5h1v1h-1zM267.0 133.3h1v1h-1zM201.7 160.7h1v1h-1zM258.8 183.6h1v1h-1zM175.2 194.8h1v1h-1zM208.9 145.9h1v1h-1zM161.1 170.6h1v1h-1zM276.6 167.0h1v1h-1zM192.4 140.7h1v1h-1zM262.9 174.8h1v1h-1zM156.5 155.6h1v1h-1zM241.9 134.5h1v1h-1zM230.8 179.8h1v1h-1zM210.7 181.3h1v1h-1zM201.2 168.0h1v1h-1zM265.7 135.8h1v1h-1zM267.7 167.3h1v1h-1zM272.9 192.2h1v1h-1zM267.0 155.3h1v1h-1zM260.2 172.0h1v1h-1zM276.6 200.6h1v1h-1zM256.8 142.2h1v1h-1zM191.2 141.5h1v1h-1zM169.0 147.1h1v1h-1zM204.3 172.2h1v1h-1zM166.6 143.6h1v1h-1zM240.6 195.9h1v1h-1zM274.8 186.1h1v1h-1zM191.4 171.9h1v1h-1zM219.2 136.9h1v1h-1zM270.3 155.9h1v1h-1zM190.0 194.5h1v1h-1zM149.0 164.3h1v1h-1zM220.2 169.5h1v1h-1zM275.4 172.0h1v1h-1zM188.0 171.7h1v1h-1zM163.2 133.4h1v1h-1zM221.2 162.5h1v1h-1zM198.4 184.0h1v1h-1zM183.1 166.1h1v1h-1zM201.2 130.4h1v1h-1zM217.4 187.2h1v1h-1zM146.9 190.7h1v1h-1zM187.3 144.9h1v1h-1zM262.5 185.0h1v1h-1zM247.5 169.9h1v1h-1zM213.8 163.2h1v1h-1zM145.3 197.6h1v1h-1zM231.8 151.7h1v1h-1zM192.1 134.8h1v1h-1zM252.9 180.2h1v1h-1zM148.7 161.7h1v1h-1zM230.0 185.9h1v1h-1zM145.5 166.6h1v1h-1zM144.2 148.2h1v1h-1zM226.0 181.9h1v1h-1zM201.1 185.3h1v1h-1zM165.2 189.1h1v1h-1zM252.4 169.1h1v1h-1zM238.5 176.9h1v1h-1zM251.1 158.6h1v1h-1zM230.0 173.5h1v1h-1zM217.2 188.4h1v1h-1zM274.2 153.0h1v1h-1zM213.1 155.4h1v1h-1zM153.3 177.8h1v1h-1zM171.4 140.4h1v1h-1zM141.2 169.7h1v1h-1zM259.7 144.9h1v1h-1zM238.9 180.2h1v1h-1zM171.6 150.6h1v1h-1zM180.8 149.2h1v1h-1zM187.9 146.5h1v1h-1zM218.8 142.5h1v1h-1zM275.9 174.6h1v1h-1zM276.0 201.7h1v1h-1zM260.9 200.2h1v1h-1zM214.9 173.9h1v1h-1zM246.0 179.3h1v1h-1zM168.3 144.8h1v1h-1zM215.6 146.8h1v1h-1zM207.2 199.7h1v1h-1zM246.2 186.4h1v1h-1zM204.7 202.4h1v1h-1zM175.3 153.5h1v1h-1zM245.2 155.6h1v1h-1zM200.8 148.5h1v1h-1zM232.0 187.3h1v1h-1zM213.5 158.5h1v1h-1zM240.3 187.9h1v1h-1zM182.4 177.2h1v1h-1zM152.7 176.8h1v1h-1zM240.4 159.9h1v1h-1zM163.4 148.6h1v1h-1zM155.6 147.2h1v1h-1zM159.9 195.3h1v1h-1zM174.3 164.5h1v1h-1zM176.8 137.4h1v1h-1zM269.3 181.6h1v1h-1zM243.2 151.3h1v1h-1zM217.1 183.7h1v1h-1zM270.9 132.1h1v1h-1zM141.2 178.1h1v1h-1zM183.9 187.8h1v1h-1zM199.0 136.4h1v1h-1zM142.7 141.0h1v1h-1zM182.2 201.4h1v1h-1zM264.0 182.4h1v1h-1zM168.8 193.8h1v1h-1zM190.3 193.6h1v1h-1zM164.3 184.0h1v1h-1zM219.5 169.6h1v1h-1zM181.7 163.7h1v1h-1zM246.6 149.2h1v1h-1zM187.0 134.9h1v1h-1zM249.0 161.1h1v1h-1zM205.3 178.2h1v1h-1zM158.0 137.3h1v1h-1zM223.6 195.2h1v1h-1zM267.6 137.2h1v1h-1zM144.1 150.9h1v1h-1zM172.4 163.0h1v1h-1zM254.9 176.6h1v1h-1zM208.4 153.5h1v1h-1zM166.1 156.3h1v1h-1zM198.3 130.2h1v1h-1zM165.4 150.1h1v1h-1zM145.1 182.3h1v1h-1zM155.7 191.5h1v1h-1zM212.6 189.6h1v1h-1zM249.5 195.3h1v1h-1zM225.7 139.1h1v1h-1zM156.9 186.4h1v1h-1zM245.3 167.8h1v1h-1zM268.5 177.6h1v1h-1zM194.5 132.0h1v1h-1zM187.0 131.4h1v1h-1zM262.8 187.7h1v1h-1zM215.0 133.2h1v1h-1zM155.7 140.0h1v1h-1zM246.6 147.3h1v1h-1zM222.6 195.1h1v1h-1zM272.1 194.9h1v1h-1zM247.9 149.2h1v1h-1zM183.4 152.1h1v1h-1zM196.3 147.2h1v1h-1zM145.4 133.8h1v1h-1zM192.7 143.4h1v1h-1zM204.7 142.7h1v1h-1zM181.1 162.3h1v1h-1zM142.9 166.4h1v1h-1zM150.4 139.2h1v1h-1zM233.2 171.2h1v1h-1zM274.3 132.8h1v1h-1zM271.9 196.4h1v1h-1zM236.9 148.9h1v1h-1zM223.3 201.3h1v1h-1zM267.3 170.2h1v1h-1zM221.8 142.5h1v1h-1zM177.5 200.3h1v1h-1zM267.3 182.5h1v1h-1zM145.1 192.4h1v1h-1zM277.2 148.0h1v1h-1zM168.5 191.6h1v1h-1zM263.7 153.5h1v1h-1zM220.1 192.8h1v1h-1zM196.6 132.8h1v1h-1zM139.9 171.6h1v1h-1zM147.3 129.0h1v1h-1zM153.9 132.3h1v1h-1zM255.9 148.6h1v1h-1zM145.3 151.3h1v1h-1zM207.7 166.3h1v1h-1zM159.5 164.7h1v1h-1zM250.5 192.8h1v1h-1zM260.7 171.5h1v1h-1zM176.3 184.8h1v1h-1zM203.1 154.8h1v1h-1zM218.3 137.0h1v1h-1zM210.2 164.7h1v1h-1zM276.3 186.6h1v1h-1zM141.7 178.3h1v1h-1zM182.8 193.3h1v1h-1zM197.3 199.9h1v1h-1zM266.9 166.8h1v1h-1zM261.1 151.1h1v1h-1zM240.5 146.6h1v1h-1zM181.2 148.8h1v1h-1zM168.0 161.6h1v1h-1zM221.8 145.4h1v1h-1zM162.7 177.1h1v1h-1zM253.5 143.3h1v1h-1zM274.8 193.7h1v1h-1zM168.5 194.6h1v1h-1zM239.6 147.6h1v1h-1zM229.2 145.1h1v1h-1zM210.9 161.1h1v1h-1zM266.9 154.7h1v1h-1zM230.2 159.1h1v1h-1zM207.8 146.8h1v1h-1zM218.7 192.9h1v1h-1zM198.4 171.4h1v1h-1zM199.3 161.2h1v1h-1zM189.5 173.7h1v1h-1zM198.5 175.1h1v1h-1zM274.0 195.8h1v1h-1zM141.8 149.4h1v1h-1zM194.1 169.4h1v1h-1zM221.4 175.4h1v1h-1zM172.5 201.3h1v1h-1zM260.4 133.4h1v1h-1zM179.0 168.2h1v1h-1zM184.3 198.1h1v1h-1zM263.0 140.9h1v1h-1zM172.8 183.7h1v1h-1zM236.1 143.8h1v1h-1zM204.4 173.9h1v1h-1zM171.8 143.7h1v1h-1zM259.0 139.3h1v1h-1zM155.3 158.8h1v1h-1zM275.8 149.8h1v1h-1zM203.0 191.8h1v1h-1zM147.8 148.6h1v1h-1zM148.9 142.9h1v1h-1zM231.6 167.6h1v1h-1zM262.9 133.8h1v1h-1zM224.8 195.1h1v1h-1zM220.9 171.5h1v1h-1zM174.0 134.1h1v1h-1zM240.5 193.5h1v1h-1zM171.1 177.2h1v1h-1zM218.7 178.5h1v1h-1zM200.3 142.6h1v1h-1zM164.6 149.5h1v1h-1zM185.2 133.0h1v1h-1zM271.2 178.3h1v1h-1zM223.3 194.3h1v1h-1zM196.2 156.6h1v1h-1zM227.8 177.2h1v1h-1zM144.1 193.3h1v1h-1zM217.0 189.8h1v1h-1zM181.8 156.9h1v1h-1zM264.1 164.5h1v1h-1zM174.7 159.3h1v1h-1zM177.6 144.9h1v1h-1zM161.0 183.2h1v1h-1zM200.2 135.6h1v1h-1zM162.3 188.3h1v1h-1zM157.7 186.7h1v1h-1zM185.4 173.4h1v1h-1zM244.6 172.7h1v1h-1zM205.2 173.3h1v1h-1zM246.6 136.0h1v1h-1zM198.3 134.7h1v1h-1zM174.1 130.5h1v1h-1zM212.2 152.3h1v1h-1zM192.2 182.5h1v1h-1zM158.1 137.3h1v1h-1zM189.2 151.0h1v1h-1zM203.2 163.7h1v1h-1zM168.1 189.4h1v1h-1zM186.0 152.3h1v1h-1zM214.7 202.2h1v1h-1zM237.8 170.6h1v1h-1zM149.0 183.3h1v1h-1zM168.7 141.9h1v1h-1zM215.6 178.4h1v1h-1zM173.8 181.0h1v1h-1zM178.2 177.0h1v1h-1zM248.9 144.4h1v1h-1zM236.1 137.3h1v1h-1zM230.0 194.1h1v1h-1zM145.6 190.3h1v1h-1zM175.2 163.6h1v1h-1zM253.2 159.3h1v1h-1zM198.9 184.6h1v1h-1zM275.3 147.0h1v1h-1zM186.7 199.0h1v1h-1zM275.4 183.6h1v1h-1zM256.8 193.8h1v1h-1zM229.8 176.2h1v1h-1zM262.5 180.6h1v1h-1zM153.4 187.8h1v1h-1zM251.0 130.5h1v1h-1zM228.4 152.3h1v1h-1zM178.5 182.4h1v1h-1zM151.4 130.0h1v1h-1zM145.4 157.4h1v1h-1zM187.9 188.7h1v1h-1zM199.8 134.0h1v1h-1zM173.7 190.3h1v1h-1zM226.6 154.1h1v1h-1zM210.1 189.2h1v1h-1zM260.5 194.3h1v1h-1zM163.5 184.6h1v1h-1zM210.6 167.4h1v1h-1zM216.1 149.0h1v1h-1zM263.2 168.0h1v1h-1zM145.2 141.3h1v1h-1zM142.0 179.0h1v1h-1zM159.2 158.1h1v1h-1zM247.7 192.9h1v1h-1zM180.2 139.8h1v1h-1zM234.8 194.4h1v1h-1zM234.5 144.0h1v1h-1zM196.0 191.0h1v1h-1zM230.7 178.9h1v1h-1zM157.9 190.3h1v1h-1zM195.1 193.1h1v1h-1zM192.7 161.9h1v1h-1zM215.9 172.7h1v1h-1zM250.2 196.0h1v1h-1zM185.1 133.8h1v1h-1zM259.1 134.7h1v1h-1zM245.4 163.0h1v1h-1zM248.5 160.3h1v1h-1zM155.7 183.6h1v1h-1zM152.9 138.1h1v1h-1zM184.0 172.5h1v1h-1zM213.9 195.0h1v1h-1zM237.1 143.9h1v1h-1zM249.6 137.6h1v1h-1zM183.4 191.7h1v1h-1zM244.9 151.4h1v1h-1zM190.9 177.2h1v1h-1zM160.7 141.2h1v1h-1zM203.2 142.7h1v1h-1zM186.5 178.8h1v1h-1zM210.5 147.6h1v1h-1zM261.6 176.4h1v1h-1zM235.4 172.7h1v1h-1zM258.7 146.5h1v1h-1zM216.3 175.8h1v1h-1zM177.3 137.3h1v1h-1zM250.3 180.0h1v1h-1zM151.2 188.1h1v1h-1zM272.9 199.5h1v1h-1zM251.6 163.5h1v1h-1zM216.1 162.7h1v1h-1zM196.2 161.4h1v1h-1zM151.9 134.8h1v1h-1zM153.7 192.2h1v1h-1zM232.5 155.3h1v1h-1zM251.1 151.5h1v1h-1zM268.3 198.6h1v1h-1zM140.9 185.0h1v1h-1zM247.3 191.2h1v1h-1zM213.0 145.8h1v1h-1zM161.1 163.6h1v1h-1zM264.1 147.5h1v1h-1zM194.5 167.2h1v1h-1zM177.9 131.8h1v1h-1zM247.8 152.4h1v1h-1zM181.5 148.6h1v1h-1zM206.8 143.7h1v1h-1zM189.8 137.6h1v1h-1zM234.2 169.3h1v1h-1zM217.3 143.2h1v1h-1zM212.7 131.8h1v1h-1zM140.4 136.4h1v1h-1zM238.3 166.4h1v1h-1zM257.1 191.5h1v1h-1zM186.2 149.9h1v1h-1zM253.4 175.0h1v1h-1zM277.1 154.7h1v1h-1zM145.7 193.4h1v1h-1zM150.0 160.5h1v1h-1zM184.0 183.2h1v1h-1zM201.4 196.7h1v1h-1zM265.3 140.8h1v1h-1zM216.8 169.7h1v1h-1zM182.1 158.1h1v1h-1zM187.4 130.7h1v1h-1zM271.8 149.0h1v1h-1zM253.8 196.9h1v1h-1zM156.5 177.0h1v1h-1zM156.9 171.3h1v1h-1zM275.9 141.1h1v1h-1zM272.2 186.1h1v1h-1zM170.1 200.7h1v1h-1zM177.3 198.3h1v1h-1zM212.5 180.3h1v1h-1zM232.7 161.2h1v1h-1zM222.1 180.4h1v1h-1zM241.2 151.7h1v1h-1zM238.3 167.8h1v1h-1zM203.6 181.4h1v1h-1zM145.0 168.2h1v1h-1zM224.7 188.7h1v1h-1zM258.5 137.8h1v1h-1zM257.6 142.4h1v1h-1zM207.0 189.5h1v1h-1zM177.0 148.2h1v1h-1zM275.7 194.2h1v1h-1zM140.3 176.4h1v1h-1zM187.8 158.5h1v1h-1zM155.0 140.4h1v1h-1zM186.2 135.6h1v1h-1zM185.0 180.0h1v1h-1zM163.8 131.4h1v1h-1zM221.0 141.7h1v1h-1zM148.2 162.5h1v1h-1zM240.9 130.1h1v1h-1zM269.1 194.8h1v1h-1zM191.1 129.0h1v1h-1zM213.5 132.0h1v1h-1zM174.5 200.5h1v1h-1zM270.4 183.0h1v1h-1zM217.0 175.9h1v1h-1zM219.4 133.7h1v1h-1zM270.5 137.9h1v1h-1zM175.0 142.0h1v1h-1zM142.0 171.8h1v1h-1zM270.1 183.7h1v1h-1zM190.3 159.6h1v1h-1zM172.2 150.3h1v1h-1zM229.8 195.4h1v1h-1zM266.8 197.2h1v1h-1zM235.9 176.8h1v1h-1zM159.3 196.7h1v1h-1zM277.6 143.6h1v1h-1zM202.9 144.0h1v1h-1zM273.7 134.3h1v1h-1zM213.2 182.2h1v1h-1zM211.2 130.2h1v1h-1zM240.5 153.2h1v1h-1zM256.1 172.3h1v1h-1zM216.8 140.0h1v1h-1zM167.0 139.3h1v1h-1zM142.8 162.9h1v1h-1zM219.0 191.7h1v1h-1zM267.1 170.1h1v1h-1zM165.0 172.2h1v1h-1zM221.3 170.9h1v1h-1zM139.8 195.6h1v1h-1zM238.2 192.7h1v1h-1zM174.8 143.0h1v1h-1zM258.7 137.6h1v1h-1zM163.6 202.0h1v1h-1zM243.9 158.4h1v1h-1zM189.9 201.1h1v1h-1zM199.2 185.0h1v1h-1zM220.8 130.3h1v1h-1zM168.4 196.9h1v1h-1zM235.6 194.5h1v1h-1zM170.3 170.1h1v1h-1zM275.9 178.6h1v1h-1zM183.2 167.5h1v1h-1zM161.9 172.8h1v1h-1zM236.4 178.6h1v1h-1zM249.7 188.9h1v1h-1zM153.5 156.3h1v1h-1zM202.1 134.9h1v1h-1zM154.0 147.5h1v1h-1zM232.2 175.2h1v1h-1zM157.2 157.4h1v1h-1zM244.4 167.7h1v1h-1zM204.8 152.0h1v1h-1zM223.8 171.3h1v1h-1zM165.2 168.3h1v1h-1zM215.5 136.5h1v1h-1zM277.2 161.5h1v1h-1zM184.9 186.0h1v1h-1zM226.7 148.1h1v1h-1zM173.7 151.7h1v1h-1zM277.8 173.6h1v1h-1zM269.4 170.3h1v1h-1zM229.7 138.7h1v1h-1zM167.6 177.0h1v1h-1zM275.7 197.6h1v1h-1zM181.8 167.4h1v1h-1zM242.6 156.0h1v1h-1zM268.2 153.2h1v1h-1zM139.6 197.2h1v1h-1zM144.5 170.7h1v1h-1zM143.2 163.7h1v1h-1zM227.0 187.5h1v1h-1zM258.0 172.0h1v1h-1zM272.3 176.1h1v1h-1zM225.3 162.6h1v1h-1zM175.8 145.1h1v1h-1zM140.0 184.1h1v1h-1zM183.8 137.5h1v1h-1zM208.7 199.7h1v1h-1zM180.8 157.6h1v1h-1zM251.4 194.4h1v1h-1zM247.3 173.7h1v1h-1zM212.0 171.5h1v1h-1zM200.1 129.6h1v1h-1zM266.7 134.9h1v1h-1zM241.3 150.9h1v1h-1zM159.0 199.8h1v1h-1zM254.5 152.9h1v1h-1zM226.7 179.4h1v1h-1zM176.4 134.7h1v1h-1zM213.1 201.0h1v1h-1zM186.6 176.8h1v1h-1zM148.8 130.5h1v1h-1zM264.4 142.5h1v1h-1zM140.0 171.7h1v1h-1zM154.9 149.0h1v1h-1zM251.5 144.4h1v1h-1zM249.0 193.5h1v1h-1zM141.3 195.6h1v1h-1zM256.1 141.4h1v1h-1zM210.9 185.2h1v1h-1zM258.1 193.6h1v1h-1zM184.4 202.3h1v1h-1zM275.5 171.9h1v1h-1zM246.2 143.5h1v1h-1zM219.9 129.8h1v1h-1zM246.7 134.2h1v1h-1zM272.8 196.4h1v1h-1zM243.3 185.8h1v1h-1zM184.4 177.3h1v1h-1zM276.3 198.0h1v1h-1zM199.6 193.0h1v1h-1zM277.5 165.9h1v1h-1zM236.6 164.2h1v1h-1zM245.6 177.7h1v1h-1zM196.7 147.7h1v1h-1zM236.7 137.1h1v1h-1zM182.2 140.0h1v1h-1zM241.5 160.3h1v1h-1zM195.9 160.7h1v1h-1zM150.1 195.3h1v1h-1zM182.5 193.4h1v1h-1zM146.2 149.7h1v1h-1zM240.7 157.1h1v1h-1zM167.9 149.3h1v1h-1zM253.8 156.9h1v1h-1zM170.9 160.9h1v1h-1zM194.1 182.6h1v1h-1zM160.0 138.8h1v1h-1zM227.0 133.8h1v1h-1zM163.2 183.0h1v1h-1zM209.9 198.1h1v1h-1zM181.3 162.7h1v1h-1zM206.1 135.5h1v1h-1zM219.4 155.5h1v1h-1zM220.4 144.7h1v1h-1zM190.2 202.4h1v1h-1zM275.2 144.1h1v1h-1zM157.0 194.2h1v1h-1zM170.2 154.0h1v1h-1zM157.6 201.0h1v1h-1zM207.8 202.0h1v1h-1zM175.3 174.3h1v1h-1zM167.8 202.2h1v1h-1zM175.4 184.5h1v1h-1zM184.3 171.9h1v1h-1zM189.2 178.6h1v1h-1zM142.1 140.8h1v1h-1zM241.6 166.2h1v1h-1zM139.8 185.3h1v1h-1zM264.1 168.8h1v1h-1zM167.9 142.1h1v1h-1zM262.9 193.4h1v1h-1zM208.8 161.1h1v1h-1zM155.7 178.9h1v1h-1zM225.0 152.9h1v1h-1zM226.4 156.8h1v1h-1zM191.8 197.4h1v1h-1zM141.7 140.8h1v1h-1zM259.2 135.9h1v1h-1zM149.9 145.8h1v1h-1zM163.2 177.0h1v1h-1zM167.2 139.2h1v1h-1zM252.8 141.2h1v1h-1zM192.2 133.6h1v1h-1zM175.4 160.2h1v1h-1zM232.7 185.2h1v1h-1zM192.3 195.1h1v1h-1zM249.7 188.9h1v1h-1zM158.3 182.0h1v1h-1zM228.1 155.6h1v1h-1zM212.1 139.6h1v1h-1zM243.6 187.0h1v1h-1zM213.5 190.0h1v1h-1zM172.9 191.6h1v1h-1zM150.1 176.7h1v1h-1zM262.2 154.2h1v1h-1zM151.6 186.3h1v1h-1zM221.3 163.5h1v1h-1zM143.1 195.5h1v1h-1zM217.8 158.2h1v1h-1zM150.5 145.6h1v1h-1zM172.7 159.1h1v1h-1zM212.8 177.4h1v1h-1zM270.4 173.3h1v1h-1zM198.0 162.7h1v1h-1zM255.7 129.8h1v1h-1zM246.0 162.8h1v1h-1zM238.7 155.5h1v1h-1zM272.2 131.0h1v1h-1zM244.6 186.5h1v1h-1zM218.1 170.1h1v1h-1zM171.4 145.0h1v1h-1zM170.0 150.2h1v1h-1zM207.2 171.0h1v1h-1zM237.3 149.1h1v1h-1zM276.4 129.0h1v1h-1zM250.2 183.0h1v1h-1zM232.1 166.0h1v1h-1zM269.6 169.5h1v1h-1zM188.9 200.5h1v1h-1zM204.5 163.3h1v1h-1zM182.1 194.7h1v1h-1zM206.4 197.2h1v1h-1zM163.2 169.8h1v1h-1zM187.6 165.6h1v1h-1zM212.8 173.9h1v1h-1zM157.9 201.1h1v1h-1zM216.9 131.1h1v1h-1zM178.4 176.6h1v1h-1zM183.6 147.8h1v1h-1zM207.7 143.9h1v1h-1zM140.1 192.7h1v1h-1zM168.0 175.3h1v1h-1zM194.7 174.1h1v1h-1zM273.1 170.1h1v1h-1zM219.1 131.6h1v1h-1zM228.3 158.7h1v1h-1zM254.1 177.8h1v1h-1zM144.4 132.0h1v1h-1zM213.4 159.6h1v1h-1zM148.6 147.6h1v1h-1zM191.2 155.1h1v1h-1zM178.7 134.9h1v1h-1zM190.5 182.2h1v1h-1zM263.2 186.0h1v1h-1zM176.9 166.6h1v1h-1zM275.2 193.9h1v1h-1zM168.6 143.9h1v1h-1zM149.8 172.0h1v1h-1zM247.8 150.0h1v1h-1zM249.2 193.8h1v1h-1zM262.6 176.2h1v1h-1zM252.2 167.7h1v1h-1zM262.8 167.3h1v1h-1zM175.1 191.3h1v1h-1zM208.2 198.8h1v1h-1zM162.1 138.1h1v1h-1zM218.9 138.9h1v1h-1zM160.3 167.1h1v1h-1zM204.3 194.5h1v1h-1zM175.9 134.6h1v1h-1zM239.6 165.0h1v1h-1zM223.8 139.1h1v1h-1zM271.5 158.7h1v1h-1zM146.4 138.3h1v1h-1zM162.2 184.8h1v1h-1zM158.4 164.8h1v1h-1zM220.1 168.6h1v1h-1zM204.5 192.1h1v1h-1zM238.8 162.9h1v1h-1zM182.2 141.1h1v1h-1zM269.4 134.6h1v1h-1zM275.8 197.4h1v1h-1zM193.2 169.3h1v1h-1zM175.0 147.7h1v1h-1zM264.7 192.2h1v1h-1zM209.5 131.3h1v1h-1zM262.5 169.3h1v1h-1zM153.9 168.9h1v1h-1zM211.1 144.6h1v1h-1zM165.2 181.9h1v1h-1zM275.8 201.6h1v1h-1zM224.0 195.4h1v1h-1zM243.3 171.3h1v1h-1zM267.6 186.0h1v1h-1zM260.9 185.7h1v1h-1zM146.0 196.1h1v1h-1zM150.0 173.8h1v1h-1zM274.0 176.3h1v1h-1zM238.7 199.9h1v1h-1zM210.8 162.8h1v1h-1zM153.0 159.8h1v1h-1zM201.2 178.3h1v1h-1zM254.4 151.6h1v1h-1zM156.1 194.6h1v1h-1zM146.7 183.0h1v1h-1zM227.6 131.2h1v1h-1zM273.6 138.8h1v1h-1zM156.6 144.2h1v1h-1zM244.9 167.7h1v1h-1zM277.3 158.4h1v1h-1zM155.8 186.5h1v1h-1zM157.4 157.5h1v1h-1zM225.8 139.3h1v1h-1zM140.8 201.7h1v1h-1zM274.1 183.1h1v1h-1zM176.0 138.7h1v1h-1zM154.8 144.1h1v1h-1zM263.6 161.1h1v1h-1zM223.7 202.0h1v1h-1zM223.4 157.3h1v1h-1zM246.2 164.4h1v1h-1zM155.2 186.1h1v1h-1zM229.8 196.6h1v1h-1zM154.2 184.0h1v1h-1zM249.7 162.2h1v1h-1zM188.8 131.5h1v1h-1zM219.9 184.9h1v1h-1zM217.7 139.5h1v1h-1zM190.4 170.5h1v1h-1zM219.4 129.8h1v1h-1zM227.8 189.1h1v1h-1zM220.0 178.8h1v1h-1zM205.0 150.0h1v1h-1zM142.2 165.1h1v1h-1zM182.9 158.4h1v1h-1zM253.0 168.1h1v1h-1zM226.6 181.2h1v1h-1zM174.9 164.9h1v1h-1zM213.2 186.0h1v1h-1zM245.4 165.7h1v1h-1zM188.6 183.8h1v1h-1zM255.3 136.1h1v1h-1zM269.3 184.2h1v1h-1zM149.3 156.0h1v1h-1zM142.8 139.4h1v1h-1zM233.4 177.6h1v1h-1zM200.5 152.2h1v1h-1zM161.6 175.6h1v1h-1zM248.4 152.4h1v1h-1zM220.5 194.8h1v1h-1zM169.5 183.6h1v1h-1zM143.8 155.4h1v1h-1zM218.7 134.4h1v1h-1zM216.2 134.9h1v1h-1zM204.3 164.4h1v1h-1zM178.4 168.3h1v1h-1zM269.1 166.6h1v1h-1zM139.7 176.4h1v1h-1zM166.8 156.6h1v1h-1zM209.9 167.4h1v1h-1zM267.8 146.3h1v1h-1zM151.5 200.2h1v1h-1zM236.4 158.5h1v1h-1zM229.8 165.6h1v1h-1zM144.4 169.2h1v1h-1zM255.1 158.2h1v1h-1zM145.5 193.3h1v1h-1zM264.7 162.3h1v1h-1zM162.2 150.5h1v1h-1zM267.5 138.8h1v1h-1zM228.8 143.1h1v1h-1zM151.5 168.3h1v1h-1zM251.6 177.3h1v1h-1zM159.3 138.8h1v1h-1zM237.0 201.9h1v1h-1zM148.2 161.4h1v1h-1zM271.5 157.0h1v1h-1zM260.7 194.7h1v1h-1zM219.2 189.1h1v1h-1zM185.4 191.4h1v1h-1zM203.6 199.0h1v1h-1zM230.3 154.9h1v1h-1zM264.7 145.9h1v1h-1zM149.9 138.5h1v1h-1zM214.6 133.6h1v1h-1zM207.5 196.4h1v1h-1zM236.9 189.7h1v1h-1zM275.7 162.8h1v1h-1zM264.3 166.2h1v1h-1zM184.6 153.7h1v1h-1zM237.7 168.6h1v1h-1zM177.6 171.5h1v1h-1zM238.4 185.6h1v1h-1zM161.3 166.8h1v1h-1zM230.5 197.5h1v1h-1zM177.0 131.0h1v1h-1zM176.4 145.7h1v1h-1zM181.7 196.1h1v1h-1zM206.7 138.5h1v1h-1zM247.0 198.9h1v1h-1zM236.8 156.8h1v1h-1zM206.2 153.5h1v1h-1zM211.7 189.0h1v1h-1zM235.7 192.9h1v1h-1zM182.3 139.8h1v1h-1zM218.1 164.8h1v1h-1zM237.7 166.2h1v1h-1zM192.6 161.8h1v1h-1zM142.5 176.6h1v1h-1zM144.9 129.2h1v1h-1zM265.1 154.3h1v1h-1zM161.3 139.5h1v1h-1zM178.6 143.2h1v1h-1zM229.6 157.9h1v1h-1zM242.1 182.8h1v1h-1zM254.9 162.5h1v1h-1zM244.2 140.7h1v1h-1zM174.7 172.2h1v1h-1zM189.5 196.8h1v1h-1zM260.7 152.0h1v1h-1zM207.2 162.3h1v1h-1zM261.2 197.3h1v1h-1zM189.0 151.9h1v1h-1zM213.5 165.8h1v1h-1zM175.2 186.0h1v1h-1zM232.2 177.3h1v1h-1zM269.2 136.1h1v1h-1zM273.8 182.1h1v1h-1zM210.7 194.8h1v1h-1zM189.2 196.9h1v1h-1zM208.9 132.0h1v1h-1zM245.0 175.7h1v1h-1zM177.7 133.9h1v1h-1zM146.7 140.3h1v1h-1zM257.9 197.4h1v1h-1zM271.1 154.9h1v1h-1zM193.3 171.1h1v1h-1zM223.7 163.7h1v1h-1zM259.6 136.6h1v1h-1zM184.6 201.8h1v1h-1zM247.2 154.8h1v1h-1zM230.1 197.0h1v1h-1zM149.9 136.3h1v1h-1zM189.8 167.7h1v1h-1zM274.2 188.1h1v1h-1zM227.4 197.9h1v1h-1zM217.1 148.1h1v1h-1zM161.2 146.5h1v1h-1zM273.5 141.7h1v1h-1zM248.9 132.7h1v1h-1zM238.7 162.2h1v1h-1zM253.6 143.1h1v1h-1zM226.5 153.2h1v1h-1zM164.1 177.5h1v1h-1zM184.5 139.3h1v1h-1zM247.6 181.0h1v1h-1zM277.0 198.1h1v1h-1zM148.0 178.3h1v1h-1zM150.1 132.6h1v1h-1zM189.1 173.9h1v1h-1zM257.8 163.2h1v1h-1zM226.7 170.1h1v1h-1zM203.1 132.0h1v1h-1zM177.8 163.8h1v1h-1zM205.7 192.0h1v1h-1zM159.7 165.2h1v1h-1zM250.0 170.6h1v1h-1zM147.6 133.7h1v1h-1zM158.5 137.4h1v1h-1zM145.7 154.6h1v1h-1zM159.6 183.3h1v1h-1zM197.8 146.9h1v1h-1zM199.7 171.7h1v1h-1zM195.1 164.1h1v1h-1zM178.3 132.3h1v1h-1zM165.8 192.7h1v1h-1zM215.4 176.6h1v1h-1zM239.3 199.5h1v1h-1zM233.1 175.6h1v1h-1zM267.8 180.4h1v1h-1zM199.4 179.1h1v1h-1zM213.3 181.8h1v1h-1zM232.1 172.1h1v1h-1zM237.5 181.0h1v1h-1zM202.6 161.5h1v1h-1zM238.9 154.4h1v1h-1zM198.8 196.1h1v1h-1zM155.0 191.6h1v1h-1zM164.9 188.9h1v1h-1zM231.1 177.4h1v1h-1zM265.1 185.2h1v1h-1zM173.4 189.0h1v1h-1zM159.4 152.3h1v1h-1zM219.5 183.9h1v1h-1zM251.6 152.7h1v1h-1zM198.8 157.7h1v1h-1zM230.3 170.0h1v1h-1zM152.1 175.6h1v1h-1zM270.4 175.0h1v1h-1zM227.9 195.9h1v1h-1zM246.6 138.9h1v1h-1zM191.1 175.1h1v1h-1zM210.4 183.9h1v1h-1zM168.5 193.0h1v1h-1zM234.5 165.0h1v1h-1zM271.8 131.6h1v1h-1zM260.5 133.0h1v1h-1zM255.5 200.6h1v1h-1zM157.4 130.6h1v1h-1zM260.4 157.1h1v1h-1zM225.2 170.3h1v1h-1zM198.2 191.7h1v1h-1zM215.3 182.2h1v1h-1zM156.3 138.4h1v1h-1zM219.0 138.0h1v1h-1zM180.1 160.0h1v1h-1zM177.7 141.3h1v1h-1zM168.4 154.8h1v1h-1zM216.3 178.5h1v1h-1zM150.5 166.6h1v1h-1zM211.8 142.3h1v1h-1zM167.5 188.8h1v1h-1zM181.7 143.4h1v1h-1zM171.6 155.8h1v1h-1zM143.9 196.4h1v1h-1zM237.5 165.9h1v1h-1zM155.0 167.6h1v1h-1zM269.6 173.7h1v1h-1zM216.6 171.5h1v1h-1zM209.4 199.2h1v1h-1zM261.7 159.8h1v1h-1zM187.5 181.5h1v1h-1zM165.3 133.8h1v1h-1zM255.9 174.6h1v1h-1zM222.9 161.8h1v1h-1zM167.1 200.0h1v1h-1zM241.2 190.5h1v1h-1zM217.6 201.2h1v1h-1zM142.4 190.3h1v1h-1zM229.9 157.4h1v1h-1zM276.6 153.9h1v1h-1zM211.7 201.5h1v1h-1zM272.1 166.5h1v1h-1zM258.2 199.3h1v1h-1zM255.0 167.4h1v1h-1zM169.4 172.6h1v1h-1zM149.8 159.7h1v1h-1zM169.8 150.8h1v1h-1zM163.5 151.7h1v1h-1zM224.9 150.1h1v1h-1zM271.0 180.7h1v1h-1zM234.0 173.2h1v1h-1zM263.2 141.7h1v1h-1zM245.2 158.3h1v1h-1zM175.6 135.7h1v1h-1zM273.6 132.6h1v1h-1zM186.2 142.0h1v1h-1zM233.4 140.7h1v1h-1zM250.5 169.0h1v1h-1zM194.1 143.9h1v1h-1zM230.1 162.7h1v1h-1zM260.4 200.1h1v1h-1zM141.3 168.2h1v1h-1zM152.9 140.5h1v1h-1zM151.6 137.5h1v1h-1zM170.6 192.6h1v1h-1zM243.8 152.6h1v1h-1zM196.2 158.6h1v1h-1zM216.0 132.7h1v1h-1zM209.7 162.7h1v1h-1zM203.4 172.1h1v1h-1zM235.0 194.2h1v1h-1zM235.3 134.1h1v1h-1zM244.8 162.5h1v1h-1zM188.4 195.2h1v1h-1zM152.2 162.8h1v1h-1zM261.3 138.7h1v1h-1zM164.8 147.3h1v1h-1zM251.2 167.1h1v1h-1zM258.3 188.7h1v1h-1zM185.9 164.6h1v1h-1zM240.0 169.4h1v1h-1zM181.3 138.7h1v1h-1zM193.7 171.6h1v1h-1zM170.4 166.9h1v1h-1zM237.2 175.8h1v1h-1zM231.1 166.1h1v1h-1zM141.1 131.6h1v1h-1zM179.3 162.3h1v1h-1zM272.2 187.2h1v1h-1zM148.3 187.3h1v1h-1zM160.6 139.8h1v1h-1zM211.0 199.3h1v1h-1zM177.0 164.8h1v1h-1zM163.6 179.9h1v1h-1zM264.7 169.7h1v1h-1zM171.7 158.5h1v1h-1zM155.0 164.2h1v1h-1zM229.1 195.9h1v1h-1zM215.4 179.7h1v1h-1zM242.5 157.1h1v1h-1zM265.3 157.8h1v1h-1zM164.8 188.8h1v1h-1zM236.9 142.8h1v1h-1zM148.1 171.8h1v1h-1zM178.6 168.0h1v1h-1zM260.2 161.3h1v1h-1zM242.5 146.2h1v1h-1zM177.9 156.9h1v1h-1zM191.4 167.5h1v1h-1zM212.9 153.4h1v1h-1zM162.7 140.8h1v1h-1zM161.7 179.4h1v1h-1zM257.0 130.0h1v1h-1zM190.2 132.4h1v1h-1zM144.6 132.2h1v1h-1zM167.2 199.9h1v1h-1zM244.9 190.6h1v1h-1zM243.6 201.9h1v1h-1zM156.6 176.1h1v1h-1zM151.1 167.8h1v1h-1zM187.3 148.1h1v1h-1zM207.7 131.4h1v1h-1zM256.2 189.8h1v1h-1zM266.4 136.6h1v1h-1zM217.6 163.7h1v1h-1zM163.0 178.8h1v1h-1zM169.9 188.0h1v1h-1zM224.4 178.6h1v1h-1zM245.7 160.3h1v1h-1zM254.0 196.0h1v1h-1zM256.7 165.1h1v1h-1zM226.9 184.9h1v1h-1zM235.8 172.6h1v1h-1zM239.3 159.5h1v1h-1zM158.8 180.3h1v1h-1zM243.5 201.2h1v1h-1zM226.9 162.3h1v1h-1zM238.4 178.2h1v1h-1zM205.5 167.4h1v1h-1zM243.2 197.1h1v1h-1zM210.1 183.3h1v1h-1zM221.0 183.3h1v1h-1zM168.0 185.4h1v1h-1zM263.3 175.7h1v1h-1zM261.3 148.3h1v1h-1zM176.7 161.7h1v1h-1zM140.6 133.8h1v1h-1zM226.8 194.1h1v1h-1zM211.3 166.0h1v1h-1zM232.3 181.1h1v1h-1zM265.4 156.6h1v1h-1zM149.5 142.2h1v1h-1zM261.9 180.0h1v1h-1zM237.9 139.2h1v1h-1zM261.5 197.2h1v1h-1zM255.3 184.2h1v1h-1zM250.4 151.9h1v1h-1zM203.9 136.1h1v1h-1zM250.6 129.3h1v1h-1zM272.2 160.3h1v1h-1zM241.2 153.1h1v1h-1zM194.8 165.7h1v1h-1zM209.7 186.6h1v1h-1zM175.6 140.3h1v1h-1zM256.6 151.1h1v1h-1zM234.8 164.9h1v1h-1zM218.8 153.4h1v1h-1zM140.4 169.8h1v1h-1zM273.7 187.3h1v1h-1zM204.1 196.7h1v1h-1zM174.7 141.8h1v1h-1zM144.0 143.7h1v1h-1zM249.9 138.6h1v1h-1zM175.0 133.9h1v1h-1zM190.9 169.3h1v1h-1zM271.1 162.4h1v1h-1zM233.7 194.3h1v1h-1zM140.1 183.0h1v1h-1zM154.1 141.8h1v1h-1zM174.0 132.0h1v1h-1zM233.3 188.3h1v1h-1zM237.8 179.0h1v1h-1zM212.4 196.8h1v1h-1zM254.7 144.5h1v1h-1zM219.8 151.6h1v1h-1zM186.5 193.0h1v1h-1zM184.4 148.0h1v1h-1zM217.4 192.5h1v1h-1zM172.8 167.5h1v1h-1zM141.4 199.1h1v1h-1zM201.7 192.6h1v1h-1zM262.5 193.0h1v1h-1zM243.2 144.0h1v1h-1zM183.1 162.6h1v1h-1zM276.8 157.0h1v1h-1zM193.0 130.6h1v1h-1zM175.4 132.2h1v1h-1zM182.3 171.4h1v1h-1zM183.1 154.5h1v1h-1zM261.6 151.7h1v1h-1zM164.6 129.6h1v1h-1zM239.5 165.2h1v1h-1zM257.1 194.5h1v1h-1zM222.2 144.6h1v1h-1zM246.9 152.9h1v1h-1zM148.1 167.2h1v1h-1zM176.6 157.7h1v1h-1zM194.4 168.9h1v1h-1zM213.9 159.2h1v1h-1zM262.7 181.7h1v1h-1zM177.5 188.9h1v1h-1zM155.0 140.0h1v1h-1zM266.7 193.2h1v1h-1zM189.3 135.9h1v1h-1zM259.0 130.5h1v1h-1zM276.8 180.1h1v1h-1zM148.6 184.1h1v1h-1zM209.0 201.3h1v1h-1zM174.5 167.6h1v1h-1zM233.8 191.1h1v1h-1zM156.5 178.1h1v1h-1zM152.0 193.4h1v1h-1zM153.7 143.6h1v1h-1zM261.1 199.3h1v1h-1zM250.8 140.4h1v1h-1zM229.5 180.4h1v1h-1zM253.0 196.4h1v1h-1zM145.9 132.2h1v1h-1zM170.1 135.1h1v1h-1zM243.8 199.0h1v1h-1zM152.5 154.9h1v1h-1zM159.6 153.4h1v1h-1zM232.5 185.4h1v1h-1zM205.4 186.8h1v1h-1zM260.1 156.0h1v1h-1zM235.1 156.7h1v1h-1zM147.9 137.3h1v1h-1zM247.3 164.5h1v1h-1zM221.2 166.2h1v1h-1zM244.0 163.2h1v1h-1zM177.9 164.5h1v1h-1zM169.0 202.1h1v1h-1zM211.5 138.4h1v1h-1zM239.0 187.0h1v1h-1zM209.8 159.5h1v1h-1zM219.6 168.6h1v1h-1zM210.0 151.8h1v1h-1zM261.4 164.5h1v1h-1zM248.0 152.4h1v1h-1zM156.0 183.4h1v1h-1zM182.8 176.4h1v1h-1zM207.4 180.8h1v1h-1zM277.6 148.4h1v1h-1zM190.8 150.9h1v1h-1zM267.4 190.7h1v1h-1zM226.5 131.9h1v1h-1zM191.4 137.9h1v1h-1zM250.7 178.9h1v1h-1zM159.4 143.1h1v1h-1zM197.0 176.7h1v1h-1zM203.6 148.9h1v1h-1zM263.2 135.0h1v1h-1zM245.5 189.5h1v1h-1zM190.5 201.9h1v1h-1zM167.2 177.4h1v1h-1zM164.0 167.4h1v1h-1zM157.7 154.4h1v1h-1zM196.3 184.3h1v1h-1zM234.4 178.3h1v1h-1zM142.7 140.8h1v1h-1zM243.8 137.8h1v1h-1zM180.1 183.0h1v1h-1zM235.8 191.7h1v1h-1zM273.3 154.4h1v1h-1zM215.4 198.6h1v1h-1zM178.6 171.3h1v1h-1zM275.2 191.8h1v1h-1zM221.4 196.7h1v1h-1zM273.9 147.5h1v1h-1zM251.9 147.3h1v1h-1zM164.3 184.7h1v1h-1zM144.9 161.9h1v1h-1zM150.7 188.6h1v1h-1zM163.5 134.8h1v1h-1zM248.7 181.4h1v1h-1zM273.8 190.7h1v1h-1zM158.9 174.4h1v1h-1zM251.0 195.2h1v1h-1zM248.6 162.4h1v1h-1zM250.0 177.7h1v1h-1zM145.3 195.1h1v1h-1zM239.6 165.1h1v1h-1zM245.2 187.8h1v1h-1zM178.1 186.9h1v1h-1zM257.2 150.7h1v1h-1zM160.9 149.1h1v1h-1zM144.8 168.1h1v1h-1zM175.0 146.2h1v1h-1zM238.9 152.1h1v1h-1zM166.7 199.3h1v1h-1zM228.0 151.3h1v1h-1zM140.7 140.8h1v1h-1zM263.7 175.8h1v1h-1zM211.3 154.5h1v1h-1zM267.6 154.6h1v1h-1zM210.8 145.9h1v1h-1zM207.2 200.0h1v1h-1zM215.2 172.0h1v1h-1zM185.8 173.4h1v1h-1zM170.0 179.5h1v1h-1zM242.9 137.3h1v1h-1zM202.6 140.2h1v1h-1zM156.8 164.5h1v1h-1zM242.5 145.0h1v1h-1zM193.0 190.1h1v1h-1zM272.4 157.6h1v1h-1zM229.9 177.0h1v1h-1zM155.1 160.5h1v1h-1zM195.5 137.0h1v1h-1zM231.3 146.9h1v1h-1zM218.3 147.0h1v1h-1zM158.0 129.2h1v1h-1zM219.8 158.5h1v1h-1zM165.7 195.7h1v1h-1zM237.1 149.0h1v1h-1zM231.7 183.7h1v1h-1zM206.8 145.9h1v1h-1zM228.1 135.5h1v1h-1zM151.8 145.4h1v1h-1zM141.3 156.5h1v1h-1zM213.4 197.0h1v1h-1zM197.4 153.3h1v1h-1zM259.5 196.7h1v1h-1zM210.0 143.9h1v1h-1zM155.6 136.8h1v1h-1zM269.4 177.2h1v1h-1zM168.3 191.7h1v1h-1zM169.8 171.6h1v1h-1zM237.3 133.5h1v1h-1zM216.7 132.3h1v1h-1zM198.5 154.1h1v1h-1zM139.4 171.6h1v1h-1zM142.6 192.7h1v1h-1zM251.4 194.0h1v1h-1zM180.9 163.7h1v1h-1zM212.2 200.2h1v1h-1zM154.7 152.7h1v1h-1zM195.5 195.6h1v1h-1zM205.7 175.0h1v1h-1zM277.8 198.9h1v1h-1zM164.4 196.9h1v1h-1zM215.7 131.8h1v1h-1zM247.1 194.2h1v1h-1zM214.1 176.1h1v1h-1zM274.7 150.4h1v1h-1zM223.1 183.6h1v1h-1zM199.9 163.7h1v1h-1zM191.8 160.9h1v1h-1zM151.9 171.5h1v1h-1zM276.1 173.1h1v1h-1zM209.5 147.0h1v1h-1zM251.9 148.3h1v1h-1zM192.2 150.1h1v1h-1zM167.1 157.0h1v1h-1zM141.6 188.3h1v1h-1zM163.7 176.5h1v1h-1zM241.6 200.9h1v1h-1zM260.8 195.7h1v1h-1zM271.0 132.6h1v1h-1zM224.5 140.6h1v1h-1zM269.7 169.5h1v1h-1zM257.9 199.9h1v1h-1zM247.5 154.8h1v1h-1zM246.9 191.4h1v1h-1zM151.0 164.0h1v1h-1zM223.4 151.9h1v1h-1zM164.2 160.7h1v1h-1zM273.6 183.8h1v1h-1zM252.9 131.8h1v1h-1zM232.6 170.0h1v1h-1zM197.3 168.0h1v1h-1zM156.7 196.9h1v1h-1zM178.2 189.7h1v1h-1zM264.0 175.8h1v1h-1zM260.6 161.0h1v1h-1zM263.8 136.5h1v1h-1zM237.9 169.4h1v1h-1zM173.2 160.9h1v1h-1zM182.6 141.5h1v1h-1zM145.3 155.6h1v1h-1zM186.4 171.5h1v1h-1zM214.5 130.2h1v1h-1zM277.0 176.2h1v1h-1zM272.0 132.1h1v1h-1zM212.3 161.0h1v1h-1zM166.8 144.4h1v1h-1zM206.6 146.4h1v1h-1zM267.1 156.6h1v1h-1zM235.7 162.1h1v1h-1zM157.6 168.7h1v1h-1zM148.1 189.1h1v1h-1zM275.2 174.5h1v1h-1zM158.1 170.4h1v1h-1zM147.7 157.8h1v1h-1zM171.0 186.4h1v1h-1zM227.6 134.4h1v1h-1zM141.3 149.8h1v1h-1zM220.0 166.6h1v1h-1zM197.8 201.6h1v1h-1zM188.1 163.9h1v1h-1zM185.9 129.3h1v1h-1zM186.5 140.2h1v1h-1zM251.7 144.0h1v1h-1zM207.5 165.7h1v1h-1zM256.2 193.8h1v1h-1zM170.5 201.5h1v1h-1zM207.5 169.1h1v1h-1zM271.7 134.0h1v1h-1zM195.6 165.9h1v1h-1zM154.0 147.0h1v1h-1zM211.3 190.1h1v1h-1zM260.8 199.3h1v1h-1zM166.1 167.3h1v1h-1zM277.5 192.2h1v1h-1zM176.3 144.2h1v1h-1zM186.0 134.1h1v1h-1zM142.0 184.9h1v1h-1zM182.3 140.0h1v1h-1zM153.6 152.9h1v1h-1zM262.2 130.8h1v1h-1zM251.0 198.7h1v1h-1zM206.3 186.4h1v1h-1zM156.3 184.5h1v1h-1zM241.2 160.1h1v1h-1zM157.5 181.4h1v1h-1zM148.6 134.3h1v1h-1zM243.8 167.7h1v1h-1zM272.5 130.5h1v1h-1zM168.0 183.7h1v1h-1zM165.9 156.2h1v1h-1zM221.8 164.3h1v1h-1zM246.6 163.5h1v1h-1zM183.0 153.3h1v1h-1zM270.8 198.8h1v1h-1zM206.7 192.2h1v1h-1zM242.9 170.7h1v1h-1zM255.6 153.2h1v1h-1zM272.2 159.8h1v1h-1zM221.9 130.8h1v1h-1zM250.6 177.6h1v1h-1zM153.7 134.6h1v1h-1zM148.2 134.5h1v1h-1zM268.7 153.8h1v1h-1zM270.8 157.8h1v1h-1zM242.7 158.6h1v1h-1zM170.2 196.6h1v1h-1zM242.3 169.2h1v1h-1zM156.7 161.3h1v1h-1zM176.1 183.1h1v1h-1zM260.7 157.0h1v1h-1zM243.0 142.3h1v1h-1zM199.9 169.2h1v1h-1zM199.2 176.1h1v1h-1zM247.2 137.4h1v1h-1zM180.7 150.1h1v1h-1zM169.2 201.8h1v1h-1zM234.3 145.3h1v1h-1zM185.1 129.2h1v1h-1zM239.0 178.8h1v1h-1zM244.7 140.4h1v1h-1zM158.8 135.4h1v1h-1zM199.6 182.3h1v1h-1zM191.7 163.5h1v1h-1zM212.4 180.8h1v1h-1zM147.7 156.0h1v1h-1zM238.8 151.3h1v1h-1zM194.3 139.3h1v1h-1zM141.8 192.9h1v1h-1zM142.0 161.6h1v1h-1zM211.8 185.7h1v1h-1zM212.2 202.2h1v1h-1zM144.4 131.6h1v1h-1zM262.0 197.3h1v1h-1zM230.2 165.0h1v1h-1zM214.0 140.6h1v1h-1zM228.2 133.2h1v1h-1zM233.8 135.1h1v1h-1zM155.5 141.9h1v1h-1zM183.7 134.7h1v1h-1zM249.0 131.4h1v1h-1zM244.0 173.7h1v1h-1zM211.9 144.9h1v1h-1zM147.4 162.8h1v1h-1zM218.1 149.6h1v1h-1zM186.8 157.8h1v1h-1zM241.3 174.4h1v1h-1zM233.8 136.0h1v1h-1zM190.6 163.7h1v1h-1zM206.4 140.7h1v1h-1zM176.8 181.4h1v1h-1zM193.8 154.4h1v1h-1zM160.8 130.5h1v1h-1zM209.1 148.7h1v1h-1zM196.5 200.4h1v1h-1zM192.8 160.4h1v1h-1zM151.9 130.3h1v1h-1zM220.7 168.7h1v1h-1zM143.4 184.3h1v1h-1zM186.1 154.7h1v1h-1zM163.5 166.7h1v1h-1zM176.9 160.9h1v1h-1zM234.7 164.3h1v1h-1zM243.3 156.6h1v1h-1zM151.0 154.1h1v1h-1zM206.4 146.6h1v1h-1zM269.2 176.6h1v1h-1zM257.1 185.5h1v1h-1zM229.4 202.0h1v1h-1zM253.6 169.6h1v1h-1zM202.4 165.8h1v1h-1zM191.0 185.5h1v1h-1zM235.3 156.3h1v1h-1zM147.0 182.5h1v1h-1zM268.4 181.6h1v1h-1zM180.1 159.9h1v1h-1zM191.0 132.7h1v1h-1zM275.5 192.9h1v1h-1zM170.6 189.8h1v1h-1zM201.0 181.5h1v1h-1zM232.8 137.3h1v1h-1zM149.3 200.5h1v1h-1zM154.9 179.6h1v1h-1zM158.0 170.7h1v1h-1zM189.8 148.9h1v1h-1zM273.3 130.5h1v1h-1zM197.6 155.1h1v1h-1zM157.7 157.5h1v1h-1zM261.8 137.3h1v1h-1zM158.8 190.2h1v1h-1zM264.3 151.1h1v1h-1zM245.0 197.5h1v1h-1zM225.1 200.7h1v1h-1zM241.4 144.0h1v1h-1zM184.0 202.2h1v1h-1zM240.9 129.0h1v1h-1zM225.3 175.5h1v1h-1zM185.0 142.7h1v1h-1zM273.5 175.6h1v1h-1zM170.0 129.1h1v1h-1zM198.6 169.9h1v1h-1zM182.5 149.1h1v1h-1zM275.5 167.9h1v1h-1zM257.8 173.0h1v1h-1zM197.9 143.4h1v1h-1zM273.8 146.9h1v1h-1zM237.0 141.6h1v1h-1zM266.7 132.3h1v1h-1zM213.0 173.9h1v1h-1zM140.4 163.7h1v1h-1zM188.6 202.4h1v1h-1zM276.9 179.8h1v1h-1zM268.5 201.3h1v1h-1zM189.2 144.8h1v1h-1zM232.6 152.9h1v1h-1zM207.0 195.7h1v1h-1zM254.5 146.4h1v1h-1zM205.6 161.1h1v1h-1zM250.7 166.1h1v1h-1zM205.3 166.8h1v1h-1zM241.3 148.3h1v1h-1zM185.8 145.3h1v1h-1zM191.4 152.9h1v1h-1zM191.7 136.3h1v1h-1zM269.6 145.2h1v1h-1zM192.2 176.6h1v1h-1zM199.4 158.0h1v1h-1zM144.1 162.3h1v1h-1zM268.0 197.7h1v1h-1zM262.8 160.3h1v1h-1zM277.6 149.3h1v1h-1zM238.9 147.0h1v1h-1zM197.7 193.8h1v1h-1zM257.8 137.9h1v1h-1zM239.3 186.4h1v1h-1zM208.6 164.6h1v1h-1zM189.8 166.4h1v1h-1zM202.8 130.3h1v1h-1zM226.2 130.6h1v1h-1zM265.2 189.4h1v1h-1zM246.2 174.4h1v1h-1zM222.1 161.0h1v1h-1zM241.8 180.3h1v1h-1zM233.3 175.2h1v1h-1zM247.7 166.1h1v1h-1zM228.5 129.1h1v1h-1zM178.2 202.1h1v1h-1zM263.4 163.8h1v1h-1zM228.9 141.3h1v1h-1zM262.7 174.0h1v1h-1zM276.1 173.7h1v1h-1zM240.0 141.2h1v1h-1zM189.7 171.5h1v1h-1zM190.2 177.3h1v1h-1zM196.5 140.1h1v1h-1zM147.8 129.7h1v1h-1zM248.9 161.3h1v1h-1zM228.3 180.4h1v1h-1zM245.3 138.1h1v1h-1zM192.3 165.7h1v1h-1zM169.7 184.0h1v1h-1zM257.4 155.2h1v1h-1zM201.3 155.3h1v1h-1zM165.1 202.1h1v1h-1zM188.9 160.1h1v1h-1zM165.0 162.6h1v1h-1zM184.4 183.1h1v1h-1zM241.9 175.9h1v1h-1zM242.2 147.3h1v1h-1zM191.4 200.1h1v1h-1zM256.1 161.9h1v1h-1zM219.7 152.0h1v1h-1zM215.4 135.7h1v1h-1zM140.6 131.2h1v1h-1zM224.8 172.5h1v1h-1zM265.0 136.6h1v1h-1zM222.0 201.7h1v1h-1zM225.7 172.1h1v1h-1zM218.9 141.4h1v1h-1zM157.7 140.3h1v1h-1zM182.4 183.9h1v1h-1zM144.6 194.6h1v1h-1zM176.5 163.5h1v1h-1zM269.5 189.8h1v1h-1zM179.4 175.0h1v1h-1zM228.0 176.4h1v1h-1zM232.2 191.4h1v1h-1zM145.5 159.8h1v1h-1zM239.6 192.6h1v1h-1zM146.1 153.2h1v1h-1zM148.5 134.3h1v1h-1zM235.0 190.6h1v1h-1zM196.1 198.3h1v1h-1zM151.6 176.5h1v1h-1zM260.9 135.5h1v1h-1zM243.7 155.5h1v1h-1zM220.3 164.8h1v1h-1zM230.2 165.9h1v1h-1zM194.5 140.9h1v1h-1zM181.1 172.6h1v1h-1zM233.5 131.5h1v1h-1zM187.1 170.6h1v1h-1zM195.1 187.0h1v1h-1zM188.5 144.4h1v1h-1zM165.4 167.3h1v1h-1zM178.7 159.9h1v1h-1zM246.5 193.9h1v1h-1zM206.8 188.6h1v1h-1zM228.9 152.6h1v1h-1zM170.1 185.5h1v1h-1zM181.4 178.3h1v1h-1zM263.0 138.1h1v1h-1zM249.0 173.5h1v1h-1zM202.7 187.6h1v1h-1zM203.1 132.5h1v1h-1zM152.1 173.4h1v1h-1zM166.5 140.3h1v1h-1zM181.2 166.6h1v1h-1zM146.6 151.6h1v1h-1zM210.6 143.5h1v1h-1zM239.3 147.7h1v1h-1zM175.8 184.0h1v1h-1zM222.2 198.8h1v1h-1zM269.1 149.4h1v1h-1zM207.7 175.8h1v1h-1zM150.1 161.6h1v1h-1zM246.5 193.8h1v1h-1zM153.1 152.0h1v1h-1zM204.5 144.2h1v1h-1zM196.4 130.2h1v1h-1zM260.2 178.8h1v1h-1zM213.7 159.3h1v1h-1zM201.8 142.3h1v1h-1zM237.1 142.2h1v1h-1zM174.4 165.3h1v1h-1zM214.7 159.5h1v1h-1zM141.6 142.7h1v1h-1zM201.5 190.7h1v1h-1zM257.8 161.5h1v1h-1zM241.9 148.0h1v1h-1zM225.6 135.2h1v1h-1zM147.2 177.9h1v1h-1zM162.1 155.6h1v1h-1zM169.8 200.3h1v1h-1zM158.3 189.6h1v1h-1zM214.2 168.9h1v1h-1zM203.7 201.5h1v1h-1zM212.6 183.8h1v1h-1zM152.1 198.3h1v1h-1zM160.3 172.9h1v1h-1zM162.5 168.3h1v1h-1zM162.1 148.4h1v1h-1zM260.7 178.6h1v1h-1zM149.4 131.4h1v1h-1zM151.1 154.6h1v1h-1zM244.2 166.9h1v1h-1zM262.8 191.6h1v1h-1zM239.2 135.7h1v1h-1zM263.6 140.0h1v1h-1zM199.8 164.8h1v1h-1zM256.9 174.5h1v1h-1zM174.8 200.1h1v1h-1zM167.7 192.1h1v1h-1zM268.1 179.7h1v1h-1zM188.2 130.7h1v1h-1zM235.1 170.5h1v1h-1zM154.0 175.6h1v1h-1zM179.7 132.7h1v1h-1zM197.7 130.9h1v1h-1zM176.8 198.9h1v1h-1zM263.9 196.9h1v1h-1zM248.5 158.6h1v1h-1zM178.7 141.1h1v1h-1zM198.8 130.1h1v1h-1zM216.7 133.0h1v1h-1zM268.3 174.8h1v1h-1zM235.1 148.9h1v1h-1zM230.1 200.7h1v1h-1zM234.7 146.4h1v1h-1zM166.2 195.4h1v1h-1zM148.8 162.4h1v1h-1zM154.1 140.1h1v1h-1zM196.9 129.2h1v1h-1zM241.0 170.9h1v1h-1zM164.7 171.1h1v1h-1zM223.5 139.1h1v1h-1zM262.9 178.6h1v1h-1zM142.7 153.5h1v1h-1zM234.6 154.8h1v1h-1zM250.6 142.7h1v1h-1zM226.0 142.0h1v1h-1zM156.7 132.8h1v1h-1zM231.7 195.5h1v1h-1zM162.7 155.3h1v1h-1zM181.8 133.5h1v1h-1zM178.0 166.7h1v1h-1zM209.1 133.3h1v1h-1zM181.5 136.8h1v1h-1zM239.6 160.6h1v1h-1zM270.4 137.4h1v1h-1zM243.2 162.3h1v1h-1zM145.5 186.2h1v1h-1zM229.5 193.8h1v1h-1zM228.5 176.9h1v1h-1zM193.1 141.9h1v1h-1zM255.8 147.4h1v1h-1zM201.3 163.0h1v1h-1zM275.9 134.3h1v1h-1zM223.6 196.6h1v1h-1zM264.3 199.1h1v1h-1zM155.6 154.0h1v1h-1zM166.6 147.0h1v1h-1zM234.5 190.3h1v1h-1zM265.2 129.0h1v1h-1zM230.4 130.2h1v1h-1zM250.3 167.6h1v1h-1zM253.6 133.4h1v1h-1zM235.8 196.3h1v1h-1zM191.0 150.7h1v1h-1zM190.1 190.2h1v1h-1zM202.6 192.1h1v1h-1zM205.1 195.1h1v1h-1zM240.0 186.8h1v1h-1zM269.0 194.5h1v1h-1zM226.8 155.1h1v1h-1zM167.0 156.3h1v1h-1zM215.5 157.1h1v1h-1zM165.0 167.4h1v1h-1zM255.2 157.0h1v1h-1zM173.2 177.8h1v1h-1zM261.1 198.5h1v1h-1zM205.6 164.7h1v1h-1zM199.0 202.2h1v1h-1zM154.2 140.5h1v1h-1zM202.4 181.0h1v1h-1zM201.9 198.6h1v1h-1zM150.7 141.5h1v1h-1zM244.6 187.9h1v1h-1zM183.4 196.8h1v1h-1zM183.4 164.1h1v1h-1zM243.6 165.2h1v1h-1zM256.8 129.0h1v1h-1zM218.0 199.2h1v1h-1zM158.0 153.0h1v1h-1zM157.5 136.3h1v1h-1zM146.9 198.3h1v1h-1zM277.3 172.5h1v1h-1zM216.3 158.6h1v1h-1zM155.8 177.7h1v1h-1zM190.5 148.2h1v1h-1zM247.7 151.3h1v1h-1zM164.5 168.5h1v1h-1zM266.2 189.6h1v1h-1zM187.7 157.1h1v1h-1zM277.2 200.6h1v1h-1zM235.1 168.5h1v1h-1zM212.7 140.6h1v1h-1zM152.7 158.4h1v1h-1zM183.3 146.9h1v1h-1zM238.3 171.8h1v1h-1zM160.5 146.2h1v1h-1zM236.5 161.0h1v1h-1zM242.7 132.6h1v1h-1zM173.3 151.7h1v1h-1zM251.1 182.9h1v1h-1zM264.5 179.4h1v1h-1zM271.8 159.6h1v1h-1zM274.1 137.4h1v1h-1zM247.7 175.2h1v1h-1zM202.9 159.2h1v1h-1zM250.9 171.8h1v1h-1zM263.9 186.5h1v1h-1zM211.5 191.8h1v1h-1zM163.1 181.0h1v1h-1zM146.0 160.5h1v1h-1zM225.3 173.3h1v1h-1zM249.9 162.3h1v1h-1zM234.0 196.1h1v1h-1zM185.1 200.9h1v1h-1zM161.6 139.9h1v1h-1zM158.2 158.6h1v1h-1zM191.7 153.0h1v1h-1zM260.1 141.4h1v1h-1zM273.0 131.4h1v1h-1zM194.6 129.8h1v1h-1zM245.0 182.0h1v1h-1zM184.9 163.9h1v1h-1zM256.5 195.1h1v1h-1zM262.8 153.1h1v1h-1zM221.5 172.5h1v1h-1zM192.3 172.6h1v1h-1zM238.5 169.9h1v1h-1zM238.2 138.0h1v1h-1zM151.5 201.0h1v1h-1zM269.7 188.2h1v1h-1zM252.1 172.7h1v1h-1zM170.5 201.5h1v1h-1zM198.8 158.3h1v1h-1zM147.0 201.6h1v1h-1zM179.2 137.6h1v1h-1zM243.3 183.6h1v1h-1zM195.3 171.8h1v1h-1zM237.5 181.5h1v1h-1zM188.6 165.4h1v1h-1zM172.3 170.9h1v1h-1zM243.0 165.3h1v1h-1zM147.2 176.8h1v1h-1zM218.4 185.4h1v1h-1zM193.1 161.3h1v1h-1zM189.9 189.0h1v1h-1zM260.6 197.6h1v1h-1zM264.9 195.4h1v1h-1zM216.1 162.3h1v1h-1zM196.1 156.4h1v1h-1zM261.7 179.0h1v1h-1zM147.7 187.7h1v1h-1zM261.0 158.4h1v1h-1zM243.8 173.8h1v1h-1zM184.3 151.7h1v1h-1zM218.1 135.3h1v1h-1zM161.7 177.2h1v1h-1zM235.1 135.7h1v1h-1zM204.0 144.5h1v1h-1zM154.6 155.4h1v1h-1zM185.0 151.4h1v1h-1zM180.6 188.7h1v1h-1zM176.7 149.2h1v1h-1zM238.0 135.3h1v1h-1zM196.7 197.6h1v1h-1zM251.4 183.6h1v1h-1zM238.8 166.5h1v1h-1zM200.9 200.2h1v1h-1zM170.8 147.4h1v1h-1zM203.1 137.6h1v1h-1zM251.1 163.2h1v1h-1zM275.5 202.2h1v1h-1zM194.9 163.2h1v1h-1zM146.9 138.4h1v1h-1zM160.2 159.7h1v1h-1zM177.0 174.3h1v1h-1zM203.9 181.1h1v1h-1zM163.1 153.4h1v1h-1zM226.1 196.5h1v1h-1zM274.1 194.6h1v1h-1zM170.3 181.7h1v1h-1zM189.9 166.4h1v1h-1zM264.5 195.0h1v1h-1zM218.9 156.5h1v1h-1zM175.1 176.3h1v1h-1zM201.0 137.2h1v1h-1zM247.0 167.1h1v1h-1zM149.0 176.1h1v1h-1zM252.5 170.5h1v1h-1zM193.5 155.4h1v1h-1zM145.0 154.8h1v1h-1zM234.3 194.1h1v1h-1zM197.2 139.5h1v1h-1zM175.7 163.4h1v1h-1zM187.3 161.8h1v1h-1zM193.5 177.1h1v1h-1zM267.4 151.5h1v1h-1zM277.7 177.8h1v1h-1zM204.0 175.5h1v1h-1zM259.5 175.4h1v1h-1zM233.6 189.4h1v1h-1zM214.5 182.6h1v1h-1zM265.9 175.5h1v1h-1zM271.3 160.7h1v1h-1zM186.7 161.9h1v1h-1zM268.3 151.4h1v1h-1zM253.5 160.8h1v1h-1zM225.0 192.1h1v1h-1zM254.6 155.3h1v1h-1zM229.2 180.1h1v1h-1zM245.1 163.7h1v1h-1zM183.8 129.5h1v1h-1zM246.4 152.5h1v1h-1zM255.7 151.2h1v1h-1zM192.7 132.2h1v1h-1zM264.8 153.1h1v1h-1zM199.6 165.6h1v1h-1zM145.7 137.0h1v1h-1zM254.5 158.7h1v1h-1zM203.9 143.3h1v1h-1zM142.4 173.0h1v1h-1zM174.1 157.7h1v1h-1zM188.5 157.8h1v1h-1zM263.7 172.2h1v1h-1zM155.3 201.5h1v1h-1zM255.1 168.0h1v1h-1zM200.5 200.2h1v1h-1zM153.7 202.4h1v1h-1zM263.4 198.9h1v1h-1zM184.0 167.6h1v1h-1zM218.8 186.1h1v1h-1zM228.8 155.4h1v1h-1zM275.8 195.5h1v1h-1zM180.4 194.9h1v1h-1zM179.5 186.7h1v1h-1zM143.6 143.1h1v1h-1zM177.6 147.6h1v1h-1zM252.1 143.9h1v1h-1zM142.9 159.3h1v1h-1zM257.3 155.9h1v1h-1zM223.0 171.1h1v1h-1zM253.3 163.2h1v1h-1zM188.1 166.0h1v1h-1zM204.7 188.7h1v1h-1zM232.6 141.1h1v1h-1zM229.9 201.7h1v1h-1zM195.5 146.1h1v1h-1zM157.6 165.2h1v1h-1zM234.0 163.1h1v1h-1zM185.2 201.2h1v1h-1zM236.9 190.2h1v1h-1zM222.7 163.9h1v1h-1zM239.5 194.2h1v1h-1zM274.2 147.4h1v1h-1zM260.2 188.8h1v1h-1zM239.1 174.6h1v1h-1zM236.4 151.1h1v1h-1zM196.0 132.7h1v1h-1zM200.1 168.1h1v1h-1zM238.4 191.3h1v1h-1zM263.5 178.0h1v1h-1zM262.3 191.8h1v1h-1zM156.6 159.0h1v1h-1zM172.7 170.1h1v1h-1zM167.1 149.2h1v1h-1zM241.5 152.0h1v1h-1zM158.0 199.0h1v1h-1zM220.1 196.4h1v1h-1zM238.6 162.2h1v1h-1zM268.5 142.3h1v1h-1zM230.1 141.6h1v1h-1zM209.7 181.0h1v1h-1zM147.9 150.7h1v1h-1zM231.6 155.9h1v1h-1zM210.3 169.0h1v1h-1zM266.7 174.7h1v1h-1zM158.8 132.5h1v1h-1zM244.8 136.5h1v1h-1zM275.9 170.3h1v1h-1zM160.9 166.2h1v1h-1zM207.3 173.9h1v1h-1zM248.3 184.0h1v1h-1zM273.8 186.8h1v1h-1zM178.7 141.4h1v1h-1zM171.8 149.1h1v1h-1zM177.3 172.3h1v1h-1zM204.4 184.3h1v1h-1zM253.4 133.2h1v1h-1zM267.5 190.7h1v1h-1zM143.0 170.0h1v1h-1zM241.9 162.2h1v1h-1zM272.4 129.8h1v1h-1zM234.0 183.2h1v1h-1zM195.0 197.6h1v1h-1zM194.0 147.2h1v1h-1zM183.2 188.8h1v1h-1zM214.0 136.5h1v1h-1zM228.8 194.3h1v1h-1zM199.2 185.6h1v1h-1zM251.8 171.7h1v1h-1zM200.8 137.9h1v1h-1zM180.5 169.4h1v1h-1zM275.2 179.9h1v1h-1zM214.1 154.7h1v1h-1zM185.8 156.2h1v1h-1zM197.8 141.3h1v1h-1zM216.5 149.0h1v1h-1zM218.8 151.1h1v1h-1zM193.4 191.6h1v1h-1zM189.8 178.5h1v1h-1zM141.4 145.9h1v1h-1zM212.1 167.1h1v1h-1zM237.0 197.5h1v1h-1zM156.8 149.7h1v1h-1zM145.1 138.5h1v1h-1zM209.8 131.3h1v1h-1zM258.4 172.4h1v1h-1zM187.0 170.5h1v1h-1zM245.9 168.5h1v1h-1zM239.1 129.5h1v1h-1zM243.1 164.7h1v1h-1zM242.2 166.1h1v1h-1zM219.8 171.5h1v1h-1zM268.9 129.8h1v1h-1zM218.1 161.3h1v1h-1zM153.7 160.8h1v1h-1zM268.1 184.6h1v1h-1zM246.7 183.7h1v1h-1zM238.2 181.7h1v1h-1zM221.9 145.4h1v1h-1zM143.9 140.6h1v1h-1zM211.9 184.5h1v1h-1zM182.0 161.6h1v1h-1zM242.0 189.3h1v1h-1zM149.1 185.4h1v1h-1zM227.3 172.8h1v1h-1zM245.0 148.9h1v1h-1zM190.3 159.1h1v1h-1zM159.6 157.6h1v1h-1zM229.0 185.0h1v1h-1zM231.7 192.2h1v1h-1zM274.0 162.1h1v1h-1zM267.1 153.2h1v1h-1zM169.1 148.6h1v1h-1zM224.5 174.6h1v1h-1zM235.4 146.5h1v1h-1zM233.5 186.4h1v1h-1zM273.1 135.5h1v1h-1zM199.5 134.3h1v1h-1zM277.0 177.1h1v1h-1zM165.9 184.5h1v1h-1zM207.2 191.8h1v1h-1zM172.3 148.6h1v1h-1zM142.0 157.4h1v1h-1zM195.9 150.2h1v1h-1zM175.3 167.2h1v1h-1zM168.9 201.3h1v1h-1zM259.1 175.5h1v1h-1zM180.3 133.7h1v1h-1zM190.7 162.6h1v1h-1zM158.9 172.1h1v1h-1zM260.6 141.8h1v1h-1zM252.7 135.1h1v1h-1zM171.4 198.6h1v1h-1zM157.4 154.6h1v1h-1zM215.0 175.3h1v1h-1zM238.0 186.2h1v1h-1zM223.6 171.7h1v1h-1zM158.7 145.4h1v1h-1zM164.9 143.6h1v1h-1zM244.8 170.3h1v1h-1zM202.2 187.3h1v1h-1zM158.7 151.2h1v1h-1zM190.8 161.0h1v1h-1zM190.4 182.8h1v1h-1zM162.0 146.4h1v1h-1zM199.4 191.2h1v1h-1zM260.3 191.1h1v1h-1zM171.2 190.9h1v1h-1zM216.9 145.2h1v1h-1zM143.7 134.4h1v1h-1zM236.7 141.3h1v1h-1zM197.8 170.3h1v1h-1zM152.4 183.1h1v1h-1zM260.0 181.5h1v1h-1zM264.1 141.1h1v1h-1zM266.9 192.1h1v1h-1zM198.0 141.1h1v1h-1zM182.5 184.4h1v1h-1zM142.3 163.2h1v1h-1zM215.6 186.9h1v1h-1zM175.3 155.9h1v1h-1zM163.3 144.6h1v1h-1zM260.2 171.5h1v1h-1zM157.5 160.4h1v1h-1zM180.3 194.7h1v1h-1zM237.6 161.3h1v1h-1zM177.0 184.2h1v1h-1zM239.6 135.0h1v1h-1zM188.1 159.4h1v1h-1zM170.0 168.2h1v1h-1zM219.8 180.0h1v1h-1zM223.2 162.6h1v1h-1zM145.4 193.7h1v1h-1zM196.8 191.6h1v1h-1zM215.1 158.8h1v1h-1zM226.0 137.3h1v1h-1zM223.6 145.7h1v1h-1zM155.4 138.2h1v1h-1zM268.1 158.9h1v1h-1zM254.0 162.0h1v1h-1zM199.6 190.6h1v1h-1zM206.0 150.0h1v1h-1zM249.4 136.7h1v1h-1zM211.2 132.9h1v1h-1zM190.9 201.0h1v1h-1zM198.4 162.6h1v1h-1zM246.4 185.3h1v1h-1zM142.9 149.3h1v1h-1zM165.9 139.8h1v1h-1zM217.8 192.4h1v1h-1zM211.5 145.6h1v1h-1zM170.4 132.1h1v1h-1zM147.2 191.5h1v1h-1zM221.7 152.7h1v1h-1zM222.8 134.5h1v1h-1zM167.3 199.0h1v1h-1zM213.8 176.6h1v1h-1zM194.3 173.3h1v1h-1zM261.6 181.4h1v1h-1zM235.2 160.7h1v1h-1zM178.8 135.4h1v1h-1zM174.8 180.3h1v1h-1zM166.1 150.9h1v1h-1zM235.4 175.6h1v1h-1zM155.7 158.6h1v1h-1zM186.1 161.9h1v1h-1zM230.2 202.3h1v1h-1zM145.7 142.2h1v1h-1zM259.6 196.0h1v1h-1zM170.3 171.1h1v1h-1zM254.7 179.7h1v1h-1zM271.8 195.7h1v1h-1zM264.8 198.2h1v1h-1zM222.7 131.0h1v1h-1zM239.3 135.2h1v1h-1zM188.1 132.2h1v1h-1zM264.5 182.2h1v1h-1zM246.3 134.9h1v1h-1zM169.0 173.6h1v1h-1zM246.1 160.2h1v1h-1zM266.5 170.5h1v1h-1zM201.5 190.1h1v1h-1zM177.4 138.1h1v1h-1zM175.6 136.5h1v1h-1zM250.6 160.5h1v1h-1zM181.2 202.3h1v1h-1zM155.7 141.5h1v1h-1zM272.1 131.6h1v1h-1zM178.2 133.5h1v1h-1zM200.4 175.4h1v1h-1zM265.2 142.1h1v1h-1zM233.4 181.4h1v1h-1zM154.2 189.0h1v1h-1zM175.9 188.3h1v1h-1zM218.5 179.3h1v1h-1zM169.3 137.9h1v1h-1zM190.4 202.2h1v1h-1zM140.7 161.9h1v1h-1zM143.5 161.4h1v1h-1zM143.0 167.9h1v1h-1zM225.1 162.7h1v1h-1zM169.4 140.8h1v1h-1zM274.1 142.6h1v1h-1zM268.5 131.0h1v1h-1zM190.3 162.5h1v1h-1zM196.7 144.6h1v1h-1zM162.7 185.8h1v1h-1zM201.9 162.4h1v1h-1zM276.6 177.7h1v1h-1zM140.0 173.9h1v1h-1zM260.8 195.4h1v1h-1zM211.2 158.3h1v1h-1zM255.6 178.4h1v1h-1zM223.5 132.4h1v1h-1zM274.0 160.9h1v1h-1zM186.3 154.6h1v1h-1zM240.5 152.4h1v1h-1zM232.9 174.1h1v1h-1zM238.6 176.6h1v1h-1zM171.6 195.1h1v1h-1zM216.0 189.9h1v1h-1zM178.5 180.5h1v1h-1zM190.9 171.8h1v1h-1zM274.4 163.7h1v1h-1zM215.5 173.0h1v1h-1zM215.2 142.5h1v1h-1zM211.8 164.7h1v1h-1zM188.0 188.8h1v1h-1zM168.9 195.9h1v1h-1zM178.8 199.4h1v1h-1zM197.0 160.3h1v1h-1zM155.3 146.8h1v1h-1zM202.0 156.6h1v1h-1zM199.0 144.0h1v1h-1zM233.5 193.5h1v1h-1zM215.4 183.0h1v1h-1zM242.8 175.2h1v1h-1zM170.4 199.9h1v1h-1zM275.9 193.7h1v1h-1zM174.2 134.0h1v1h-1zM146.5 172.2h1v1h-1zM199.4 152.4h1v1h-1zM247.8 130.8h1v1h-1zM183.5 196.2h1v1h-1zM169.2 202.1h1v1h-1zM176.7 156.8h1v1h-1zM263.2 195.1h1v1h-1zM176.5 137.0h1v1h-1zM220.7 173.0h1v1h-1zM149.4 198.3h1v1h-1zM169.5 157.1h1v1h-1zM147.4 165.5h1v1h-1zM252.7 202.2h1v1h-1zM179.2 172.0h1v1h-1zM223.9 148.3h1v1h-1zM233.4 170.5h1v1h-1zM186.2 156.4h1v1h-1zM203.1 134.1h1v1h-1zM212.7 159.4h1v1h-1zM231.6 166.9h1v1h-1zM207.6 153.6h1v1h-1zM222.4 129.0h1v1h-1zM181.7 166.1h1v1h-1zM274.4 142.5h1v1h-1zM216.1 180.0h1v1h-1zM164.1 171.8h1v1h-1zM198.5 170.6h1v1h-1zM174.9 167.1h1v1h-1zM218.9 194.9h1v1h-1zM230.6 150.2h1v1h-1zM166.5 184.1h1v1h-1zM144.7 167.7h1v1h-1zM232.9 172.1h1v1h-1zM221.0 157.9h1v1h-1zM145.6 198.5h1v1h-1zM209.6 134.4h1v1h-1zM237.2 169.6h1v1h-1zM175.4 192.7h1v1h-1zM228.9 146.2h1v1h-1zM193.8 196.1h1v1h-1zM177.8 150.4h1v1h-1zM246.2 173.0h1v1h-1zM262.3 173.8h1v1h-1zM142.7 187.4h1v1h-1zM262.7 150.5h1v1h-1zM151.4 181.4h1v1h-1zM194.1 167.0h1v1h-1zM142.9 134.6h1v1h-1zM213.0 183.0h1v1h-1zM143.8 160.4h1v1h-1zM268.6 149.6h1v1h-1zM258.3 138.2h1v1h-1zM231.5 198.2h1v1h-1zM182.5 159.6h1v1h-1zM197.0 186.5h1v1h-1zM148.8 138.8h1v1h-1zM231.8 180.4h1v1h-1zM204.5 138.3h1v1h-1zM159.4 156.2h1v1h-1zM171.7 135.9h1v1h-1zM250.2 132.7h1v1h-1zM192.4 165.1h1v1h-1zM183.9 176.6h1v1h-1zM271.4 131.1h1v1h-1zM277.1 135.6h1v1h-1zM207.2 153.8h1v1h-1zM265.1 170.7h1v1h-1zM266.6 143.8h1v1h-1zM178.7 176.0h1v1h-1zM235.0 190.4h1v1h-1zM174.9 188.2h1v1h-1zM154.2 135.6h1v1h-1zM277.5 142.1h1v1h-1zM209.2 147.6h1v1h-1zM234.5 170.0h1v1h-1zM211.5 193.0h1v1h-1zM172.9 177.1h1v1h-1zM188.9 153.9h1v1h-1zM172.9 184.9h1v1h-1zM260.5 144.9h1v1h-1zM268.5 145.1h1v1h-1zM166.4 166.5h1v1h-1zM254.9 143.1h1v1h-1zM171.0 166.9h1v1h-1zM221.0 201.6h1v1h-1zM173.1 147.9h1v1h-1zM231.7 169.5h1v1h-1zM218.5 163.6h1v1h-1zM187.3 196.2h1v1h-1zM242.2 145.6h1v1h-1zM199.6 145.8h1v1h-1zM254.0 151.6h1v1h-1zM251.3 131.3h1v1h-1zM144.9 133.1h1v1h-1zM202.0 145.2h1v1h-1zM241.5 195.2h1v1h-1zM220.6 195.9h1v1h-1zM240.7 177.5h1v1h-1zM191.5 182.4h1v1h-1zM251.5 155.3h1v1h-1zM180.8 147.9h1v1h-1zM165.1 143.4h1v1h-1zM223.1 146.1h1v1h-1zM224.7 129.9h1v1h-1zM235.7 168.3h1v1h-1zM221.2 160.7h1v1h-1zM178.9 179.9h1v1h-1zM250.0 142.3h1v1h-1zM273.1 152.0h1v1h-1zM209.3 173.4h1v1h-1zM237.1 154.7h1v1h-1zM270.0 147.4h1v1h-1zM192.6 181.9h1v1h-1zM145.6 145.0h1v1h-1zM198.7 173.4h1v1h-1zM146.7 166.0h1v1h-1zM263.8 182.0h1v1h-1zM242.3 146.6h1v1h-1zM230.8 158.6h1v1h-1zM174.0 152.8h1v1h-1zM220.4 131.3h1v1h-1zM210.8 176.3h1v1h-1zM264.9 156.5h1v1h-1zM186.7 154.6h1v1h-1zM160.5 188.5h1v1h-1zM261.8 168.3h1v1h-1zM250.5 186.6h1v1h-1zM204.6 185.0h1v1h-1zM250.5 158.5h1v1h-1zM193.9 174.1h1v1h-1zM168.7 186.9h1v1h-1zM235.0 179.5h1v1h-1zM153.9 174.0h1v1h-1zM202.1 129.8h1v1h-1zM192.8 172.8h1v1h-1zM274.0 149.4h1v1h-1zM202.9 173.1h1v1h-1zM170.6 191.2h1v1h-1zM204.8 155.3h1v1h-1zM154.1 167.4h1v1h-1zM163.4 158.2h1v1h-1zM187.1 153.5h1v1h-1zM247.8 172.7h1v1h-1zM192.4 196.6h1v1h-1zM168.7 156.7h1v1h-1zM251.1 192.2h1v1h-1zM274.6 135.2h1v1h-1zM190.1 162.8h1v1h-1zM232.5 178.2h1v1h-1zM190.1 149.3h1v1h-1zM206.5 170.3h1v1h-1zM217.3 193.9h1v1h-1zM204.6 180.8h1v1h-1zM162.6 163.9h1v1h-1zM236.7 163.7h1v1h-1zM208.5 153.2h1v1h-1zM197.8 130.2h1v1h-1zM169.1 201.8h1v1h-1zM218.1 151.3h1v1h-1zM192.4 173.1h1v1h-1zM186.9 184.5h1v1h-1zM249.0 138.9h1v1h-1zM178.1 160.9h1v1h-1zM203.1 192.7h1v1h-1zM241.0 163.3h1v1h-1zM276.6 135.5h1v1h-1zM264.5 183.2h1v1h-1zM154.6 142.8h1v1h-1zM154.4 151.9h1v1h-1zM163.7 150.6h1v1h-1zM146.9 196.0h1v1h-1zM259.6 164.5h1v1h-1zM201.8 130.9h1v1h-1zM248.0 185.8h1v1h-1zM237.2 174.1h1v1h-1zM203.7 179.4h1v1h-1zM170.9 180.2h1v1h-1zM177.2 188.5h1v1h-1zM260.4 174.6h1v1h-1zM217.0 142.8h1v1h-1zM233.3 190.9h1v1h-1zM271.4 133.9h1v1h-1zM255.6 178.2h1v1h-1zM254.4 155.2h1v1h-1zM143.7 174.7h1v1h-1zM236.1 162.4h1v1h-1zM270.6 144.3h1v1h-1zM255.2 130.3h1v1h-1zM186.9 135.7h1v1h-1zM139.8 143.7h1v1h-1zM151.6 165.7h1v1h-1zM200.5 197.1h1v1h-1zM227.5 144.5h1v1h-1zM170.4 184.4h1v1h-1zM246.1 163.6h1v1h-1zM142.0 179.9h1v1h-1zM270.1 182.1h1v1h-1zM179.5 169.3h1v1h-1zM262.2 142.9h1v1h-1zM192.7 153.4h1v1h-1zM143.3 197.7h1v1h-1zM190.9 155.8h1v1h-1zM158.9 199.3h1v1h-1zM257.6 188.7h1v1h-1zM147.0 196.1h1v1h-1zM150.4 181.4h1v1h-1zM219.6 154.1h1v1h-1zM179.0 164.5h1v1h-1zM185.5 159.8h1v1h-1zM154.5 156.5h1v1h-1zM139.5 134.6h1v1h-1zM168.4 161.7h1v1h-1zM165.5 169.7h1v1h-1zM176.0 155.3h1v1h-1zM247.3 140.3h1v1h-1zM274.3 168.9h1v1h-1zM215.5 176.6h1v1h-1zM179.3 165.1h1v1h-1zM274.2 198.3h1v1h-1zM242.9 178.7h1v1h-1zM222.2 182.9h1v1h-1zM238.9 165.9h1v1h-1zM182.4 169.5h1v1h-1zM140.1 195.2h1v1h-1zM265.1 196.4h1v1h-1zM194.5 153.2h1v1h-1zM144.4 133.9h1v1h-1zM168.0 131.6h1v1h-1zM199.5 159.3h1v1h-1zM223.0 195.9h1v1h-1zM209.5 147.3h1v1h-1zM248.7 148.4h1v1h-1zM233.6 193.0h1v1h-1zM196.1 165.0h1v1h-1zM145.0 146.1h1v1h-1zM153.6 160.9h1v1h-1zM176.4 190.4h1v1h-1zM271.3 156.8h1v1h-1zM240.9 157.8h1v1h-1zM217.5 138.2h1v1h-1zM148.2 174.6h1v1h-1zM169.7 158.6h1v1h-1zM194.0 134.7h1v1h-1zM171.7 182.6h1v1h-1zM266.4 149.4h1v1h-1zM198.8 175.0h1v1h-1zM241.0 191.5h1v1h-1zM239.4 185.7h1v1h-1zM251.0 197.0h1v1h-1zM266.0 139.0h1v1h-1zM142.8 190.7h1v1h-1zM266.0 142.2h1v1h-1zM179.8 143.5h1v1h-1zM219.7 184.3h1v1h-1zM234.7 171.9h1v1h-1zM159.1 139.8h1v1h-1zM238.8 184.5h1v1h-1zM198.5 152.2h1v1h-1zM190.8 183.5h1v1h-1zM212.3 132.5h1v1h-1zM152.6 183.9h1v1h-1zM206.3 130.0h1v1h-1zM276.9 201.8h1v1h-1zM228.3 192.3h1v1h-1zM168.1 192.4h1v1h-1zM208.6 129.4h1v1h-1zM273.1 175.4h1v1h-1zM263.8 151.7h1v1h-1zM149.7 136.2h1v1h-1zM177.3 130.5h1v1h-1zM157.7 136.2h1v1h-1zM210.4 164.5h1v1h-1zM164.7 166.5h1v1h-1zM244.6 161.5h1v1h-1zM275.1 163.1h1v1h-1zM264.6 192.6h1v1h-1zM241.4 158.3h1v1h-1zM261.7 177.7h1v1h-1zM203.5 142.6h1v1h-1zM174.8 175.1h1v1h-1zM256.6 154.7h1v1h-1zM207.2 201.3h1v1h-1zM245.2 171.9h1v1h-1zM172.3 174.0h1v1h-1zM158.4 140.6h1v1h-1zM249.8 131.4h1v1h-1zM232.8 190.6h1v1h-1zM197.9 129.2h1v1h-1zM139.6 177.3h1v1h-1zM160.1 189.9h1v1h-1zM177.5 156.9h1v1h-1zM148.7 138.6h1v1h-1zM199.0 189.7h1v1h-1zM153.4 163.8h1v1h-1zM187.8 165.6h1v1h-1zM154.4 176.3h1v1h-1zM209.4 196.2h1v1h-1zM208.9 140.6h1v1h-1zM221.1 192.9h1v1h-1zM226.8 196.3h1v1h-1zM159.1 201.7h1v1h-1zM212.9 189.4h1v1h-1zM178.0 193.6h1v1h-1zM263.3 191.7h1v1h-1zM232.8 143.1h1v1h-1zM201.6 159.6h1v1h-1zM185.6 142.2h1v1h-1zM234.4 196.7h1v1h-1zM236.9 192.1h1v1h-1zM206.0 188.9h1v1h-1zM206.5 154.2h1v1h-1zM241.0 178.5h1v1h-1zM147.0 169.3h1v1h-1zM266.0 161.8h1v1h-1zM225.2 146.1h1v1h-1zM227.8 132.6h1v1h-1zM271.6 148.1h1v1h-1zM251.2 192.0h1v1h-1zM176.1 150.1h1v1h-1zM219.8 139.0h1v1h-1zM246.6 178.0h1v1h-1zM163.1 154.1h1v1h-1zM154.8 166.0h1v1h-1zM177.6 172.9h1v1h-1zM230.0 155.8h1v1h-1zM224.9 198.0h1v1h-1zM263.2 150.6h1v1h-1zM265.0 157.4h1v1h-1zM228.9 137.1h1v1h-1zM242.7 155.8h1v1h-1zM145.0 200.7h1v1h-1zM238.7 140.1h1v1h-1zM192.9 186.9h1v1h-1zM200.5 140.6h1v1h-1zM244.0 192.8h1v1h-1zM167.3 187.1h1v1h-1zM242.6 184.0h1v1h-1zM262.5 172.1h1v1h-1zM166.2 171.9h1v1h-1zM158.8 137.8h1v1h-1zM142.6 171.8h1v1h-1zM191.8 199.6h1v1h-1zM170.1 129.7h1v1h-1zM258.4 171.5h1v1h-1zM260.3 135.6h1v1h-1zM258.2 149.0h1v1h-1zM217.9 164.8h1v1h-1zM238.6 158.2h1v1h-1zM274.2 189.2h1v1h-1zM263.8 146.9h1v1h-1zM200.7 140.0h1v1h-1zM179.1 173.6h1v1h-1zM219.3 131.1h1v1h-1zM173.0 140.1h1v1h-1zM230.4 134.8h1v1h-1zM181.0 153.6h1v1h-1zM262.4 137.4h1v1h-1zM236.1 140.7h1v1h-1zM227.2 161.8h1v1h-1zM166.0 164.3h1v1h-1zM274.7 132.8h1v1h-1zM145.2 180.1h1v1h-1zM172.6 140.5h1v1h-1zM164.6 146.1h1v1h-1zM166.6 177.4h1v1h-1zM274.1 193.2h1v1h-1zM220.0 182.2h1v1h-1zM244.1 197.5h1v1h-1zM233.2 183.5h1v1h-1zM272.0 178.2h1v1h-1zM232.1 200.3h1v1h-1zM269.5 155.8h1v1h-1zM266.0 147.7h1v1h-1zM147.8 147.7h1v1h-1zM192.1 187.7h1v1h-1zM262.7 153.6h1v1h-1zM187.8 197.1h1v1h-1zM229.3 198.0h1v1h-1zM172.5 198.9h1v1h-1zM163.3 147.4h1v1h-1zM176.5 129.9h1v1h-1zM178.1 143.6h1v1h-1zM241.3 155.1h1v1h-1zM223.2 192.1h1v1h-1zM254.2 134.6h1v1h-1zM213.0 188.7h1v1h-1zM151.3 183.6h1v1h-1zM274.0 179.1h1v1h-1zM178.3 163.8h1v1h-1zM144.2 144.4h1v1h-1zM247.3 179.8h1v1h-1zM143.6 136.2h1v1h-1zM251.5 146.2h1v1h-1zM168.6 132.2h1v1h-1zM228.2 200.1h1v1h-1zM275.3 151.1h1v1h-1zM164.9 136.9h1v1h-1zM222.1 155.6h1v1h-1zM143.3 186.7h1v1h-1zM249.1 201.4h1v1h-1zM166.3 197.3h1v1h-1zM220.1 192.3h1v1h-1zM248.0 169.2h1v1h-1zM247.7 135.3h1v1h-1zM274.0 188.3h1v1h-1zM189.9 144.0h1v1h-1zM185.5 133.4h1v1h-1zM186.0 156.3h1v1h-1zM174.9 149.2h1v1h-1zM178.7 171.4h1v1h-1zM239.5 141.5h1v1h-1zM158.8 189.7h1v1h-1zM168.8 146.0h1v1h-1zM232.7 149.7h1v1h-1zM251.2 185.2h1v1h-1zM208.2 202.1h1v1h-1zM188.2 158.2h1v1h-1zM175.5 144.0h1v1h-1zM168.8 169.9h1v1h-1zM234.1 186.1h1v1h-1zM231.3 173.0h1v1h-1zM146.1 194.7h1v1h-1zM229.7 141.9h1v1h-1zM233.5 139.0h1v1h-1zM231.6 145.2h1v1h-1zM255.5 158.6h1v1h-1zM213.0 190.5h1v1h-1zM172.1 196.1h1v1h-1zM154.8 173.6h1v1h-1zM179.9 161.0h1v1h-1zM254.1 182.6h1v1h-1zM263.3 141.1h1v1h-1zM166.0 159.0h1v1h-1zM166.8 197.7h1v1h-1zM169.9 187.4h1v1h-1zM140.5 200.5h1v1h-1zM251.2 138.8h1v1h-1zM259.0 197.0h1v1h-1zM142.7 139.4h1v1h-1zM191.3 177.0h1v1h-1zM236.4 163.4h1v1h-1zM185.0 191.4h1v1h-1zM155.3 150.0h1v1h-1zM264.8 199.6h1v1h-1zM170.3 163.8h1v1h-1zM176.3 166.4h1v1h-1zM208.9 183.0h1v1h-1zM155.6 171.6h1v1h-1zM251.7 192.2h1v1h-1zM213.9 142.8h1v1h-1zM218.4 176.9h1v1h-1zM267.9 145.0h1v1h-1zM277.5 180.4h1v1h-1zM206.4 169.3h1v1h-1zM255.8 156.8h1v1h-1zM215.6 164.6h1v1h-1zM262.8 176.4h1v1h-1zM157.6 189.5h1v1h-1zM173.2 195.4h1v1h-1zM274.6 161.6h1v1h-1zM249.9 169.0h1v1h-1zM211.6 185.9h1v1h-1zM262.8 171.5h1v1h-1zM195.6 147.8h1v1h-1zM259.7 129.1h1v1h-1zM206.1 171.2h1v1h-1zM253.8 171.2h1v1h-1zM167.5 167.3h1v1h-1zM181.8 183.5h1v1h-1zM246.4 176.7h1v1h-1zM226.0 180.1h1v1h-1zM155.2 145.0h1v1h-1zM246.7 150.6h1v1h-1zM223.9 189.6h1v1h-1zM208.9 141.2h1v1h-1zM248.0 159.0h1v1h-1zM226.8 189.9h1v1h-1zM147.1 140.2h1v1h-1zM142.0 183.8h1v1h-1zM194.8 150.9h1v1h-1zM235.9 138.7h1v1h-1zM268.2 182.5h1v1h-1zM173.9 193.4h1v1h-1zM185.1 194.9h1v1h-1zM272.5 160.1h1v1h-1zM207.4 198.2h1v1h-1zM265.7 184.4h1v1h-1zM246.0 187.4h1v1h-1zM176.9 192.3h1v1h-1zM213.5 181.5h1v1h-1zM218.6 149.8h1v1h-1zM170.7 192.7h1v1h-1zM210.8 173.0h1v1h-1zM201.3 175.3h1v1h-1zM162.3 193.4h1v1h-1zM240.1 155.8h1v1h-1zM234.6 155.5h1v1h-1zM210.5 188.0h1v1h-1zM266.0 163.2h1v1h-1zM202.8 183.2h1v1h-1zM191.6 130.3h1v1h-1zM195.7 143.3h1v1h-1zM156.6 158.4h1v1h-1zM177.1 185.2h1v1h-1zM181.5 173.3h1v1h-1zM228.5 172.5h1v1h-1zM258.7 191.0h1v1h-1zM257.8 170.3h1v1h-1zM249.1 173.4h1v1h-1zM175.0 136.6h1v1h-1zM227.6 149.3h1v1h-1zM211.8 150.2h1v1h-1zM271.9 147.9h1v1h-1zM273.6 176.7h1v1h-1zM180.7 137.5h1v1h-1zM254.9 137.1h1v1h-1zM199.7 172.0h1v1h-1zM270.6 187.5h1v1h-1zM162.5 189.8h1v1h-1zM181.3 171.7h1v1h-1zM192.5 168.6h1v1h-1zM144.3 177.3h1v1h-1zM209.8 198.4h1v1h-1zM206.1 135.9h1v1h-1zM229.9 132.8h1v1h-1zM258.5 166.1h1v1h-1zM142.3 198.0h1v1h-1zM219.2 140.4h1v1h-1zM185.3 192.7h1v1h-1zM244.5 162.8h1v1h-1zM204.2 193.0h1v1h-1zM216.1 160.2h1v1h-1zM237.8 136.1h1v1h-1zM149.9 141.3h1v1h-1zM183.9 171.9h1v1h-1zM187.0 143.0h1v1h-1zM200.5 197.2h1v1h-1zM205.1 191.5h1v1h-1zM141.6 198.7h1v1h-1zM192.1 169.3h1v1h-1zM139.5 192.4h1v1h-1zM264.3 162.4h1v1h-1zM275.1 162.5h1v1h-1zM271.5 151.6h1v1h-1zM193.0 198.7h1v1h-1zM159.9 144.2h1v1h-1zM231.1 180.6h1v1h-1zM162.0 155.4h1v1h-1zM268.2 184.2h1v1h-1zM277.5 163.1h1v1h-1zM168.2 189.0h1v1h-1zM237.9 134.2h1v1h-1zM167.6 184.9h1v1h-1zM159.2 187.1h1v1h-1zM170.7 171.7h1v1h-1zM172.3 153.7h1v1h-1zM172.6 182.8h1v1h-1zM197.4 190.0h1v1h-1zM146.5 195.8h1v1h-1zM140.1 152.9h1v1h-1zM146.2 167.2h1v1h-1zM262.5 157.2h1v1h-1zM181.8 172.8h1v1h-1zM198.6 178.8h1v1h-1zM146.9 190.9h1v1h-1zM159.2 187.1h1v1h-1zM185.2 194.9h1v1h-1zM224.7 187.7h1v1h-1zM210.1 151.4h1v1h-1zM208.3 147.9h1v1h-1zM247.4 169.5h1v1h-1zM168.8 199.3h1v1h-1zM235.4 175.4h1v1h-1zM179.7 196.3h1v1h-1zM164.3 136.8h1v1h-1zM204.8 140.1h1v1h-1zM256.3 184.2h1v1h-1zM170.7 137.2h1v1h-1zM172.2 158.4h1v1h-1zM269.1 168.2h1v1h-1zM198.2 132.0h1v1h-1zM258.9 134.2h1v1h-1zM237.3 185.9h1v1h-1zM146.1 200.8h1v1h-1zM267.2 162.5h1v1h-1zM261.7 132.0h1v1h-1zM172.3 131.1h1v1h-1zM177.3 189.2h1v1h-1zM177.1 129.2h1v1h-1zM269.5 176.5h1v1h-1zM206.2 141.8h1v1h-1zM250.7 136.4h1v1h-1zM189.6 185.3h1v1h-1zM210.4 133.7h1v1h-1zM224.3 138.3h1v1h-1zM166.6 165.1h1v1h-1zM266.4 160.4h1v1h-1zM249.3 143.0h1v1h-1zM200.7 151.7h1v1h-1zM235.2 170.1h1v1h-1zM211.4 142.8h1v1h-1zM261.5 129.9h1v1h-1zM190.3 152.7h1v1h-1zM215.7 139.8h1v1h-1zM172.7 168.1h1v1h-1zM174.9 143.4h1v1h-1zM237.8 202.0h1v1h-1zM154.4 192.0h1v1h-1zM221.3 145.4h1v1h-1zM187.0 196.6h1v1h-1zM220.5 157.2h1v1h-1zM199.0 182.5h1v1h-1zM187.4 185.3h1v1h-1zM252.0 174.4h1v1h-1zM238.2 162.0h1v1h-1zM171.2 181.9h1v1h-1zM232.2 138.9h1v1h-1zM266.5 191.1h1v1h-1zM175.3 195.1h1v1h-1zM165.6 174.0h1v1h-1zM238.9 135.1h1v1h-1zM221.2 191.7h1v1h-1zM191.5 191.9h1v1h-1zM178.1 160.2h1v1h-1zM208.9 189.8h1v1h-1zM177.7 136.5h1v1h-1zM226.7 158.2h1v1h-1zM184.0 180.4h1v1h-1zM244.9 201.3h1v1h-1zM229.9 132.1h1v1h-1zM227.4 198.9h1v1h-1zM144.1 144.7h1v1h-1zM165.1 171.4h1v1h-1zM229.6 152.8h1v1h-1zM179.3 152.2h1v1h-1zM265.9 168.0h1v1h-1zM194.3 152.0h1v1h-1zM260.3 151.9h1v1h-1zM267.8 144.9h1v1h-1zM271.9 184.0h1v1h-1zM232.6 187.0h1v1h-1zM155.7 177.3h1v1h-1zM270.4 180.8h1v1h-1zM182.2 134.3h1v1h-1zM275.4 146.7h1v1h-1zM188.2 141.9h1v1h-1zM148.5 201.7h1v1h-1zM148.2 177.8h1v1h-1zM172.8 139.2h1v1h-1zM201.3 139.8h1v1h-1zM207.0 175.0h1v1h-1zM186.4 198.9h1v1h-1zM202.4 132.5h1v1h-1zM274.0 133.9h1v1h-1zM153.0 169.9h1v1h-1zM254.9 191.1h1v1h-1zM148.5 187.3h1v1h-1zM151.1 148.0h1v1h-1zM238.1 129.7h1v1h-1zM146.4 150.7h1v1h-1zM249.3 189.3h1v1h-1zM150.4 130.4h1v1h-1zM248.9 197.3h1v1h-1zM165.3 154.0h1v1h-1zM163.1 170.4h1v1h-1zM160.2 195.7h1v1h-1zM206.5 162.5h1v1h-1zM256.7 202.1h1v1h-1zM188.5 197.1h1v1h-1zM215.9 190.3h1v1h-1zM185.3 131.1h1v1h-1zM229.3 153.3h1v1h-1zM223.3 187.6h1v1h-1zM234.2 131.1h1v1h-1zM151.8 140.7h1v1h-1zM187.0 187.6h1v1h-1zM230.1 139.8h1v1h-1zM162.5 187.9h1v1h-1zM208.8 187.4h1v1h-1zM209.6 129.6h1v1h-1zM143.0 171.0h1v1h-1zM167.4 190.2h1v1h-1zM220.9 132.7h1v1h-1zM204.5 161.3h1v1h-1zM236.2 139.2h1v1h-1zM273.3 177.9h1v1h-1zM164.0 135.0h1v1h-1zM223.2 137.5h1v1h-1zM159.7 144.4h1v1h-1zM155.8 192.7h1v1h-1zM156.2 175.8h1v1h-1zM196.9 154.1h1v1h-1zM269.3 170.8h1v1h-1zM219.5 172.2h1v1h-1zM192.4 182.9h1v1h-1zM140.1 183.6h1v1h-1zM239.5 143.7h1v1h-1zM234.4 170.0h1v1h-1zM196.3 188.5h1v1h-1zM173.0 129.0h1v1h-1zM220.8 172.7h1v1h-1zM213.5 166.2h1v1h-1zM180.1 171.7h1v1h-1zM199.0 136.3h1v1h-1zM262.8 181.2h1v1h-1zM202.5 186.1h1v1h-1zM271.3 192.4h1v1h-1zM206.1 201.5h1v1h-1zM203.2 168.6h1v1h-1zM141.4 191.3h1v1h-1zM208.6 167.6h1v1h-1zM181.4 198.4h1v1h-1zM184.3 176.8h1v1h-1zM153.8 158.3h1v1h-1zM169.9 163.3h1v1h-1zM237.7 201.4h1v1h-1zM208.3 155.6h1v1h-1zM263.2 151.7h1v1h-1zM255.4 153.7h1v1h-1zM170.5 142.6h1v1h-1zM244.1 166.6h1v1h-1zM267.5 198.8h1v1h-1zM265.1 176.1h1v1h-1zM214.5 143.8h1v1h-1zM162.6 165.9h1v1h-1zM141.5 199.8h1v1h-1zM271.8 186.3h1v1h-1zM198.5 193.6h1v1h-1zM268.5 165.1h1v1h-1zM257.8 182.4h1v1h-1zM203.6 184.3h1v1h-1zM221.1 150.4h1v1h-1zM218.8 159.4h1v1h-1zM182.4 132.4h1v1h-1zM142.1 190.2h1v1h-1zM231.8 130.9h1v1h-1zM256.8 184.3h1v1h-1zM270.0 168.8h1v1h-1zM218.5 154.8h1v1h-1zM224.9 137.7h1v1h-1zM263.9 179.2h1v1h-1zM262.9 179.2h1v1h-1zM234.1 190.8h1v1h-1zM227.7 180.3h1v1h-1zM277.1 153.5h1v1h-1zM193.1 131.7h1v1h-1zM155.4 147.5h1v1h-1zM229.2 201.2h1v1h-1zM203.1 193.9h1v1h-1zM277.9 195.1h1v1h-1zM227.4 162.5h1v1h-1zM156.8 133.7h1v1h-1zM218.9 157.0h1v1h-1zM175.9 191.1h1v1h-1zM184.5 199.9h1v1h-1zM167.3 165.9h1v1h-1zM193.5 146.5h1v1h-1zM159.1 187.3h1v1h-1zM211.9 151.9h1v1h-1zM183.0 187.2h1v1h-1zM156.7 175.7h1v1h-1zM191.9 143.8h1v1h-1zM172.7 177.4h1v1h-1zM242.6 187.2h1v1h-1zM144.8 130.9h1v1h-1zM266.0 179.2h1v1h-1zM178.7 168.6h1v1h-1zM168.5 144.6h1v1h-1zM262.0 150.0h1v1h-1zM194.7 140.6h1v1h-1zM269.1 188.9h1v1h-1zM232.0 189.7h1v1h-1zM276.0 143.9h1v1h-1zM196.1 147.9h1v1h-1zM180.0 197.7h1v1h-1zM210.5 196.9h1v1h-1zM202.7 139.7h1v1h-1zM219.3 182.9h1v1h-1zM168.8 161.4h1v1h-1zM209.9 136.0h1v1h-1zM163.2 168.2h1v1h-1zM201.4 174.7h1v1h-1zM165.2 174.2h1v1h-1zM214.6 188.2h1v1h-1zM183.8 163.7h1v1h-1zM269.6 166.9h1v1h-1zM187.4 199.9h1v1h-1zM211.1 177.1h1v1h-1zM155.5 167.6h1v1h-1zM224.7 176.6h1v1h-1zM241.2 155.9h1v1h-1zM148.1 198.8h1v1h-1zM212.2 157.9h1v1h-1zM216.5 185.6h1v1h-1zM187.1 149.6h1v1h-1zM194.4 163.5h1v1h-1zM171.1 156.2h1v1h-1zM205.8 202.2h1v1h-1zM243.9 143.4h1v1h-1zM276.1 133.1h1v1h-1zM236.7 168.1h1v1h-1zM176.2 150.7h1v1h-1zM197.4 178.7h1v1h-1zM155.6 157.9h1v1h-1zM237.8 145.8h1v1h-1zM160.5 187.4h1v1h-1zM227.7 192.9h1v1h-1zM262.1 134.2h1v1h-1zM226.8 183.2h1v1h-1zM217.3 146.1h1v1h-1zM187.2 154.7h1v1h-1zM222.7 135.6h1v1h-1zM246.9 153.2h1v1h-1zM214.9 137.0h1v1h-1zM222.9 151.7h1v1h-1zM182.4 194.5h1v1h-1zM216.7 186.1h1v1h-1zM273.7 186.1h1v1h-1zM263.4 177.9h1v1h-1zM166.0 160.0h1v1h-1zM184.0 129.3h1v1h-1zM224.9 195.0h1v1h-1zM182.3 194.2h1v1h-1zM207.8 163.6h1v1h-1zM183.2 152.9h1v1h-1zM201.0 142.1h1v1h-1zM233.4 183.4h1v1h-1zM254.3 200.2h1v1h-1zM172.0 200.3h1v1h-1zM271.2 163.0h1v1h-1zM255.9 129.6h1v1h-1zM152.1 136.2h1v1h-1zM142.3 150.9h1v1h-1zM249.2 174.1h1v1h-1zM262.7 146.0h1v1h-1zM208.3 181.8h1v1h-1zM161.5 196.8h1v1h-1zM214.4 163.8h1v1h-1zM165.4 163.4h1v1h-1zM150.4 180.2h1v1h-1zM232.1 191.3h1v1h-1zM211.8 192.6h1v1h-1zM261.5 186.9h1v1h-1zM268.4 134.9h1v1h-1zM273.0 181.7h1v1h-1zM233.8 197.3h1v1h-1zM274.0 151.5h1v1h-1zM144.5 192.2h1v1h-1zM154.0 176.8h1v1h-1zM269.2 144.4h1v1h-1zM184.6 142.9h1v1h-1zM140.9 162.4h1v1h-1zM193.3 196.9h1v1h-1zM266.7 154.1h1v1h-1zM277.3 155.4h1v1h-1zM225.4 193.0h1v1h-1zM205.3 136.5h1v1h-1zM216.8 155.5h1v1h-1zM203.1 176.1h1v1h-1zM141.0 186.3h1v1h-1zM165.2 195.7h1v1h-1zM146.9 146.9h1v1h-1zM277.2 151.1h1v1h-1zM254.4 187.0h1v1h-1zM257.0 174.4h1v1h-1zM257.8 184.9h1v1h-1zM180.8 163.7h1v1h-1zM170.4 183.4h1v1h-1zM240.0 144.4h1v1h-1zM275.5 154.3h1v1h-1zM188.0 167.9h1v1h-1zM220.5 158.8h1v1h-1zM266.4 160.7h1v1h-1zM272.5 167.3h1v1h-1zM201.2 200.3h1v1h-1zM184.3 166.9h1v1h-1zM141.0 170.1h1v1h-1zM155.5 182.8h1v1h-1zM261.8 135.1h1v1h-1zM155.3 159.2h1v1h-1zM206.8 198.5h1v1h-1zM180.6 163.1h1v1h-1zM198.3 160.5h1v1h-1zM148.6 157.3h1v1h-1zM224.1 188.5h1v1h-1zM217.9 133.7h1v1h-1zM262.8 157.1h1v1h-1zM211.5 147.3h1v1h-1zM202.3 150.4h1v1h-1zM191.0 161.6h1v1h-1zM241.0 159.4h1v1h-1zM222.9 174.2h1v1h-1zM187.9 154.2h1v1h-1zM201.2 170.0h1v1h-1zM191.9 181.0h1v1h-1zM226.1 137.8h1v1h-1zM166.4 154.6h1v1h-1zM213.0 155.6h1v1h-1zM231.3 173.0h1v1h-1zM140.9 175.7h1v1h-1zM211.6 156.1h1v1h-1zM267.7 154.1h1v1h-1zM229.9 176.6h1v1h-1zM249.4 192.9h1v1h-1zM262.0 166.4h1v1h-1zM202.2 151.5h1v1h-1zM214.6 129.2h1v1h-1zM156.1 197.7h1v1h-1zM221.8 185.8h1v1h-1zM170.9 129.0h1v1h-1zM212.7 180.9h1v1h-1zM189.9 185.8h1v1h-1zM174.3 192.5h1v1h-1zM274.6 148.4h1v1h-1zM189.2 194.4h1v1h-1zM274.5 137.0h1v1h-1zM152.6 138.5h1v1h-1zM215.8 130.0h1v1h-1zM200.4 170.4h1v1h-1zM140.6 160.0h1v1h-1zM172.5 137.6h1v1h-1zM170.4 137.5h1v1h-1zM185.6 143.1h1v1h-1zM238.3 133.8h1v1h-1zM219.0 175.9h1v1h-1zM175.8 185.2h1v1h-1zM153.7 180.4h1v1h-1zM183.3 141.9h1v1h-1zM140.4 165.5h1v1h-1zM209.7 190.8h1v1h-1zM235.4 187.2h1v1h-1zM242.3 190.0h1v1h-1zM261.1 179.5h1v1h-1zM152.5 191.4h1v1h-1zM167.7 192.7h1v1h-1zM182.9 131.0h1v1h-1zM191.3 173.5h1v1h-1zM243.7 197.0h1v1h-1zM151.6 138.4h1v1h-1zM184.7 189.6h1v1h-1zM164.9 147.7h1v1h-1zM274.8 173.1h1v1h-1zM238.0 168.5h1v1h-1zM167.6 179.3h1v1h-1zM186.4 184.0h1v1h-1zM249.3 195.7h1v1h-1zM192.9 148.4h1v1h-1zM144.0 131.6h1v1h-1zM224.6 154.5h1v1h-1zM166.0 187.5h1v1h-1zM256.2 130.7h1v1h-1zM141.5 142.3h1v1h-1zM167.1 196.8h1v1h-1zM222.0 195.4h1v1h-1zM255.8 140.3h1v1h-1zM179.0 191.8h1v1h-1zM210.5 147.3h1v1h-1zM144.7 150.6h1v1h-1zM156.5 174.6h1v1h-1zM162.3 196.5h1v1h-1zM213.5 180.4h1v1h-1zM265.6 135.9h1v1h-1zM240.0 164.8h1v1h-1zM229.0 178.0h1v1h-1zM204.4 162.1h1v1h-1zM197.7 169.7h1v1h-1zM257.4 129.7h1v1h-1zM241.3 139.3h1v1h-1zM181.7 197.0h1v1h-1zM170.3 165.7h1v1h-1zM245.3 148.4h1v1h-1zM266.1 145.1h1v1h-1zM180.8 198.4h1v1h-1zM206.2 178.2h1v1h-1zM259.9 135.8h1v1h-1zM213.9 145.5h1v1h-1zM240.1 164.2h1v1h-1zM200.6 132.3h1v1h-1zM249.8 160.4h1v1h-1zM276.1 191.5h1v1h-1zM245.9 162.0h1v1h-1zM183.9 193.1h1v1h-1zM219.9 138.5h1v1h-1zM163.8 136.3h1v1h-1zM276.1 188.2h1v1h-1zM215.9 166.7h1v1h-1zM185.9 193.6h1v1h-1zM176.5 133.2h1v1h-1zM255.7 132.5h1v1h-1zM208.4 165.7h1v1h-1zM148.0 171.0h1v1h-1zM219.9 129.4h1v1h-1zM148.3 154.1h1v1h-1zM145.9 130.9h1v1h-1zM167.4 151.4h1v1h-1zM227.2 187.3h1v1h-1zM203.4 171.3h1v1h-1zM164.2 173.3h1v1h-1zM148.2 150.4h1v1h-1zM273.9 162.6h1v1h-1zM194.7 164.6h1v1h-1zM159.4 148.1h1v1h-1zM235.1 194.8h1v1h-1zM191.7 193.4h1v1h-1zM236.5 201.3h1v1h-1zM259.9 197.7h1v1h-1zM255.1 188.3h1v1h-1zM212.7 150.1h1v1h-1zM269.4 138.1h1v1h-1zM160.5 149.8h1v1h-1zM199.0 190.1h1v1h-1zM203.4 133.5h1v1h-1zM142.1 151.0h1v1h-1zM214.5 137.5h1v1h-1zM205.2 184.1h1v1h-1zM257.3 194.5h1v1h-1zM234.8 180.8h1v1h-1zM146.9 190.1h1v1h-1zM257.1 190.9h1v1h-1zM266.6 191.6h1v1h-1zM267.9 198.6h1v1h-1zM230.7 163.1h1v1h-1zM222.0 134.4h1v1h-1zM170.8 129.4h1v1h-1zM218.3 142.9h1v1h-1zM174.1 129.1h1v1h-1zM239.2 167.8h1v1h-1zM169.5 137.8h1v1h-1zM217.0 129.7h1v1h-1zM261.8 147.4h1v1h-1zM239.4 190.1h1v1h-1zM254.3 149.9h1v1h-1zM152.9 197.3h1v1h-1zM153.5 186.3h1v1h-1zM245.2 146.0h1v1h-1zM235.6 175.3h1v1h-1zM269.3 191.3h1v1h-1zM170.9 170.0h1v1h-1zM175.5 148.3h1v1h-1zM255.0 147.7h1v1h-1zM184.2 159.8h1v1h-1zM183.0 162.1h1v1h-1zM212.9 191.2h1v1h-1zM256.4 142.7h1v1h-1zM247.1 195.7h1v1h-1zM171.8 147.3h1v1h-1zM251.2 157.0h1v1h-1zM268.6 171.1h1v1h-1zM170.8 167.5h1v1h-1zM181.2 174.4h1v1h-1zM247.7 178.6h1v1h-1zM238.1 158.8h1v1h-1zM142.4 164.9h1v1h-1zM259.5 154.8h1v1h-1zM257.3 155.4h1v1h-1zM277.1 199.6h1v1h-1zM198.3 187.9h1v1h-1zM244.2 180.8h1v1h-1zM231.5 154.2h1v1h-1zM141.8 157.2h1v1h-1zM185.0 183.8h1v1h-1zM228.8 155.9h1v1h-1zM169.0 150.1h1v1h-1zM149.8 198.4h1v1h-1zM262.3 134.1h1v1h-1zM270.5 129.3h1v1h-1zM242.0 160.6h1v1h-1zM212.7 163.1h1v1h-1zM270.1 131.3h1v1h-1zM199.8 187.6h1v1h-1zM213.9 171.3h1v1h-1zM251.4 134.6h1v1h-1zM225.2 196.4h1v1h-1zM213.4 193.0h1v1h-1zM213.7 142.2h1v1h-1zM232.6 168.0h1v1h-1zM161.3 133.9h1v1h-1zM260.1 166.5h1v1h-1zM146.7 152.7h1v1h-1zM194.9 173.2h1v1h-1zM191.8 182.2h1v1h-1zM158.9 154.6h1v1h-1zM211.2 170.7h1v1h-1zM243.3 165.5h1v1h-1zM161.8 182.7h1v1h-1zM216.8 153.4h1v1h-1zM227.1 147.6h1v1h-1zM188.9 146.0h1v1h-1zM220.1 183.7h1v1h-1zM156.8 156.4h1v1h-1zM256.7 132.5h1v1h-1zM252.5 141.9h1v1h-1zM221.1 184.4h1v1h-1zM180.5 139.1h1v1h-1zM177.3 166.8h1v1h-1zM215.5 201.1h1v1h-1zM154.8 187.7h1v1h-1zM249.6 144.7h1v1h-1zM151.5 190.5h1v1h-1zM276.0 190.2h1v1h-1zM250.2 159.3h1v1h-1zM260.2 148.2h1v1h-1zM152.9 145.8h1v1h-1zM238.5 199.4h1v1h-1zM269.9 180.9h1v1h-1zM203.7 163.8h1v1h-1zM216.3 160.5h1v1h-1zM148.5 139.7h1v1h-1zM211.9 195.2h1v1h-1zM209.0 188.5h1v1h-1zM199.2 149.5h1v1h-1zM243.8 190.5h1v1h-1zM179.2 131.2h1v1h-1zM226.4 188.8h1v1h-1zM223.8 184.2h1v1h-1zM149.7 154.0h1v1h-1zM154.9 192.1h1v1h-1zM233.3 131.3h1v1h-1zM148.9 147.3h1v1h-1zM159.2 198.1h1v1h-1zM141.7 200.9h1v1h-1zM240.6 135.7h1v1h-1zM141.2 191.4h1v1h-1zM146.0 172.5h1v1h-1zM184.0 188.3h1v1h-1zM252.3 194.7h1v1h-1zM227.0 191.9h1v1h-1zM230.0 192.9h1v1h-1zM166.7 129.7h1v1h-1zM176.3 169.3h1v1h-1zM230.9 129.0h1v1h-1zM215.5 193.9h1v1h-1zM232.0 152.2h1v1h-1zM220.3 174.1h1v1h-1zM253.0 197.8h1v1h-1zM215.1 162.4h1v1h-1zM266.5 145.1h1v1h-1zM172.6 174.3h1v1h-1zM221.9 174.5h1v1h-1zM148.1 129.4h1v1h-1zM202.3 192.1h1v1h-1zM160.6 201.3h1v1h-1zM265.5 192.1h1v1h-1zM217.4 132.9h1v1h-1zM245.8 158.9h1v1h-1zM178.8 152.9h1v1h-1zM251.1 187.2h1v1h-1zM171.1 172.2h1v1h-1zM222.3 137.0h1v1h-1zM221.3 182.8h1v1h-1zM239.9 191.4h1v1h-1zM154.3 201.7h1v1h-1zM219.2 159.9h1v1h-1zM203.8 161.7h1v1h-1zM165.4 187.0h1v1h-1zM220.4 172.7h1v1h-1zM208.5 135.2h1v1h-1zM204.1 147.7h1v1h-1zM147.8 166.3h1v1h-1zM146.9 187.8h1v1h-1zM165.5 174.2h1v1h-1zM161.4 133.7h1v1h-1zM181.0 180.0h1v1h-1zM149.3 175.3h1v1h-1zM248.0 162.3h1v1h-1zM263.2 157.0h1v1h-1zM228.6 171.0h1v1h-1zM255.1 169.3h1v1h-1zM158.7 185.9h1v1h-1zM249.8 198.2h1v1h-1zM164.4 156.3h1v1h-1zM233.9 168.2h1v1h-1zM229.7 171.5h1v1h-1zM221.1 199.6h1v1h-1zM196.5 130.8h1v1h-1zM219.1 177.4h1v1h-1zM225.7 130.6h1v1h-1zM203.9 171.8h1v1h-1zM253.2 139.9h1v1h-1zM170.7 153.3h1v1h-1zM180.8 176.4h1v1h-1zM250.6 175.7h1v1h-1zM266.0 166.7h1v1h-1zM259.5 192.9h1v1h-1zM195.4 199.9h1v1h-1zM258.2 137.0h1v1h-1zM206.7 168.2h1v1h-1zM273.8 174.0h1v1h-1zM181.8 192.3h1v1h-1zM266.7 143.4h1v1h-1zM212.4 148.8h1v1h-1zM255.1 153.2h1v1h-1zM154.4 154.7h1v1h-1zM260.1 167.5h1v1h-1zM198.6 155.0h1v1h-1zM165.8 185.9h1v1h-1zM233.6 129.4h1v1h-1zM155.2 153.5h1v1h-1zM209.1 199.7h1v1h-1zM161.8 180.0h1v1h-1zM235.3 192.7h1v1h-1zM191.1 156.8h1v1h-1zM243.9 129.2h1v1h-1zM255.4 188.4h1v1h-1zM216.8 157.9h1v1h-1zM215.9 158.5h1v1h-1zM192.4 184.9h1v1h-1zM231.8 138.2h1v1h-1zM233.9 154.0h1v1h-1zM272.0 183.8h1v1h-1zM219.0 141.6h1v1h-1zM229.8 202.3h1v1h-1zM210.2 142.4h1v1h-1zM167.5 173.5h1v1h-1zM275.5 169.0h1v1h-1zM214.7 158.5h1v1h-1zM257.1 168.9h1v1h-1zM263.8 150.6h1v1h-1zM195.0 157.2h1v1h-1zM181.0 198.6h1v1h-1zM206.6 199.1h1v1h-1zM180.8 140.4h1v1h-1zM273.8 187.9h1v1h-1zM162.4 176.4h1v1h-1zM201.8 192.0h1v1h-1zM251.1 190.9h1v1h-1zM214.1 182.4h1v1h-1zM229.0 193.9h1v1h-1zM207.8 140.1h1v1h-1zM141.7 188.2h1v1h-1zM149.4 140.9h1v1h-1zM232.3 184.6h1v1h-1zM264.0 189.7h1v1h-1zM207.1 148.7h1v1h-1zM222.6 197.6h1v1h-1zM146.0 188.9h1v1h-1zM270.4 136.3h1v1h-1zM181.0 198.9h1v1h-1zM227.3 187.8h1v1h-1zM262.9 134.9h1v1h-1zM247.7 145.3h1v1h-1zM247.2 141.2h1v1h-1zM192.0 149.3h1v1h-1zM141.2 151.3h1v1h-1zM201.0 130.0h1v1h-1zM248.2 169.1h1v1h-1zM237.3 159.4h1v1h-1zM224.8 201.8h1v1h-1zM170.6 183.5h1v1h-1zM236.8 135.0h1v1h-1zM226.4 146.7h1v1h-1zM227.5 191.7h1v1h-1zM174.8 159.6h1v1h-1zM243.8 171.6h1v1h-1zM235.6 177.8h1v1h-1zM183.0 190.0h1v1h-1zM196.7 159.8h1v1h-1zM154.6 134.0h1v1h-1zM140.6 148.6h1v1h-1zM187.4 133.4h1v1h-1zM179.1 200.5h1v1h-1zM235.0 174.6h1v1h-1zM252.7 153.4h1v1h-1zM200.5 153.8h1v1h-1zM233.7 178.3h1v1h-1zM166.4 154.4h1v1h-1zM218.2 198.9h1v1h-1zM161.8 170.7h1v1h-1zM151.9 163.8h1v1h-1zM194.2 180.7h1v1h-1zM243.4 148.2h1v1h-1zM148.7 158.5h1v1h-1zM276.9 157.8h1v1h-1zM275.8 185.3h1v1h-1zM170.0 178.4h1v1h-1zM171.9 190.7h1v1h-1zM174.7 165.6h1v1h-1zM251.8 145.6h1v1h-1zM144.9 146.0h1v1h-1zM227.8 182.9h1v1h-1zM140.4 139.2h1v1h-1zM158.1 183.7h1v1h-1zM181.5 143.8h1v1h-1zM270.3 135.1h1v1h-1zM257.0 140.2h1v1h-1zM204.8 198.3h1v1h-1zM171.9 192.1h1v1h-1zM155.5 192.5h1v1h-1zM183.6 198.7h1v1h-1zM180.3 139.5h1v1h-1zM172.9 165.0h1v1h-1zM257.2 201.3h1v1h-1zM240.1 162.5h1v1h-1zM143.6 136.9h1v1h-1zM249.5 195.0h1v1h-1zM272.5 160.0h1v1h-1zM227.4 186.8h1v1h-1zM143.7 150.6h1v1h-1zM238.2 189.1h1v1h-1zM144.1 160.2h1v1h-1zM182.1 177.1h1v1h-1zM259.6 160.8h1v1h-1zM155.8 151.0h1v1h-1zM239.2 160.7h1v1h-1zM271.4 167.4h1v1h-1zM229.4 198.3h1v1h-1zM181.1 180.4h1v1h-1zM198.9 164.8h1v1h-1zM155.3 151.6h1v1h-1zM147.0 183.9h1v1h-1zM220.4 200.6h1v1h-1zM184.9 142.9h1v1h-1zM240.7 174.8h1v1h-1zM162.5 147.2h1v1h-1zM259.8 196.4h1v1h-1zM197.3 162.1h1v1h-1zM235.4 187.5h1v1h-1zM253.3 157.6h1v1h-1zM250.0 132.7h1v1h-1zM234.0 153.1h1v1h-1zM180.6 182.3h1v1h-1zM191.2 142.8h1v1h-1zM221.9 181.9h1v1h-1zM264.4 164.4h1v1h-1zM274.9 154.4h1v1h-1zM241.2 177.1h1v1h-1zM276.7 167.2h1v1h-1zM232.7 172.7h1v1h-1zM211.8 189.4h1v1h-1zM190.4 172.0h1v1h-1zM242.3 190.8h1v1h-1zM166.8 155.1h1v1h-1zM205.0 137.6h1v1h-1zM142.1 169.9h1v1h-1zM254.5 146.9h1v1h-1zM188.3 164.5h1v1h-1zM194.4 202.1h1v1h-1zM150.7 185.6h1v1h-1zM260.2 188.3h1v1h-1zM178.9 161.4h1v1h-1zM235.9 154.7h1v1h-1zM182.2 177.3h1v1h-1zM141.2 144.0h1v1h-1zM191.6 181.0h1v1h-1zM168.1 166.1h1v1h-1zM160.2 178.5h1v1h-1zM154.0 188.4h1v1h-1zM212.4 178.3h1v1h-1zM154.3 138.3h1v1h-1zM147.7 172.1h1v1h-1zM180.0 198.2h1v1h-1zM180.4 170.0h1v1h-1zM234.8 183.4h1v1h-1zM191.9 136.2h1v1h-1zM227.3 169.7h1v1h-1zM168.8 144.6h1v1h-1zM268.3 184.8h1v1h-1zM257.2 174.9h1v1h-1zM205.7 200.5h1v1h-1zM173.0 184.7h1v1h-1zM167.5 141.7h1v1h-1zM271.1 179.0h1v1h-1zM250.5 180.3h1v1h-1zM219.9 188.1h1v1h-1zM265.3 164.5h1v1h-1zM221.2 144.0h1v1h-1zM211.9 166.4h1v1h-1zM238.0 167.5h1v1h-1zM219.2 180.4h1v1h-1zM160.5 186.0h1v1h-1zM273.9 159.0h1v1h-1zM142.0 188.6h1v1h-1zM220.2 164.8h1v1h-1zM276.4 136.0h1v1h-1zM149.3 143.1h1v1h-1zM275.5 147.6h1v1h-1zM271.4 174.4h1v1h-1zM226.5 152.0h1v1h-1zM249.7 149.7h1v1h-1zM253.0 177.6h1v1h-1zM249.5 158.5h1v1h-1zM272.5 178.6h1v1h-1zM225.2 139.1h1v1h-1zM244.6 151.1h1v1h-1zM159.6 191.0h1v1h-1zM183.5 154.5h1v1h-1zM143.9 153.9h1v1h-1zM156.0 188.2h1v1h-1zM177.9 162.1h1v1h-1zM238.8 132.8h1v1h-1zM171.1 196.1h1v1h-1zM258.2 159.0h1v1h-1zM266.7 149.8h1v1h-1zM157.4 175.8h1v1h-1zM169.8 169.3h1v1h-1zM179.0 139.1h1v1h-1zM263.5 188.5h1v1h-1zM277.8 131.6h1v1h-1zM192.8 138.1h1v1h-1zM270.4 148.4h1v1h-1zM189.7 156.1h1v1h-1zM245.6 177.4h1v1h-1zM205.2 195.9h1v1h-1zM161.1 143.9h1v1h-1zM182.2 150.8h1v1h-1zM198.9 150.1h1v1h-1zM178.9 196.0h1v1h-1zM231.8 183.5h1v1h-1zM167.7 168.3h1v1h-1zM208.1 136.9h1v1h-1zM235.9 170.4h1v1h-1zM200.5 158.3h1v1h-1zM157.4 180.5h1v1h-1zM223.0 133.3h1v1h-1zM222.6 187.0h1v1h-1zM273.4 143.9h1v1h-1zM170.3 175.3h1v1h-1zM144.1 146.4h1v1h-1zM169.6 141.6h1v1h-1zM238.8 145.3h1v1h-1zM217.6 184.6h1v1h-1zM144.4 158.7h1v1h-1zM141.2 164.2h1v1h-1zM246.6 192.1h1v1h-1zM199.9 162.6h1v1h-1zM160.3 187.6h1v1h-1zM223.9 189.7h1v1h-1zM160.5 186.2h1v1h-1zM269.1 136.4h1v1h-1zM154.8 160.3h1v1h-1zM196.3 200.2h1v1h-1zM174.2 154.6h1v1h-1zM142.1 131.9h1v1h-1zM179.0 176.8h1v1h-1zM270.8 192.2h1v1h-1zM157.5 167.7h1v1h-1zM182.8 179.0h1v1h-1zM220.1 132.6h1v1h-1zM196.9 199.2h1v1h-1zM191.1 139.7h1v1h-1zM199.3 197.9h1v1h-1zM174.0 185.7h1v1h-1zM188.0 179.0h1v1h-1zM232.3 149.5h1v1h-1zM145.6 191.7h1v1h-1zM253.3 138.0h1v1h-1zM248.6 189.4h1v1h-1zM235.4 196.9h1v1h-1zM232.9 186.1h1v1h-1zM255.7 140.4h1v1h-1zM204.1 149.1h1v1h-1zM270.2 136.7h1v1h-1zM229.0 157.1h1v1h-1zM188.8 152.2h1v1h-1zM158.9 168.7h1v1h-1zM151.2 195.7h1v1h-1zM231.9 171.1h1v1h-1zM168.2 132.6h1v1h-1zM179.6 162.7h1v1h-1zM207.3 188.8h1v1h-1zM277.0 146.6h1v1h-1zM262.9 180.4h1v1h-1zM265.5 135.5h1v1h-1zM269.8 189.3h1v1h-1zM161.0 196.3h1v1h-1zM151.9 150.8h1v1h-1zM146.4 168.2h1v1h-1zM188.6 148.8h1v1h-1zM145.9 149.4h1v1h-1zM272.1 180.6h1v1h-1zM195.3 147.9h1v1h-1zM181.7 140.2h1v1h-1zM277.4 186.1h1v1h-1zM204.5 191.7h1v1h-1zM216.6 173.5h1v1h-1zM274.0 149.0h1v1h-1zM276.8 142.8h1v1h-1zM253.6 174.3h1v1h-1zM231.5 194.1h1v1h-1zM187.6 134.7h1v1h-1zM275.1 189.7h1v1h-1zM207.9 172.6h1v1h-1zM225.3 158.8h1v1h-1zM175.6 137.7h1v1h-1zM201.7 145.4h1v1h-1zM239.4 130.3h1v1h-1zM210.7 159.1h1v1h-1zM246.3 185.5h1v1h-1zM145.7 142.6h1v1h-1zM235.5 147.3h1v1h-1zM250.2 187.7h1v1h-1zM261.0 155.3h1v1h-1zM270.2 161.5h1v1h-1zM259.2 198.2h1v1h-1zM162.3 161.7h1v1h-1zM231.9 174.0h1v1h-1zM149.4 137.3h1v1h-1zM149.3 137.1h1v1h-1zM171.7 150.5h1v1h-1zM221.5 185.0h1v1h-1zM184.9 184.7h1v1h-1zM213.2 182.0h1v1h-1zM214.7 181.7h1v1h-1zM156.1 151.2h1v1h-1zM175.6 132.7h1v1h-1zM195.5 183.1h1v1h-1zM238.9 136.1h1v1h-1zM190.7 148.5h1v1h-1zM185.3 129.3h1v1h-1zM181.0 199.7h1v1h-1zM140.0 162.5h1v1h-1zM225.9 181.4h1v1h-1zM196.8 172.4h1v1h-1zM189.7 188.5h1v1h-1zM214.8 153.4h1v1h-1zM143.2 137.6h1v1h-1zM175.3 167.5h1v1h-1zM169.6 152.9h1v1h-1zM195.6 159.7h1v1h-1zM195.9 165.1h1v1h-1zM151.4 130.2h1v1h-1zM198.4 178.1h1v1h-1zM256.7 180.8h1v1h-1zM249.0 171.2h1v1h-1zM155.6 160.2h1v1h-1zM178.2 187.6h1v1h-1zM276.5 133.5h1v1h-1zM204.7 143.0h1v1h-1zM232.2 180.2h1v1h-1zM157.3 159.7h1v1h-1zM165.8 146.9h1v1h-1zM221.8 186.2h1v1h-1zM247.0 131.3h1v1h-1zM205.9 131.1h1v1h-1zM201.7 201.1h1v1h-1zM203.4 176.5h1v1h-1zM266.5 164.0h1v1h-1zM272.4 190.5h1v1h-1zM192.5 201.4h1v1h-1zM146.5 150.1h1v1h-1zM144.0 186.1h1v1h-1zM199.6 134.7h1v1h-1zM172.1 202.1h1v1h-1zM236.5 151.2h1v1h-1zM158.6 134.2h1v1h-1zM259.2 133.6h1v1h-1zM253.5 162.2h1v1h-1zM236.5 193.3h1v1h-1zM228.6 176.4h1v1h-1zM185.9 179.4h1v1h-1zM150.6 142.8h1v1h-1zM245.3 201.7h1v1h-1zM210.4 200.7h1v1h-1zM214.9 190.1h1v1h-1zM272.5 179.0h1v1h-1zM211.9 183.1h1v1h-1zM264.6 201.8h1v1h-1zM181.4 185.8h1v1h-1zM242.8 175.1h1v1h-1zM258.7 178.3h1v1h-1zM156.9 169.0h1v1h-1zM151.4 191.2h1v1h-1zM211.8 160.2h1v1h-1zM169.0 189.2h1v1h-1zM211.6 169.7h1v1h-1zM206.1 153.1h1v1h-1zM158.9 201.6h1v1h-1zM148.4 144.0h1v1h-1zM236.7 191.1h1v1h-1zM185.2 179.8h1v1h-1zM267.2 172.1h1v1h-1zM238.3 196.1h1v1h-1zM145.2 185.9h1v1h-1zM228.3 169.6h1v1h-1zM260.2 141.9h1v1h-1zM231.4 129.1h1v1h-1zM272.4 137.5h1v1h-1zM151.8 173.0h1v1h-1zM159.6 157.4h1v1h-1zM209.4 195.6h1v1h-1zM150.4 168.2h1v1h-1zM225.9 172.6h1v1h-1zM204.7 155.8h1v1h-1zM236.1 150.4h1v1h-1zM196.9 189.8h1v1h-1zM259.9 199.4h1v1h-1zM167.9 188.4h1v1h-1zM221.7 156.7h1v1h-1zM153.2 164.6h1v1h-1zM219.0 151.9h1v1h-1zM149.7 148.9h1v1h-1zM176.8 174.1h1v1h-1zM156.6 140.5h1v1h-1zM225.0 142.7h1v1h-1zM210.7 194.3h1v1h-1zM195.0 196.6h1v1h-1zM153.1 143.1h1v1h-1zM139.4 173.8h1v1h-1zM145.2 146.2h1v1h-1zM276.6 200.0h1v1h-1zM189.8 130.7h1v1h-1zM174.2 179.6h1v1h-1zM276.1 134.7h1v1h-1zM192.9 153.1h1v1h-1zM249.4 176.3h1v1h-1zM139.7 174.9h1v1h-1zM235.3 131.5h1v1h-1zM200.6 172.2h1v1h-1zM192.1 157.8h1v1h-1zM142.5 135.3h1v1h-1zM271.5 200.1h1v1h-1zM140.3 179.3h1v1h-1zM159.6 145.8h1v1h-1zM259.9 162.3h1v1h-1zM270.1 185.6h1v1h-1zM166.6 174.2h1v1h-1zM201.9 187.9h1v1h-1zM266.9 147.2h1v1h-1zM179.3 185.8h1v1h-1zM178.7 173.3h1v1h-1zM230.0 145.3h1v1h-1zM270.9 196.5h1v1h-1zM166.5 174.5h1v1h-1zM271.2 168.8h1v1h-1z" fill="#2f7dbb" fill-opacity=".78"/><rect x="132.5" y="125.2" width="152.3" height="80.9" fill="none" stroke="#5a5a5a" stroke-width="0.6"/><rect x="132.5" y="222" width="152.3" height="81.2" fill="#fff"/><line x1="139.42" y1="303.2" x2="139.42" y2="305.09999999999997" stroke="#333" stroke-width="0.55"/><text x="139.42" y="310.8" font-size="6.2" font-family="Liberation Sans" fill="#222" text-anchor="middle">&#8722;0.50</text><line x1="156.73" y1="303.2" x2="156.73" y2="305.09999999999997" stroke="#333" stroke-width="0.55"/><text x="156.73" y="310.8" font-size="6.2" font-family="Liberation Sans" fill="#222" text-anchor="middle">&#8722;0.25</text><line x1="174.04" y1="303.2" x2="174.04" y2="305.09999999999997" stroke="#333" stroke-width="0.55"/><text x="174.04" y="310.8" font-size="6.2" font-family="Liberation Sans" fill="#222" text-anchor="middle">0.00</text><line x1="191.34" y1="303.2" x2="191.34" y2="305.09999999999997" stroke="#333" stroke-width="0.55"/><text x="191.34" y="310.8" font-size="6.2" font-family="Liberation Sans" fill="#222" text-anchor="middle">0.25</text><line x1="208.65" y1="303.2" x2="208.65" y2="305.09999999999997" stroke="#333" stroke-width="0.55"/><text x="208.65" y="310.8" font-size="6.2" font-family="Liberation Sans" fill="#222" text-anchor="middle">0.50</text><line x1="225.96" y1="303.2" x2="225.96" y2="305.09999999999997" stroke="#333" stroke-width="0.55"/><text x="225.96" y="310.8" font-size="6.2" font-family="Liberation Sans" fill="#222" text-anchor="middle">0.75</text><line x1="243.26" y1="303.2" x2="243.26" y2="305.09999999999997" stroke="#333" stroke-width="0.55"/><text x="243.26" y="310.8" font-size="6.2" font-family="Liberation Sans" fill="#222" text-anchor="middle">1.00</text><line x1="260.57" y1="303.2" x2="260.57" y2="305.09999999999997" stroke="#333" stroke-width="0.55"/><text x="260.57" y="310.8" font-size="6.2" font-family="Liberation Sans" fill="#222" text-anchor="middle">1.25</text><line x1="277.88" y1="303.2" x2="277.88" y2="305.09999999999997" stroke="#333" stroke-width="0.55"/><text x="277.88" y="310.8" font-size="6.2" font-family="Liberation Sans" fill="#222" text-anchor="middle">1.50</text><line x1="132.5" y1="303.20" x2="130.6" y2="303.20" stroke="#333" stroke-width="0.55"/><text x="129.5" y="305.10" font-size="6.2" font-family="Liberation Sans" fill="#222" text-anchor="end">0</text><line x1="132.5" y1="285.62" x2="130.6" y2="285.62" stroke="#333" stroke-width="0.55"/><text x="129.5" y="287.52" font-size="6.2" font-family="Liberation Sans" fill="#222" text-anchor="end">100</text><line x1="132.5" y1="268.05" x2="130.6" y2="268.05" stroke="#333" stroke-width="0.55"/><text x="129.5" y="269.95" font-size="6.2" font-family="Liberation Sans" fill="#222" text-anchor="end">200</text><line x1="132.5" y1="250.47" x2="130.6" y2="250.47" stroke="#333" stroke-width="0.55"/><text x="129.5" y="252.37" font-size="6.2" font-family="Liberation Sans" fill="#222" text-anchor="end">300</text><line x1="132.5" y1="232.90" x2="130.6" y2="232.90" stroke="#333" stroke-width="0.55"/><text x="129.5" y="234.80" font-size="6.2" font-family="Liberation Sans" fill="#222" text-anchor="end">400</text><text x="208.65" y="218.80" font-size="7.4" font-family="Liberation Sans" fill="#222" text-anchor="middle">Uniform data histogram</text><path d="M139.42 303.20V231.14H144.96V303.20zM144.96 303.20V233.78H150.50V303.20zM150.50 303.20V233.78H156.04V303.20zM156.04 303.20V230.26H161.58V303.20zM161.58 303.20V230.26H167.11V303.20zM167.11 303.20V232.90H172.65V303.20zM172.65 303.20V237.82H178.19V303.20zM178.19 303.20V239.58H183.73V303.20zM183.73 303.20V233.25H189.27V303.20zM189.27 303.20V232.55H194.80V303.20zM194.80 303.20V233.78H200.34V303.20zM200.34 303.20V232.02H205.88V303.20zM205.88 303.20V227.98H211.42V303.20zM211.42 303.20V236.06H216.96V303.20zM216.96 303.20V225.87H222.50V303.20zM222.50 303.20V234.65H228.03V303.20zM228.03 303.20V232.55H233.57V303.20zM233.57 303.20V235.01H239.11V303.20zM239.11 303.20V229.03H244.65V303.20zM244.65 303.20V225.87H250.19V303.20zM250.19 303.20V234.30H255.72V303.20zM255.72 303.20V231.14H261.26V303.20zM261.26 303.20V231.14H266.80V303.20zM266.80 303.20V234.65H272.34V303.20zM272.34 303.20V235.53H277.88V303.20z" fill="#1f77b4"/><rect x="132.5" y="222" width="152.3" height="81.2" fill="none" stroke="#5a5a5a" stroke-width="0.6"/></svg><div style="position:absolute;left:108.4px;top:326.4px;width:434.4px;height:18.600000000000023px;background:#f7f7f7;border:0.6px solid #cfcfcf;border-radius:1px"></div><div style="position:absolute;left:75.3px;top:331.4px;font-family:'Liberation Sans',sans-serif;font-size:6.6px;line-height:6.6px;color:#4a5068;white-space:pre;font-family:'Liberation Mono',monospace;letter-spacing:-0.2px">In [ ]:</div><div style="position:absolute;left:111.5px;top:330.4px;font-family:'Liberation Mono',monospace;font-size:7px;line-height:9.0px;color:#222;white-space:pre"><div><span class="jc">## log-normal distribution</span></div></div></div><div style="position:absolute;left:594.5px;top:82.7px;width:5.5px;height:262px;background:#f1f1f1"></div><div style="position:absolute;left:595.2px;top:213.4px;width:4.2px;height:30.0px;background:#c1c1c1"></div><div style="position:absolute;left:595.2px;top:83.5px;font-family:'Liberation Sans',sans-serif;font-size:4px;line-height:4px;color:#777;white-space:pre;">&#9652;</div><div style="position:absolute;left:215.85px;top:188.25px;width:19.5px;height:19.5px;border-radius:50%;background:radial-gradient(circle closest-side,rgba(90,120,235,0.59) 0%,rgba(95,125,235,0.47) 45%,rgba(100,130,240,0.21) 75%,rgba(100,130,240,0) 100%)"></div><div style="position:absolute;left:0px;top:336.7px;width:600px;height:1.3px;background:#444"></div><div style="position:absolute;left:575px;top:326px;font-family:'Liberation Sans',sans-serif;font-size:6px;line-height:6px;color:rgba(255,255,255,.85);white-space:pre;font-weight:bold;text-shadow:0 0 1px rgba(0,0,0,.35)">Udemy</div></div><div style="position:absolute;left:1200px;top:673.3px;width:600px;height:338px;overflow:hidden;background:#f0f0f0;will-change:transform"><div style="position:absolute;left:0px;top:0px;width:600px;height:11.4px;background:#7649ad"></div><div style="position:absolute;left:0px;top:0px;width:600px;height:0.7px;background:#6a5a7a"></div><div style="position:absolute;left:2.5px;top:1.4px;width:75px;height:10.2px;background:#fff;border-radius:2.5px 2.5px 0 0"></div><div style="position:absolute;left:6.5px;top:4.2px;width:4.5px;height:4.5px;background:#f0a040;border-radius:50%;opacity:.85"></div><div style="position:absolute;left:14px;top:4.6px;font-family:'Liberation Sans',sans-serif;font-size:3.9px;line-height:3.9px;color:#555;white-space:pre;">stats_descriptives_distributions</div><div style="position:absolute;left:70.5px;top:3.6px;font-family:'Liberation Sans',sans-serif;font-size:4.8px;line-height:4.8px;color:#333;white-space:pre;">&#10005;</div><div style="position:absolute;left:82.2px;top:2.4px;font-family:'Liberation Sans',sans-serif;font-size:7px;line-height:7px;color:#e8dcf8;white-space:pre;font-weight:bold">+</div><svg style="position:absolute;left:555px;top:0" width="45" height="11" viewBox="0 0 45 11"><path d="M7.2 5.2h3.4" stroke="#d8c8ec" stroke-width="0.6"/><rect x="21.7" y="3.6" width="3" height="3" fill="none" stroke="#e0d4ee" stroke-width="0.55"/><path d="M35.6 3.6l3 3M38.6 3.6l-3 3" stroke="#e8dcf4" stroke-width="0.6"/></svg><div style="position:absolute;left:0px;top:11.4px;width:600px;height:11.2px;background:#fff"></div><svg style="position:absolute;left:0;top:11.4px" width="44" height="11" viewBox="0 0 44 11"><path d="M9.6 5.4H4.6M6.8 3.2L4.6 5.4 6.8 7.6" fill="none" stroke="#b0b0b0" stroke-width="0.8"/><path d="M14.6 5.4H19.6M17.4 3.2L19.6 5.4 17.4 7.6" fill="none" stroke="#b0b0b0" stroke-width="0.8"/><path d="M29.6 4.2A2.6 2.6 0 1 0 29.8 6.4" fill="none" stroke="#555" stroke-width="0.9"/><path d="M28.4 2.6L30.4 2.8 30.1 4.8z" fill="#555"/><circle cx="38.6" cy="5.4" r="2.3" fill="none" stroke="#666" stroke-width="0.7"/><path d="M38.6 4.6v2.2" stroke="#666" stroke-width="0.6"/></svg><div style="position:absolute;left:44px;top:15.0px;font-family:'Liberation Sans',sans-serif;font-size:4.3px;line-height:4.3px;color:#3a3a3a;white-space:pre;letter-spacing:-0.04px">localhost:8888/notebooks/Dropbox%20(Personal)/classes/udemy/statsML/descriptives/stats_descriptives_distributions.ipynb</div><svg style="position:absolute;left:493px;top:14px" width="6" height="6" viewBox="0 0 6 6"><circle cx="2.5" cy="2.5" r="1.8" fill="none" stroke="#777" stroke-width="0.7"/><path d="M3.8 3.8L5.4 5.4" stroke="#777" stroke-width="0.8"/></svg><svg style="position:absolute;left:503.5px;top:14px" width="6" height="6" viewBox="0 0 6 6"><path d="M3 0.5l0.75 1.6 1.75 0.2-1.3 1.2 0.35 1.75L3 4.4 1.45 5.25 1.8 3.5 0.5 2.3l1.75-0.2z" fill="none" stroke="#777" stroke-width="0.5"/></svg><div style="position:absolute;left:516.3px;top:14.2px;width:5px;height:5.6px;border:1.3px solid #d22;border-radius:50%"></div><div style="position:absolute;left:527px;top:14.5px;width:3.5px;height:5px;background:#c90;opacity:.6"></div><div style="position:absolute;left:536.5px;top:14.6px;width:5px;height:5px;border:0.7px solid #999"></div><div style="position:absolute;left:546.5px;top:14.5px;width:5px;height:5.3px;background:#888;opacity:.7"></div><div style="position:absolute;left:557px;top:15px;width:4px;height:4px;background:#aaa;opacity:.4;border-radius:50%"></div><div style="position:absolute;left:567.3px;top:15.8px;width:4.5px;height:3.5px;background:#222;border-radius:1.5px 1.5px 0 0"></div><div style="position:absolute;left:580.5px;top:14px;width:6.5px;height:6.8px;background:radial-gradient(circle at 60% 40%,#f0b080,#a05030 60%,#402010);border-radius:50%"></div><div style="position:absolute;left:593.6px;top:14.3px;width:1px;height:1px;background:#444"></div><div style="position:absolute;left:593.6px;top:16.4px;width:1px;height:1px;background:#444"></div><div style="position:absolute;left:593.6px;top:18.5px;width:1px;height:1px;background:#444"></div><div style="position:absolute;left:0px;top:22.6px;width:600px;height:60.1px;background:#fff"></div><div style="position:absolute;left:0px;top:47.1px;width:600px;height:0.6px;background:#e2e2e2"></div><svg style="position:absolute;left:44.5px;top:25px" width="14" height="17" viewBox="0 0 14 17"><path d="M1.6 6.6 Q2.2 2.6 7 2.4 Q11.6 2.6 12.2 6.2 Q10.6 4.2 7 4.1 Q3.4 4.2 1.6 6.6Z" fill="#f37726"/><path d="M1.6 10.2 Q2.2 14.4 7 14.6 Q11.6 14.4 12.2 10.6 Q10.6 12.8 7 12.9 Q3.4 12.8 1.6 10.2Z" fill="#f37726"/><circle cx="11.8" cy="1.6" r="0.9" fill="#767677"/><circle cx="2.2" cy="15.3" r="1" fill="#767677"/><circle cx="2.2" cy="2.6" r="0.6" fill="#616262"/></svg><div style="position:absolute;left:60.8px;top:26.0px;font-family:'Liberation Sans',sans-serif;font-size:13.0px;line-height:13.0px;color:#4e4e4e;white-space:pre;letter-spacing:0.15px">jupyter</div><div style="position:absolute;left:111px;top:27.6px;font-family:'Liberation Sans',sans-serif;font-size:10.6px;line-height:10.6px;color:#000;white-space:pre;letter-spacing:-0.08px">stats_descriptives_distributions</div><div style="position:absolute;left:258.3px;top:29.5px;font-family:'Liberation Sans',sans-serif;font-size:7.35px;line-height:7.35px;color:#000;white-space:pre;letter-spacing:-0.1px">Last Checkpoint: Last Thursday at 4:57 PM</div><div style="position:absolute;left:399.3px;top:29.5px;font-family:'Liberation Sans',sans-serif;font-size:7.35px;line-height:7.35px;color:#000;white-space:pre;letter-spacing:-0.1px">(autosaved)</div><svg style="position:absolute;left:494.5px;top:25.5px" width="16" height="16" viewBox="0 0 16 16"><path d="M7.8 0.8C4.6 0.8 4.8 2.2 4.8 2.2V3.8H7.9V4.3H3.4C3.4 4.3 1.2 4 1.2 7.6 1.2 11.1 3.1 11 3.1 11H4.3V9.3C4.3 9.3 4.2 7.4 6.2 7.4H9.4C9.4 7.4 11.2 7.4 11.2 5.6V2.7C11.2 2.7 11.5 0.8 7.8 0.8Z" fill="#3b74a6"/><path d="M8.2 15.2C11.4 15.2 11.2 13.8 11.2 13.8V12.2H8.1V11.7H12.6C12.6 11.7 14.8 12 14.8 8.4 14.8 4.9 12.9 5 12.9 5H11.7V6.7C11.7 6.7 11.8 8.6 9.8 8.6H6.6C6.6 8.6 4.8 8.6 4.8 10.4V13.3C4.8 13.3 4.5 15.2 8.2 15.2Z" fill="#f2d04a"/></svg><div style="position:absolute;left:522.2px;top:25.8px;width:32.5px;height:15.6px;border:0.7px solid #ccc;border-radius:1px;background:#fff"></div><div style="position:absolute;left:528.8px;top:30.4px;font-family:'Liberation Sans',sans-serif;font-size:6px;line-height:6px;color:#333;white-space:pre;">Logout</div><div style="position:absolute;left:43.2px;top:47.7px;width:514px;height:17px;background:#f8f8f8;border:0.6px solid #e4e4e4;border-top:none"></div><div style="position:absolute;left:51.8px;top:52.6px;font-family:'Liberation Sans',sans-serif;font-size:6.6px;line-height:6.6px;color:#666;white-space:pre;">File</div><div style="position:absolute;left:79.8px;top:52.6px;font-family:'Liberation Sans',sans-serif;font-size:6.6px;line-height:6.6px;color:#666;white-space:pre;">Edit</div><div style="position:absolute;left:108.5px;top:52.6px;font-family:'Liberation Sans',sans-serif;font-size:6.6px;line-height:6.6px;color:#666;white-space:pre;">View</div><div style="position:absolute;left:139.6px;top:52.6px;font-family:'Liberation Sans',sans-serif;font-size:6.6px;line-height:6.6px;color:#666;white-space:pre;">Insert</div><div style="position:absolute;left:174px;top:52.6px;font-family:'Liberation Sans',sans-serif;font-size:6.6px;line-height:6.6px;color:#666;white-space:pre;">Cell</div><div style="position:absolute;left:202.5px;top:52.6px;font-family:'Liberation Sans',sans-serif;font-size:6.6px;line-height:6.6px;color:#666;white-space:pre;">Kernel</div><div style="position:absolute;left:239.2px;top:52.6px;font-family:'Liberation Sans',sans-serif;font-size:6.6px;line-height:6.6px;color:#666;white-space:pre;">Widgets</div><div style="position:absolute;left:281.5px;top:52.6px;font-family:'Liberation Sans',sans-serif;font-size:6.6px;line-height:6.6px;color:#666;white-space:pre;">Help</div><div style="position:absolute;left:463.3px;top:50.2px;width:28.4px;height:11.2px;border:0.6px solid #ddd;background:#fff"></div><div style="position:absolute;left:466.5px;top:52.9px;font-family:'Liberation Sans',sans-serif;font-size:6px;line-height:6px;color:#888;white-space:pre;">Trusted</div><svg style="position:absolute;left:498.5px;top:52px" width="8" height="8" viewBox="0 0 8 8"><path d="M1.2 6.8l0.5-1.9 3.9-3.9 1.4 1.4-3.9 3.9z" fill="#555"/></svg><div style="position:absolute;left:511.3px;top:51.4px;width:0.9px;height:9.3px;background:#777"></div><div style="position:absolute;left:514.5px;top:52.4px;font-family:'Liberation Sans',sans-serif;font-size:6.9px;line-height:6.9px;color:#777;white-space:pre;">Python 3</div><div style="position:absolute;left:547.8px;top:52.8px;width:6.1px;height:6.1px;border:0.9px solid #555;border-radius:50%"></div><div style="position:absolute;left:0px;top:64.7px;width:600px;height:18px;background:#fff"></div><div style="position:absolute;left:43.3px;top:67.6px;width:15.0px;height:12.6px;border:0.6px solid #ccc;border-radius:1.2px;background:#fff"></div><div style="position:absolute;left:62.2px;top:67.6px;width:14.5px;height:12.6px;border:0.6px solid #ccc;border-radius:1.2px;background:#fff"></div><div style="position:absolute;left:80px;top:67.6px;width:49.5px;height:12.6px;border:0.6px solid #ccc;border-radius:1.2px;background:#fff"></div><div style="position:absolute;left:96.7px;top:67.6px;width:0.6px;height:12.6px;background:#ccc"></div><div style="position:absolute;left:112.5px;top:67.6px;width:0.6px;height:12.6px;background:#ccc"></div><div style="position:absolute;left:132.5px;top:67.6px;width:31.80000000000001px;height:12.6px;border:0.6px solid #ccc;border-radius:1.2px;background:#fff"></div><div style="position:absolute;left:148.5px;top:67.6px;width:0.6px;height:12.6px;background:#ccc"></div><div style="position:absolute;left:167.5px;top:67.6px;width:76.5px;height:12.6px;border:0.6px solid #ccc;border-radius:1.2px;background:#fff"></div><div style="position:absolute;left:197.5px;top:67.6px;width:0.6px;height:12.6px;background:#ccc"></div><div style="position:absolute;left:212.7px;top:67.6px;width:0.6px;height:12.6px;background:#ccc"></div><div style="position:absolute;left:228.5px;top:67.6px;width:0.6px;height:12.6px;background:#ccc"></div><div style="position:absolute;left:246.5px;top:67.6px;width:60.0px;height:12.6px;border:0.6px solid #ccc;border-radius:1.2px;background:#fff"></div><div style="position:absolute;left:311px;top:67.6px;width:17.5px;height:12.6px;border:0.6px solid #ccc;border-radius:1.2px;background:#fff"></div><svg style="position:absolute;left:0;top:0" width="600" height="90" viewBox="0 0 600 90"><path d="M47.9 70.9h5.4l1.3 1.3v5.4h-6.7z" fill="none" stroke="#777" stroke-width="0.9"/><rect x="49.4" y="71.2" width="3.2" height="1.9" fill="#777"/><rect x="49.2" y="74.8" width="4" height="2.4" fill="#777"/><path d="M69.45 70.9v6M66.45 73.9h6" stroke="#222" stroke-width="1.45"/><g stroke="#666" stroke-width="0.8" fill="none"><circle cx="85.4" cy="72.2" r="1.1"/><circle cx="85.4" cy="75.7" r="1.1"/><path d="M86.4 72.7L91.2 75.9M86.4 75.2L91.2 71.9"/></g><g stroke="#555" stroke-width="0.8" fill="#fff"><rect x="101.6" y="70.6" width="4.6" height="4.8" rx=".6"/><rect x="103.3" y="72.4" width="4.6" height="4.8" rx=".6"/></g><rect x="118.2" y="70.8" width="4.4" height="5.6" fill="#444"/><rect x="119.9" y="73" width="4.2" height="4.6" fill="#fff" stroke="#444" stroke-width="0.9"/><path d="M140.5 70.6l-3 3h2.1v3.6h1.8v-3.6h2.1z" fill="#222"/><path d="M156.4 77.2l-3-3h2.1v-3.6h1.8v3.6h2.1z" fill="#222"/><path d="M172.3 71.2v5.4l3.2-2.7z" fill="#333"/><rect x="175.6" y="71.2" width="1" height="5.4" fill="#333"/><rect x="202" y="70.9" width="6" height="6" fill="#222"/><path d="M223.2 72.4A3 3 0 1 0 223.6 75.6" fill="none" stroke="#333" stroke-width="1.2"/><path d="M221.6 70.6l2.8 0.2-0.4 2.9z" fill="#333"/><path d="M232.6 71.1v5.6l3.1-2.8zM235.7 71.1v5.6l3.1-2.8z" fill="#222"/><path d="M299.6 72.6h3l-1.5 2.2z" fill="#333"/><rect x="316" y="71.6" width="7.6" height="4.8" fill="none" stroke="#444" stroke-width="0.9"/><path d="M317.6 74.8h4.4" stroke="#444" stroke-width="0.8"/><path d="M317.4 73h.8M319.2 73h.8M321 73h.8" stroke="#444" stroke-width="0.7"/></svg><div style="position:absolute;left:179.8px;top:70.3px;font-family:'Liberation Sans',sans-serif;font-size:7px;line-height:7px;color:#444;white-space:pre;">Run</div><div style="position:absolute;left:249px;top:70.9px;font-family:'Liberation Sans',sans-serif;font-size:6.4px;line-height:6.4px;color:#555;white-space:pre;">Code</div><div style="position:absolute;left:0px;top:82.7px;width:600px;height:262px;background:#eeeeee"></div><div style="position:absolute;left:0px;top:82.7px;width:600px;height:3px;background:linear-gradient(#d8d8d8,#eeeeee)"></div><div style="position:absolute;left:40px;top:82.7px;width:514.5px;height:262px;background:#fff;box-shadow:0 0 2px rgba(0,0,0,.12)"></div><div style="position:absolute;left:0;top:0;width:600px;height:337px;clip-path:inset(82.7px 0 0 0)"><svg style="position:absolute;left:0;top:0" width="600" height="337" viewBox="0 0 600 337"><path d="M135 92.9V70H174.5V86.3H183.8V89.5H188V91.3H196V91.6H205V92.1H215V92.3H230V92.9z" fill="#1f77b4"/><path d="M129.3 40V92.9H251.5V40" fill="none" stroke="#5a5a5a" stroke-width="0.6"/><line x1="131.5" y1="92.9" x2="131.5" y2="94.8" stroke="#333" stroke-width="0.55"/><text x="131.5" y="100.3" font-size="5.3" font-family="Liberation Sans" fill="#222" text-anchor="middle">0</text><line x1="157" y1="92.9" x2="157" y2="94.8" stroke="#333" stroke-width="0.55"/><text x="157" y="100.3" font-size="5.3" font-family="Liberation Sans" fill="#222" text-anchor="middle">200</text><line x1="182.5" y1="92.9" x2="182.5" y2="94.8" stroke="#333" stroke-width="0.55"/><text x="182.5" y="100.3" font-size="5.3" font-family="Liberation Sans" fill="#222" text-anchor="middle">400</text><line x1="209" y1="92.9" x2="209" y2="94.8" stroke="#333" stroke-width="0.55"/><text x="209" y="100.3" font-size="5.3" font-family="Liberation Sans" fill="#222" text-anchor="middle">600</text><line x1="234.5" y1="92.9" x2="234.5" y2="94.8" stroke="#333" stroke-width="0.55"/><text x="234.5" y="100.3" font-size="5.3" font-family="Liberation Sans" fill="#222" text-anchor="middle">800</text><line x1="129.3" y1="92.4" x2="127.4" y2="92.4" stroke="#333" stroke-width="0.55"/><text x="126" y="94.5" font-size="5.3" font-family="Liberation Sans" fill="#222" text-anchor="end">0</text></svg><div style="position:absolute;left:47.8px;top:111.7px;width:498px;height:139.6px;border:0.7px solid #66bb6a"></div><div style="position:absolute;left:48px;top:111.7px;width:3.2px;height:139.6px;background:#66bb6a"></div><div style="position:absolute;left:108.4px;top:116px;width:434.4px;height:132.6px;background:#f7f7f7;border:0.6px solid #cfcfcf;border-radius:1px"></div><div style="position:absolute;left:75.3px;top:121.6px;font-family:'Liberation Sans',sans-serif;font-size:6.6px;line-height:6.6px;color:#4a5068;white-space:pre;font-family:'Liberation Mono',monospace;letter-spacing:-0.2px">In [ ]:</div><div style="position:absolute;left:124.7px;top:119.8px;width:8.6px;height:8.4px;background:#d4dcf0"></div><div style="position:absolute;left:111.5px;top:120.9px;font-family:'Liberation Mono',monospace;font-size:7px;line-height:9.0px;color:#222;white-space:pre"><div><span class="jc">## binomial</span></div><div>&#8203;</div><div><span class="jc"># a binomial distribution is the probability of K heads in N coin tosses,</span></div><div><span class="jc"># given a probability of p heads (e.g., .5 is a fair coin).</span></div><div>&#8203;</div><div><span class="jv">n </span><span class="jo">=</span><span class="jv"> </span><span class="jn">10</span><span class="jv"> </span><span class="jc"># number on coin tosses</span></div><div><span class="jv">p </span><span class="jo">=</span><span class="jv"> </span><span class="jn">.5</span><span class="jv"> </span><span class="jc"># probability of heads</span></div><div>&#8203;</div><div><span class="jv">x </span><span class="jo">=</span><span class="jv"> </span><span class="jb">range</span><span class="jv">(n</span><span class="jo">+</span><span class="jn">2</span><span class="jv">)</span></div><div><span class="jv">bindist </span><span class="jo">=</span><span class="jv"> stats.binom.pmf(x,n,p)</span></div><div>&#8203;</div><div><span class="jv">plt.bar(x,bindist)</span></div><div><span class="jv">plt.title(</span><span class="js">&#x27;Binomial distribution (n=%s, p=%g)&#x27;</span><span class="jo">%</span><span class="jv">(n,p))</span></div><div><span class="jv">plt.show()</span></div></div><div style="position:absolute;left:108.4px;top:255.8px;width:434.4px;height:89.19999999999999px;background:#f7f7f7;border:0.6px solid #cfcfcf;border-radius:1px"></div><div style="position:absolute;left:75.3px;top:261.8px;font-family:'Liberation Sans',sans-serif;font-size:6.6px;line-height:6.6px;color:#4a5068;white-space:pre;font-family:'Liberation Mono',monospace;letter-spacing:-0.2px">In [ ]:</div><div style="position:absolute;left:111.5px;top:261.0px;font-family:'Liberation Mono',monospace;font-size:7px;line-height:9.0px;color:#222;white-space:pre"><div><span class="jc">## t</span></div><div>&#8203;</div><div><span class="jv">x  </span><span class="jo">=</span><span class="jv"> np.linspace(</span><span class="jo">-</span><span class="jn">4</span><span class="jv">,</span><span class="jn">4</span><span class="jv">,</span><span class="jn">1001</span><span class="jv">)</span></div><div><span class="jv">df </span><span class="jo">=</span><span class="jv"> </span><span class="jn">200</span></div><div><span class="jv">t  </span><span class="jo">=</span><span class="jv"> stats.t.pdf(x,df)</span></div><div>&#8203;</div><div><span class="jv">plt.plot(x,t)</span></div><div><span class="jv">plt.xlabel(</span><span class="js">&#x27;t-value&#x27;</span><span class="jv">)</span></div><div><span class="jv">plt.ylabel(</span><span class="js">&#x27;P(t | H$_0$)&#x27;</span><span class="jv">)</span></div></div></div><div style="position:absolute;left:594.5px;top:82.7px;width:5.5px;height:262px;background:#f1f1f1"></div><div style="position:absolute;left:595.2px;top:280.4px;width:4.2px;height:25.0px;background:#c1c1c1"></div><div style="position:absolute;left:595.2px;top:83.5px;font-family:'Liberation Sans',sans-serif;font-size:4px;line-height:4px;color:#777;white-space:pre;">&#9652;</div><div style="position:absolute;left:187.16px;top:133.86000000000004px;width:17.68px;height:17.68px;border-radius:50%;background:radial-gradient(circle closest-side,rgba(90,120,235,0.43) 0%,rgba(95,125,235,0.35) 45%,rgba(100,130,240,0.15) 75%,rgba(100,130,240,0) 100%)"></div><div style="position:absolute;left:0px;top:336.7px;width:600px;height:1.3px;background:#444"></div><div style="position:absolute;left:575px;top:326px;font-family:'Liberation Sans',sans-serif;font-size:6px;line-height:6px;color:rgba(255,255,255,.85);white-space:pre;font-weight:bold;text-shadow:0 0 1px rgba(0,0,0,.35)">Udemy</div></div></body></html>
